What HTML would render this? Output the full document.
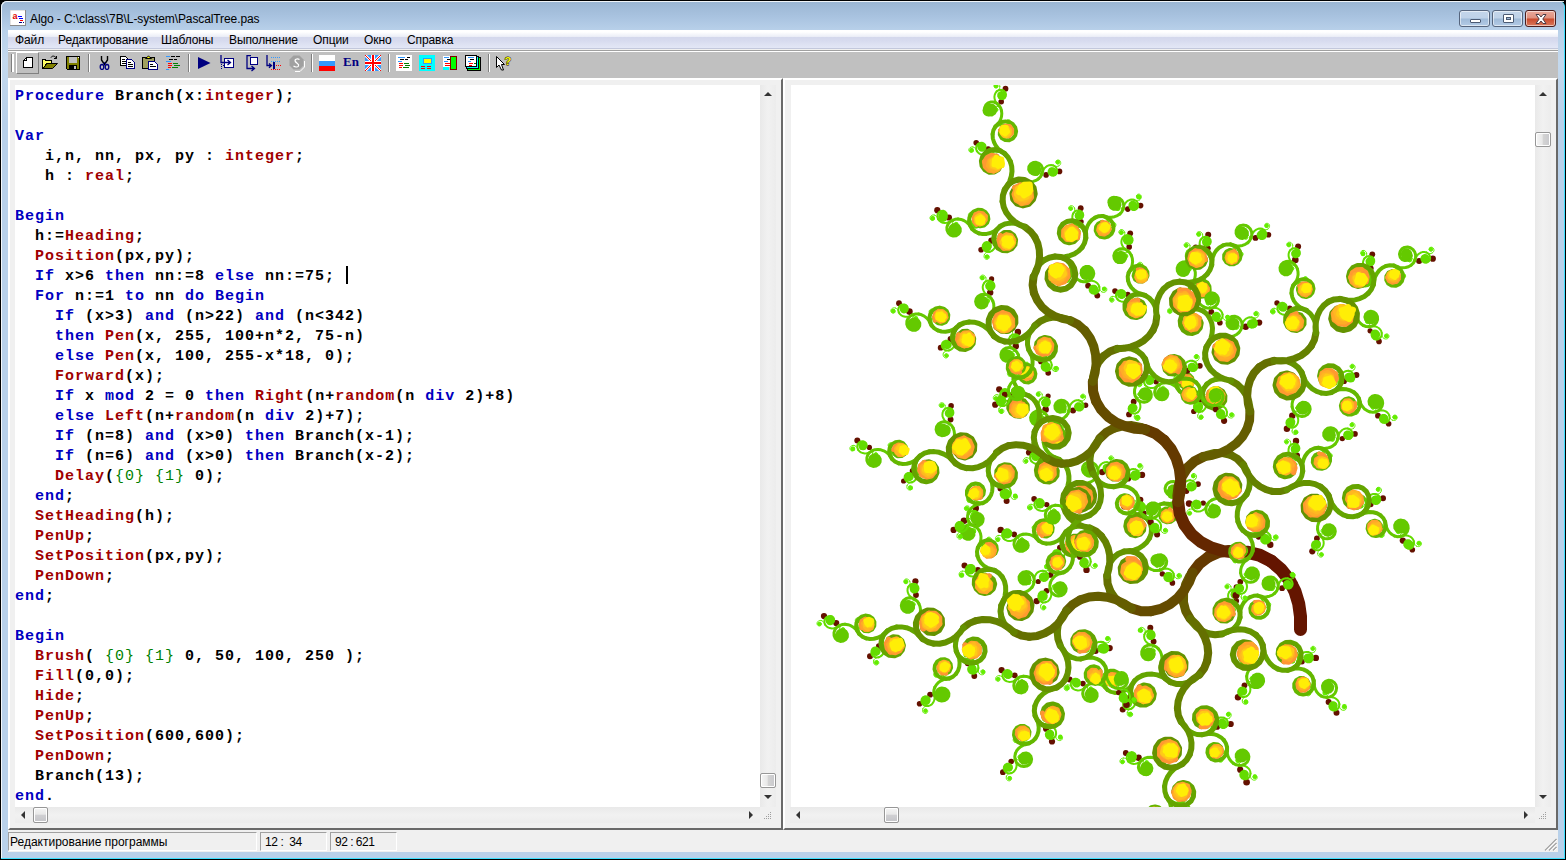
<!DOCTYPE html>
<html lang="ru"><head><meta charset="utf-8"><title>Algo</title>
<style>
html,body{margin:0;padding:0}
body{width:1566px;height:860px;overflow:hidden;background:#000;position:relative;font-family:"Liberation Sans",sans-serif;font-size:12px;color:#000}
.abs,#win *{position:absolute;box-sizing:border-box}
#win{position:absolute;left:0;top:0;width:1566px;height:860px;overflow:hidden}
#frame{left:1px;top:1px;width:1564px;height:858px;background:#b9d1ea;border-radius:6px 6px 0 0;border-right:1px solid #3ee0ff;border-bottom:1px solid #3ee0ff}
#frame:before{content:"";position:absolute;left:0;top:0;right:0;height:120px;border-radius:6px 6px 0 0;background:linear-gradient(#9ab5d2 0,#a9c3e0 16px,#b9d1ea 30px,#c4d9ee 60px,#b9d1ea 120px)}
#hl{left:1px;top:1px;width:1563px;height:857px;border-left:1px solid #fff;border-top:1px solid #fff;border-radius:6px 0 0 0;opacity:.85}
#title{left:30px;top:10px;height:18px;line-height:18px;font-size:12px;white-space:nowrap;letter-spacing:-.1px}
#client{left:8px;top:30px;width:1550px;height:822px;background:#f0f0f0}
#menu{left:0;top:0;width:1550px;height:20px;background:linear-gradient(#fff 0,#fff 2px,#e9ecf6 7px,#d4d8ec 7px,#d6daee 10px,#e3e7f6 18px,#c3c8dc 18px,#c3c8dc 19px,#f0f0f0 19px)}
#menu span{top:0;height:20px;line-height:20px;white-space:nowrap;letter-spacing:-.1px}
#tb{left:0;top:20px;width:1550px;height:28px;background:#c0c0c0;border-top:1px solid #a0a0a0;box-shadow:inset 0 1px 0 #fff}
.pane{background:#f0f0f0;border:2px solid;border-color:#fff #696969 #696969 #fff}
.pane:after{content:"";position:absolute;right:-2px;bottom:-2px;top:-2px;width:1px}
#lp{left:0;top:48px;width:775px;height:752px}
#rp{left:775px;top:48px;width:775px;height:752px}
.ed{left:5px;top:5px;width:745px;height:722px;background:#fff;overflow:hidden}
.vs{left:750px;top:5px;width:16px;height:722px;background:linear-gradient(to right,#e9e9e9,#f1f1f1 8px,#ececec)}
.hs{left:5px;top:727px;width:745px;height:16px;background:linear-gradient(#e9e9e9,#f1f1f1 8px,#ececec)}
.thumb{border:1px solid #979797;border-radius:2px;background:linear-gradient(to right,#f5f5f5,#e8e8e8 45%,#d4d4d4 50%,#c8c8cc);box-shadow:inset 0 0 0 1px #fff}
.thumbh{border:1px solid #979797;border-radius:2px;background:linear-gradient(#f5f5f5,#e8e8e8 45%,#d0d0d3 50%,#c4c4c8);box-shadow:inset 0 0 0 1px #fff}
.ar{width:0;height:0;border:4px solid transparent}
#code{left:0;top:2px;width:745px;font-family:"Liberation Mono",monospace;font-weight:bold;font-size:15px;letter-spacing:1px;white-space:pre;color:#000}
#code .ln{position:static;height:20px;line-height:20px}
#code b{position:static;color:#0000c0;font-weight:bold}
#code u{position:static;color:#a00000;text-decoration:none}
#code i{position:static;color:#008000;font-style:normal;font-weight:normal}
#caret{left:331px;top:181px;width:2px;height:18px;background:#000}
.tree{left:-1px;top:0}
#sb{left:0;top:800px;width:1550px;height:22px;background:#f0f0f0}
.sp{top:2px;height:19px;border:1px solid;border-color:#a0a0a0 #fff #fff #a0a0a0;line-height:19px;white-space:nowrap;overflow:hidden}
.cb{top:10px;width:31px;height:17px;border:1px solid #56657d;border-radius:3px;box-shadow:inset 0 0 0 1px rgba(255,255,255,.55);background:linear-gradient(#c3d5ea 0,#bfd2e8 48%,#9fbad8 52%,#b3cbe6 100%)}
#bx{border-color:#4a1d1d;background:linear-gradient(#e9a99b 0,#df8f7d 48%,#c94a2c 52%,#d9785c 100%)}
.sep{top:4px;width:2px;height:20px;border-left:1px solid #808080;border-right:1px solid #fff}
.ic{top:5px;width:16px;height:16px}
</style></head><body>
<div id="win">
<div id="frame"></div><div id="hl"></div>
<svg class="abs" style="left:10px;top:10px" width="16" height="16" viewBox="0 0 16 16"><rect x="0" y="0" width="16" height="16" fill="#fff" stroke="#c8c8c8"/><path d="M0 15.5H16M15.5 0V16" stroke="#8a8a8a"/><text x="2.5" y="8.5" font-family="Liberation Sans,sans-serif" font-size="9" font-weight="bold" fill="#e00000">a</text><path d="M8 6.5h4M9 8.5h4M10 10.5h3" stroke="#0000ff"/><path d="M10 10.5h3" stroke="#f00"/><path d="M9 12.5h3M13 12.5h1" stroke="#000080"/></svg>
<div id="title">Algo - C:\class\7B\L-system\PascalTree.pas</div>
<div class="cb" style="left:1459px"><div style="left:10px;top:8px;width:11px;height:4px;background:#fff;border:1px solid #4b5a73;border-radius:1px"></div></div>
<div class="cb" style="left:1492px"><div style="left:10px;top:3px;width:11px;height:9px;background:#fff;border:1px solid #4b5a73;border-radius:1px"></div><div style="left:13px;top:6px;width:5px;height:3px;background:#9db7d6;border:1px solid #4b5a73"></div></div>
<div class="cb" id="bx" style="left:1525px"><svg style="left:8px;top:2px" width="14" height="12" viewBox="0 0 14 12"><path d="M2 1.5L5 1.5L7 4L9 1.5L12 1.5L8.8 6L12 10.5L9 10.5L7 8L5 10.5L2 10.5L5.2 6Z" fill="#fff" stroke="#4b3b45" stroke-width="1"/></svg></div>
<div id="client">
 <div id="menu"><span style="left:7px">Файл</span><span style="left:50px">Редактирование</span><span style="left:153px">Шаблоны</span><span style="left:221px">Выполнение</span><span style="left:305px">Опции</span><span style="left:356px">Окно</span><span style="left:399px">Справка</span></div>
 <div id="tb"><div style="left:3px;top:3px;width:3px;height:18px;border-left:1px solid #808080;background:#fff"></div>
<div style="left:8px;top:1px;width:23px;height:22px;border:1px solid;border-color:#fff #808080 #808080 #fff"></div>
<svg style="left:15px;top:6px" width="10" height="11" viewBox="0 0 10 11" shape-rendering="crispEdges" ><path d="M3.5 .5H9.5V10.5H.5V3.5Z" fill="#fff" stroke="#000"/><path d="M.5 3.5H3.5V.5" fill="none" stroke="#000"/></svg>
<svg style="left:34px;top:4px" width="16" height="15" viewBox="0 0 16 15" shape-rendering="crispEdges" ><path d="M9 2.5C10 .5 13 .5 14.5 3.5M14.5 3.5V1M14.5 3.5H12" fill="none" stroke="#000" shape-rendering="auto"/><path d="M.5 13.5V4.5H3L4 5.500H9.500V8.500H5L.5 13.500Z" fill="#ffff66" stroke="#000"/><path d="M1 13.500L5 8.500H15.500L10.500 13.500Z" fill="#808000" stroke="#000" shape-rendering="auto"/></svg>
<svg style="left:58px;top:5px" width="14" height="14" viewBox="0 0 14 14" shape-rendering="crispEdges" ><path d="M.5 .5H13.5V13.5H1.5L.5 12.5Z" fill="#808000" stroke="#000"/><rect x="3" y="1" width="8" height="6" fill="#c0c0c0"/><rect x="3" y="9" width="8" height="4" fill="#000"/><rect x="8" y="10" width="2" height="3" fill="#c0c0c0"/><rect x="12" y="1" width="1" height="1" fill="#fff"/></svg>
<div style="left:80px;top:3px;width:2px;height:18px;background:#fff;border-left:1px solid #808080"></div>
<svg style="left:91px;top:5px" width="11" height="14" viewBox="0 0 11 14" shape-rendering="crispEdges" ><path d="M2.5 0V4L5.5 8.5L8.5 4V0" fill="none" stroke="#000" stroke-width="1.4" shape-rendering="auto"/><ellipse cx="3" cy="11" rx="1.8" ry="2.5" fill="none" stroke="#000080" stroke-width="1.3" shape-rendering="auto"/><ellipse cx="8" cy="11" rx="1.8" ry="2.5" fill="none" stroke="#000080" stroke-width="1.3" shape-rendering="auto"/><path d="M4 8L5.5 6.5L7 8" fill="none" stroke="#000080" shape-rendering="auto"/></svg>
<svg style="left:112px;top:5px" width="16" height="14" viewBox="0 0 16 14" shape-rendering="crispEdges" ><g><path d="M.5 .5H5.5L8.5 3.5V9.5H.5Z" fill="#fff" stroke="#000"/><path d="M2 3.5H5M2 5.5H7M2 7.5H7" stroke="#000"/></g><g transform="translate(6,3)"><path d="M.5 .5H5.5L8.5 3.5V9.5H.5Z" fill="#fff" stroke="#000080"/><path d="M2 3.5H5M2 5.5H7M2 7.5H7" stroke="#000"/></g></svg>
<svg style="left:134px;top:4px" width="17" height="16" viewBox="0 0 17 16" shape-rendering="crispEdges" ><rect x=".5" y="2.5" width="12" height="11" fill="#a0a060" stroke="#000"/><path d="M3.5 3.5V2.5H5L6.5 .8L8 2.5H9.5V3.5Z" fill="#ffff00" stroke="#000" shape-rendering="auto"/><g transform="translate(6,6)"><path d="M.5 .5H6.5L9.5 3.5V8.5H.5Z" fill="#fff" stroke="#000080"/><path d="M2 3.5H5M2 5.5H8" stroke="#000"/></g></svg>
<svg style="left:158px;top:5px" width="15" height="14" viewBox="0 0 15 14" shape-rendering="crispEdges" ><path d="M0 .5H4M0 5.5H5M0 13.5H3" stroke="#3399ff"/><path d="M5 .5H9M10 .5H14M3 3.5H7M8 3.5H11" stroke="#000"/><path d="M2 7.5H6M2 9.5H6M2 11.5H5" stroke="#f00"/><path d="M7 7.5H12M8 9.5H14M6 11.5H12" stroke="#008000"/></svg>
<div style="left:180px;top:3px;width:2px;height:18px;background:#fff;border-left:1px solid #808080"></div>
<svg style="left:190px;top:6px" width="13" height="12" viewBox="0 0 13 12" shape-rendering="crispEdges" ><path d="M0 0L12.5 6L0 12Z" fill="#000080" shape-rendering="auto"/></svg>
<svg style="left:212px;top:4px" width="15" height="16" viewBox="0 0 15 16" shape-rendering="crispEdges" ><rect x="4.5" y="3.5" width="9" height="9" fill="#fff" stroke="#000080"/><path d="M1 0V7.5H10M7.5 5L10.5 7.5L7.5 10" fill="none" stroke="#000080" stroke-width="1.3" shape-rendering="auto"/><path d="M1 9.5h1M1 11.5h1M1 13.5h1M3 10.5h1" stroke="#000080"/></svg>
<svg style="left:238px;top:4px" width="13" height="17" viewBox="0 0 13 17" shape-rendering="crispEdges" ><rect x="4.500" y="2.500" width="7" height="7" fill="#fff" stroke="#000080"/><path d="M5 .7H1V13.5H8M5.5 11L8.5 13.5L5.500 16" fill="none" stroke="#000080" stroke-width="1.3" shape-rendering="auto"/></svg>
<svg style="left:258px;top:4px" width="15" height="16" viewBox="0 0 15 16" shape-rendering="crispEdges" ><path d="M1 0V10.5H5M3 8.5L5.5 10.5L3 12.800" fill="none" stroke="#000080" stroke-width="1.3" shape-rendering="auto"/><rect x="7" y="7" width="2" height="7" fill="#000080"/><path d="M5 2.500h1M7 2.500h1M9 2.500h1M11 2.500h1M13 2.500h1M5 6.500h1M7 6.500h1M9 6.500h1M11 6.500h1M13 6.500h1" stroke="#3399ff"/><path d="M10 10.500h1M12 10.500h1M14 10.500h1M5 14.500h1M7 14.500h1M9 14.500h1M11 14.500h1M13 14.500h1" stroke="#f00"/></svg>
<svg style="left:281px;top:4px" width="16" height="17" viewBox="0 0 16 17" shape-rendering="crispEdges" ><path d="M6 16.500H11L15.500 12V6" fill="none" stroke="#fff" shape-rendering="auto"/><path d="M4.500 .5H10.500L14.500 4.500V10.500L10.500 14.500H4.500L.5 10.500V4.500Z" fill="#a0a0a0" shape-rendering="auto"/><path d="M10.5 4.500C8 3 5 4.500 6.500 6.800C8 8.500 10.500 9 9.500 11C8.500 12.500 6 12 4.500 11" fill="none" stroke="#fff" stroke-width="1.3" shape-rendering="auto"/></svg>
<div style="left:303px;top:3px;width:2px;height:18px;background:#fff;border-left:1px solid #808080"></div>
<svg style="left:311px;top:4px" width="16" height="16" viewBox="0 0 16 16" shape-rendering="crispEdges" ><rect width="16" height="6" fill="#fff"/><rect y="5.500" width="16" height="6" fill="#3399ff"/><rect y="11" width="16" height="5" fill="#f00"/></svg>
<div style="left:335px;top:3px;font-family:'Liberation Serif',serif;font-weight:bold;font-size:13px;line-height:16px;color:#000080;letter-spacing:0">En</div>
<svg style="left:357px;top:4px" width="16" height="16" viewBox="0 0 16 16" shape-rendering="crispEdges" ><rect width="16" height="16" fill="#3399ff"/><path d="M0 0L16 16M16 0L0 16" stroke="#fff" stroke-width="2.600" shape-rendering="auto"/><path d="M0 0L16 16M16 0L0 16" stroke="#f00" stroke-width="1" shape-rendering="auto"/><path d="M8 0V16M0 8H16" stroke="#fff" stroke-width="4"/><path d="M8 0V16M0 8H16" stroke="#f00" stroke-width="2"/></svg>
<div style="left:380px;top:3px;width:2px;height:18px;background:#fff;border-left:1px solid #808080"></div>
<svg style="left:388px;top:4px" width="16" height="16" viewBox="0 0 16 16" shape-rendering="crispEdges" ><rect width="16" height="16" fill="#fff"/><g transform="translate(2,2)"><path d="M0 .5H7M0 4.500H4" stroke="#3399ff"/><path d="M9 .5H12M2 2.500H6M7 2.500H10" stroke="#000"/><path d="M1 6.500H5M1 8.500H5M1 10.500H4" stroke="#f00"/><path d="M6 6.500H11M7 8.500H12M5 10.500H11" stroke="#008000"/></g></svg>
<svg style="left:411px;top:4px" width="16" height="16" viewBox="0 0 16 16" shape-rendering="crispEdges" ><rect width="16" height="16" fill="#00ffff"/><rect x="4.500" y="3.500" width="8" height="5" fill="#ffff00" stroke="#3399ff"/><path d="M2 11.500H6M8 11.500H12M2 13.500H6M8 13.500H12" stroke="#f00"/></svg>
<svg style="left:435px;top:5px" width="15" height="14" viewBox="0 0 15 14" shape-rendering="crispEdges" ><rect x="0" y="0" width="7" height="11" fill="#fff"/><path d="M1 1.500H6M1 5.500H5" stroke="#3399ff"/><path d="M4 3.500H7" stroke="#000"/><path d="M2 7.500H7M2 9.500H7" stroke="#f00"/><rect x="0" y="11" width="6" height="3" fill="#00ffff"/><rect x="7.500" y=".5" width="6" height="13" fill="#00ff00" stroke="#800000"/></svg>
<svg style="left:457px;top:4px" width="16" height="16" viewBox="0 0 16 16" shape-rendering="crispEdges" ><rect x="2.500" y="2.500" width="13" height="13" fill="#00ff00" stroke="#000"/><rect x="1.500" y="1.500" width="12" height="12" fill="#00ffff" stroke="#000"/><rect x=".5" y=".5" width="11" height="11" fill="#fff" stroke="#000"/><path d="M3 2.500H9M3 6.500H6" stroke="#3399ff"/><path d="M5 4.500H9" stroke="#000"/><path d="M4 8.500H8M4 10.500H7" stroke="#f00"/><path d="M9 8.500H11" stroke="#008000"/></svg>
<div style="left:480px;top:3px;width:2px;height:18px;background:#fff;border-left:1px solid #808080"></div>
<svg style="left:488px;top:5px" width="16" height="15" viewBox="0 0 16 15" shape-rendering="crispEdges" ><path d="M.5 .5V11.500L3 9L5.500 14H7.500L5.500 8.500H8.500Z" fill="#fff" stroke="#000" shape-rendering="auto"/><text x="8.500" y="9" font-family="Liberation Sans,sans-serif" font-weight="bold" font-size="11" fill="#ffff00" stroke="#000" stroke-width=".9" paint-order="stroke" shape-rendering="auto">?</text></svg></div>
 <div class="pane" id="lp">
  <div class="ed"><div id="code"><div class="ln"><b>Procedure</b> Branch(x:<u>integer</u>);</div><div class="ln">&nbsp;</div><div class="ln"><b>Var</b></div><div class="ln">   i,n, nn, px, py : <u>integer</u>;</div><div class="ln">   h : <u>real</u>;</div><div class="ln">&nbsp;</div><div class="ln"><b>Begin</b></div><div class="ln">  h:=<u>Heading</u>;</div><div class="ln">  <u>Position</u>(px,py);</div><div class="ln">  <b>If</b> x&gt;6 <b>then</b> nn:=8 <b>else</b> nn:=75; </div><div class="ln">  <b>For</b> n:=1 <b>to</b> nn <b>do</b> <b>Begin</b></div><div class="ln">    <b>If</b> (x&gt;3) <b>and</b> (n&gt;22) <b>and</b> (n&lt;342)</div><div class="ln">    <b>then</b> <u>Pen</u>(x, 255, 100+n*2, 75-n)</div><div class="ln">    <b>else</b> <u>Pen</u>(x, 100, 255-x*18, 0);</div><div class="ln">    <u>Forward</u>(x);</div><div class="ln">    <b>If</b> x <b>mod</b> 2 = 0 <b>then</b> <u>Right</u>(n+<u>random</u>(n <b>div</b> 2)+8)</div><div class="ln">    <b>else</b> <u>Left</u>(n+<u>random</u>(n <b>div</b> 2)+7);</div><div class="ln">    <b>If</b> (n=8) <b>and</b> (x&gt;0) <b>then</b> Branch(x-1);</div><div class="ln">    <b>If</b> (n=6) <b>and</b> (x&gt;0) <b>then</b> Branch(x-2);</div><div class="ln">    <u>Delay</u>(<i>{0}</i> <i>{1}</i> 0);</div><div class="ln">  <b>end</b>;</div><div class="ln">  <u>SetHeading</u>(h);</div><div class="ln">  <u>PenUp</u>;</div><div class="ln">  <u>SetPosition</u>(px,py);</div><div class="ln">  <u>PenDown</u>;</div><div class="ln"><b>end</b>;</div><div class="ln">&nbsp;</div><div class="ln"><b>Begin</b></div><div class="ln">  <u>Brush</u>( <i>{0}</i> <i>{1}</i> 0, 50, 100, 250 );</div><div class="ln">  <u>Fill</u>(0,0);</div><div class="ln">  <u>Hide</u>;</div><div class="ln">  <u>PenUp</u>;</div><div class="ln">  <u>SetPosition</u>(600,600);</div><div class="ln">  <u>PenDown</u>;</div><div class="ln">  Branch(13);</div><div class="ln"><b>end</b>.</div></div><div id="caret"></div></div>
  <div class="vs"><div class="ar" style="left:4px;top:7px;border-bottom:4px solid #333;border-top:0"></div><div class="thumb" style="left:0;top:688px;width:16px;height:15px"></div><div class="ar" style="left:4px;top:710px;border-top:4px solid #333;border-bottom:0"></div></div>
  <div class="hs"><div class="ar" style="left:6px;top:4px;border-right:4px solid #333;border-left:0"></div><div class="thumbh" style="left:18px;top:0;width:15px;height:16px"></div><div class="ar" style="left:734px;top:4px;border-left:4px solid #333;border-right:0"></div></div>
  <svg style="left:753px;top:731px" width="9" height="9" viewBox="0 0 9 9" shape-rendering="crispEdges"><path d="M7 1.500h1M5 3.500h1M7 3.500h1M3 5.500h1M5 5.500h1M7 5.500h1M1 7.500h1M3 7.500h1M5 7.500h1M7 7.500h1" stroke="#a0a0a0"/></svg>
 </div>
 <div class="pane" id="rp">
  <div class="ed" style="border-left:1px solid #f0f0f0"><svg class="tree" width="745" height="722" viewBox="790 85 745 722"><style>.tree path{fill:none;stroke-linecap:round;stroke-linejoin:round}.d{fill:#641100;stroke:none}.f1{fill:#64ed00;stroke:none}.f2{fill:#64db00;stroke:none}.f3{fill:#64c900;stroke:none}.g1{stroke:#64ed00;stroke-width:1}.g10{stroke:#644b00;stroke-width:10}.g11{stroke:#643900;stroke-width:11}.g12{stroke:#642700;stroke-width:12}.g13{stroke:#641500;stroke-width:13}.g2{stroke:#64db00;stroke-width:2}.g3{stroke:#64c900;stroke-width:3}.g4{stroke:#64b700;stroke-width:4}.g5{stroke:#64a500;stroke-width:5}.g6{stroke:#649300;stroke-width:6}.g7{stroke:#648100;stroke-width:7}.g8{stroke:#646f00;stroke-width:8}.g9{stroke:#645d00;stroke-width:9}.w4{stroke-width:4}.w5{stroke-width:5}.w6{stroke-width:6}.y0{stroke:#ff9433}.y1{stroke:#ff9a30}.y2{stroke:#ffa22c}.y3{stroke:#ffac27}.y4{stroke:#ffb821}.y5{stroke:#ffca18}.y6{stroke:#ffee06}</style>
<path class="g13" d="M1300.5 629.5l0-13-1.8-12.9-3.8-12.4-5.9-11.6-8-10.2-10-8.4"/>
<path class="g11" d="M1271 561l-9.8-5-10.4-3.6-10.8-1.9-11 0-10.8 2.2-10.1 4.4"/>
<path class="g9" d="M1208.1 557.1l-7.1 5.5-6.3 6.5-5.2 7.3-3.9 8.1-2 8.8-0.1 9"/>
<path class="g7" d="M1183.5 602.3l1.7 6.8 2.7 6.4 3.6 6 4.6 5.3 5.6 4.2 6.4 2.8"/>
<path class="g5" d="M1208.1 633.8l5 0.7 5 0.1 4.9-0.7 4.8-1.6 4.3-2.5 3.7-3.4"/>
<path class="g3" d="M1235.8 626.4l1.6-2.5 1.3-2.7 0.9-2.9 0.3-2.9-0.3-3-0.9-2.9"/>
<path class="g1" d="M1238.7 609.5l-0.5-0.8-0.7-0.8-0.7-0.7-0.9-0.5-0.9-0.3-1-0.2"/>
<circle class="d" cx="1236.2" cy="600.8" r="2.9"/>
<path class="g1" d="M1234 606.2l-1 0.2-0.9 0.3-0.8 0.7-0.6 0.8-0.2 0.9 0 1 0.5 0.9 0.7 0.7 1 0.3 1-0.1 0.8-0.6 0.5-0.9 0-1-0.5-0.8-0.9-0.5-1 0.1-0.8 0.6-0.3 0.9 0.3 1 0.9 0.6"/>
<circle class="f1" cx="1233.4" cy="609.4" r="2.5"/>
<path class="g3" d="M1238.7 609.5l-1.6-2.5-2.2-2.1"/>
<path class="g2" d="M1234.9 604.9l-1.7-0.9-1.7-1.2-1.4-1.4-1.1-1.7-0.7-1.8-0.2-2 0.2-2 0.9-1.8"/>
<path class="g1" d="M1229.2 592.1l0.6-0.8 0.6-0.8 0.4-0.9 0.2-1 0.1-1-0.2-1"/>
<circle class="d" cx="1236.5" cy="587.2" r="2.9"/>
<path class="g1" d="M1230.9 586.6l-0.4-0.9-0.6-0.8-0.9-0.6-0.9-0.3-1 0.1-0.9 0.3-0.8 0.7-0.4 0.9 0 1 0.4 1 0.8 0.6 1 0.2 1-0.3 0.6-0.8 0.2-1-0.4-0.9-0.8-0.5-1-0.1-0.8 0.6-0.3 1"/>
<circle class="f1" cx="1227.1" cy="586.8" r="2"/>
<path class="g2" d="M1229.2 592.1l1.3-1.5 1.7-1 2-0.4 1.9 0.4 1.7 1.1 1.1 1.6 0.3 2-0.6 1.9-1.4 1.4-2 0.6-1.9-0.5-1.4-1.4-0.5-1.9 0.7-1.9 1.7-1.1 2-0.1 1.6 1.2 0.5 1.9-1.1 1.7-1.9 0.6-1.8-0.8-0.9-1.8"/>
<circle class="f2" cx="1235" cy="593.3" r="4"/>
<path class="g3" d="M1234.9 604.9l-2.6-1.3-3-0.5-3 0.5-2.6 1.5-1.8 2.3-0.9 2.9 0.4 3 1.6 2.5 2.6 1.5 3 0.2 2.7-1.3 1.7-2.5 0.2-3-1.5-2.6-2.7-1.3-2.9 0.6-2.1 2.3-0.1 3 1.8 2.4 3 0.5 2.4-1.7 0.3-3-2-2.3-3 0-2 2.3 0.1 3"/>
<circle class="f3" cx="1227.5" cy="612.4" r="5.1"/>
<path class="g5" d="M1235.8 626.4l2.7-4.1 1.5-4.8"/>
<path class="g4" d="M1240 617.5l0-4 0.7-4 1.2-3.7 2-3.5 2.7-3 3.4-2.2"/>
<path class="g2" d="M1250 597.1l1.8-0.7 2-0.3 2 0 2 0.4 1.8 0.8 1.6 1.2 1.2 1.6 0.8 1.8"/>
<path class="g1" d="M1263.2 601.9l0.1 1 0.2 1 0.3 0.9 0.6 0.9 0.6 0.7 0.9 0.6"/>
<circle class="d" cx="1261.5" cy="610.4" r="2.8"/>
<path class="g1" d="M1265.9 607l0.9 0.3 1 0.1 1-0.2 0.9-0.4 0.6-0.8 0.4-0.9 0-1-0.3-0.9-0.7-0.7-1-0.4-1 0.2-0.8 0.5-0.4 0.9 0 1 0.6 0.8 0.9 0.4 1-0.2 0.6-0.8 0.1-1-0.5-0.8"/>
<circle class="f1" cx="1268.2" cy="604.1" r="1.9"/>
<path class="g2" d="M1263.2 601.9l0.1 2-0.4 2-1.2 1.6-1.6 1.2-2 0.4-1.9-0.4-1.6-1.2-1-1.7 0-2 1-1.8 1.6-1.1 2 0 1.8 1.1 0.8 1.8-0.4 1.9-1.5 1.3-2 0.1-1.7-1.1-0.4-1.9 0.7-1.9 1.9-0.6 1.8 0.9"/>
<circle class="f2" cx="1257.7" cy="604" r="3.8"/>
<path class="g4" d="M1250 597.1l3.7-1.3 4-0.2"/>
<path class="g3" d="M1257.7 595.6l2.9 0.9 3 0.4 3-0.1 2.9-0.6 2.8-1.1 2.4-1.8"/>
<path class="g1" d="M1274.7 593.3l0.7-0.7 0.5-0.9 0.4-0.9 0.2-1 0-1-0.2-1"/>
<circle class="d" cx="1282.1" cy="588.2" r="2.9"/>
<path class="g1" d="M1276.3 587.8l-0.4-0.9-0.6-0.7-0.9-0.6-0.9-0.3-1 0.1-1 0.4-0.7 0.7-0.4 0.9 0.1 1 0.4 0.9 0.8 0.6 1 0.2 0.9-0.3 0.7-0.8 0.2-1-0.4-0.9-0.9-0.5-1-0.1-0.8 0.6-0.4 0.9"/>
<circle class="f1" cx="1271.8" cy="588.5" r="2.5"/>
<path class="g3" d="M1274.7 593.3l2-2.3 1.2-2.7"/>
<path class="g2" d="M1277.9 588.3l0.2-2 0.5-1.9 0.9-1.9 1.1-1.6 1.6-1.3 1.7-0.9 2-0.5 2 0.2"/>
<path class="g1" d="M1287.9 578.4l0.9 0.3 1 0.2 1 0.1 1-0.1 0.9-0.3 0.9-0.5"/>
<circle class="d" cx="1294.9" cy="583.5" r="2.9"/>
<path class="g1" d="M1293.6 578.1l0.7-0.7 0.5-0.9 0.3-0.9-0.1-1-0.4-1-0.6-0.7-0.9-0.5-1 0-1 0.3-0.7 0.7-0.3 1 0.2 1 0.6 0.8 0.9 0.3 1-0.1 0.7-0.7 0.3-1-0.4-0.9-0.9-0.6-1 0.2"/>
<circle class="f1" cx="1292.7" cy="575.1" r="2.6"/>
<path class="g2" d="M1287.9 578.4l1.8 0.7 1.6 1.2 1 1.7 0.4 2-0.5 2-1.2 1.6-1.7 0.9-2 0.1-1.8-0.8-1.2-1.6-0.3-2 0.8-1.8 1.7-1.1 2 0 1.7 1.2 0.5 1.9-0.8 1.8-1.7 1.1-2-0.4-1.3-1.5 0.3-2 1.6-1.1"/>
<circle class="f2" cx="1287.4" cy="584.2" r="3.9"/>
<path class="g3" d="M1277.9 588.3l0.3-3-0.6-2.9-1.5-2.6-2.3-2-2.9-0.9-3 0.3-2.6 1.4-1.8 2.4-0.5 3 0.9 2.8 2.2 2.1 3 0.6 2.8-0.9 1.9-2.4 0.2-3-1.3-2.6-2.6-1.5-3 0.3-2.4 1.8-0.8 2.9 1.2 2.8 2.8 1.1 2.6-1.4 1.1-2.8-1.4-2.7-3-0.4"/>
<circle class="f3" cx="1267.6" cy="582.8" r="5.7"/>
<path class="g4" d="M1257.7 595.6l3.9 1.1 3.3 2.2 2.5 3.2 1.3 3.7-0.1 4-1.5 3.7-2.9 2.8-3.7 1.5-4-0.3-3.5-1.9-2.2-3.3-0.5-4 1.5-3.7 3.2-2.5"/>
<path class="y0 w4" d="M1255 602.1l4-0.4 3.6 1.7 1.5 3.7"/>
<path class="y1 w4" d="M1264.1 607.1l-1.1 3.9-3.2 2.4-4 0"/>
<path class="y2 w4" d="M1255.8 613.4l-2.7-3 0.6-4 3.4-2 4 0.6"/>
<path class="y3 w4" d="M1261.1 605l1.8 3.6-1.9 3.5-3.9 0.6-2.6-3 0.7-3.9"/>
<path class="y4 w4" d="M1255.2 605.8l3.2-2.3 3.9 1 1.3 3.8-2.4 3.2-4 0-2.2-3.4 2.4-3.3"/>
<path class="y5 w4" d="M1257.4 604.8l4 0.2 0.9 3.8-3.2 2.4-3.6-1.8 0.6-3.9 3.7-1.6 2.9 2.7-2.4 3.2-3.9-0.8 0.2-4"/>
<path class="y6 w4" d="M1256.6 605l3.9-0.8 1.3 3.8-3.5 1.8-2.7-2.9 2.9-2.8 3.6 1.7-0.7 4-3.9 0.6-1.1-3.9 3.9-0.4 1.3 3.8-3.4 2.1-2.3-3.3 3.7-1.6 1.1 3.9-4 0.4-0.6-4 4 0.1 0 4-3.9-0.6 0.2-4"/>
<path class="g5" d="M1240 617.5l0-5-1.5-4.8-3-4-4.2-2.6-4.9-1-4.9 1.1-4 2.9-2.4 4.5-0.1 5 2.3 4.4 4.2 2.8 5 0.2 4.3-2.4 2.3-4.5"/>
<path class="y0 w5" d="M1233.1 614.1l-0.6-4.9-3.1-3.9-4.9-1.4"/>
<path class="y1 w5" d="M1224.5 603.9l-4.7 1.8-2.9 4-0.1 5"/>
<path class="y2 w5" d="M1216.8 614.7l2.9 4.2 4.9 0.7 4.4-2.4 1.8-4.7"/>
<path class="y3 w5" d="M1230.8 612.5l-1.7-4.7-4.8-1.4-3.9 3.1-0.8 4.9 3.7 3.4"/>
<path class="y4 w5" d="M1223.3 617.8l4.8-1.7 1.1-4.8-3.3-3.8-5 0.3-3.1 3.9 1.7 4.7 4.9 1"/>
<path class="y5 w5" d="M1224.4 617.4l3.7-3.4-2.1-4.5-5-0.5-2 4.6 3.4 3.6 4.5-2.1 0.5-5-4.7-1.5-2.7 4.2 3.7 3.4"/>
<path class="y6 w5" d="M1223.7 616.2l3.6-3.5-2.5-4.3-4.8 1.6-0.5 4.9 5 0.5 1.7-4.7-4.3-2.7-2.7 4.2 3.2 3.8 4.6-1.9-0.9-4.9-5 0.1 1.2 4.8 4.7-1.6-2.3-4.4-3.8 3.3 3 4 4.2-2.8-2.9-4.1-3.4 3.6 3.1 3.9"/>
<path class="g7" d="M1208.1 633.8l7 1 6.9-0.8"/>
<path class="g6" d="M1222 634l5.5-2.5 5.7-1.6 6-0.6 6 0.5 5.7 1.9 5.1 3.2"/>
<path class="g4" d="M1256 634.9l2.7 3 2.2 3.3 1.5 3.7 0.9 3.9 0 4-1 3.9"/>
<path class="g2" d="M1262.3 656.7l-1 1.7-1.2 1.6-1.5 1.3-1.7 1.1-1.9 0.6-2 0.2-1.9-0.3-1.8-0.9"/>
<path class="g1" d="M1249.3 662l-0.8-0.7-0.8-0.6-0.9-0.4-0.9-0.3-1-0.1-1 0.1"/>
<circle class="d" cx="1244.9" cy="654.5" r="2.7"/>
<path class="g1" d="M1243.9 660l-0.9 0.4-0.9 0.6-0.6 0.8-0.3 0.9 0 1 0.3 1 0.7 0.7 0.9 0.5 1 0 0.9-0.4 0.7-0.7 0.2-1-0.3-1-0.7-0.7-1-0.2-0.9 0.4-0.6 0.8 0.1 1 0.6 0.7 0.9 0.3"/>
<circle class="f1" cx="1244.7" cy="664.1" r="2.6"/>
<path class="g2" d="M1249.3 662l-1.5-1.4-0.9-1.8-0.3-1.9 0.4-2 1.2-1.6 1.7-1.1 2-0.2 1.9 0.7 1.3 1.5 0.5 1.9-0.5 2-1.5 1.3-2 0.4-1.8-0.8-1.1-1.7 0.2-2 1.3-1.5 2-0.4 1.7 1 0.7 1.9-0.5 1.9-1.6 1.1"/>
<circle class="f2" cx="1251.2" cy="657.8" r="4.1"/>
<path class="g4" d="M1262.3 656.7l-1.9 3.5-2.8 2.8"/>
<path class="g3" d="M1257.6 663l-2.7 1.4-2.5 1.7-2.1 2.1-1.7 2.5-1.3 2.7-0.6 2.9"/>
<path class="g1" d="M1246.7 676.3l0.1 1 0.2 1 0.3 1 0.5 0.8 0.6 0.8 0.8 0.6"/>
<circle class="d" cx="1244.5" cy="685.3" r="2.9"/>
<path class="g1" d="M1249.2 681.5l1 0.4 1 0.1 0.9-0.2 0.9-0.4 0.7-0.7 0.5-0.9 0-1-0.3-1-0.7-0.7-0.9-0.4-1 0.1-0.9 0.6-0.5 0.8 0.1 1 0.5 0.9 0.9 0.4 1-0.2 0.7-0.7 0.2-1-0.5-0.8"/>
<circle class="f1" cx="1251.9" cy="678.5" r="2.2"/>
<path class="g3" d="M1246.7 676.3l0.2 3 0.9 2.9"/>
<path class="g2" d="M1247.8 682.2l1.1 1.7 0.8 1.8 0.6 1.9 0.1 2-0.3 2-0.7 1.8-1.2 1.6-1.6 1.2"/>
<path class="g1" d="M1246.6 696.2l-1 0.4-0.8 0.4-0.8 0.6-0.7 0.8-0.6 0.8-0.3 1"/>
<circle class="d" cx="1238" cy="697.3" r="3.2"/>
<path class="g1" d="M1242.4 700.2l-0.1 1 0.2 0.9 0.4 0.9 0.7 0.8 0.9 0.4 1 0.1 1-0.2 0.8-0.6 0.5-0.9 0-1-0.3-0.9-0.8-0.6-1-0.2-0.9 0.3-0.7 0.8-0.1 0.9 0.4 0.9 0.9 0.6 1-0.2 0.7-0.7"/>
<circle class="f1" cx="1245.9" cy="701.9" r="2.3"/>
<path class="g2" d="M1246.6 696.2l-1.9 0.7-2 0.1-1.9-0.7-1.5-1.3-1-1.7-0.1-2 0.7-1.9 1.5-1.4 1.9-0.5 1.9 0.4 1.5 1.4 0.6 1.9-0.6 1.9-1.5 1.3-2 0.2-1.7-1.1-0.8-1.8 0.5-1.9 1.6-1.2 2 0.1 1.6 1.3 0.3 2"/>
<circle class="f2" cx="1242.8" cy="691.1" r="4.2"/>
<path class="g3" d="M1247.8 682.2l1.6 2.5 2.4 1.8 2.8 1 3 0 2.8-1.2 2.1-2.1 1.1-2.8-0.3-3-1.5-2.6-2.6-1.5-3-0.1-2.6 1.4-1.5 2.6 0.1 3 1.8 2.4 2.8 1.1 3-0.5 2.1-2 0.2-3-1.7-2.5-2.9-0.9-2.7 1.3-1.2 2.8 1.2 2.7 2.9 0.9 2.4-1.8"/>
<circle class="f3" cx="1256.5" cy="681.4" r="6.2"/>
<path class="g4" d="M1257.6 663l-3.6 1.9-4 0.6-3.9-0.8-3.4-2.1-2.3-3.3-0.8-3.9 0.9-3.9 2.5-3.1 3.7-1.6 4 0.4 3.3 2.3 1.6 3.6-0.6 4-2.7 2.9"/>
<path class="y0 w4" d="M1252.3 660l-3.9 0.9-3.8-1.3-2-3.5"/>
<path class="y1 w4" d="M1242.6 656.1l0.8-3.9 3.1-2.5 4 0.2"/>
<path class="y2 w4" d="M1250.5 649.9l2.6 3 0.3 4-2.3 3.3-3.9 0.8"/>
<path class="y3 w4" d="M1247.2 661l-3.1-2.5-0.4-4 2.8-2.8 4 0.5 1.9 3.5"/>
<path class="y4 w4" d="M1252.4 655.7l-1.9 3.5-3.9 0.6-3.1-2.5-0.1-4 3.2-2.5 3.8 1.1 1.1 3.8"/>
<path class="y5 w4" d="M1251.5 655.7l-3.1 2.5-3.6-1.8-0.5-4 3.5-2 2.9 2.8-2 3.5-3.9-0.7-0.2-4 3.7-1.6 2.4 3.2"/>
<path class="y6 w4" d="M1250.7 653.6l-2.8 2.7-3.5-1.9 1.1-3.8 4 0 0.6 4-3.8 1.3-2.4-3.2 3-2.7 2.4 3.2-2.7 3-2.8-2.9 2.8-2.9 3.3 2.2-2.2 3.4-3.2-2.3 3.3-2.3 2.5 3.1-3 2.6-2.5-3.1 3.3-2.2 1.5 3.7"/>
<path class="g6" d="M1256 634.9l4 4.4 2.6 5.4"/>
<path class="g5" d="M1262.6 644.7l0.8 5 1.4 4.8 2.1 4.5 2.9 4.1 3.6 3.4 4.4 2.5"/>
<path class="g3" d="M1277.8 669l2.9 0.8 2.9 0.4 3-0.1 3-0.6 2.7-1.2 2.5-1.7"/>
<path class="g1" d="M1294.8 666.6l0.6-0.8 0.5-0.9 0.4-0.9 0.3-0.9 0-1-0.2-1"/>
<circle class="d" cx="1301.9" cy="661.6" r="2.9"/>
<path class="g1" d="M1296.4 661.1l-0.4-0.9-0.6-0.8-0.9-0.6-0.9-0.2-1 0-0.9 0.4-0.8 0.7-0.4 0.9 0 1 0.5 0.9 0.8 0.6 1 0.2 0.9-0.3 0.7-0.8 0.1-1-0.4-0.9-0.8-0.5-1-0.1-0.8 0.6-0.3 0.9"/>
<circle class="f1" cx="1292.9" cy="661" r="2.3"/>
<path class="g3" d="M1294.8 666.6l1.9-2.3 1.3-2.7"/>
<path class="g2" d="M1298 661.6l0.3-2 0.6-1.9 0.9-1.8 1.3-1.6 1.6-1.2 1.8-0.9 1.9-0.3 2 0.2"/>
<path class="g1" d="M1308.4 652.1l0.9 0.4 1 0.3 1 0.1 1-0.1 1-0.3 0.8-0.4"/>
<circle class="d" cx="1315.8" cy="657.9" r="3.2"/>
<path class="g1" d="M1314.1 652.1l0.8-0.7 0.5-0.8 0.3-1 0-1-0.3-0.9-0.7-0.8-0.8-0.5-1-0.1-1 0.3-0.7 0.7-0.4 0.9 0.2 1 0.5 0.8 0.9 0.4 1-0.1 0.8-0.6 0.3-1-0.3-0.9-0.9-0.6-0.9 0.2"/>
<circle class="f1" cx="1312.8" cy="648.8" r="2"/>
<path class="g2" d="M1308.4 652.1l1.9 0.8 1.5 1.3 0.9 1.8 0.2 2-0.5 1.9-1.2 1.6-1.8 0.8-2 0-1.8-0.9-1.1-1.6-0.2-2 0.9-1.8 1.7-1 2 0.1 1.6 1.2 0.5 1.9-0.6 1.9-1.7 1-2-0.2-1.4-1.4-0.2-2 1.1-1.7"/>
<circle class="f2" cx="1308.1" cy="657.6" r="4"/>
<path class="g3" d="M1298 661.6l0.4-3-0.4-3-1.4-2.6-2.2-2.1-2.8-1-3 0.1-2.7 1.3-1.9 2.3-0.7 2.9 0.8 2.9 2 2.2 2.9 0.8 2.9-0.8 2-2.2 0.5-2.9-1.4-2.7-2.7-1.4-2.9 0.7-1.5 2.5 0.7 3 2.6 1.5 2.9-0.8 1.8-2.3 0.1-3-2.2-2.1-3 0.5"/>
<circle class="f3" cx="1289.9" cy="654.9" r="5.8"/>
<path class="g5" d="M1277.8 669l4.8 1.3 5 0"/>
<path class="g4" d="M1287.6 670.3l3.8-1.2 4-0.6 4 0.1 3.9 0.8 3.6 1.7 3.1 2.5"/>
<path class="g2" d="M1310 673.6l1.2 1.6 0.9 1.8 0.6 1.9 0.2 2-0.2 2-0.7 1.9-1.1 1.6-1.6 1.3"/>
<path class="g1" d="M1309.3 687.7l-0.9 0.3-0.9 0.5-0.8 0.7-0.6 0.7-0.5 0.9-0.3 0.9"/>
<circle class="d" cx="1300.6" cy="688.8" r="3"/>
<path class="g1" d="M1305.3 691.7l-0.1 1 0.2 1 0.5 0.9 0.7 0.7 0.9 0.4 1 0.1 1-0.3 0.8-0.6 0.4-0.9 0.1-1-0.5-0.9-0.7-0.6-1-0.2-1 0.4-0.6 0.8-0.1 1 0.5 0.8 0.9 0.5 1-0.1 0.7-0.8"/>
<circle class="f1" cx="1308.9" cy="693.1" r="2.1"/>
<path class="g2" d="M1309.3 687.7l-1.8 0.7-2 0.1-2-0.6-1.5-1.2-1-1.7-0.2-2 0.6-1.9 1.4-1.4 1.9-0.6 2 0.3 1.5 1.4 0.6 1.9-0.5 1.9-1.5 1.3-1.9 0.3-1.7-1.1-0.6-2 0.8-1.8 1.7-1 1.9 0.4 1 1.7-0.6 1.9"/>
<circle class="f2" cx="1305.7" cy="684.3" r="4.8"/>
<path class="g4" d="M1310 673.6l2.4 3.2 1.3 3.8"/>
<path class="g3" d="M1313.7 680.6l0.2 3 0.5 2.9 1 2.9 1.4 2.6 2 2.3 2.4 1.7"/>
<path class="g1" d="M1321.2 696l1 0.4 0.9 0.2 1 0.1 1-0.1 1-0.3 0.9-0.4"/>
<circle class="d" cx="1328.6" cy="701.9" r="3"/>
<path class="g1" d="M1327 695.9l0.7-0.7 0.5-0.9 0.3-0.9-0.1-1-0.3-1-0.7-0.7-0.9-0.5-1-0.1-0.9 0.4-0.7 0.7-0.4 0.9 0.2 1 0.6 0.8 0.9 0.4 1-0.2 0.7-0.6 0.3-1-0.3-1-0.7-0.7-1-0.2"/>
<circle class="f1" cx="1325.1" cy="692.7" r="2.6"/>
<path class="g3" d="M1321.2 696l2.8 1.1 3 0.4"/>
<path class="g2" d="M1327 697.5l2-0.4 2 0 1.9 0.3 1.9 0.6 1.7 1.1 1.4 1.4 1 1.7 0.5 2"/>
<path class="g1" d="M1339.4 704.2l-0.1 1 0.1 1 0.2 1 0.4 0.9 0.6 0.8 0.7 0.7"/>
<circle class="d" cx="1336.5" cy="712.7" r="3"/>
<path class="g1" d="M1341.3 709.6l0.9 0.5 0.9 0.2 1 0 1-0.4 0.8-0.6 0.5-0.9 0.1-1-0.2-0.9-0.6-0.8-0.9-0.5-1 0-0.9 0.4-0.5 0.8-0.1 1 0.4 0.9 0.9 0.5 1 0 0.7-0.7 0.3-0.9-0.3-1"/>
<circle class="f1" cx="1344.4" cy="706.5" r="2.4"/>
<path class="g2" d="M1339.4 704.2l-0.2 2-0.7 1.8-1.4 1.5-1.8 0.9-2 0.1-1.8-0.6-1.5-1.4-0.6-1.9 0.2-2 1.2-1.6 1.9-0.8 1.9 0.3 1.6 1.2 0.5 2-0.6 1.9-1.6 1.2-2 0.2-1.7-1-0.6-1.9 0.8-1.9 1.9-0.8 1.8 0.9"/>
<circle class="f2" cx="1333.2" cy="705.6" r="3.8"/>
<path class="g3" d="M1327 697.5l2.9-0.6 2.7-1.3 2.2-2.1 1.3-2.7 0.5-3-0.7-2.9-1.7-2.5-2.5-1.6-3-0.5-2.9 0.8-2.2 2-1.1 2.8 0.3 3 1.7 2.4 2.7 1.3 2.9-0.7 2.1-2.2 0.6-2.9-1.6-2.6-2.8-1-2.7 1.3-1.3 2.7 1 2.8 2.6 1.5 2.8-1 1.2-2.8"/>
<circle class="f3" cx="1327.8" cy="686.9" r="5.8"/>
<path class="g4" d="M1313.7 680.6l0.2 4-1.1 3.8-2.4 3.3-3.3 2.2-3.9 0.7-4-0.9-3.1-2.4-1.8-3.6 0-4 1.9-3.5 3.4-2.1 4 0 3.4 2 1.7 3.6"/>
<path class="y0 w4" d="M1308.7 683.7l-0.6 4-3 2.7-4 0"/>
<path class="y1 w4" d="M1301.1 690.4l-3-2.6-0.7-3.9 1.7-3.7"/>
<path class="y2 w4" d="M1299.1 680.2l3.6-1.7 3.8 1.3 1.5 3.7-1.2 3.8"/>
<path class="y3 w4" d="M1306.8 687.3l-3.6 1.8-3.5-2-0.3-4 2.7-3 4 0.3"/>
<path class="y4 w4" d="M1306.1 680.4l1.5 3.7-2.6 3-4-0.5-1.6-3.6 2.6-3.1 3.9 0.9 1.7 3.6"/>
<path class="y5 w4" d="M1307.6 684.4l-3.1 2.7-3.5-1.9 0.6-4 3.7-1.3 2.1 3.4-2.3 3.3-3.5-1.8 1.1-3.8 3.9-0.8 1.3 3.8"/>
<path class="y6 w4" d="M1307.9 684l-3.3 2.3-3.5-2 1.1-3.8 4-0.3 0.2 4-3.6 1.7-1.4-3.8 3.8-1.3 2 3.5-3.2 2.5-3-2.7 2.4-3.2 3.2 2.4-2.1 3.5-3.5-2 2.5-3.1 2.2 3.3-3.9 0.9-1.3-3.8 4 0-0.9 3.9"/>
<path class="g5" d="M1287.6 670.3l4.7-1.5 4.2-2.8 3-4 1.6-4.7-0.1-5-1.9-4.7-3.5-3.5-4.7-1.8-5 0.2-4.4 2.4-2.8 4.2-0.6 4.9 1.9 4.6 4 3.1"/>
<path class="y0 w5" d="M1284 661.7l5 0.5 4.1-2.8 2.1-4.5"/>
<path class="y1 w5" d="M1295.2 654.9l-1-5-4-3-5 0"/>
<path class="y2 w5" d="M1285.2 646.9l-3.7 3.3-0.6 5 3.5 3.6 5 0.4"/>
<path class="y3 w5" d="M1289.4 659.2l3.3-3.8-0.6-4.9-3.8-3.2-5 0.4-3.2 3.8"/>
<path class="y4 w5" d="M1280.1 651.5l1.3 4.8 4.8 1.3 4.2-2.7 0.8-4.9-4.1-2.8-4.8 1.6-0.2 5"/>
<path class="y5 w5" d="M1282.1 653.8l4.1 2.9 4.7-1.6 0.9-4.9-4.5-2.3-4.3 2.5 1.6 4.8 5-0.5 0.4-5-4.9-0.8-2.9 4.1"/>
<path class="y6 w5" d="M1282.2 653l3.3 3.7 3.9-3-1.4-4.8-5-0.5-2 4.6 3.7 3.3 4.6-2.1-2-4.6-5 0.2-0.1 5 5-0.8-1.3-4.8-4.9-0.3-1 4.9 4.7 1.5 1-4.9-4.9-1.1-1.2 4.9 5-0.2-1.3-4.8-3.9 3.1"/>
<path class="g6" d="M1262.6 644.7l0.9 6-1 5.9-2.9 5.3-4.5 3.9-5.6 2.1-6-0.2-5.4-2.6-3.8-4.7-1.5-5.8 1.4-5.8 3.9-4.6 5.6-2 6 1.1 4.4 4"/>
<path class="y0 w6" d="M1254.1 647.3l1.7 5.7-2.3 5.6-5.4 2.7"/>
<path class="y1 w6" d="M1248.1 661.3l-5.7-1.7-2.9-5.3 1.5-5.8"/>
<path class="y2 w6" d="M1241 648.5l4.6-3.7 6-0.2 4.1 4.4-0.3 6"/>
<path class="y3 w6" d="M1255.4 655l-4.2 4.4-6 0.2-4.2-4.2 1.4-5.9 5.8-1.7"/>
<path class="y4 w6" d="M1248.2 647.8l5.1 3 1.4 5.9-4 4.5-6 0-2.5-5.5 3.1-5.1 6-0.1"/>
<path class="y5 w6" d="M1251.3 650.5l3.2 5.1-3.7 4.7-5.6-2.2-0.7-6 5.8-1.8 4.5 4-1.9 5.7-6 0.7-2.5-5.5 4.4-4.1"/>
<path class="y6 w6" d="M1248.8 651.1l5.5 2.3-0.4 5.9-6-0.2-1.9-5.7 5.6-2.1 4 4.4-3.2 5.1-5.7-1.8 2.8-5.3 5.8 1.4-2.3 5.5-5.8-1.4-0.3-5.9 5.8-1.7 2.4 5.5-5.9 0.9 1-5.9 6 0.8-3.2 5.1-5-3.4 3.6-4.9"/>
<path class="g9" d="M1183.5 602.3l2.2 8.7 4.5 7.8"/>
<path class="g8" d="M1190.2 618.8l5.9 5.4 5 6.2 3.8 7.1 2.5 7.6 0.8 7.9-1.1 8"/>
<path class="g6" d="M1207.1 661l-2.2 5.6-3 5.1-3.9 4.6-4.7 3.8-5.3 2.6-5.9 1.4"/>
<path class="g4" d="M1182.1 684.1l-4-0.1-3.9-0.7-3.8-1.4-3.4-2.1-2.9-2.8-2.1-3.4"/>
<path class="g2" d="M1162 673.6l-0.6-1.9-0.3-1.9 0-2 0.5-2 0.8-1.8 1.2-1.6 1.7-1.2 1.8-0.7"/>
<path class="g1" d="M1167.1 660.5l1 0 1-0.2 0.9-0.4 0.9-0.5 0.8-0.6 0.5-0.8"/>
<circle class="d" cx="1175.6" cy="662.3" r="2.9"/>
<path class="g1" d="M1172.2 658l0.4-1 0.1-1-0.1-0.9-0.5-0.9-0.7-0.7-0.9-0.4-1-0.1-1 0.4-0.7 0.7-0.3 0.9 0.1 1 0.5 0.8 0.9 0.5 1 0 0.8-0.6 0.4-0.9-0.1-1-0.7-0.8-1-0.2-0.8 0.5"/>
<circle class="f1" cx="1169.9" cy="655.1" r="2.2"/>
<path class="g2" d="M1167.1 660.5l2-0.1 1.9 0.5 1.7 1.2 1.1 1.7 0.4 1.9-0.5 2-1.2 1.6-1.8 0.9-2-0.1-1.7-0.9-1-1.8 0-2 1.1-1.6 1.8-0.8 2 0.4 1.2 1.5-0.1 2-1.2 1.6-2 0.3-1.7-1-0.7-1.9 0.9-1.8"/>
<circle class="f2" cx="1168.9" cy="665.3" r="4.4"/>
<path class="g4" d="M1162 673.6l-1.2-3.8-0.1-4"/>
<path class="g3" d="M1160.7 665.8l0.8-2.9 0.4-2.9 0-3-0.6-3-1.1-2.7-1.8-2.5"/>
<path class="g1" d="M1158.4 648.8l-0.7-0.7-0.8-0.5-0.9-0.4-1-0.3-1 0-1 0.1"/>
<circle class="d" cx="1153.6" cy="641.5" r="2.9"/>
<path class="g1" d="M1153 647l-0.9 0.4-0.8 0.6-0.6 0.9-0.3 0.9 0.1 1 0.3 1 0.7 0.7 0.9 0.4 1 0 0.9-0.4 0.7-0.8 0.2-1-0.3-0.9-0.8-0.7-1-0.2-0.9 0.4-0.6 0.8 0 1 0.6 0.9 0.9 0.4"/>
<circle class="f1" cx="1153.2" cy="650.7" r="2.2"/>
<path class="g3" d="M1158.4 648.8l-2.2-2-2.7-1.3"/>
<path class="g2" d="M1153.5 645.5l-1.9-0.4-1.9-0.7-1.8-1-1.5-1.3-1.2-1.6-0.8-1.8-0.3-2 0.3-2"/>
<path class="g1" d="M1144.4 634.7l0.4-0.9 0.3-0.9 0.1-1 0-1-0.2-1-0.5-0.9"/>
<circle class="d" cx="1150.3" cy="627.8" r="3"/>
<path class="g1" d="M1144.5 629l-0.6-0.7-0.8-0.6-1-0.3-1-0.1-0.9 0.4-0.8 0.6-0.5 0.8-0.2 1 0.3 1 0.7 0.7 0.9 0.4 1-0.1 0.8-0.5 0.4-0.9 0-1-0.7-0.8-0.9-0.3-1 0.2-0.6 0.8-0.1 1"/>
<circle class="f1" cx="1140.3" cy="630.3" r="2.5"/>
<path class="g2" d="M1144.4 634.7l0.8-1.8 1.4-1.4 1.8-0.9 2-0.2 1.9 0.6 1.5 1.3 0.8 1.8 0 2-1 1.8-1.7 1-2 0.1-1.7-0.9-1-1.8 0.2-2 1.2-1.5 2-0.5 1.8 0.7 1 1.7-0.7 1.9-1.7 1-2-0.4-0.9-1.7"/>
<circle class="f2" cx="1151" cy="634.7" r="4"/>
<path class="g3" d="M1153.5 645.5l-2.9-0.6-3 0.4-2.7 1.3-2 2.2-1.1 2.8 0 3 1.3 2.7 2.4 1.9 2.9 0.6 2.9-0.8 2.1-2.2 0.7-2.9-0.9-2.9-2.4-1.8-3-0.2-2.5 1.6-1 2.8 0.6 2.9 2.3 2 3 0.2 2.4-1.8 0.5-2.9-1.8-2.4-2.9-0.8-2.6 1.5-0.9 2.8"/>
<circle class="f3" cx="1149.5" cy="654.1" r="6.1"/>
<path class="g4" d="M1160.7 665.8l1.1-3.8 2.2-3.3 3.3-2.3 3.9-1 3.9 0.5 3.4 2.1 2.2 3.4 0.6 3.9-1.4 3.8-3 2.6-3.9 0.8-3.8-1.3-2.5-3.2-0.3-4"/>
<path class="y0 w4" d="M1166.4 664l2.1-3.4 3.7-1.5 3.9 0.7"/>
<path class="y1 w4" d="M1176.1 659.8l2.6 3.1 0.4 3.9-2.3 3.3"/>
<path class="y2 w4" d="M1176.8 670.1l-4 0.5-3.1-2.4-0.8-3.9 2-3.5"/>
<path class="y3 w4" d="M1170.9 660.8l4-0.5 3.2 2.3 0.7 3.9-2.7 3-3.9-0.9"/>
<path class="y4 w4" d="M1172.2 668.6l-2-3.4 2.2-3.4 4-0.1 1.7 3.7-2.2 3.3-4-0.3-2.2-3.4"/>
<path class="y5 w4" d="M1169.7 665l1.5-3.7 3.9-0.7 2.5 3.1-2.4 3.2-3.9-0.9-0.1-4 3.7-1.5 2.1 3.4-2.8 2.9-3.8-1"/>
<path class="y6 w4" d="M1170.4 665.8l0.8-4 4-0.4 1.6 3.6-3.3 2.2-2.3-3.3 3.1-2.5 2.9 2.8-2 3.5-3.6-1.7 1.8-3.6 4 0.7-1.6 3.7-3.6-1.6 1.6-3.6 3.9 0.9-1.9 3.5-3.8-1.5 1.7-3.7 3.2 2.4-2 3.5-2.9-2.8"/>
<path class="g6" d="M1182.1 684.1l-6-0.2-5.7-1.8"/>
<path class="g5" d="M1170.4 682.1l-4-3-4.4-2.5-4.7-1.7-4.9-0.8-5 0.1-4.8 1.2"/>
<path class="g3" d="M1142.6 675.4l-2.7 1.4-2.5 1.7-2.1 2.1-1.8 2.4-1.2 2.8-0.6 2.9"/>
<path class="g1" d="M1131.7 688.7l0.1 1 0.1 1 0.4 0.9 0.5 0.9 0.6 0.8 0.8 0.6"/>
<circle class="d" cx="1129.5" cy="697" r="2.6"/>
<path class="g1" d="M1134.2 693.9l0.9 0.4 1 0.1 1-0.2 0.9-0.4 0.7-0.7 0.4-0.9 0.1-1-0.3-1-0.7-0.7-1-0.4-1 0.1-0.8 0.6-0.5 0.8 0 1 0.6 0.9 0.9 0.4 1-0.2 0.7-0.7 0-1-0.5-0.8"/>
<circle class="f1" cx="1136.4" cy="691.4" r="2.2"/>
<path class="g3" d="M1131.7 688.7l0.1 3 0.9 2.9"/>
<path class="g2" d="M1132.7 694.6l1.1 1.6 0.9 1.9 0.5 1.9 0.1 2-0.3 2-0.7 1.8-1.2 1.6-1.6 1.2"/>
<path class="g1" d="M1131.5 708.6l-1 0.3-0.9 0.5-0.8 0.6-0.7 0.7-0.5 0.9-0.3 0.9"/>
<circle class="d" cx="1122.7" cy="709.4" r="3"/>
<path class="g1" d="M1127.3 712.5l-0.1 1 0.1 1 0.5 0.9 0.6 0.7 0.9 0.5 1 0.1 1-0.2 0.8-0.6 0.5-0.9 0.1-1-0.4-0.9-0.8-0.7-0.9-0.2-1 0.3-0.6 0.8-0.2 1 0.5 0.9 0.9 0.4 0.9-0.3 0.6-0.8"/>
<circle class="f1" cx="1130" cy="714.1" r="2.4"/>
<path class="g2" d="M1131.5 708.6l-1.9 0.7-2 0-1.9-0.7-1.6-1.3-0.9-1.7-0.1-2 0.7-1.9 1.5-1.3 1.9-0.6 2 0.5 1.4 1.3 0.6 2-0.6 1.9-1.5 1.3-2 0.1-1.8-0.8-0.8-1.9 0.4-2 1.5-1.3 1.9 0.1 1.4 1.5 0.1 2"/>
<circle class="f2" cx="1127.4" cy="703.6" r="3.8"/>
<path class="g3" d="M1132.7 694.6l1.7 2.5 2.3 1.8 2.9 1.1 3-0.1 2.7-1.1 2.2-2.1 1.1-2.8-0.2-3-1.5-2.6-2.5-1.6-3-0.2-2.7 1.4-1.6 2.5 0 3 1.7 2.5 2.7 1.3 2.9-0.9 1.7-2.4 0-3-2.2-2.1-3 0.3-2.2 2.1 0 3 1.9 2.3 2.9 0.6 2.4-1.9"/>
<circle class="f3" cx="1143.3" cy="693.6" r="5.1"/>
<path class="g5" d="M1142.6 675.4l-4.5 2.3-3.7 3.3"/>
<path class="g4" d="M1134.4 681l-2.2 3.4-2.6 3-3.2 2.5-3.5 1.8-3.9 1-4 0.1"/>
<path class="g2" d="M1115 692.8l-1.9-0.4-1.9-0.8-1.7-1-1.4-1.4-1.2-1.7-0.7-1.8-0.2-2 0.4-2"/>
<path class="g1" d="M1106.4 681.7l0.4-0.9 0.4-0.9 0.2-1 0-1-0.2-1-0.4-0.9"/>
<circle class="d" cx="1112.5" cy="675.2" r="2.9"/>
<path class="g1" d="M1106.8 676l-0.6-0.8-0.8-0.6-0.9-0.4-1 0-1 0.2-0.8 0.6-0.6 0.9-0.2 0.9 0.3 1 0.6 0.8 0.9 0.4 1 0 0.9-0.5 0.4-0.9 0-1-0.6-0.8-0.9-0.4-1 0.2-0.6 0.8 0 1"/>
<circle class="f1" cx="1103.1" cy="676.7" r="2.2"/>
<path class="g2" d="M1106.4 681.7l0.9-1.8 1.4-1.3 1.9-0.8 2-0.1 1.9 0.6 1.4 1.4 0.8 1.9-0.2 1.9-1 1.7-1.8 1-2 0-1.7-1-0.9-1.8 0.3-2 1.3-1.5 1.9-0.5 2 0.5 0.9 1.8-0.1 2-1.3 1.5-2 0.3-1.8-1"/>
<circle class="f2" cx="1112.9" cy="682.9" r="4"/>
<path class="g4" d="M1115 692.8l-3.9-0.9-3.5-1.9"/>
<path class="g3" d="M1107.6 690l-2.1-2.2-2.3-1.8-2.6-1.5-2.9-1-2.9-0.4-3 0.2"/>
<path class="g1" d="M1091.8 683.3l-1 0.3-0.9 0.5-0.8 0.6-0.7 0.7-0.6 0.8-0.3 0.9"/>
<circle class="d" cx="1082.9" cy="683.6" r="2.8"/>
<path class="g1" d="M1087.5 687.1l-0.2 1 0.2 1 0.4 0.9 0.7 0.8 0.8 0.5 1 0.1 1-0.2 0.8-0.6 0.5-0.8 0.1-1-0.3-1-0.7-0.6-1-0.3-1 0.3-0.6 0.8-0.2 1 0.4 0.9 0.9 0.5 1-0.1 0.7-0.7"/>
<circle class="f1" cx="1090.5" cy="688.9" r="2.1"/>
<path class="g3" d="M1091.8 683.3l-2.9 1-2.5 1.6"/>
<path class="g2" d="M1086.4 685.9l-1.4 1.4-1.5 1.3-1.8 1-1.9 0.6-2 0.2-1.9-0.3-1.9-0.8-1.5-1.2"/>
<path class="g1" d="M1072.5 688.1l-0.6-0.9-0.7-0.7-0.7-0.7-0.9-0.5-0.9-0.3-1-0.1"/>
<circle class="d" cx="1069.6" cy="679.4" r="3"/>
<path class="g1" d="M1067.7 684.9l-1 0.2-0.9 0.4-0.8 0.6-0.6 0.9-0.2 0.9 0.1 1 0.5 0.9 0.8 0.6 0.9 0.3 1-0.1 0.8-0.6 0.5-0.9-0.1-1-0.5-0.9-0.9-0.4-1 0.1-0.8 0.6-0.2 1 0.5 0.9 1 0.4"/>
<circle class="f1" cx="1067.3" cy="687.8" r="2.5"/>
<path class="g2" d="M1072.5 688.1l-1.1-1.7-0.6-1.9 0.2-2 0.9-1.8 1.5-1.4 1.9-0.6 2 0.3 1.7 1.1 0.9 1.7 0.1 2-1 1.8-1.7 0.9-2 0-1.6-1.2-0.7-1.9 0.6-1.9 1.6-1.2 2 0.1 1.3 1.5 0.1 2-1.2 1.5-2 0.2"/>
<circle class="f2" cx="1076.3" cy="682.7" r="4"/>
<path class="g3" d="M1086.4 685.9l-2 2.2-1.3 2.7-0.4 3 0.7 2.9 1.7 2.5 2.4 1.7 3 0.6 2.9-0.6 2.4-1.8 1.3-2.7-0.1-3-1.6-2.6-2.6-1.5-3 0.1-2.5 1.7-1.1 2.8 1 2.8 2.4 1.8 3 0 2.4-1.9 0.7-2.9-1.4-2.7-2.8-1-2.7 1.4-1.1 2.8 1 2.8"/>
<circle class="f3" cx="1090.9" cy="695.6" r="5.6"/>
<path class="g4" d="M1107.6 690l-2.8-2.9-1.6-3.6-0.4-4 1.2-3.8 2.5-3.1 3.6-1.8 4 0 3.6 1.7 2.4 3.3 0.4 3.9-1.6 3.7-3.3 2.2-4 0.1-3.3-2.2"/>
<path class="y0 w4" d="M1108.3 683.5l-1.4-3.8 1.3-3.7 3.5-2"/>
<path class="y1 w4" d="M1111.7 674l4 0.4 2.6 3 0.1 4"/>
<path class="y2 w4" d="M1118.4 681.4l-2.5 3.1-3.9 0.9-3.6-1.8-1.2-3.8"/>
<path class="y3 w4" d="M1107.2 679.8l1.7-3.6 3.7-1.4 3.3 2.2 0.5 4-2.5 3.1"/>
<path class="y4 w4" d="M1113.9 684.1l-4 0-1.9-3.5 2.4-3.2 3.9 0.7 1.7 3.6-1.8 3.6-3.9-0.5"/>
<path class="y5 w4" d="M1110.3 684.8l-2-3.5 2.2-3.3 3.8 1.3-0.4 4-3.7 1.5-2.7-3 2.1-3.4 3.9 0.5 1.2 3.8-3.5 1.8"/>
<path class="y6 w4" d="M1111.2 684.5l-3-2.6 1-3.9 3.9 0.8-0.5 4-4-0.1-0.4-4 4-0.1-0.1 4-4 0.1 0.7-4 4-0.5 1.4 3.7-3.9 0.9-1.2-3.8 3.9-1.2 1.4 3.8-3.9 0.8-0.9-3.9 3.9-0.9 0.4 4-4-0.5"/>
<path class="g5" d="M1134.4 681l-2.7 4.2-1.3 4.9 0.3 4.9 2 4.6 3.5 3.6 4.6 1.9 5-0.1 4.5-2.2 3.1-4 0.9-4.9-1.6-4.7-3.7-3.3-5-1-4.6 1.9"/>
<path class="y0 w5" d="M1139.4 686.8l-2.8 4.1-0.1 5 3 4"/>
<path class="y1 w5" d="M1139.5 699.9l4.8 1.5 4.7-1.7 2.3-4.5"/>
<path class="y2 w5" d="M1151.3 695.2l-1.6-4.7-4.3-2.6-4.8 1.2-2.4 4.4"/>
<path class="y3 w5" d="M1138.2 693.5l1.1 4.9 4.1 2.9 5-0.5 2.8-4.1-2.1-4.6"/>
<path class="y4 w5" d="M1149.1 692.1l-4.9-1.1-4.2 2.6-0.3 5 3.8 3.2 4.7-1.9 0.2-5-3.8-3.2"/>
<path class="y5 w5" d="M1144.6 691.7l-4.4 2.3-0.9 4.9 4.2 2.7 3.8-3.2-1.3-4.8-4.9-0.9-1.7 4.7 3.7 3.4 4.5-2.3 0.3-5"/>
<path class="y6 w5" d="M1147.9 693.5l-4.3-2.5-4.1 2.9 2.2 4.5 4.8-1.3-1.5-4.8-4.7 1.8 0.9 4.9 5 0.4 1.9-4.6-4.8-1.4-1.7 4.7 4.3 2.6 3.5-3.5-4.3-2.5-2.3 4.4 4.8 1.6 0.3-5-4.9-1-1.8 4.7 5-0.1-1.7-4.7"/>
<path class="g6" d="M1170.4 682.1l-4.8-3.6-3.3-5.1-1.1-5.8 1.2-5.9 3.6-4.8 5.4-2.8 6 0.1 5.2 3 2.9 5.3-0.3 6-3.6 4.8-5.7 1.8-5.7-1.9-3.3-5"/>
<path class="y0 w6" d="M1166.9 668.2l0.7-6 4.5-4 6-0.2"/>
<path class="y1 w6" d="M1178.1 658l4.7 3.6 1.2 5.9-2.5 5.5"/>
<path class="y2 w6" d="M1181.5 673l-5.8 1.7-5.2-2.9-2.4-5.5 2.5-5.4"/>
<path class="y3 w6" d="M1170.6 660.9l5.5-2.5 5.6 2.2 2.2 5.6-2.8 5.3-6 0.5"/>
<path class="y4 w6" d="M1175.1 672l-4.6-3.8-0.4-6 4-4.4 6 0.8 2.9 5.2-2.3 5.6-6 0.6"/>
<path class="y5 w6" d="M1174.7 670l-2.3-5.5 3.4-4.9 5.9 1.2 0.9 5.9-4.9 3.5-5.5-2.5-0.3-5.9 5.1-3.2 4.5 4.1-2.5 5.4"/>
<path class="y6 w6" d="M1179 668.1l-6-0.6-0.5-6 5.9-0.6 0.8 5.9-5.8 1.8-1.8-5.7 5.4-2.5 3.5 4.9-3.5 4.9-4.6-3.8 4.2-4.3 4 4.5-5.2 3-2.8-5.3 5.5-2.4 2.3 5.6-6 0.4-1.5-5.8 5.4-2.4 2.1 5.6-6-0.7"/>
<path class="g8" d="M1207.1 661l-2.9 7.4-4.9 6.3"/>
<path class="g7" d="M1199.3 674.7l-5.8 3.9-5.3 4.6-4.4 5.4-3.5 6.1-2.2 6.7-0.7 6.9"/>
<path class="g5" d="M1177.4 708.3l0.7 5 1.3 4.8 2.1 4.5 2.9 4.2 3.6 3.4 4.2 2.7"/>
<path class="g3" d="M1192.2 732.9l2.8 0.9 3 0.6 3 0.1 3-0.5 2.8-1 2.5-1.6"/>
<path class="g1" d="M1209.3 731.4l0.7-0.8 0.6-0.8 0.4-0.9 0.3-0.9 0.1-1-0.1-1"/>
<circle class="d" cx="1217.2" cy="726.9" r="2.8"/>
<path class="g1" d="M1211.3 726l-0.4-0.9-0.6-0.8-0.8-0.6-0.9-0.4-1 0-1 0.3-0.7 0.7-0.5 0.9 0 1 0.4 0.9 0.7 0.7 1 0.2 0.9-0.3 0.8-0.7 0.2-0.9-0.4-1-0.8-0.6-1 0-0.7 0.6-0.3 1"/>
<circle class="f1" cx="1207.6" cy="726.5" r="2.1"/>
<path class="g3" d="M1209.3 731.4l2.1-2.2 1.4-2.6"/>
<path class="g2" d="M1212.8 726.6l0.4-2 0.7-1.9 1.1-1.7 1.3-1.5 1.6-1.1 1.9-0.8 2-0.2 2 0.3"/>
<path class="g1" d="M1223.8 717.7l0.8 0.4 1 0.4 1 0.1 1 0 1-0.2 0.9-0.4"/>
<circle class="d" cx="1230.7" cy="724" r="3.1"/>
<path class="g1" d="M1229.5 718l0.8-0.6 0.5-0.8 0.4-1 0-1-0.3-0.9-0.5-0.8-0.9-0.6-1-0.1-0.9 0.2-0.8 0.7-0.4 0.9 0 1 0.6 0.8 0.9 0.5 1-0.1 0.8-0.6 0.3-0.9-0.2-1-0.8-0.6-1-0.1"/>
<circle class="f1" cx="1228.5" cy="714.3" r="2.2"/>
<path class="g2" d="M1223.8 717.7l1.7 0.9 1.5 1.4 0.8 1.8 0.1 2-0.6 1.9-1.3 1.5-1.9 0.8-2-0.1-1.7-1-1-1.8-0.1-2 1-1.7 1.8-0.9 2 0.2 1.5 1.3 0.3 2-1 1.7-2 0.6-1.9-0.7-0.9-1.7 0.4-2 1.5-1.3"/>
<circle class="f2" cx="1222.1" cy="722.6" r="4.2"/>
<path class="g3" d="M1212.8 726.6l0.6-3-0.3-3-1.2-2.7-2.1-2.1-2.7-1.2-3-0.1-2.8 1.1-2 2.2-0.9 2.9 0.6 3 2 2.2 2.8 1 2.9-0.6 2.2-2.1 0.6-2.9-1.2-2.8-2.7-1.3-3 0.4-2.1 2.1-0.6 2.9 1.4 2.6 2.9 1 2.5-1.5 0.7-2.9-1.5-2.6-3-0.6"/>
<circle class="f3" cx="1203.1" cy="721.2" r="5.6"/>
<path class="g5" d="M1192.2 732.9l4.7 1.6 5 0.3"/>
<path class="g4" d="M1201.9 734.8l3.9-0.9 4-0.2 4 0.5 3.8 1.2 3.5 2 2.9 2.8"/>
<path class="g2" d="M1224 740.2l1 1.7 0.8 1.8 0.4 2 0 2-0.3 1.9-0.9 1.8-1.3 1.6-1.6 1.1"/>
<path class="g1" d="M1222.1 754.1l-1 0.3-0.9 0.4-0.8 0.6-0.7 0.7-0.6 0.8-0.4 0.9"/>
<circle class="d" cx="1213.3" cy="754.2" r="2.8"/>
<path class="g1" d="M1217.7 757.8l-0.1 1 0.1 1 0.4 0.9 0.7 0.8 0.8 0.5 1 0.2 1-0.2 0.8-0.6 0.6-0.8 0.1-1-0.4-1-0.7-0.7-1-0.2-0.9 0.3-0.7 0.7-0.2 1 0.4 0.9 0.9 0.4 1-0.2 0.6-0.8"/>
<circle class="f1" cx="1220.8" cy="759.9" r="2.2"/>
<path class="g2" d="M1222.1 754.1l-1.9 0.6-2-0.1-1.9-0.7-1.4-1.4-0.9-1.8 0-2 0.8-1.8 1.5-1.3 1.9-0.4 2 0.5 1.4 1.4 0.4 2-0.6 1.9-1.6 1.2-2 0.1-1.7-1.1-0.6-1.9 0.6-1.9 1.5-1.2 2 0 1.3 1.5 0.2 2"/>
<circle class="f2" cx="1218.9" cy="748.6" r="3.8"/>
<path class="g4" d="M1224 740.2l2 3.4 1.1 3.8"/>
<path class="g3" d="M1227.1 747.4l-0.1 3 0.3 3 0.8 2.9 1.3 2.7 1.8 2.4 2.2 2"/>
<path class="g1" d="M1233.4 763.4l0.9 0.5 0.9 0.3 1 0.2 1 0 1-0.2 0.9-0.4"/>
<circle class="d" cx="1240.2" cy="769.7" r="3.1"/>
<path class="g1" d="M1239.1 763.8l0.8-0.6 0.6-0.8 0.4-1 0-1-0.2-0.9-0.6-0.8-0.9-0.6-0.9-0.1-1 0.2-0.8 0.6-0.4 0.9 0 1 0.6 0.9 0.8 0.4 1 0 0.8-0.6 0.4-0.9-0.2-1-0.7-0.8-1 0"/>
<circle class="f1" cx="1238" cy="760.6" r="2.5"/>
<path class="g3" d="M1233.4 763.4l2.7 1.4 2.9 0.6"/>
<path class="g2" d="M1239 765.4l2-0.1 2 0.2 1.9 0.5 1.8 0.9 1.6 1.3 1.2 1.5 0.8 1.9 0.2 2"/>
<path class="g1" d="M1250.5 773.6l-0.2 0.9 0 1 0.1 1 0.3 1 0.4 0.9 0.7 0.7"/>
<circle class="d" cx="1246.6" cy="782.2" r="3.3"/>
<path class="g1" d="M1251.8 779.1l0.8 0.6 0.9 0.4 1 0.1 1-0.3 0.8-0.5 0.6-0.8 0.3-1-0.1-0.9-0.5-0.9-0.8-0.6-1-0.1-0.9 0.3-0.7 0.8-0.2 0.9 0.3 1 0.8 0.6 1 0 0.9-0.4 0.5-0.9-0.2-1"/>
<circle class="f1" cx="1254.8" cy="776.5" r="2.2"/>
<path class="g2" d="M1250.5 773.6l-0.4 1.9-0.9 1.8-1.6 1.3-1.8 0.7-2-0.1-1.8-0.9-1.3-1.6-0.4-1.9 0.5-2 1.4-1.4 1.9-0.6 1.9 0.5 1.4 1.4 0.3 2-0.8 1.8-1.8 0.9-2-0.2-1.5-1.3-0.3-2 0.9-1.7 1.9-0.6 1.9 0.7"/>
<circle class="f2" cx="1244.8" cy="774.4" r="3.7"/>
<path class="g3" d="M1239 765.4l3-0.2 2.8-1.1 2.3-1.9 1.4-2.6 0.4-3-0.8-2.9-1.9-2.3-2.7-1.3-3 0.1-2.6 1.5-1.6 2.6 0 3 1.6 2.5 2.7 1.3 3-0.4 2.3-2 0.7-2.9-1-2.8-2.5-1.7-3 0.1-2 2.2-0.2 3 2.2 2.1 3 0.1 2.3-2 0.4-2.9"/>
<circle class="f3" cx="1242.7" cy="754.2" r="5.4"/>
<path class="g4" d="M1227.1 747.4l-0.1 4-1.4 3.8-2.6 3-3.6 1.9-4 0.4-3.8-1.3-2.9-2.8-1.3-3.7 0.5-4 2.4-3.2 3.6-1.6 4 0.6 3 2.6 1.1 3.9"/>
<path class="y0 w4" d="M1222 751l-1.4 3.7-3.4 2.2-3.9-0.7"/>
<path class="y1 w4" d="M1213.3 756.2l-2.3-3.3 0.5-3.9 3-2.7"/>
<path class="y2 w4" d="M1214.5 746.3l4-0.3 3 2.6-0.1 4-2.8 2.9"/>
<path class="y3 w4" d="M1218.6 755.5l-4-0.7-2-3.4 1-3.9 3.7-1.4 3.2 2.4"/>
<path class="y4 w4" d="M1220.5 748.5l-0.6 4-3.4 2.2-3.8-1.2-0.5-4 3.2-2.4 3.4 2-0.1 4"/>
<path class="y5 w4" d="M1218.7 753.1l-3.9 1.1-2.5-3.1 2.4-3.2 4 0.5 1.4 3.7-2.7 2.9-4-0.8-0.8-3.9 3.8-1.2 1.6 3.7"/>
<path class="y6 w4" d="M1218 752.8l-3 2.6-3.1-2.6 2.4-3.3 3.2 2.4-1.5 3.7-3.9-1.1 0.1-4 3.9-1 0.3 4-3.9 1.1-0.7-4 4-0.4 0.2 4-3.9 0.8 0.1-4 3.9-0.5 0.7 3.9-3.9-0.9 1.4-3.7 3.4 2.1-3.3 2.4"/>
<path class="g5" d="M1201.9 734.8l4.9-1.1 4.4-2.4 3.3-3.7 1.9-4.7 0.2-5-1.7-4.7-3.4-3.6-4.6-1.9-5 0.2-4.4 2.5-2.7 4.2-0.3 5 2.2 4.5 4.3 2.6"/>
<path class="y0 w5" d="M1201 726.7l5 0 4.2-2.7 1.8-4.7"/>
<path class="y1 w5" d="M1212 719.3l-1.2-4.8-4.1-2.9-5 0"/>
<path class="y2 w5" d="M1201.7 711.6l-3.4 3.6 0.6 5 3.6 3.5 5-0.4"/>
<path class="y3 w5" d="M1207.5 723.3l3.6-3.5-0.3-5-4.3-2.5-4.9 1.2-1.9 4.5"/>
<path class="y4 w5" d="M1199.7 718l2.3 4.5 5 0.4 2.6-4.3-2.3-4.4-5 0.4-2.1 4.5 2.6 4.3"/>
<path class="y5 w5" d="M1202.8 723.4l5-0.8 2-4.5-2.5-4.3-5-0.2-2.6 4.3 2.4 4.4 5-0.3 0.8-4.9-4.5-2.1-3.5 3.6"/>
<path class="y6 w5" d="M1199.9 718.6l2.4 4.4 4.9-1.2 0.1-5-5-0.5-1.4 4.8 4.9 1.2 2.3-4.4-4.5-2.2-1.6 4.8 4.4 2.3 3.4-3.7-3-4-4 2.9 2.7 4.2 4.7-1.9-2.8-4.2-3.6 3.5 4 3.1 2.2-4.5-4.7-2-2.1 4.6"/>
<path class="g7" d="M1177.4 708.3l0.9 7 2.8 6.4"/>
<path class="g6" d="M1181.1 721.7l3.9 4.5 3.2 5.2 2.2 5.5 1.1 5.9-0.2 6-1.6 5.8"/>
<path class="g4" d="M1189.7 754.6l-2 3.5-2.5 3-3.1 2.6-3.5 2-3.8 1.2-4 0.2"/>
<path class="g2" d="M1170.8 767.1l-1.9-0.4-1.9-0.8-1.7-1-1.5-1.3-1.2-1.7-0.7-1.8-0.2-2 0.3-2"/>
<path class="g1" d="M1162 756.1l0.4-0.9 0.4-0.9 0.1-1 0-1-0.2-1-0.4-0.9"/>
<circle class="d" cx="1168.2" cy="749.2" r="3.1"/>
<path class="g1" d="M1162.3 750.4l-0.6-0.8-0.8-0.6-0.9-0.3-1-0.1-1 0.3-0.8 0.6-0.5 0.8-0.2 1 0.2 1 0.7 0.7 0.9 0.5 1-0.1 0.8-0.5 0.5-0.9-0.1-1-0.6-0.8-0.9-0.4-1 0.3-0.6 0.8-0.1 0.9"/>
<circle class="f1" cx="1158.8" cy="752" r="2.1"/>
<path class="g2" d="M1162 756.1l0.9-1.8 1.4-1.4 1.8-0.8 2-0.2 1.9 0.7 1.5 1.3 0.8 1.9-0.1 2-1.1 1.7-1.7 1-2 0-1.7-1-0.9-1.8 0.2-1.9 1.3-1.5 2-0.4 1.7 1.1 0.5 1.9-0.6 1.9-1.7 1-1.9-0.6-1.1-1.7"/>
<circle class="f2" cx="1168.1" cy="756.9" r="4"/>
<path class="g4" d="M1170.8 767.1l-3.9-0.9-3.5-1.9"/>
<path class="g3" d="M1163.4 764.3l-2-2.2-2.4-1.9-2.6-1.5-2.8-1-2.9-0.5-3 0.2"/>
<path class="g1" d="M1147.7 757.4l-1 0.2-0.9 0.4-0.8 0.6-0.8 0.7-0.5 0.8-0.4 0.9"/>
<circle class="d" cx="1138.6" cy="757.8" r="3.2"/>
<path class="g1" d="M1143.3 761l-0.2 1 0.1 1 0.4 0.9 0.7 0.8 0.8 0.5 1 0.2 1-0.2 0.8-0.6 0.6-0.8 0.1-1-0.3-0.9-0.8-0.7-0.9-0.3-1 0.3-0.7 0.7-0.2 1 0.4 0.9 0.9 0.6 1 0 0.8-0.6"/>
<circle class="f1" cx="1146.7" cy="762.5" r="2.2"/>
<path class="g3" d="M1147.7 757.4l-2.9 0.8-2.6 1.5"/>
<path class="g2" d="M1142.2 759.7l-1.4 1.4-1.6 1.2-1.8 0.9-1.9 0.6-2 0.1-2-0.4-1.8-0.8-1.5-1.3"/>
<path class="g1" d="M1128.2 761.4l-0.5-0.9-0.6-0.8-0.8-0.6-0.8-0.6-1-0.3-1-0.2"/>
<circle class="d" cx="1125.8" cy="753" r="2.9"/>
<path class="g1" d="M1123.5 758l-1 0.2-0.9 0.3-0.8 0.6-0.6 0.8-0.2 1 0 1 0.5 0.9 0.7 0.7 1 0.3 1-0.1 0.8-0.6 0.5-0.9 0-1-0.5-0.8-0.9-0.5-1 0.1-0.8 0.6-0.3 0.9 0.2 1 0.8 0.6"/>
<circle class="f1" cx="1122.5" cy="761.8" r="2"/>
<path class="g2" d="M1128.2 761.4l-1-1.8-0.5-1.9 0.3-2 0.9-1.8 1.6-1.2 1.9-0.6 2 0.4 1.6 1.1 0.9 1.8 0 2-1.1 1.7-1.7 0.9-2-0.1-1.6-1.3-0.6-1.9 0.8-1.8 1.8-0.9 1.9 0.3 1.4 1.5 0.2 2-1.2 1.5-2 0.2"/>
<circle class="f2" cx="1132" cy="758" r="4.5"/>
<path class="g3" d="M1142.2 759.7l-2.1 2.2-1.3 2.7-0.4 2.9 0.8 2.9 1.8 2.4 2.6 1.5 3 0.2 2.8-1.1 1.9-2.3 0.6-2.9-1-2.9-2.4-1.8-3-0.3-2.6 1.4-1.2 2.8 0.5 2.9 2.4 1.9 3 0 2.3-1.8 0.3-3-2-2.2-3-0.2-2.4 1.8-0.3 3 1.9 2.3 3 0.1"/>
<circle class="f3" cx="1146.2" cy="770" r="6.2"/>
<path class="g4" d="M1163.4 764.3l-2.7-2.9-1.7-3.7-0.3-4 1.2-3.8 2.5-3.1 3.6-1.8 4-0.2 3.6 1.6 2.5 3.1 0.7 4-1.3 3.7-3.1 2.6-4 0.4-3.5-1.8"/>
<path class="y0 w4" d="M1164.9 758.4l-1.9-3.5 0.5-3.9 2.9-2.8"/>
<path class="y1 w4" d="M1166.4 748.2l4-0.1 3.3 2.2 0.8 4"/>
<path class="y2 w4" d="M1174.5 754.3l-2 3.4-3.8 1.2-3.4-2.2-1-3.8"/>
<path class="y3 w4" d="M1164.3 752.9l1.7-3.6 3.8-1.2 3.2 2.5-0.3 4-2.9 2.6"/>
<path class="y4 w4" d="M1169.8 757.2l-4-0.6-1.3-3.7 2.7-2.9 3.9 1 0.5 4-2.8 2.8-3.9-0.9"/>
<path class="y5 w4" d="M1164.9 756.9l-0.8-4 3.3-2.2 3.4 2.2-1.3 3.8-4-0.2-1-3.9 2.8-2.8 3.3 2.3-1.7 3.7-4-0.2"/>
<path class="y6 w4" d="M1164.9 755.6l-1.1-3.9 3.1-2.6 3.6 1.5-1.4 3.8-3.7-1.5 1.2-3.8 4 0.4-0.5 3.9-3.9 0.5-0.1-4 4 0.1 0.5 4-3.8 1.4-2.2-3.4 2.9-2.7 2.8 2.8-3.6 1.7-1.8-3.6 3.4-2.1 1.1 3.9-3.9-0.8"/>
<path class="g6" d="M1189.7 754.6l-3 5.2-4.3 4.2"/>
<path class="g5" d="M1182.4 764l-4.4 2.3-4.1 3-3.5 3.5-2.9 4.1-2 4.6-0.9 4.9"/>
<path class="g3" d="M1164.6 786.4l0.2 3 0.5 2.9 1.1 2.8 1.5 2.6 2 2.3 2.4 1.7"/>
<path class="g1" d="M1172.3 801.7l0.9 0.4 1 0.2 1 0.1 1-0.1 1-0.2 0.8-0.5"/>
<circle class="d" cx="1179.4" cy="807.5" r="2.8"/>
<path class="g1" d="M1178 801.6l0.8-0.7 0.5-0.9 0.3-0.9-0.1-1-0.3-1-0.7-0.7-0.9-0.5-1-0.1-0.9 0.4-0.7 0.7-0.4 0.9 0.2 1 0.6 0.8 0.9 0.4 1-0.2 0.7-0.6 0.3-1-0.3-0.9-0.8-0.7-1-0.1"/>
<circle class="f1" cx="1176.1" cy="797.9" r="2"/>
<path class="g3" d="M1172.3 801.7l2.8 1.2 3 0.3"/>
<path class="g2" d="M1178.1 803.2l1.9-0.3 2-0.1 2 0.4 1.9 0.7 1.7 1.1 1.4 1.4 0.9 1.8 0.5 1.9"/>
<path class="g1" d="M1190.4 810.1l-0.1 1 0 1 0.2 1 0.4 0.9 0.6 0.8 0.7 0.7"/>
<circle class="d" cx="1187.2" cy="818.7" r="3"/>
<path class="g1" d="M1192.2 815.5l0.9 0.5 0.9 0.3 1 0 1-0.4 0.8-0.6 0.5-0.8 0.2-1-0.2-1-0.6-0.8-0.9-0.5-1 0-0.9 0.4-0.6 0.8-0.1 1 0.4 0.9 0.9 0.5 1 0 0.8-0.6 0.2-1-0.4-0.9"/>
<circle class="f1" cx="1194.9" cy="813.4" r="2.1"/>
<path class="g2" d="M1190.4 810.1l-0.2 2-0.8 1.8-1.4 1.5-1.8 0.9-2 0.1-1.9-0.7-1.4-1.5-0.6-1.8 0.3-2 1.2-1.6 1.9-0.8 1.9 0.3 1.6 1.3 0.5 1.9-0.7 1.9-1.5 1.2-2 0-1.6-1.3-0.2-2 1.3-1.5 2-0.1 1.3 1.5"/>
<circle class="f2" cx="1183.5" cy="813.1" r="4.4"/>
<path class="g3" d="M1178.1 803.2l2.9-0.5 2.7-1.4 2.1-2.1 1.2-2.8 0.1-3-1-2.8-2.1-2.1-2.8-1.1-3 0.3-2.5 1.6-1.4 2.7 0.1 3 1.7 2.5 2.7 1.2 3-0.5 1.9-2.3 0.2-3-1.7-2.5-2.8-1.2-2.9 0.8-1.6 2.6 0.2 3 2.1 2 3 0.2 2.2-2.1-0.4-3"/>
<circle class="f3" cx="1178.4" cy="794.3" r="5.4"/>
<path class="g5" d="M1164.6 786.4l0.3 5 1.5 4.8"/>
<path class="g4" d="M1166.4 796.2l2.1 3.3 1.6 3.7 0.9 3.9 0.2 4-0.7 3.9-1.6 3.7"/>
<path class="g2" d="M1168.9 818.7l-1.3 1.6-1.5 1.3-1.6 1.1-1.9 0.7-2 0.3-2-0.1-1.9-0.7-1.6-1.2"/>
<path class="g1" d="M1155.1 821.7l-0.6-0.8-0.7-0.7-0.8-0.6-0.9-0.4-1-0.3-1 0"/>
<circle class="d" cx="1151.6" cy="813.4" r="3.1"/>
<path class="g1" d="M1150.1 818.9l-0.9 0.2-0.9 0.4-0.8 0.7-0.5 0.9-0.1 1 0.1 1 0.6 0.8 0.8 0.6 0.9 0.2 1-0.2 0.8-0.6 0.4-0.9-0.1-1-0.6-0.9-0.9-0.3-1 0.1-0.7 0.7-0.2 1 0.5 0.9 0.8 0.5"/>
<circle class="f1" cx="1149.7" cy="822.5" r="2"/>
<path class="g2" d="M1155.1 821.7l-1.2-1.6-0.6-1.9 0-2 0.8-1.8 1.4-1.4 1.9-0.8 2 0.2 1.7 0.9 1.1 1.7 0.2 2-0.9 1.8-1.7 1.1-2 0.1-1.7-1.1-0.7-1.9 0.3-1.9 1.5-1.4 2-0.2 1.6 1.1 0.4 2-1.2 1.6-1.9 0.5"/>
<circle class="f2" cx="1158" cy="815.7" r="4"/>
<path class="g4" d="M1168.9 818.7l-2.5 3.1-3.3 2.3"/>
<path class="g3" d="M1163.1 824.1l-2.8 1-2.7 1.3-2.5 1.7-2.1 2.1-1.7 2.5-1.1 2.8"/>
<path class="g1" d="M1150.2 835.5l-0.1 1 0 1 0.2 1 0.3 0.9 0.5 0.9 0.7 0.7"/>
<circle class="d" cx="1146.8" cy="843.6" r="2.8"/>
<path class="g1" d="M1151.8 841l0.9 0.5 0.9 0.3 1 0 1-0.3 0.8-0.6 0.6-0.8 0.2-1-0.2-0.9-0.5-0.9-0.9-0.5-1-0.1-0.9 0.4-0.6 0.8-0.2 1 0.4 0.9 0.8 0.6 1 0 0.9-0.6 0.3-0.9-0.3-1"/>
<circle class="f1" cx="1154.9" cy="839" r="2.1"/>
<path class="g3" d="M1150.2 835.5l-0.4 3 0.5 2.9"/>
<path class="g2" d="M1150.3 841.4l0.8 1.9 0.5 1.9 0.2 2-0.2 2-0.6 1.9-1.1 1.7-1.4 1.4-1.8 0.9"/>
<path class="g1" d="M1146.7 855.1l-1 0.1-0.9 0.3-0.9 0.5-0.8 0.6-0.7 0.7-0.5 0.9"/>
<circle class="d" cx="1137.5" cy="854.2" r="3"/>
<path class="g1" d="M1141.9 858.2l-0.2 1 0 1 0.2 0.9 0.6 0.9 0.8 0.6 1 0.3 0.9-0.1 0.9-0.5 0.7-0.7 0.2-1-0.2-1-0.6-0.7-1-0.4-1 0.2-0.7 0.6-0.3 1 0.3 0.9 0.8 0.6 1 0 0.7-0.7"/>
<circle class="f1" cx="1145.1" cy="860.5" r="2.2"/>
<path class="g2" d="M1146.7 855.1l-2 0.3-1.9-0.3-1.8-0.9-1.3-1.6-0.6-1.9 0.2-2 1-1.7 1.7-1.1 2-0.2 1.8 0.8 1.2 1.6 0.2 2-0.8 1.8-1.8 1-2-0.2-1.6-1.2-0.6-1.9 0.7-1.9 1.8-0.9 1.9 0.6 1.2 1.6-0.1 1.9"/>
<circle class="f2" cx="1143.5" cy="849.8" r="3.7"/>
<path class="g3" d="M1150.3 841.4l1.2 2.8 2 2.2 2.6 1.5 3 0.4 2.9-0.6 2.5-1.7 1.5-2.6 0.3-3-1-2.8-2.2-2-2.9-0.7-2.9 0.9-2 2.2-0.5 3 1.3 2.7 2.7 1.3 2.9-0.6 1.8-2.4 0-3-1.8-2.4-2.9-0.6-2.6 1.6-0.7 2.9 1.3 2.7 3 0.5 2.4-1.7"/>
<circle class="f3" cx="1159.4" cy="839.6" r="5.8"/>
<path class="g4" d="M1163.1 824.1l-3.8 1.3-4-0.1-3.7-1.4-3-2.6-1.8-3.6-0.1-4 1.5-3.7 3-2.7 3.9-0.9 3.9 1 2.8 2.8 1 3.9-1.3 3.8-3.1 2.4"/>
<path class="y0 w4" d="M1158.4 820.3l-4 0.3-3.5-1.9-1.9-3.5"/>
<path class="y1 w4" d="M1149 815.2l0.8-3.9 3.3-2.4 4-0.1"/>
<path class="y2 w4" d="M1157.1 808.8l2.7 3 0 4-3.1 2.5-4-0.3"/>
<path class="y3 w4" d="M1152.7 818l-2.5-3.1 0.4-4 3.1-2.5 3.8 1.3 1.7 3.6"/>
<path class="y4 w4" d="M1159.2 813.3l-1.8 3.6-3.9 0.8-2.9-2.8 1.2-3.8 4-0.3 1.7 3.6-2.6 3.1"/>
<path class="y5 w4" d="M1154.9 817.5l-3.8-1.5 0.3-3.9 3.6-1.9 3.1 2.4-1 3.9-4 0.5-1.9-3.6 3.2-2.4 3.6 1.8-1.1 3.9"/>
<path class="y6 w4" d="M1156.9 816.7l-4 0.2-0.6-3.9 3.9-0.7 1.7 3.6-2.8 2.8-3-2.6 2.2-3.4 3.6 1.8-1.1 3.8-4-0.5-0.7-3.9 3.9-1 0.6 4-4 0.3-0.1-4 4 0.8-0.8 3.9-3.7-1.7 3.1-2.6 2 3.5-3.8 1.4"/>
<path class="g5" d="M1166.4 796.2l2.6 4.2 3.8 3.2 4.7 1.9 4.9 0.3 4.8-1.5 3.9-3.2 2.3-4.4 0.3-5-1.8-4.7-3.8-3.3-4.8-1.2-4.8 1.2-3.6 3.5-1.3 4.8"/>
<path class="y0 w5" d="M1173.6 792l1.5 4.8 4.2 2.8 4.9-0.7"/>
<path class="y1 w5" d="M1184.2 798.9l3.8-3.3 1.2-4.8-1.7-4.7"/>
<path class="y2 w5" d="M1187.5 786.1l-4.6-1.9-4.9 1.2-3.1 3.8-0.1 5"/>
<path class="y3 w5" d="M1174.8 794.2l3.3 3.8 5-0.4 3.1-3.9-1-4.9-4.5-2"/>
<path class="y4 w5" d="M1180.7 786.8l-4.2 2.8-0.5 4.9 4.2 2.8 4.6-1.9 1.6-4.8-2.6-4.3-5 0.1"/>
<path class="y5 w5" d="M1178.8 786.4l-2.7 4.2 2.8 4.1 4.9-0.8 2.1-4.6-3.8-3.3-4.2 2.7 0.6 5 4.9 0.7 2.8-4.1-2.7-4.2"/>
<path class="y6 w5" d="M1183.5 786.1l-4.5 2.3 1.1 4.8 5 0.1-0.1-5-4.7-1.5-1.3 4.8 4.6 2 2.3-4.4-4.3-2.5-2.9 4.1 3.6 3.4 3.6-3.4-3.7-3.3-3.9 3.1 3.3 3.7 4-3-2.3-4.4-4.3 2.4 2.3 4.5 3.5-3.5-4.7-1.7"/>
<path class="g6" d="M1182.4 764l-5.3 2.8-5.9 1-5.9-1-5.2-3.1-3.6-4.8-1.4-5.8 1.1-5.9 3.5-4.9 5.4-2.6 6 0.1 5.1 3.1 2.9 5.2-0.3 6-3.6 4.9"/>
<path class="y0 w6" d="M1175.2 759l-5.6 2-5.8-1.6-3.7-4.7"/>
<path class="y1 w6" d="M1160.1 754.7l-0.1-6 3.4-5 5.7-1.7"/>
<path class="y2 w6" d="M1169.1 742l5.6 2.2 2.9 5.3-2 5.7-5.2 3"/>
<path class="y3 w6" d="M1170.4 758.2l-5.5-2.4-1.8-5.7 3.3-5 6-0.3 3.7 4.8"/>
<path class="y4 w6" d="M1176.1 749.6l-2.1 5.6-5.8 1.6-5.1-3.2 0.9-5.9 5.4-2.6 5.3 2.9-1 5.9"/>
<path class="y5 w6" d="M1173.7 753.9l-5.6 2.1-5-3.3 2-5.7 5.8-1.4 4.2 4.3-1.5 5.7-6 0.6-1.7-5.7 4.1-4.4 5.3 2.9"/>
<path class="y6 w6" d="M1175.3 749l-1.5 5.8-6-0.9 0.9-5.9 6 0.3 0 6-6-0.1-1.4-5.9 5.6-2.1 1.2 5.9-5.8 1.5-0.3-6 6-0.7 0 6-5.9 0.8-1.8-5.7 5.9-0.5-1 5.9-5.5-2.3 3.4-4.9 4.6 3.9-5.2 2.9"/>
<path class="g11" d="M1208.1 557.1l-8.7 6.8-6.7 8.7"/>
<path class="g10" d="M1192.7 572.6l-3.6 9.3-5.1 8.6-6.4 7.6-7.9 6.3-8.9 4.5-9.7 2.3"/>
<path class="g8" d="M1151.1 611.2l-8 0-7.9-1.3-7.5-2.7-6.9-4-6-5.4-4.5-6.6"/>
<path class="g6" d="M1110.3 591.2l-2-5.7-1.2-5.8-0.1-6 1-5.9 2.3-5.6 3.6-4.8"/>
<path class="g4" d="M1113.9 557.4l3.1-2.4 3.6-2 3.7-1.2 4-0.6 4 0.4 3.8 1.2"/>
<path class="g2" d="M1136.1 552.8l1.6 1.2 1.5 1.3 1.2 1.6 0.9 1.8 0.5 2 0 2-0.6 1.9-1 1.7"/>
<path class="g1" d="M1140.2 566.3l-0.7 0.7-0.7 0.7-0.5 0.9-0.4 0.9-0.2 1 0.1 1"/>
<circle class="d" cx="1132" cy="570.2" r="2.9"/>
<path class="g1" d="M1137.8 571.5l0.3 1 0.5 0.8 0.7 0.7 1 0.4 0.9 0.1 1-0.3 0.8-0.5 0.5-0.9 0.2-1-0.3-0.9-0.7-0.8-1-0.3-1 0.2-0.7 0.7-0.3 0.9 0.2 1 0.8 0.6 1 0.2 0.8-0.5 0.4-1"/>
<circle class="f1" cx="1141.1" cy="571.9" r="2.2"/>
<path class="g2" d="M1140.2 566.3l-1.5 1.3-1.8 0.8-2 0.1-1.9-0.6-1.6-1.3-0.8-1.8-0.1-2 0.9-1.8 1.6-1.2 1.9-0.3 1.9 0.7 1.2 1.6 0.2 2-0.9 1.7-1.8 0.9-2-0.3-1.2-1.6 0.2-2 1.3-1.5 2-0.1 1.5 1.3 0.6 1.9"/>
<circle class="f2" cx="1135.5" cy="563.8" r="3.9"/>
<path class="g4" d="M1136.1 552.8l3.3 2.3 2.5 3.1"/>
<path class="g3" d="M1141.9 558.2l1.1 2.8 1.5 2.6 1.9 2.3 2.2 2 2.6 1.5 2.9 1"/>
<path class="g1" d="M1154.1 570.4l0.9 0.1 1-0.1 1-0.2 1-0.4 0.8-0.5 0.7-0.7"/>
<circle class="d" cx="1162.4" cy="573.9" r="2.7"/>
<path class="g1" d="M1159.5 568.6l0.5-0.9 0.2-1 0-1-0.3-0.9-0.6-0.8-0.9-0.5-1-0.2-0.9 0.2-0.8 0.6-0.5 0.9-0.1 1 0.5 0.9 0.8 0.6 1 0.1 0.9-0.5 0.5-0.8 0-1-0.6-0.9-0.9-0.4-1 0.1"/>
<circle class="f1" cx="1156.9" cy="565.2" r="2.3"/>
<path class="g3" d="M1154.1 570.4l2.9 0.2 3-0.4"/>
<path class="g2" d="M1160 570.2l1.8-0.9 1.9-0.5 2-0.2 2 0.2 1.9 0.6 1.7 1.1 1.4 1.4 0.9 1.8"/>
<path class="g1" d="M1173.6 573.7l0.2 1 0.3 0.9 0.5 0.9 0.6 0.8 0.7 0.7 0.9 0.5"/>
<circle class="d" cx="1172.4" cy="582.9" r="2.8"/>
<path class="g1" d="M1176.8 578.5l1 0.2 1 0 0.9-0.3 0.9-0.5 0.6-0.8 0.3-1-0.1-1-0.5-0.9-0.8-0.6-0.9-0.2-1 0.2-0.8 0.6-0.3 0.9 0.1 1 0.7 0.8 0.9 0.3 1-0.3 0.6-0.8-0.1-1-0.7-0.7"/>
<circle class="f1" cx="1178.7" cy="575.8" r="2.1"/>
<path class="g2" d="M1173.6 573.7l0.4 2-0.3 1.9-1 1.8-1.5 1.3-1.9 0.6-2-0.2-1.7-1-1.1-1.7-0.2-2 0.8-1.8 1.5-1.2 2-0.2 1.8 0.8 1 1.8-0.1 1.9-1.2 1.7-1.9 0.6-1.9-0.6-1-1.7 0.1-2 1.4-1.5 2-0.2"/>
<circle class="f2" cx="1168.7" cy="576.1" r="4.1"/>
<path class="g3" d="M1160 570.2l2.7-1.3 2.2-2 1.4-2.7 0.4-3-0.9-2.8-1.9-2.3-2.7-1.3-3 0.1-2.6 1.4-1.6 2.6 0 3 1.5 2.6 2.7 1.3 3-0.5 2.1-2.2 0.3-2.9-1.4-2.7-2.7-1.3-3 0.4-2 2.2-0.2 3 1.8 2.4 3 0.2 2.2-2.1 0-3-2.5-1.8"/>
<circle class="f3" cx="1156.7" cy="560.3" r="6.3"/>
<path class="g4" d="M1141.9 558.2l1.5 3.7 0.2 4-1.2 3.8-2.4 3.2-3.5 1.9-4 0.4-3.8-1.3-2.8-2.8-1.2-3.8 0.8-4 2.6-3 3.8-1.2 3.9 1 2.7 3"/>
<path class="y0 w4" d="M1138.5 563.1l0.4 4-1.8 3.5-3.7 1.6"/>
<path class="y1 w4" d="M1133.4 572.2l-3.9-0.9-2.2-3.3 0.4-4"/>
<path class="y2 w4" d="M1127.7 564l2.7-2.9 4-0.6 2.9 2.8 0.4 4"/>
<path class="y3 w4" d="M1137.7 567.3l-2.4 3.2-3.9 0.8-3.4-2-0.8-3.9 2.5-3.1"/>
<path class="y4 w4" d="M1129.7 562.3l4 0.2 1.8 3.6-2.4 3.2-4 0.2-2.4-3.1 1.8-3.6 4-0.1"/>
<path class="y5 w4" d="M1132.5 562.7l1.5 3.7-2.8 2.8-4-0.8-1-3.9 3.1-2.5 3.4 2.1-0.6 4-3.8 1-1.8-3.6 2.9-2.8"/>
<path class="y6 w4" d="M1129.4 562.7l3.4 2.1-1.1 3.8-4-0.7-0.7-3.9 3.9-0.7 1.4 3.8-3.4 2.2-2.1-3.4 3.6-1.8 1.2 3.8-3.8 1.2-0.3-4 4-0.6 1.6 3.7-3.6 1.8-2.1-3.4 3.5-1.8 0.4 4-3.9 0.1 0.8-3.9 3.9 1.1"/>
<path class="g6" d="M1113.9 557.4l4.7-3.7 5.6-2.2"/>
<path class="g5" d="M1124.2 551.5l5-0.3 4.9-1.1 4.7-1.8 4.2-2.6 3.7-3.4 2.8-4.1"/>
<path class="g3" d="M1149.5 538.2l1-2.8 0.6-3 0.1-3-0.4-2.9-1-2.9-1.6-2.5"/>
<path class="g1" d="M1148.2 521.1l-0.7-0.7-0.8-0.6-0.9-0.5-0.9-0.3-1-0.1-1 0.1"/>
<circle class="d" cx="1144.2" cy="513.1" r="2.6"/>
<path class="g1" d="M1142.9 519l-0.9 0.4-0.9 0.6-0.6 0.8-0.3 0.9 0 1 0.3 0.9 0.6 0.8 0.9 0.5 1 0 0.9-0.3 0.7-0.8 0.3-1-0.3-0.9-0.7-0.7-1-0.3-0.9 0.3-0.6 0.8-0.1 1 0.6 0.9 0.9 0.4"/>
<circle class="f1" cx="1142.9" cy="522.8" r="2.1"/>
<path class="g3" d="M1148.2 521.1l-2.1-2.1-2.6-1.5"/>
<path class="g2" d="M1143.5 517.5l-2-0.4-1.8-0.8-1.7-1-1.5-1.4-1.1-1.6-0.7-1.9-0.3-2 0.4-2"/>
<path class="g1" d="M1134.8 506.4l0.4-0.9 0.4-0.9 0.1-1 0.1-1-0.2-1-0.4-0.9"/>
<circle class="d" cx="1140.3" cy="499.8" r="3.1"/>
<path class="g1" d="M1135.2 500.7l-0.7-0.8-0.7-0.6-1-0.3-1-0.1-0.9 0.3-0.9 0.6-0.5 0.8-0.2 1 0.3 1 0.6 0.7 0.9 0.5 1-0.1 0.8-0.5 0.5-0.9 0-1-0.6-0.8-1-0.4-0.9 0.3-0.6 0.8 0.1 1"/>
<circle class="f1" cx="1131.5" cy="501.2" r="2.4"/>
<path class="g2" d="M1134.8 506.4l0.9-1.7 1.4-1.4 1.9-0.9 2-0.1 1.8 0.7 1.5 1.4 0.8 1.8-0.2 2-1 1.7-1.7 1-2 0-1.8-1-0.9-1.8 0.3-2 1.3-1.5 2-0.3 1.8 0.8 1.2 1.6-0.2 2-1.4 1.5-1.9 0.4-1.8-1"/>
<circle class="f2" cx="1139.9" cy="507.7" r="3.9"/>
<path class="g3" d="M1143.5 517.5l-2.9-0.7-3 0.3-2.8 1.2-2.1 2.1-1.3 2.7-0.1 3 1.1 2.8 2.2 2 2.8 0.9 3-0.6 2.3-1.9 1-2.8-0.6-2.9-2-2.2-3-0.6-2.6 1.3-1.6 2.6 0.6 2.9 2.4 1.9 3 0 2.1-2.1 0.2-3-2.1-2.2-3 0.1-2.2 2 0.3 3"/>
<circle class="f3" cx="1137.5" cy="525.9" r="5.8"/>
<path class="g5" d="M1149.5 538.2l1.7-4.7 0.3-5"/>
<path class="g4" d="M1151.5 528.5l-0.9-3.9-0.3-4 0.4-4 1.2-3.8 1.9-3.5 2.8-2.9"/>
<path class="g2" d="M1156.6 506.4l1.7-1 1.9-0.7 1.9-0.4 2-0.1 2 0.4 1.8 0.9 1.5 1.3 1.1 1.7"/>
<path class="g1" d="M1170.5 508.5l0.3 0.9 0.4 0.9 0.6 0.9 0.7 0.7 0.8 0.6 0.9 0.4"/>
<circle class="d" cx="1170.9" cy="517.3" r="3.1"/>
<path class="g1" d="M1174.2 512.9l1 0.1 1-0.1 0.9-0.4 0.8-0.6 0.5-0.9 0.2-1-0.2-0.9-0.6-0.9-0.8-0.5-1-0.2-1 0.4-0.6 0.7-0.3 0.9 0.3 1 0.7 0.7 1 0.2 0.9-0.4 0.6-0.8 0.1-1-0.6-0.8"/>
<circle class="f1" cx="1176.5" cy="509.6" r="2.3"/>
<path class="g2" d="M1170.5 508.5l0.6 1.9-0.1 2-0.8 1.8-1.3 1.5-1.8 0.8-2 0-1.9-0.8-1.2-1.5-0.5-2 0.6-1.9 1.4-1.4 2-0.4 1.9 0.6 1.2 1.7 0 2-1.1 1.6-1.9 0.5-1.9-0.7-1.1-1.7 0.3-1.9 1.4-1.4 2 0.1"/>
<circle class="f2" cx="1165.4" cy="512.6" r="4.4"/>
<path class="g4" d="M1156.6 506.4l3.4-2 3.9-1"/>
<path class="g3" d="M1163.9 503.4l3 0.2 3-0.2 2.9-0.7 2.8-1.2 2.4-1.7 2-2.3"/>
<path class="g1" d="M1180 497.5l0.5-0.8 0.3-1 0.2-1 0-1-0.1-0.9-0.4-1"/>
<circle class="d" cx="1186.4" cy="491" r="2.9"/>
<path class="g1" d="M1180.5 491.8l-0.6-0.8-0.8-0.6-1-0.3-1-0.1-0.9 0.3-0.8 0.5-0.6 0.9-0.2 1 0.2 0.9 0.7 0.8 0.9 0.4 1 0 0.8-0.5 0.5-0.9 0-1-0.6-0.8-1-0.4-0.9 0.2-0.7 0.8 0 1"/>
<circle class="f1" cx="1176.9" cy="492.2" r="2.3"/>
<path class="g3" d="M1180 497.5l1.4-2.6 0.7-2.9"/>
<path class="g2" d="M1182.1 492l-0.2-2 0.2-2 0.5-2 0.8-1.8 1.2-1.6 1.6-1.2 1.8-0.8 2-0.3"/>
<path class="g1" d="M1190 480.3l1 0.2 1 0 1-0.1 0.9-0.3 0.9-0.5 0.8-0.7"/>
<circle class="d" cx="1198" cy="484.1" r="2.9"/>
<path class="g1" d="M1195.6 478.9l0.5-0.8 0.4-0.9 0-1-0.2-1-0.6-0.8-0.8-0.6-0.9-0.3-1 0.1-0.9 0.6-0.5 0.8-0.2 1 0.4 0.9 0.7 0.7 1 0.2 1-0.4 0.6-0.8 0-1-0.6-0.8-0.9-0.4-1 0.3"/>
<circle class="f1" cx="1193.2" cy="476.2" r="2.1"/>
<path class="g2" d="M1190 480.3l2 0.4 1.7 0.9 1.4 1.5 0.7 1.9-0.1 2-0.8 1.8-1.6 1.2-1.9 0.5-2-0.5-1.4-1.3-0.7-1.9 0.5-1.9 1.4-1.4 2-0.4 1.8 0.8 1 1.7-0.3 2-1.6 1.2-2 0-1.5-1.4-0.2-2 1.3-1.4"/>
<circle class="f2" cx="1191" cy="486" r="3.8"/>
<path class="g3" d="M1182.1 492l-0.3-3-1-2.8-1.9-2.4-2.5-1.6-2.9-0.7-3 0.3-2.7 1.4-1.9 2.3-0.8 2.9 0.5 3 1.7 2.5 2.6 1.4 3 0 2.7-1.4 1.6-2.5-0.1-3-2.1-2.2-2.9-0.3-2.5 1.7-0.7 2.9 1.2 2.8 2.6 1.5 2.9-0.9 1.2-2.7-1.1-2.8-2.9-0.8"/>
<circle class="f3" cx="1173" cy="492.6" r="6.4"/>
<path class="g4" d="M1163.9 503.4l4 0.3 3.7 1.5 2.8 2.8 1.6 3.7-0.1 4-1.7 3.6-3.2 2.4-4 0.6-3.7-1.4-2.5-3.2-0.4-4 1.9-3.5 3.6-1.8 3.9 0.8"/>
<path class="y0 w4" d="M1169.8 509.2l2.7 3 0.7 3.9-1.5 3.7"/>
<path class="y1 w4" d="M1171.7 519.8l-3.6 1.7-3.9-1.1-1.8-3.5"/>
<path class="y2 w4" d="M1162.4 516.9l0.6-4 3.4-2.1 3.9 1.3 2 3.4"/>
<path class="y3 w4" d="M1172.3 515.5l-1.6 3.6-3.7 1.5-3.4-2.2-0.9-3.8 2.8-2.9"/>
<path class="y4 w4" d="M1165.5 511.7l3.9 0.8 1.3 3.7-2.9 2.8-3.8-1.1-0.6-4 3.5-1.9 3.5 2"/>
<path class="y5 w4" d="M1170.4 514l-0.1 4-3.5 2-3.5-1.9 0.5-4 3.6-1.7 2.7 3-2 3.5-4-0.5-0.6-4 3.8-1.1"/>
<path class="y6 w4" d="M1167.3 513.3l2.7 3-2.3 3.2-3.5-1.9 0.9-3.9 4 0.1 0.7 3.9-3.4 2-2.8-2.9 3.3-2.3 3.2 2.3-3 2.7-2.2-3.4 3.7-1.5 2.1 3.4-3.6 1.7-1.6-3.7 3.4-2.1 1.1 3.8-3.9 0.6 0.2-4 4-0.1"/>
<path class="g5" d="M1151.5 528.5l-1.1-4.9-2.6-4.3-3.9-3.1-4.8-1.6-5 0.4-4.4 2.3-3 4-0.9 4.9 1.4 4.8 3.6 3.5 4.9 1.2 4.7-1.6 3.2-3.8 0.3-5"/>
<path class="y0 w5" d="M1143.9 525.3l-2.6-4.3-4.6-1.8-4.8 1.5"/>
<path class="y1 w5" d="M1131.9 520.7l-2.6 4.2 1 4.9 4.1 2.9"/>
<path class="y2 w5" d="M1134.4 532.7l4.9-1.2 3.2-3.9-0.9-4.9-4.2-2.7"/>
<path class="y3 w5" d="M1137.4 520l-4.9 1.1-2.7 4.2 1.3 4.9 4.1 2.7 4.9-1"/>
<path class="y4 w5" d="M1140.1 531.9l1.5-4.8-3.5-3.7-4.8 1.5-1.5 4.8 3.1 3.9 5-0.7 1.1-4.9"/>
<path class="y5 w5" d="M1141 528l-4.2-2.8-4.2 2.8 0.8 4.9 4.9 0.8 2.6-4.3-2.4-4.3-5-0.1-0.9 4.9 4.7 1.7 3.7-3.4"/>
<path class="y6 w5" d="M1141 528.2l-1.5-4.7-5 0-2.3 4.5 4.1 2.8 3-4-3.2-3.9-4.2 2.7 1 4.9 5 0.4 0.3-5-5-0.3-0.5 5 5 0.9-0.4-5-4.8 1.5 2.1 4.6 4.3-2.6-1.8-4.7-4.6 1.9 1.5 4.7 4.8-1.4"/>
<path class="g6" d="M1124.2 551.5l6-0.4 5.8 1.5 5 3.3 3.5 4.9 1.4 5.8-1 5.9-3.4 5-5.1 3.1-6 0.3-5.5-2.4-3.6-4.8-0.6-6 2.5-5.4 5.1-3.2"/>
<path class="y0 w6" d="M1128.3 559.1l6 0.2 4.5 4.1 1 5.9"/>
<path class="y1 w6" d="M1139.8 569.3l-2.3 5.5-5.1 3.2-5.9-0.8"/>
<path class="y2 w6" d="M1126.5 577.2l-3.3-5 0.9-6 5.1-3.1 5.8 1.3"/>
<path class="y3 w6" d="M1135 564.4l3.3 5.1-1.2 5.8-5.6 2.2-4.9-3.5-0.1-6"/>
<path class="y4 w6" d="M1126.5 568l5.2-3 5.7 2 1.7 5.7-3.5 4.9-6-0.5-2.1-5.6 3.4-5"/>
<path class="y5 w6" d="M1130.9 566.5l6 0.8 1.3 5.8-4.6 3.9-5.1-3.2 1.1-5.9 5.7-1.7 3.8 4.7-3.2 5.1-5.8-1.5-1.3-5.8"/>
<path class="y6 w6" d="M1128.8 568.7l5-3.4 4.9 3.5-1.7 5.8-5.9 0.9-3.1-5.2 4.5-4 3.7 4.7-3.9 4.5-5.5-2.4 3.4-4.9 5.3 2.9-1.3 5.8-5.6-2 2.1-5.7 5.8 1.4-3.1 5.1-3.8-4.6 5.1-3 1.3 5.8-5.7 1.7-0.5-6"/>
<path class="g8" d="M1110.3 591.2l-2.7-7.5-0.5-8"/>
<path class="g7" d="M1107.1 575.7l1.8-6.8 0.9-6.9-0.2-7-1.5-6.9-2.7-6.4-4-5.8"/>
<path class="g5" d="M1101.4 535.9l-3.7-3.3-4.1-2.8-4.6-2.1-4.8-1.3-5-0.4-4.9 0.8"/>
<path class="g3" d="M1074.3 526.8l-2.8 1.2-2.6 1.5-2.3 1.9-1.9 2.3-1.4 2.7-0.9 2.9"/>
<path class="g1" d="M1062.4 539.3l0 1 0.1 1 0.3 0.9 0.4 0.9 0.6 0.8 0.7 0.7"/>
<circle class="d" cx="1060" cy="547.7" r="3"/>
<path class="g1" d="M1064.5 544.6l0.9 0.4 1 0.3 1-0.1 0.9-0.4 0.8-0.7 0.5-0.8 0.1-1-0.3-1-0.6-0.8-0.9-0.4-1 0-0.9 0.5-0.5 0.8-0.1 1 0.5 0.9 0.9 0.5 1-0.1 0.7-0.7 0.2-1-0.5-0.8"/>
<circle class="f1" cx="1067.4" cy="541.9" r="2.1"/>
<path class="g3" d="M1062.4 539.3l-0.1 3 0.7 2.9"/>
<path class="g2" d="M1063 545.2l1 1.7 0.7 1.9 0.3 2 0 2-0.4 1.9-0.9 1.8-1.4 1.5-1.6 1.1"/>
<path class="g1" d="M1060.7 559.1l-1 0.2-0.9 0.4-0.9 0.5-0.7 0.7-0.6 0.8-0.4 0.9"/>
<circle class="d" cx="1051.7" cy="559.2" r="3"/>
<path class="g1" d="M1056.2 562.6l-0.2 1 0.1 1 0.3 0.9 0.7 0.8 0.8 0.6 1 0.2 1-0.2 0.8-0.5 0.6-0.9 0.2-0.9-0.3-1-0.7-0.7-1-0.3-1 0.3-0.7 0.7-0.2 0.9 0.4 1 0.8 0.5 1 0.1 0.8-0.6"/>
<circle class="f1" cx="1059.1" cy="564.6" r="2.2"/>
<path class="g2" d="M1060.7 559.1l-2 0.5-2-0.1-1.8-0.8-1.4-1.4-0.8-1.9 0-2 0.9-1.8 1.5-1.2 2-0.4 1.9 0.6 1.4 1.5 0.4 1.9-0.8 1.9-1.6 1.2-2 0-1.7-1.1-0.8-1.8 0.5-2 1.7-1 1.9 0.5 0.9 1.8-0.6 2"/>
<circle class="f2" cx="1056.8" cy="553.8" r="3.9"/>
<path class="g3" d="M1063 545.2l1.5 2.6 2.2 2 2.7 1.3 3 0.2 2.9-0.9 2.3-1.9 1.3-2.7 0-3-1.3-2.7-2.3-1.9-3-0.4-2.8 1.1-1.8 2.5-0.2 2.9 1.5 2.6 2.8 1.1 2.8-1.1 1.7-2.5 0-3-1.6-2.5-3-0.5-2.7 1.4-0.7 2.9 1.3 2.7 2.7 1.3 2.8-1.1"/>
<circle class="f3" cx="1072.8" cy="543.2" r="5.3"/>
<path class="g5" d="M1074.3 526.8l-4.6 2-3.9 3.1"/>
<path class="g4" d="M1065.8 531.9l-2.2 3.4-2.7 2.9-3.1 2.5-3.6 1.8-3.9 1-4 0.1"/>
<path class="g2" d="M1046.3 543.6l-1.9-0.4-1.9-0.8-1.7-1-1.5-1.4-1.1-1.6-0.7-1.9-0.2-2 0.3-2"/>
<path class="g1" d="M1037.6 532.5l0.5-0.8 0.3-1 0.2-1 0-1-0.2-0.9-0.4-1"/>
<circle class="d" cx="1043.6" cy="525.6" r="3.3"/>
<path class="g1" d="M1038 526.8l-0.6-0.8-0.8-0.6-1-0.3-1-0.1-0.9 0.3-0.8 0.6-0.6 0.8-0.2 1 0.3 1 0.6 0.8 0.9 0.4 1-0.1 0.9-0.5 0.4-0.9 0-1-0.6-0.8-0.9-0.3-1 0.2-0.6 0.8 0.1 1"/>
<circle class="f1" cx="1034.4" cy="527.9" r="2.1"/>
<path class="g2" d="M1037.6 532.5l0.9-1.7 1.5-1.4 1.8-0.8 2-0.2 1.9 0.7 1.4 1.4 0.8 1.8-0.1 2-1.1 1.7-1.7 1-2 0-1.7-1-0.9-1.8 0.2-2 1.3-1.5 2-0.3 1.8 0.8 1.1 1.7-0.5 1.9-1.7 1.2-1.9-0.2-1.5-1.3"/>
<circle class="f2" cx="1044.1" cy="532.6" r="4.4"/>
<path class="g4" d="M1046.3 543.6l-3.9-0.9-3.5-1.9"/>
<path class="g3" d="M1038.9 540.8l-2.1-2.1-2.3-1.9-2.7-1.4-2.8-1-3-0.4-3 0.2"/>
<path class="g1" d="M1023 534.2l-0.9 0.3-0.9 0.4-0.9 0.6-0.7 0.7-0.5 0.8-0.4 1"/>
<circle class="d" cx="1014.2" cy="534.4" r="2.8"/>
<path class="g1" d="M1018.7 538l-0.1 1 0.1 0.9 0.4 1 0.7 0.7 0.8 0.5 1 0.2 1-0.2 0.8-0.6 0.6-0.9 0.1-1-0.4-0.9-0.7-0.7-1-0.2-0.9 0.3-0.7 0.7-0.2 1 0.4 0.9 0.9 0.5 1-0.3 0.5-0.8"/>
<circle class="f1" cx="1021.6" cy="539.6" r="2.1"/>
<path class="g3" d="M1023 534.2l-2.8 0.9-2.6 1.6"/>
<path class="g2" d="M1017.6 536.7l-1.4 1.4-1.5 1.3-1.8 0.9-1.9 0.6-2 0.1-2-0.3-1.8-0.8-1.5-1.3"/>
<path class="g1" d="M1003.7 538.6l-0.6-0.8-0.6-0.8-0.8-0.7-0.8-0.5-1-0.3-1-0.1"/>
<circle class="d" cx="1000.7" cy="529.9" r="3.2"/>
<path class="g1" d="M998.9 535.4l-1 0.1-0.9 0.4-0.8 0.6-0.5 0.8-0.3 1 0.1 1 0.5 0.9 0.7 0.7 1 0.2 1-0.1 0.8-0.6 0.5-0.9-0.1-1-0.5-0.8-0.9-0.5-1 0.1-0.8 0.7-0.3 0.9 0.2 1 0.8 0.7"/>
<circle class="f1" cx="997.8" cy="539.8" r="2.2"/>
<path class="g2" d="M1003.7 538.6l-1.1-1.7-0.5-1.9 0.2-2 0.9-1.8 1.6-1.3 1.9-0.6 2 0.3 1.6 1.1 1 1.8 0 2-1.1 1.7-1.7 1-2-0.1-1.6-1.3-0.6-1.9 0.7-1.8 1.7-1 2 0.5 1.1 1.6-0.3 2-1.7 1-2-0.1"/>
<circle class="f2" cx="1006.6" cy="534.5" r="4"/>
<path class="g3" d="M1017.6 536.7l-2 2.2-1.3 2.7-0.3 3 0.9 2.9 1.8 2.3 2.7 1.4 3 0.1 2.7-1.3 1.8-2.3 0.5-3-1.2-2.8-2.5-1.7-3-0.1-2.5 1.7-1 2.8 0.5 3 2.3 1.9 3 0.4 2.7-1.4 1-2.8-1-2.9-2.5-1.5-2.9 0.9-1.7 2.5 0.8 2.9 2.5 1.6"/>
<circle class="f3" cx="1023.9" cy="545.4" r="5.8"/>
<path class="g4" d="M1038.9 540.8l-2.8-2.9-1.7-3.5-0.5-4 0.9-3.9 2.2-3.3 3.4-2.2 3.9-0.7 3.9 1.1 3 2.6 1.5 3.7-0.5 4-2.3 3.2-3.6 1.7-4-0.6"/>
<path class="y0 w4" d="M1042.3 536l-3.1-2.6-1.2-3.7 1.5-3.7"/>
<path class="y1 w4" d="M1039.5 526l3.3-2.3 4 0.1 3.2 2.4"/>
<path class="y2 w4" d="M1050 526.2l1 3.9-1.8 3.6-3.9 0.9-3.3-2.3"/>
<path class="y3 w4" d="M1042 532.3l-0.5-3.9 2.8-2.9 4 0 2.6 3.1-1.1 3.9"/>
<path class="y4 w4" d="M1049.8 532.5l-3.8 1.1-3.2-2.5-0.2-4 3-2.6 3.8 1.1 0.6 3.9-3.3 2.3"/>
<path class="y5 w4" d="M1046.7 531.8l-3.1-2.5 0.5-3.9 3.8-1.5 3.1 2.6-1.8 3.6-3.8-1.1-0.1-4 4-0.7 1.8 3.6-2.9 2.7"/>
<path class="y6 w4" d="M1048.2 530.6l-3.4-2.2 1.5-3.7 3.9 1.2-0.9 3.9-3.9 0.7-1.9-3.6 3.8-1.4 1.9 3.5-3.4 2.1-1.5-3.7 3.5-1.9 2.8 2.9-2.8 2.8-2.1-3.4 3.7-1.4 1.7 3.7-3.4 2.2-1.5-3.7 4-0.1-0.2 4-3.6-1.9"/>
<path class="g5" d="M1065.8 531.9l-2.8 4.2-1.3 4.8 0.4 5 2.1 4.5 3.7 3.4 4.7 1.7 5-0.4 4.3-2.5 2.6-4.3 0.3-5-2.2-4.4-4.3-2.7-5 0-4.1 2.8"/>
<path class="y0 w5" d="M1069.2 539l-1.8 4.7 1.1 4.9 3.9 3.1"/>
<path class="y1 w5" d="M1072.4 551.7l5 0.1 3.8-3.3 0.3-5"/>
<path class="y2 w5" d="M1081.5 543.5l-2.6-4.2-4.7-1.9-4.4 2.3-1.5 4.8"/>
<path class="y3 w5" d="M1068.3 544.5l2.3 4.5 4.8 1.4 4.5-2.1 2-4.6-2.9-4.2"/>
<path class="y4 w5" d="M1079 539.5l-4.9 0.3-3 4.1 2.2 4.5 5-0.1 3.2-3.8-1.3-4.9-4.9-0.9"/>
<path class="y5 w5" d="M1075.3 538.7l-3.2 3.8 2 4.6 4.8 1.2 3.7-3.4-2.3-4.4-5 0.2-2.3 4.4 3.4 3.7 4.4-2.3-1-4.9"/>
<path class="y6 w5" d="M1079.8 541.6l-5 0.2-2.2 4.5 3.1 3.9 4.6-1.8-2-4.6-5 0.7-0.5 5 4.5 2.2 3.6-3.5-2.2-4.5-4.2 2.7 3.6 3.5 4-2.9-1.9-4.7-4.6 2.1 2.1 4.5 4.3-2.5-2.6-4.3-3.7 3.4 2.8 4.1 4.1-2.9"/>
<path class="g7" d="M1101.4 535.9l-5.2-4.7-6.2-3.2"/>
<path class="g6" d="M1090 528l-5.8-1.3-5.6-2.2-5.1-3.2-4.5-4-3.4-4.9-2.1-5.6"/>
<path class="g4" d="M1063.5 506.8l-0.4-4 0.2-4 0.9-3.9 1.6-3.6 2.4-3.3 3.1-2.5"/>
<path class="g2" d="M1071.3 485.5l1.8-0.9 1.9-0.5 2-0.3 2 0.2 1.9 0.6 1.7 1 1.4 1.5 1 1.7"/>
<path class="g1" d="M1085 488.8l0.1 1 0.4 0.9 0.4 0.9 0.6 0.8 0.8 0.7 0.9 0.4"/>
<circle class="d" cx="1084.6" cy="497.9" r="3.2"/>
<path class="g1" d="M1088.2 493.5l1 0.3 1 0 0.9-0.3 0.8-0.6 0.6-0.8 0.3-1-0.1-1-0.5-0.8-0.7-0.7-1-0.2-1 0.2-0.7 0.7-0.4 0.9 0.2 1 0.6 0.8 1 0.3 1-0.4 0.5-0.8 0-1-0.6-0.7"/>
<circle class="f1" cx="1090.7" cy="490.5" r="2.3"/>
<path class="g2" d="M1085 488.8l0.3 2-0.2 2-1 1.7-1.5 1.3-1.9 0.7-2-0.2-1.7-1-1.1-1.6-0.3-2 0.8-1.9 1.6-1.2 1.9-0.3 1.9 0.9 1 1.7-0.1 2-1.3 1.6-1.9 0.6-1.9-0.7-1.2-1.6 0.1-2 1.3-1.6 2-0.1"/>
<circle class="f2" cx="1079.3" cy="492.3" r="4.2"/>
<path class="g4" d="M1071.3 485.5l3.6-1.7 3.9-0.7"/>
<path class="g3" d="M1078.8 483.1l3 0.4 3 0 3-0.5 2.8-1 2.6-1.5 2.2-2.1"/>
<path class="g1" d="M1095.4 478.4l0.5-0.8 0.4-0.9 0.3-1 0.1-1-0.1-1-0.3-0.9"/>
<circle class="d" cx="1102.2" cy="472.1" r="3.2"/>
<path class="g1" d="M1096.3 472.8l-0.6-0.9-0.7-0.7-0.9-0.4-1-0.1-1 0.1-0.8 0.5-0.7 0.8-0.2 1 0.1 1 0.6 0.8 0.8 0.5 1 0.1 0.9-0.5 0.6-0.8 0-1-0.5-0.9-0.9-0.4-1 0.1-0.8 0.6-0.2 1"/>
<circle class="f1" cx="1092.9" cy="473.3" r="2.4"/>
<path class="g3" d="M1095.4 478.4l1.6-2.5 0.9-2.9"/>
<path class="g2" d="M1097.9 473l0-2 0.4-1.9 0.7-1.9 1-1.7 1.4-1.5 1.7-1.1 1.9-0.6 2 0"/>
<path class="g1" d="M1107 462.3l0.9 0.2 1 0.2 1-0.1 1-0.2 0.9-0.3 0.8-0.6"/>
<circle class="d" cx="1114.8" cy="467.2" r="2.9"/>
<path class="g1" d="M1112.6 461.5l0.7-0.8 0.4-0.9 0.2-1-0.2-1-0.4-0.8-0.8-0.7-0.9-0.4-1 0-0.9 0.5-0.6 0.7-0.3 1 0.3 1 0.7 0.7 0.9 0.3 1-0.3 0.7-0.7 0.1-1-0.5-0.8-0.9-0.4-1 0.3"/>
<circle class="f1" cx="1110.8" cy="458.4" r="2"/>
<path class="g2" d="M1107 462.3l1.9 0.5 1.6 1.1 1.2 1.6 0.5 2-0.2 2-1.1 1.7-1.6 1.1-2 0.3-1.9-0.7-1.3-1.5-0.4-2 0.6-1.8 1.6-1.3 2-0.2 1.7 1 0.8 1.9-0.6 1.9-1.7 1-2-0.3-1.4-1.4 0-2 1.5-1.3"/>
<circle class="f2" cx="1106.5" cy="467.7" r="3.8"/>
<path class="g3" d="M1097.9 473l0.1-3-0.9-2.8-1.7-2.5-2.4-1.8-2.9-0.7-3 0.4-2.6 1.5-1.7 2.5-0.4 3 0.9 2.8 2.2 2.1 2.9 0.7 2.9-0.9 2-2.2 0.4-3-1.1-2.7-2.8-1.3-2.8 0.9-1.6 2.5 0.3 3 2.4 1.8 3-0.3 1.7-2.4-0.4-3-2.5-1.7-2.9 0.3"/>
<circle class="f3" cx="1089.5" cy="471" r="6.8"/>
<path class="g4" d="M1078.8 483.1l4 0.5 3.6 1.8 2.8 2.9 1.5 3.7 0 4-1.5 3.7-3 2.6-3.9 1.1-3.9-0.8-3-2.6-1.4-3.7 0.8-4 2.7-2.9 3.9-0.8"/>
<path class="y0 w4" d="M1081.4 488.6l3.7 1.5 1.8 3.5-0.6 4"/>
<path class="y1 w4" d="M1086.3 497.6l-3 2.6-4 0.5-3-2.6"/>
<path class="y2 w4" d="M1076.3 498.1l-0.9-3.9 2.2-3.4 3.9-1.1 3.3 2.3"/>
<path class="y3 w4" d="M1084.8 492l0.5 4-3.1 2.6-4-0.4-2.2-3.3 1.4-3.7"/>
<path class="y4 w4" d="M1077.4 491.2l3.8-1.2 3.1 2.5-0.3 4-3.8 1.4-3.1-2.5 0.6-4 3.5-1.8"/>
<path class="y5 w4" d="M1081.2 489.6l3.5 2-0.6 3.9-3.9 0.9-2-3.4 2.1-3.4 4 0 1.7 3.6-3.2 2.3-3.1-2.5 2-3.5"/>
<path class="y6 w4" d="M1081.7 489.5l3.5 1.8-1.5 3.7-3.9-1.1-0.4-4 3.7-1.5 2.6 3-2.8 2.9-2.5-3.2 3.2-2.5 3.1 2.5-1.4 3.8-3.9-0.5 0.4-4 4-0.4-0.9 4-3.5-1.9 1.3-3.8 3.2 2.4-2 3.4-2.7-2.9 3.4-2.1"/>
<path class="g6" d="M1063.5 506.8l-0.7-6 1.1-5.9"/>
<path class="g5" d="M1063.9 494.9l2.3-4.4 1.7-4.7 1-4.9 0-5-0.9-5-2-4.6"/>
<path class="g3" d="M1066 466.3l-1.8-2.3-2.1-2.2-2.5-1.7-2.7-1.3-2.9-0.7-3-0.1"/>
<path class="g1" d="M1051 458l-0.9 0.2-1 0.3-0.8 0.5-0.8 0.7-0.7 0.7-0.4 0.9"/>
<circle class="d" cx="1041.9" cy="457.7" r="3.2"/>
<path class="g1" d="M1046.4 461.3l-0.2 1 0 1 0.3 0.9 0.6 0.9 0.9 0.5 0.9 0.3 1-0.1 0.9-0.5 0.6-0.8 0.2-1-0.3-1-0.6-0.7-1-0.3-1 0.2-0.7 0.6-0.3 1 0.4 0.9 0.8 0.7 1 0 0.8-0.6"/>
<circle class="f1" cx="1049.3" cy="463.4" r="2.2"/>
<path class="g3" d="M1051 458l-2.9 0.6-2.7 1.4"/>
<path class="g2" d="M1045.4 460l-1.4 1.4-1.6 1.1-1.9 0.9-1.9 0.4-2 0.1-2-0.4-1.7-1-1.5-1.3"/>
<path class="g1" d="M1031.4 461.2l-0.5-0.9-0.6-0.8-0.7-0.7-0.8-0.5-1-0.4-1-0.2"/>
<circle class="d" cx="1029" cy="452.5" r="3.1"/>
<path class="g1" d="M1026.8 457.7l-1 0.1-0.9 0.3-0.8 0.6-0.6 0.8-0.3 1 0 1 0.4 0.9 0.8 0.7 0.9 0.3 1-0.1 0.8-0.5 0.6-0.9 0-1-0.5-0.9-0.9-0.5-1 0.1-0.8 0.6-0.2 0.9 0.4 0.9 0.9 0.5"/>
<circle class="f1" cx="1026.3" cy="461.1" r="2.1"/>
<path class="g2" d="M1031.4 461.2l-1-1.8-0.3-1.9 0.3-2 1-1.7 1.6-1.3 1.9-0.4 2 0.4 1.6 1.2 0.8 1.8-0.1 2-1.1 1.6-1.8 0.9-2-0.2-1.5-1.3-0.5-1.9 0.9-1.8 1.8-0.8 2 0.4 1.1 1.7-0.1 2-1.7 1.1-2-0.1"/>
<circle class="f2" cx="1035.8" cy="456.1" r="4.3"/>
<path class="g3" d="M1045.4 460l-2.1 2.1-1.5 2.6-0.5 3 0.6 2.9 1.5 2.6 2.5 1.7 2.9 0.6 2.9-0.7 2.3-1.9 1.2-2.8-0.3-2.9-1.8-2.5-2.8-1.1-2.9 0.5-2.2 2.1-0.4 3 1.7 2.5 2.8 1.1 2.9-0.8 1.9-2.3 0-3-1.9-2.3-3-0.4-2.3 1.9-0.1 3 2.2 2.1"/>
<circle class="f3" cx="1051" cy="468.6" r="5.6"/>
<path class="g5" d="M1066 466.3l-3-3.9-3.9-3.1"/>
<path class="g4" d="M1059.1 459.3l-3.8-1.5-3.4-2-3-2.6-2.5-3.1-1.8-3.6-0.9-3.9"/>
<path class="g2" d="M1043.7 442.6l0-2 0.4-2 0.7-1.9 1.1-1.7 1.4-1.4 1.6-1.1 1.9-0.6 2 0"/>
<path class="g1" d="M1052.8 431.9l1 0.3 1 0.1 1 0 1-0.2 0.9-0.4 0.8-0.6"/>
<circle class="d" cx="1060.8" cy="436.8" r="3"/>
<path class="g1" d="M1058.5 431.1l0.7-0.7 0.4-0.9 0.2-1-0.2-1-0.4-0.9-0.7-0.7-1-0.3-1 0-0.9 0.4-0.6 0.8-0.3 0.9 0.3 1 0.7 0.7 0.9 0.3 1-0.2 0.7-0.7 0.1-1-0.5-0.9-0.9-0.4-1 0.1"/>
<circle class="f1" cx="1056.7" cy="428.7" r="2.7"/>
<path class="g2" d="M1052.8 431.9l2 0.5 1.6 1.2 1.2 1.6 0.5 1.9-0.3 2-1 1.7-1.7 1.1-2 0.3-1.9-0.7-1.3-1.5-0.4-2 0.7-1.9 1.5-1.2 2-0.1 1.8 1 0.9 1.8-0.4 1.9-1.4 1.5-2 0.3-1.7-1-0.7-1.9 0.5-1.9"/>
<circle class="f2" cx="1052.9" cy="438.4" r="4"/>
<path class="g4" d="M1043.7 442.6l0.1-4 1.2-3.8"/>
<path class="g3" d="M1045 434.8l1.7-2.5 1.3-2.7 0.9-2.9 0.4-2.9-0.2-3-0.8-2.9"/>
<path class="g1" d="M1048.3 417.9l-0.5-0.9-0.6-0.8-0.7-0.7-0.8-0.5-1-0.4-1-0.2"/>
<circle class="d" cx="1045.6" cy="409.5" r="3.3"/>
<path class="g1" d="M1043.7 414.4l-1 0.1-0.9 0.3-0.8 0.6-0.6 0.8-0.3 0.9 0 1 0.4 1 0.7 0.7 1 0.3 1-0.1 0.8-0.5 0.5-0.9 0.1-1-0.5-0.9-0.9-0.5-1 0.1-0.8 0.6-0.3 0.9 0.3 1 0.8 0.5"/>
<circle class="f1" cx="1042.5" cy="418.1" r="2"/>
<path class="g3" d="M1048.3 417.9l-1.5-2.6-2-2.2"/>
<path class="g2" d="M1044.8 413.1l-1.7-1.1-1.6-1.3-1.2-1.5-1-1.7-0.5-2-0.1-2 0.4-1.9 0.9-1.8"/>
<path class="g1" d="M1040 399.8l0.8-0.7 0.6-0.8 0.5-0.8 0.3-1 0.1-1-0.1-1"/>
<circle class="d" cx="1048.1" cy="396" r="2.6"/>
<path class="g1" d="M1042.2 394.5l-0.3-0.9-0.6-0.8-0.8-0.7-0.9-0.4-1 0-0.9 0.3-0.8 0.6-0.5 0.9-0.1 1 0.4 0.9 0.7 0.7 1 0.3 0.9-0.2 0.8-0.7 0.2-1-0.3-0.9-0.8-0.7-0.9-0.1-0.9 0.5-0.3 1"/>
<circle class="f1" cx="1038.2" cy="394.3" r="2.2"/>
<path class="g2" d="M1040 399.8l1.5-1.4 1.8-0.8 2-0.2 1.9 0.5 1.6 1.2 0.9 1.8 0.2 2-0.8 1.8-1.5 1.3-2 0.4-1.9-0.6-1.3-1.5-0.3-2 0.9-1.8 1.7-1 2 0.3 1.4 1.5 0.1 1.9-1.3 1.5-2 0.3-1.7-1-0.6-2"/>
<circle class="f2" cx="1045.5" cy="402.6" r="3.9"/>
<path class="g3" d="M1044.8 413.1l-2.6-1.6-2.9-0.7-3 0.3-2.7 1.4-2 2.2-0.9 2.8 0.3 3 1.5 2.6 2.6 1.5 3 0.2 2.7-1.3 1.6-2.6 0-3-1.6-2.5-2.8-1.1-3 0.6-2 2.2 0.1 3 1.9 2.3 2.9 0.6 2.8-1.2 0.9-2.9-1.2-2.7-2.8-1.3-2.8 1.1-1.3 2.7"/>
<circle class="f3" cx="1036.3" cy="417.4" r="6.7"/>
<path class="g4" d="M1045 434.8l2.3-3.3 3.1-2.4 3.9-1.2 4 0.3 3.5 1.7 2.6 3.1 1.1 3.9-0.8 3.9-2.5 3.1-3.7 1.6-3.9-0.5-3.2-2.5-1.3-3.7 0.9-3.9"/>
<path class="y0 w4" d="M1051 434.9l3-2.6 4-0.1 3.1 2.6"/>
<path class="y1 w4" d="M1061.1 434.8l0.9 3.9-2.1 3.4-3.7 1.5"/>
<path class="y2 w4" d="M1056.2 443.6l-3.8-1.2-2.2-3.4 0.3-3.9 3.3-2.3"/>
<path class="y3 w4" d="M1053.8 432.8l3.9 1 1.6 3.7-1.7 3.6-3.7 1.3-3-2.6"/>
<path class="y4 w4" d="M1050.9 439.8l0.8-3.9 3.9-1 3 2.6-0.3 4-3.2 2.4-3.4-2.2-0.2-4"/>
<path class="y5 w4" d="M1051.5 437.7l3.7-1.3 3 2.7-1.5 3.7-4-0.1-0.8-3.9 3-2.6 3.8 1.4-1 3.9-4 0.5-1.8-3.5"/>
<path class="y6 w4" d="M1051.9 438.5l2.5-3.1 3.7 1.7-1.8 3.6-3.8-1.3 0.1-4 4 0.3 0 4-4-0.5 1.2-3.8 3.9 0.8-0.4 4-4 0 0-4 3.9 0.7 0.3 4-4-0.7 1.1-3.9 3.8 1-0.4 4-4-0.5 1.5-3.7"/>
<path class="g5" d="M1059.1 459.3l-4.7-1.8-5-0.4-4.8 1.2-4.2 2.8-2.9 4.1-1.1 4.8 0.8 5 2.8 4.1 4.4 2.5 5 0.3 4.5-2.1 3-4.1 0.4-4.9-2.1-4.5"/>
<path class="y0 w5" d="M1055.2 466.3l-4.3-2.6-5 0-4.2 2.7"/>
<path class="y1 w5" d="M1041.7 466.4l-1.4 4.8 1.6 4.8 4.2 2.7"/>
<path class="y2 w5" d="M1046.1 478.7l5-0.4 3.2-3.9-0.3-5-3.8-3.1"/>
<path class="y3 w5" d="M1050.2 466.3l-5 0.2-3.1 4 0.4 5 4.3 2.4 4.4-2.3"/>
<path class="y4 w5" d="M1051.2 475.6l0.4-5-3.6-3.4-4.9 1-2.3 4.4 2.4 4.4 4.9 0.9 2.9-4.1"/>
<path class="y5 w5" d="M1051 473.8l-1.5-4.7-5-0.3-3.1 3.9 2.5 4.4 4.8-1.5 1-4.9-4.6-1.9-4 3.1 1 4.9 4.8 1.2"/>
<path class="y6 w5" d="M1046.9 478l3-4.1-3.3-3.7-4.5 2.2 1 4.9 5 0.8 2.1-4.6-4.2-2.6-2.9 4 2.8 4.2 4.4-2.5-1.7-4.7-4.7 1.6 1.4 4.8 4.8-1.5-2.7-4.2-4.4 2.5 3 4 3.3-3.8-4.5-2.1-0.1 5 4.7-1.7"/>
<path class="g6" d="M1063.9 494.9l2.8-5.3 4.4-4.1 5.5-2.4 6-0.1 5.6 2.2 4.2 4.3 1.8 5.7-0.8 6-3.6 4.8-5.5 2.4-6-0.8-4.6-3.7-1.8-5.8 1.8-5.7"/>
<path class="y0 w6" d="M1073.7 492.4l4.8-3.6 6 0 4.8 3.6"/>
<path class="y1 w6" d="M1089.3 492.4l1.1 5.9-2.6 5.4-5.4 2.6"/>
<path class="y2 w6" d="M1082.4 506.3l-5.8-1.5-3.6-4.9 1.1-5.9 4.6-3.9"/>
<path class="y3 w6" d="M1078.7 490.1l5.9 1.1 2.4 5.6-2.6 5.4-5.9 0.9-3.9-4.5"/>
<path class="y4 w6" d="M1074.6 498.6l2.2-5.6 5.8-1.7 4.3 4.1-0.6 6-4.9 3.5-5.7-1.9-2.1-5.7"/>
<path class="y5 w6" d="M1073.6 497.3l4.3-4.2 5.9 1.4 0.6 5.9-5.5 2.5-4.9-3.5 0.4-6 5.9-1 3.3 5.1-3.5 4.8-5.9-0.9"/>
<path class="y6 w6" d="M1074.2 501.4l-1.6-5.7 5.5-2.3 4.2 4.3-4 4.5-4.2-4.3 3.3-5 5.7 1.9-0.3 6-5.8 1.3-0.6-5.9 6 0.2-1.5 5.8-5.5-2.4 3.6-4.7 4.5 4-4.5 4.1-3.1-5.1 4.5-4 3 5.2-5.9 0.6 0.2-6"/>
<path class="g10" d="M1151.1 611.2l-10 0-9.6-2.8"/>
<path class="g9" d="M1131.5 608.4l-7.6-4.9-8.1-3.8-8.7-2.5-8.9-1-9 0.8-8.6 2.7"/>
<path class="g7" d="M1080.6 599.7l-6 3.6-5.5 4.3-4.7 5.2-3.7 5.9-2.5 6.6-1 6.9"/>
<path class="g5" d="M1057.2 632.2l0.5 5 1.2 4.8 1.9 4.6 2.8 4.2 3.5 3.6 4.2 2.7"/>
<path class="g3" d="M1071.3 657.1l2.8 1 2.9 0.5 3 0.1 3-0.4 2.8-1 2.6-1.6"/>
<path class="g1" d="M1088.4 655.7l0.7-0.8 0.5-0.8 0.5-0.9 0.3-0.9 0.1-1-0.2-1"/>
<circle class="d" cx="1095.5" cy="650.8" r="3.2"/>
<path class="g1" d="M1090.3 650.3l-0.3-1-0.6-0.8-0.8-0.6-1-0.3-1 0-0.9 0.3-0.8 0.7-0.4 0.9-0.1 1 0.4 0.9 0.8 0.6 1 0.3 0.9-0.3 0.7-0.7 0.2-1-0.3-0.9-0.8-0.6-1-0.1-0.8 0.6-0.3 0.9"/>
<circle class="f1" cx="1087.1" cy="650.2" r="2.4"/>
<path class="g3" d="M1088.4 655.7l2-2.2 1.5-2.7"/>
<path class="g2" d="M1091.9 650.8l0.4-1.9 0.7-1.9 1.1-1.7 1.3-1.5 1.6-1.1 1.9-0.8 2-0.2 1.9 0.3"/>
<path class="g1" d="M1102.8 642l0.9 0.5 1 0.3 1 0.2 1-0.1 1-0.2 0.9-0.4"/>
<circle class="d" cx="1109.7" cy="648.1" r="3.1"/>
<path class="g1" d="M1108.6 642.3l0.7-0.6 0.6-0.8 0.4-0.9 0-1-0.2-1-0.6-0.8-0.9-0.5-1-0.2-0.9 0.3-0.8 0.6-0.4 0.9 0 1 0.6 0.8 0.9 0.5 1-0.1 0.8-0.6 0.3-0.9-0.2-1-0.8-0.7-0.9-0.1"/>
<circle class="f1" cx="1107.7" cy="638.5" r="2.3"/>
<path class="g2" d="M1102.8 642l1.8 0.9 1.4 1.4 0.9 1.8 0.1 2-0.6 1.9-1.4 1.5-1.8 0.8-2-0.1-1.7-1-1-1.8-0.1-2 1-1.7 1.8-0.9 2 0.2 1.5 1.3 0.5 2-1 1.7-1.8 0.8-1.9-0.6-1.2-1.6 0.1-2 1.4-1.4"/>
<circle class="f2" cx="1104" cy="648.3" r="5.4"/>
<path class="g3" d="M1091.9 650.8l0.6-2.9-0.3-3-1.2-2.7-2.1-2.1-2.7-1.3-3-0.1-2.8 1.2-2 2.2-0.9 2.9 0.6 2.9 2 2.3 2.8 1 2.9-0.6 2.2-2.1 0.6-2.9-1.5-2.7-2.8-1-2.9 0.8-1.8 2.5 0.3 2.9 2 2.3 3 0 2.2-2.1-0.2-3-2.1-2.2-3 0.2"/>
<circle class="f3" cx="1082.2" cy="646" r="5.9"/>
<path class="g5" d="M1071.3 657.1l4.7 1.6 5 0.2"/>
<path class="g4" d="M1081 658.9l3.8-1 4-0.4 4 0.2 3.9 1.1 3.5 1.8 3 2.7"/>
<path class="g2" d="M1103.2 663.3l1.1 1.7 0.8 1.8 0.5 1.9 0.1 2-0.3 2-0.8 1.8-1.2 1.6-1.6 1.2"/>
<path class="g1" d="M1101.8 677.3l-1 0.3-0.9 0.4-0.8 0.6-0.7 0.7-0.5 0.9-0.4 0.9"/>
<circle class="d" cx="1092.9" cy="677.9" r="3"/>
<path class="g1" d="M1097.5 681.1l-0.1 1 0.1 1 0.5 0.9 0.6 0.7 0.9 0.5 1 0.2 1-0.3 0.8-0.5 0.5-0.9 0.1-1-0.4-0.9-0.7-0.7-1-0.2-0.9 0.3-0.7 0.8-0.1 0.9 0.4 0.9 0.9 0.5 1-0.3 0.6-0.8"/>
<circle class="f1" cx="1100.9" cy="682.2" r="2.3"/>
<path class="g2" d="M1101.8 677.3l-1.9 0.6-2 0-1.9-0.7-1.5-1.3-0.9-1.8-0.1-2 0.7-1.8 1.5-1.4 1.9-0.5 2 0.5 1.4 1.4 0.5 1.9-0.6 2-1.5 1.2-2 0.2-1.8-1-0.6-1.9 0.8-1.8 1.8-1.1 1.9 0.5 1.2 1.6 0 2"/>
<circle class="f2" cx="1097.9" cy="672.2" r="4.3"/>
<path class="g4" d="M1103.2 663.3l2.2 3.3 1.1 3.9"/>
<path class="g3" d="M1106.5 670.5l-0.2 3 0.3 3 0.7 2.9 1.3 2.7 1.7 2.5 2.2 2"/>
<path class="g1" d="M1112.5 686.6l0.9 0.4 1 0.4 0.9 0.1 1 0.1 1-0.2 0.9-0.4"/>
<circle class="d" cx="1118.7" cy="692.6" r="2.7"/>
<path class="g1" d="M1118.2 687l0.8-0.6 0.7-0.8 0.3-0.9 0.1-1-0.3-1-0.6-0.8-0.8-0.6-1-0.2-0.9 0.3-0.8 0.6-0.5 0.9 0.1 1 0.5 0.8 0.9 0.5 1 0 0.8-0.6 0.3-0.9-0.2-1-0.8-0.6-1 0.1"/>
<circle class="f1" cx="1117.4" cy="683.3" r="2.1"/>
<path class="g3" d="M1112.5 686.6l2.7 1.4 2.9 0.6"/>
<path class="g2" d="M1118.1 688.6l2-0.2 2 0.2 1.9 0.4 1.9 0.9 1.5 1.2 1.3 1.6 0.8 1.8 0.3 2"/>
<path class="g1" d="M1129.8 696.5l-0.2 1 0 1 0.1 0.9 0.3 1 0.5 0.9 0.7 0.7"/>
<circle class="d" cx="1126.5" cy="704.8" r="3.3"/>
<path class="g1" d="M1131.2 702l0.8 0.6 1 0.3 1 0.1 0.9-0.3 0.9-0.5 0.6-0.8 0.2-1-0.1-1-0.5-0.8-0.9-0.6-1-0.1-0.9 0.3-0.7 0.8-0.1 1 0.3 0.9 0.8 0.6 1 0 0.9-0.5 0.4-0.9-0.3-1"/>
<circle class="f1" cx="1133.7" cy="699.7" r="2.4"/>
<path class="g2" d="M1129.8 696.5l-0.3 1.9-1 1.8-1.5 1.3-1.8 0.8-2-0.1-1.8-0.8-1.3-1.6-0.5-1.9 0.5-2 1.3-1.4 1.9-0.7 2 0.5 1.4 1.4 0.3 2-0.8 1.8-1.8 0.9-2-0.3-1.5-1.3-0.5-1.9 0.8-1.9 1.9-0.6 1.8 0.7"/>
<circle class="f2" cx="1123.2" cy="696.6" r="4"/>
<path class="g3" d="M1118.1 688.6l3-0.3 2.8-1.2 2.1-2 1.3-2.7 0.1-3-1.1-2.8-2.2-2.1-2.9-0.8-2.9 0.7-2.2 2-0.9 2.9 0.9 2.9 2.3 1.9 3 0.2 2.5-1.6 1.4-2.7-0.5-2.9-2.1-2.1-3-0.1-2.4 1.9-0.8 2.9 1.3 2.7 2.8 1.1 2.7-1.4 0.7-2.9-1.9-2.4"/>
<circle class="f3" cx="1121.5" cy="677.8" r="6.8"/>
<path class="g4" d="M1106.5 670.5l-0.2 4-1.4 3.7-2.6 3.1-3.4 2-4 0.6-3.9-0.9-3.2-2.3-1.9-3.5-0.2-4 1.5-3.7 3.2-2.5 3.9-0.7 3.8 1.4 2.4 3.2"/>
<path class="y0 w4" d="M1100.5 670.9l0.4 3.9-1.7 3.7-3.5 1.9"/>
<path class="y1 w4" d="M1095.7 680.4l-3.9-0.9-2.7-2.9 0-4"/>
<path class="y2 w4" d="M1089.1 672.6l2.8-2.9 4 0.4 2.8 2.8 0.1 4"/>
<path class="y3 w4" d="M1098.8 676.9l-2.4 3.2-4-0.2-2.3-3.4 0.9-3.9 3.8-1.2"/>
<path class="y4 w4" d="M1094.8 671.4l3.5 1.9 0.9 3.9-2.9 2.7-4-0.6-1.1-3.8 3.3-2.4 3.4 2.1"/>
<path class="y5 w4" d="M1097.9 675.2l0.3 4-3.6 1.9-3.1-2.6 1.6-3.6 3.9 0.6 0.9 3.9-3 2.7-3.3-2.1 0.3-4 3.8-1.3"/>
<path class="y6 w4" d="M1095.7 674.7l2.3 3.2-2.3 3.3-3.6-1.7 1.8-3.6 4 0.3 1.1 3.9-3.1 2.4-2.4-3.2 3.3-2.3 2 3.5-3.7 1.4-1.5-3.7 3.6-1.7 0.9 4-4 0.5 0.4-4 3.8 1.1-1 3.8-3.7-1.4 1.2-3.8 3.8 1.4"/>
<path class="g5" d="M1081 658.9l4.8-1.3 4.2-2.6 3.2-3.9 1.7-4.7-0.1-5-2-4.6-3.6-3.5-4.7-1.6-5 0.5-4.2 2.8-2.4 4.3 0 5 2.5 4.3 4.4 2.4"/>
<path class="y0 w5" d="M1079.8 651l5-0.4 3.7-3.4 1.3-4.8"/>
<path class="y1 w5" d="M1089.8 642.4l-1.6-4.8-3.9-3-5-0.1"/>
<path class="y2 w5" d="M1079.3 634.5l-4 3.1-0.7 5 2.7 4.2 5 0.7"/>
<path class="y3 w5" d="M1082.3 647.5l4.3-2.5 0.3-5-3.1-3.9-5 0.6-2.5 4.3"/>
<path class="y4 w5" d="M1076.3 641l1.5 4.8 4.7 1.7 4.4-2.3 1.2-4.9-3.9-3-4.5 2.3-0.5 4.9"/>
<path class="y5 w5" d="M1079.2 644.5l4.1 2.9 4-3-1.6-4.7-5 0-2.8 4.1 3.2 3.9 4.3-2.5-1-4.9-4.9-1.1-2.4 4.4"/>
<path class="y6 w5" d="M1077.1 643.6l3.1 3.9 4.4-2.5-0.6-5-4.8-1.5-3.4 3.7 2.6 4.3 4.4-2.4-1.7-4.7-4.6 2.1 2.7 4.2 3.7-3.4-2.9-4-4.3 2.5 2.8 4.1 4.7-1.8-1.3-4.8-4.9 0.8 1.3 4.8 4.4-2.3-3.6-3.5-4 3"/>
<path class="g7" d="M1057.2 632.2l0.7 6.9 2.4 6.6"/>
<path class="g6" d="M1060.3 645.7l3.4 5 2.6 5.4 1.7 5.7 0.5 6-0.9 5.9-2.2 5.6"/>
<path class="g4" d="M1065.4 679.3l-2.5 3.1-2.9 2.8-3.4 2.1-3.7 1.5-4 0.7-4-0.4"/>
<path class="g2" d="M1044.9 689.1l-1.8-0.7-1.8-1-1.5-1.3-1.3-1.5-0.9-1.8-0.4-1.9 0-2 0.6-1.9"/>
<path class="g1" d="M1037.8 677l0.6-0.9 0.5-0.8 0.3-1 0.1-1-0.1-1-0.2-0.9"/>
<circle class="d" cx="1044.7" cy="671.4" r="2.8"/>
<path class="g1" d="M1039 671.4l-0.5-0.9-0.7-0.7-0.9-0.5-1-0.2-1 0.1-0.9 0.5-0.6 0.8-0.3 0.9 0.1 1 0.5 0.9 0.8 0.5 1 0.1 0.9-0.4 0.6-0.8 0.1-1-0.5-0.9-0.8-0.5-1 0.1-0.8 0.7-0.3 0.9"/>
<circle class="f1" cx="1035.2" cy="672" r="1.9"/>
<path class="g2" d="M1037.8 677l1.2-1.7 1.6-1.2 1.9-0.5 2 0.1 1.8 1 1.2 1.5 0.5 1.9-0.4 2-1.2 1.5-1.9 0.8-2-0.3-1.5-1.2-0.7-1.9 0.5-1.9 1.6-1.3 2-0.1 1.7 0.9 0.6 1.9-0.6 1.9-1.7 1.1-2-0.3-1.3-1.4"/>
<circle class="f2" cx="1043.3" cy="678.1" r="3.8"/>
<path class="g4" d="M1044.9 689.1l-3.7-1.4-3.2-2.4"/>
<path class="g3" d="M1038 685.3l-1.7-2.5-2-2.2-2.3-1.9-2.7-1.4-2.8-0.9-3-0.2"/>
<path class="g1" d="M1023.5 676.2l-1 0.2-1 0.3-0.8 0.4-0.8 0.6-0.7 0.8-0.5 0.9"/>
<circle class="d" cx="1014.7" cy="675.3" r="2.9"/>
<path class="g1" d="M1018.7 679.4l-0.2 0.9 0 1 0.3 1 0.5 0.8 0.8 0.6 1 0.3 1-0.1 0.9-0.4 0.6-0.8 0.2-1-0.2-1-0.6-0.7-1-0.4-1 0.2-0.7 0.6-0.3 1 0.3 0.9 0.8 0.7 0.9 0.1 0.9-0.5"/>
<circle class="f1" cx="1021.9" cy="681.4" r="2.1"/>
<path class="g3" d="M1023.5 676.2l-3 0.5-2.7 1.3"/>
<path class="g2" d="M1017.8 678l-1.4 1.4-1.7 1.1-1.8 0.9-1.9 0.4-2 0.1-2-0.5-1.8-0.9-1.4-1.4"/>
<path class="g1" d="M1003.8 679.1l-0.5-0.8-0.6-0.8-0.7-0.7-0.9-0.6-0.9-0.4-1-0.1"/>
<circle class="d" cx="1001.6" cy="670.1" r="3.1"/>
<path class="g1" d="M999.2 675.7l-1 0-0.9 0.4-0.8 0.5-0.6 0.8-0.3 1 0 1 0.4 0.9 0.7 0.7 1 0.3 1 0 0.8-0.6 0.5-0.8 0.1-1-0.5-0.9-0.9-0.5-1 0-0.8 0.6-0.3 0.9 0.3 1 0.8 0.5"/>
<circle class="f1" cx="998.1" cy="679" r="2.1"/>
<path class="g2" d="M1003.8 679.1l-1-1.7-0.4-2 0.4-1.9 1-1.8 1.6-1.2 1.9-0.4 2 0.4 1.6 1.2 0.8 1.8-0.1 2-1.1 1.7-1.8 0.8-2-0.2-1.5-1.3-0.5-2 0.7-1.9 1.7-0.9 2 0.4 1.1 1.6-0.3 2-1.6 1.2-2 0"/>
<circle class="f2" cx="1007" cy="674.6" r="3.8"/>
<path class="g3" d="M1017.8 678l-2.2 2.1-1.4 2.6-0.4 3 0.6 2.9 1.8 2.5 2.6 1.5 2.9 0.3 2.8-1 2-2.3 0.6-3-1-2.8-2.3-1.9-3-0.3-2.6 1.5-1.2 2.7 0.4 3 1.9 2.3 3 0.6 2.5-1.5 0.9-2.9-1.2-2.7-2.7-1.4-2.8 1-1.2 2.8 1.4 2.6 3 0.4"/>
<circle class="f3" cx="1022.1" cy="685.7" r="6"/>
<path class="g4" d="M1038 685.3l-2.2-3.3-1.1-3.9 0.3-4 1.7-3.6 2.9-2.7 3.8-1.3 4 0.5 3.4 2.1 2 3.5 0.1 3.9-1.9 3.6-3.4 2-4-0.1-3.3-2.3"/>
<path class="y0 w4" d="M1040.3 679.7l-1.3-3.8 1-3.8 3.1-2.5"/>
<path class="y1 w4" d="M1043.1 669.6l4 0 2.9 2.7 0 4"/>
<path class="y2 w4" d="M1050 676.3l-2.6 3.1-3.9 0.3-3.4-2.1-0.6-4"/>
<path class="y3 w4" d="M1039.5 673.6l2.3-3.3 4 0.1 2.9 2.7-0.2 4-3.2 2.5"/>
<path class="y4 w4" d="M1045.3 679.6l-3.8-1-1.5-3.7 2.1-3.4 4-0.1 1.8 3.6-2.6 3-3.8-1.1"/>
<path class="y5 w4" d="M1041.5 676.9l-1.5-3.7 2.8-2.8 4 0.8 0.7 3.9-3.1 2.5-3.7-1.5 0.6-4 3.8-0.9 2.7 3-2.2 3.3"/>
<path class="y6 w4" d="M1045.6 677.5l-4-0.3-0.8-3.9 3.5-2 2.9 2.8-2.2 3.3-3.2-2.4 1.7-3.6 3.9 0.3 0.5 4-3.9 0.9-0.1-4 3.9 0.9-1.2 3.8-3.7-1.4 1.7-3.6 3.9 1-0.7 4-3.9-0.6 1.3-3.8 3.8 1.3-2.2 3.3"/>
<path class="g6" d="M1065.4 679.3l-3.7 4.7-5 3.5"/>
<path class="g5" d="M1056.7 687.5l-4.7 1.4-4.6 2.1-4.2 2.7-3.6 3.4-2.8 4.2-1.9 4.6"/>
<path class="g3" d="M1034.9 705.9l-0.4 3 0.1 3 0.5 2.9 1.1 2.9 1.5 2.5 2.1 2.2"/>
<path class="g1" d="M1039.8 722.4l0.9 0.5 0.9 0.4 1 0.3 1 0 0.9-0.1 1-0.3"/>
<circle class="d" cx="1046.1" cy="728.7" r="3.1"/>
<path class="g1" d="M1045.5 723.2l0.8-0.6 0.7-0.7 0.4-0.9 0.2-1-0.2-1-0.5-0.8-0.8-0.6-1-0.3-1 0.2-0.8 0.5-0.5 0.9 0 1 0.4 0.9 0.8 0.5 1 0.1 0.9-0.6 0.4-0.9-0.1-1-0.7-0.7-1-0.1"/>
<circle class="f1" cx="1044.7" cy="719.4" r="2.1"/>
<path class="g3" d="M1039.8 722.4l2.6 1.5 2.8 0.9"/>
<path class="g2" d="M1045.2 724.8l2 0 2 0.4 1.9 0.6 1.7 1 1.5 1.4 1.1 1.7 0.6 1.9 0.1 2"/>
<path class="g1" d="M1056.1 733.8l-0.2 0.9-0.1 1 0 1 0.2 1 0.4 0.9 0.6 0.8"/>
<circle class="d" cx="1052" cy="741.5" r="3.1"/>
<path class="g1" d="M1057 739.4l0.8 0.7 0.9 0.4 1 0.1 0.9-0.1 0.9-0.5 0.7-0.8 0.3-0.9 0-1-0.4-0.9-0.8-0.6-1-0.2-1 0.2-0.7 0.7-0.2 1 0.2 0.9 0.8 0.7 1 0.2 0.8-0.5 0.5-0.9-0.3-1"/>
<circle class="f1" cx="1060.3" cy="736.9" r="2.3"/>
<path class="g2" d="M1056.1 733.8l-0.5 1.9-1.1 1.7-1.6 1.1-1.9 0.6-2-0.3-1.7-1-1.2-1.6-0.3-2 0.7-1.9 1.5-1.3 1.9-0.5 1.9 0.7 1.3 1.5 0.2 2-1 1.7-1.7 1-2-0.3-1.5-1.3-0.1-2 1.4-1.5 2 0 1.5 1.3"/>
<circle class="f2" cx="1049.6" cy="734.2" r="3.9"/>
<path class="g3" d="M1045.2 724.8l3 0 2.9-0.8 2.4-1.8 1.7-2.5 0.7-2.9-0.6-3-1.7-2.5-2.5-1.5-3-0.2-2.8 1.1-1.8 2.4-0.4 3 1.2 2.7 2.5 1.7 3 0 2.5-1.6 1-2.8-1.1-2.8-2.6-1.5-3 0.2-2.1 2.1 0 3 2.3 2 3-0.1 1.8-2.4-0.8-2.9"/>
<circle class="f3" cx="1047" cy="716" r="6"/>
<path class="g5" d="M1034.9 705.9l-0.6 5 0.8 4.9"/>
<path class="g4" d="M1035.1 715.8l1.8 3.6 1.2 3.8 0.6 3.9-0.2 4-1.1 3.9-2 3.5"/>
<path class="g2" d="M1035.4 738.5l-1.4 1.4-1.6 1.2-1.8 0.9-1.9 0.5-2 0.1-2-0.3-1.8-0.9-1.5-1.3"/>
<path class="g1" d="M1021.4 740.1l-0.5-0.9-0.6-0.8-0.8-0.6-0.8-0.6-1-0.3-0.9-0.2"/>
<circle class="d" cx="1019.3" cy="731.4" r="2.7"/>
<path class="g1" d="M1016.8 736.7l-1 0.1-1 0.4-0.8 0.6-0.5 0.8-0.3 1 0.1 1 0.4 0.9 0.7 0.7 1 0.3 1-0.2 0.8-0.5 0.5-0.9 0-1-0.5-0.9-0.9-0.4-1 0-0.8 0.7-0.2 0.9 0.4 0.9 0.9 0.6"/>
<circle class="f1" cx="1016.1" cy="740.5" r="2.2"/>
<path class="g2" d="M1021.4 740.1l-1-1.8-0.4-1.9 0.2-2 1-1.7 1.5-1.3 2-0.5 1.9 0.3 1.7 1.2 0.9 1.7-0.1 2-1 1.7-1.8 1-2-0.2-1.6-1.3-0.5-1.9 0.6-1.9 1.6-1.2 2-0.1 1.5 1.2 0.2 2-1.2 1.6-2 0.2"/>
<circle class="f2" cx="1025.8" cy="734.2" r="4.1"/>
<path class="g4" d="M1035.4 738.5l-2.8 2.8-3.5 2"/>
<path class="g3" d="M1029.1 743.3l-2.9 0.7-2.8 1.1-2.6 1.5-2.3 1.9-1.9 2.3-1.2 2.7"/>
<path class="g1" d="M1015.4 753.5l-0.2 1 0 1 0.1 1 0.3 1 0.4 0.9 0.7 0.7"/>
<circle class="d" cx="1011.2" cy="761.5" r="2.8"/>
<path class="g1" d="M1016.7 759.1l0.8 0.6 0.9 0.3 1 0.1 1-0.2 0.8-0.6 0.6-0.8 0.3-0.9-0.1-1-0.5-0.9-0.8-0.5-1-0.2-1 0.4-0.6 0.7-0.2 1 0.3 0.9 0.8 0.6 1 0.1 0.9-0.5 0.5-0.9-0.1-1"/>
<circle class="f1" cx="1020" cy="757.1" r="2"/>
<path class="g3" d="M1015.4 753.5l-0.6 3 0.3 3"/>
<path class="g2" d="M1015.1 759.5l0.8 1.8 0.5 2 0.2 1.9-0.2 2-0.7 1.9-1.1 1.7-1.4 1.4-1.8 0.9"/>
<path class="g1" d="M1011.4 773.1l-1 0.1-1 0.3-0.9 0.4-0.8 0.6-0.7 0.8-0.5 0.8"/>
<circle class="d" cx="1002.9" cy="772.2" r="2.9"/>
<path class="g1" d="M1006.5 776.1l-0.2 1-0.1 1 0.3 1 0.5 0.8 0.8 0.6 1 0.3 1 0 0.9-0.5 0.6-0.7 0.3-1-0.2-1-0.6-0.8-1-0.3-1 0.1-0.7 0.6-0.3 1 0.2 0.9 0.8 0.6 1 0.1 0.9-0.6"/>
<circle class="f1" cx="1009.7" cy="778" r="2.1"/>
<path class="g2" d="M1011.4 773.1l-2 0.3-2-0.4-1.7-0.9-1.3-1.6-0.6-1.9 0.2-2 1.1-1.7 1.7-1.1 2-0.1 1.8 0.8 1.2 1.6 0.2 2-0.9 1.7-1.8 1-2-0.2-1.5-1.2-0.6-2 0.8-1.8 1.8-0.9 1.9 0.5 0.9 1.8-0.4 1.9"/>
<circle class="f2" cx="1007.7" cy="767.5" r="3.8"/>
<path class="g3" d="M1015.1 759.5l1.2 2.7 2 2.3 2.5 1.6 3 0.5 2.9-0.5 2.6-1.5 1.7-2.5 0.6-2.9-0.7-2.9-2-2.3-2.8-1-3 0.4-2.3 1.9-1.1 2.8 0.7 2.9 2.3 2 3 0.1 2.5-1.6 1.1-2.8-1.1-2.7-2.6-1.5-2.9 0.9-1.7 2.5 0.9 2.8 2.7 1.4 2.8-1.1"/>
<circle class="f3" cx="1025" cy="758.4" r="5"/>
<path class="g4" d="M1029.1 743.3l-3.9 0.9-3.9-0.4-3.6-1.9-2.6-3-1.1-3.9 0.5-3.9 2.3-3.3 3.6-1.9 4 0.2 3.4 2.1 1.7 3.6-0.5 4-2.7 2.9-3.9 0.8"/>
<path class="y0 w4" d="M1022.4 739.5l-3.6-1.7-2-3.5 0.5-3.9"/>
<path class="y1 w4" d="M1017.3 730.4l3-2.7 4-0.1 3.1 2.5"/>
<path class="y2 w4" d="M1027.4 730.1l0.8 3.9-1.9 3.5-3.9 0.8-3.1-2.5"/>
<path class="y3 w4" d="M1019.3 735.8l-0.5-3.9 2.5-3.1 4-0.1 2.8 2.8 0 4"/>
<path class="y4 w4" d="M1028.1 735.5l-3.2 2.5-3.6-1.7-0.2-4 3.5-1.9 3.2 2.4-0.5 3.9-3.5 1.9"/>
<path class="y5 w4" d="M1023.8 738.6l-3.6-1.9-0.3-4 3.7-1.3 2.8 2.9-1.8 3.5-4-0.1-0.8-3.9 3.7-1.4 2.3 3.3-2.6 3.1"/>
<path class="y6 w4" d="M1023.2 738.8l-3.3-2.3 2.2-3.3 3.9 0.7 0.3 4-3.9 1-1.2-3.8 3.3-2.2 3.1 2.6-2.8 2.8-2.3-3.3 3.5-1.9 2.5 3.2-3.2 2.4-1.5-3.7 3.8-1.3 0.2 4-3.9 0.6-0.7-3.9 4 0.2-1.3 3.8-3.4-2"/>
<path class="g5" d="M1035.1 715.8l2.3 4.5 3.4 3.6 4.5 2.3 4.9 0.7 4.9-1.1 4.1-2.9 2.6-4.2 0.7-5-1.5-4.8-3.6-3.5-4.7-1.5-4.9 1-3.7 3.4-1.5 4.7"/>
<path class="y0 w5" d="M1042.6 713l1.4 4.8 3.9 3.2 4.9 0.6"/>
<path class="y1 w5" d="M1052.8 721.6l4.4-2.4 1.8-4.7-1.9-4.6"/>
<path class="y2 w5" d="M1057.1 709.9l-4.7-1.7-4.4 2.4-1.9 4.6 2.4 4.4"/>
<path class="y3 w5" d="M1048.5 719.6l4.9 1.2 4.3-2.5 0.4-5-3-4-5 0.1"/>
<path class="y4 w5" d="M1050.1 709.4l-3 4 1.2 4.9 4.5 2.2 4.4-2.3 1.1-4.9-3.8-3.2-4.9 1"/>
<path class="y5 w5" d="M1049.6 711.1l-2.1 4.6 3.1 3.9 4.7-1.8-0.5-5-4.8-1.3-3.4 3.7 3.1 3.9 4.9-1.1-0.7-5-4.8-1.2"/>
<path class="y6 w5" d="M1049.1 711.8l-1.7 4.7 3.4 3.7 4.4-2.4-0.4-5-4.7-1.7-1.6 4.8 3.9 3.1 4.2-2.7-3.1-3.9-3.8 3.3 2 4.6 4.7-1.7-1.4-4.8-4.7 1.4 0.6 5 5 0 0.1-5-4.9 1.3 1.4 4.8 3.9-3.2-3.8-3.2"/>
<path class="g6" d="M1056.7 687.5l-5.7 1.7-6-0.2-5.6-2.3-4.3-4.1-2.5-5.5-0.1-6 2.5-5.4 4.6-3.9 5.8-1.2 5.8 1.6 4.1 4.4 1.3 5.8-2 5.7-4.8 3.5"/>
<path class="y0 w6" d="M1049.8 681.6l-6 0.2-5.3-3-1.7-5.7"/>
<path class="y1 w6" d="M1036.8 673.1l1.9-5.7 4.9-3.4 6 0.1"/>
<path class="y2 w6" d="M1049.6 664.1l4.3 4.2 0 6-3.9 4.6-5.9 0.9"/>
<path class="y3 w6" d="M1044.1 679.8l-5.1-3.1-0.3-6 4.3-4.3 5.8 1.3 2.6 5.5"/>
<path class="y4 w6" d="M1051.4 673.2l-3.3 5-6-0.3-3.2-5.1 2-5.6 5.6-2.2 4.2 4.2-1.6 5.8"/>
<path class="y5 w6" d="M1049.1 675l-5.6 2-4.2-4.4 3.3-5.1 6-0.2 2.6 5.4-4.7 3.6-5.4-2.6 1.1-5.9 5.9-0.9 2.4 5.6"/>
<path class="y6 w6" d="M1050.5 672.5l-4.5 4-4.6-3.8 2-5.7 6-0.4 2.6 5.4-5 3.4-3.8-4.6 3.7-4.7 4.4 4.1-2.5 5.4-5.7-1.9 3.2-5.1 5.6 2.1-3 5.2-5.4-2.6 4.3-4.2 3.7 4.7-4.2 4.3-3.1-5.1 4.8-3.6 1.9 5.6"/>
<path class="g9" d="M1080.6 599.7l-7.7 4.6-6.4 6.4"/>
<path class="g8" d="M1066.5 610.7l-3.9 6.9-4.9 6.3-6 5.3-6.9 4.1-7.5 2.6-8 0.8"/>
<path class="g6" d="M1029.3 636.7l-5.9-0.9-5.8-1.8-5.3-2.8-4.7-3.7-3.7-4.7-2.5-5.5"/>
<path class="g4" d="M1001.4 617.3l-0.6-3.9 0.1-4 0.7-4 1.5-3.7 2.2-3.3 2.9-2.7"/>
<path class="g2" d="M1008.2 595.7l1.8-1 1.9-0.6 2-0.4 2 0.1 1.9 0.5 1.8 0.9 1.4 1.4 1.1 1.7"/>
<path class="g1" d="M1022.1 598.3l0.2 1 0.4 0.9 0.5 0.9 0.6 0.7 0.8 0.6 0.9 0.5"/>
<circle class="d" cx="1021.6" cy="607.3" r="2.8"/>
<path class="g1" d="M1025.5 602.9l1 0.2 1-0.1 0.9-0.3 0.8-0.7 0.6-0.8 0.2-1-0.1-1-0.5-0.8-0.9-0.6-0.9-0.2-1 0.3-0.7 0.7-0.3 1 0.2 0.9 0.7 0.7 1 0.3 0.9-0.4 0.6-0.8-0.1-1-0.8-0.7"/>
<circle class="f1" cx="1027.7" cy="599.4" r="2.2"/>
<path class="g2" d="M1022.1 598.3l0.4 2-0.1 1.9-0.9 1.9-1.4 1.4-1.9 0.7-2-0.1-1.7-0.9-1.3-1.6-0.3-1.9 0.7-1.9 1.5-1.3 1.9-0.4 1.9 0.8 1.1 1.6 0 2-1.4 1.5-1.9 0.5-1.8-1-0.6-1.9 0.8-1.8 1.9-0.8 1.8 0.6"/>
<circle class="f2" cx="1017" cy="600.6" r="4.1"/>
<path class="g4" d="M1008.2 595.7l3.6-1.9 3.9-0.9"/>
<path class="g3" d="M1015.7 592.9l3 0.3 2.9-0.2 3-0.7 2.8-1.1 2.4-1.7 2.1-2.1"/>
<path class="g1" d="M1031.9 587.4l0.5-0.9 0.4-0.9 0.2-1 0.1-1-0.2-1-0.3-0.9"/>
<circle class="d" cx="1038.2" cy="581.5" r="2.6"/>
<path class="g1" d="M1032.6 581.7l-0.6-0.8-0.8-0.7-0.9-0.4-1-0.1-1 0.2-0.8 0.6-0.6 0.8-0.2 1 0.2 1 0.6 0.8 0.9 0.4 1 0 0.8-0.5 0.5-0.8 0-1-0.5-0.9-0.9-0.3-1 0.2-0.6 0.8-0.1 1"/>
<circle class="f1" cx="1028.6" cy="582.8" r="2.2"/>
<path class="g3" d="M1031.9 587.4l1.5-2.6 0.8-2.9"/>
<path class="g2" d="M1034.2 581.9l0-2 0.2-2 0.6-1.9 1-1.8 1.3-1.5 1.7-1.1 1.8-0.7 2-0.2"/>
<path class="g1" d="M1042.8 570.7l1 0.3 1 0.1 1-0.1 1-0.2 0.9-0.4 0.8-0.7"/>
<circle class="d" cx="1050.6" cy="574.9" r="2.9"/>
<path class="g1" d="M1048.5 569.7l0.6-0.7 0.4-1 0.1-1-0.2-0.9-0.5-0.9-0.7-0.7-1-0.3-1 0.1-0.9 0.4-0.6 0.8-0.1 1 0.2 1 0.8 0.7 0.9 0.2 1-0.3 0.6-0.7 0.1-1-0.4-0.9-0.9-0.5-1 0.3"/>
<circle class="f1" cx="1046.5" cy="566.9" r="2.3"/>
<path class="g2" d="M1042.8 570.7l2 0.5 1.7 1.1 1.2 1.5 0.6 2-0.2 1.9-0.9 1.8-1.7 1.2-1.9 0.3-1.9-0.6-1.4-1.4-0.5-1.9 0.6-2 1.5-1.3 2-0.2 1.7 0.9 0.8 1.9-0.6 1.9-1.7 1.1-1.9-0.6-1.2-1.6 0.5-1.9 1.6-1.2"/>
<circle class="f2" cx="1043.9" cy="576.4" r="3.8"/>
<path class="g3" d="M1034.2 581.9l-0.1-3-0.9-2.9-1.9-2.3-2.5-1.6-3-0.5-2.9 0.7-2.4 1.8-1.4 2.7 0.1 3 1.4 2.6 2.5 1.6 3 0.1 2.6-1.5 1.3-2.7-0.4-3-1.9-2.3-2.9-0.7-2.8 1.3-0.9 2.8 1 2.8 2.6 1.6 2.9-0.8 1.8-2.3-0.5-3-2.7-1.3-2.9 0.7"/>
<circle class="f3" cx="1024.8" cy="578.4" r="6"/>
<path class="g4" d="M1015.7 592.9l3.9 0.3 3.7 1.6 2.9 2.7 1.8 3.6 0.2 4-1.4 3.8-2.8 2.8-3.8 1.3-3.9-0.6-3.2-2.4-1.6-3.7 0.6-4 2.6-3 3.8-1.1"/>
<path class="y0 w4" d="M1018.5 598.2l3.8 1.3 2.5 3.2 0.3 4"/>
<path class="y1 w4" d="M1025.1 606.7l-2.1 3.4-3.6 1.7-3.7-1.5"/>
<path class="y2 w4" d="M1015.7 610.3l-1.5-3.7 1.2-3.8 3.7-1.5 3.6 1.7"/>
<path class="y3 w4" d="M1022.7 603l1.5 3.7-2 3.5-3.9 0.9-3.1-2.7 0.5-4"/>
<path class="y4 w4" d="M1015.7 604.4l3.5-1.8 3.6 1.8 1.1 3.9-2.4 3.2-4 0.3-2.4-3.1 1.5-3.7"/>
<path class="y5 w4" d="M1016.6 605l4 0.3 2.1 3.3-2.1 3.4-4-0.2-1-3.9 3.2-2.3 3.7 1.5-0.8 3.9-4 0.4-1.7-3.6"/>
<path class="y6 w4" d="M1016 607.8l2.6-3 3.7 1.5-0.6 4-3.9 0.4-0.3-4 3.8-1.3 2 3.5-3.2 2.5-3.3-2.2 2.3-3.3 3.6 1.7-1.6 3.7-3.9-1 1.2-3.8 3.6 1.7-1.7 3.6-3.7-1.6 2.7-3 3.3 2.2-2.4 3.2-2.9-2.8"/>
<path class="g6" d="M1001.4 617.3l-0.9-5.9 0.8-6"/>
<path class="g5" d="M1001.3 605.4l2.2-4.5 1.5-4.7 0.7-5-0.1-5-1.1-4.8-2.3-4.5"/>
<path class="g3" d="M1002.2 576.9l-2-2.3-2.2-1.9-2.6-1.6-2.8-1.1-2.9-0.5-3 0.1"/>
<path class="g1" d="M986.7 569.6l-1 0.3-0.9 0.4-0.8 0.6-0.8 0.7-0.5 0.8-0.4 0.9"/>
<circle class="d" cx="977.9" cy="569.9" r="3"/>
<path class="g1" d="M982.3 573.3l-0.2 1 0.1 1 0.4 0.9 0.7 0.8 0.8 0.5 1 0.1 1-0.1 0.8-0.6 0.6-0.8 0.1-1-0.3-1-0.7-0.7-1-0.2-1 0.3-0.7 0.7-0.1 1 0.4 0.9 0.8 0.6 1-0.1 0.7-0.7"/>
<circle class="f1" cx="984.8" cy="575" r="2.5"/>
<path class="g3" d="M986.7 569.6l-2.9 0.9-2.6 1.5"/>
<path class="g2" d="M981.2 572l-1.3 1.5-1.6 1.3-1.7 0.9-1.9 0.7-2 0.1-2-0.2-1.8-0.8-1.6-1.3"/>
<path class="g1" d="M967.3 574.2l-0.5-0.8-0.7-0.8-0.8-0.6-0.8-0.5-1-0.3-1-0.1"/>
<circle class="d" cx="964.5" cy="565.4" r="3"/>
<path class="g1" d="M962.5 571.1l-1 0.2-0.9 0.4-0.8 0.6-0.5 0.8-0.2 1 0.1 1 0.4 0.9 0.8 0.6 1 0.3 1-0.2 0.8-0.6 0.4-0.9 0-1-0.6-0.8-0.9-0.4-0.9 0.1-0.8 0.6-0.3 1 0.4 0.9 0.9 0.5"/>
<circle class="f1" cx="961.6" cy="575.3" r="2.5"/>
<path class="g2" d="M967.3 574.2l-1.1-1.6-0.5-2 0.2-2 0.8-1.8 1.5-1.3 1.9-0.6 2 0.2 1.7 1.1 1 1.8 0 2-0.9 1.7-1.8 1-2-0.1-1.6-1.1-0.6-1.9 0.6-1.9 1.7-1.1 2 0.3 1.3 1.5 0.1 2-1.1 1.7-2 0.3"/>
<circle class="f2" cx="970.2" cy="570.3" r="4.3"/>
<path class="g3" d="M981.2 572l-2 2.3-1.2 2.7-0.3 3 0.7 2.9 1.8 2.4 2.5 1.6 3 0.4 2.9-0.9 2.1-2.1 1-2.9-0.5-2.9-2-2.3-2.8-0.9-3 0.7-1.9 2.3-0.3 3 1.7 2.4 2.9 1 2.9-0.8 1.7-2.4-0.6-3-2.6-1.6-2.9 0.4-2.2 2.2 0 3 2.1 2.1"/>
<circle class="f3" cx="983.8" cy="582" r="6.3"/>
<path class="g5" d="M1002.2 576.9l-3.3-3.8-4.2-2.7"/>
<path class="g4" d="M994.7 570.4l-3.9-1-3.6-1.6-3.4-2.2-2.8-2.8-2.2-3.3-1.4-3.8"/>
<path class="g2" d="M977.4 555.7l-0.2-2 0.1-2 0.5-1.9 0.8-1.8 1.2-1.6 1.6-1.3 1.8-0.8 2-0.3"/>
<path class="g1" d="M985.2 544l1 0.1 1 0 1-0.1 0.9-0.3 0.9-0.5 0.7-0.7"/>
<circle class="d" cx="993.2" cy="547.3" r="3"/>
<path class="g1" d="M990.7 542.5l0.6-0.8 0.3-0.9 0.1-1-0.3-1-0.6-0.8-0.8-0.6-0.9-0.3-1 0.2-0.9 0.5-0.5 0.8-0.1 1 0.3 1 0.8 0.6 1 0.2 0.9-0.4 0.6-0.8 0-1-0.4-0.9-0.9-0.4-1 0.2"/>
<circle class="f1" cx="988.4" cy="539.4" r="1.9"/>
<path class="g2" d="M985.2 544l2 0.3 1.7 0.9 1.4 1.5 0.7 1.8 0 2-0.8 1.9-1.6 1.3-1.9 0.5-1.9-0.5-1.5-1.3-0.7-1.9 0.5-2 1.4-1.4 1.9-0.4 1.9 0.8 1.1 1.7 0 2-1.3 1.4-2 0.3-1.6-1.2-0.5-1.9 1-1.8"/>
<circle class="f2" cx="986.2" cy="549.7" r="3.9"/>
<path class="g4" d="M977.4 555.7l-0.4-4 0.8-3.9"/>
<path class="g3" d="M977.8 547.8l1.4-2.6 1.1-2.8 0.6-3 0.1-3-0.5-2.9-1.2-2.8"/>
<path class="g1" d="M979.3 530.7l-0.5-0.8-0.7-0.7-0.8-0.6-0.9-0.5-1-0.3-1 0"/>
<circle class="d" cx="976.3" cy="522.3" r="2.9"/>
<path class="g1" d="M974.4 527.8l-1 0.2-0.9 0.4-0.7 0.7-0.5 0.8-0.2 1 0.2 1 0.5 0.9 0.8 0.6 0.9 0.2 1-0.2 0.8-0.6 0.4-0.9-0.1-1-0.5-0.9-1-0.4-1 0.2-0.7 0.7-0.2 0.9 0.4 1 0.8 0.4"/>
<circle class="f1" cx="973.5" cy="530.8" r="2.6"/>
<path class="g3" d="M979.3 530.7l-1.7-2.4-2.3-2"/>
<path class="g2" d="M975.3 526.3l-1.8-0.8-1.7-1-1.5-1.4-1.2-1.6-0.8-1.8-0.4-2 0.2-2 0.7-1.9"/>
<path class="g1" d="M968.8 513.8l0.6-0.8 0.5-0.8 0.4-0.9 0.2-1 0-1-0.2-1"/>
<circle class="d" cx="975.8" cy="508.3" r="3.2"/>
<path class="g1" d="M970.3 508.3l-0.5-0.9-0.7-0.7-0.8-0.6-1-0.2-1 0.1-0.9 0.4-0.7 0.7-0.3 0.9 0 1 0.5 0.9 0.8 0.6 1 0.2 0.9-0.4 0.6-0.8 0.2-1-0.4-0.9-0.9-0.5-1 0.1-0.7 0.7-0.1 1"/>
<circle class="f1" cx="966.9" cy="508.5" r="2.2"/>
<path class="g2" d="M968.8 513.8l1.2-1.5 1.7-1.1 2-0.5 1.9 0.3 1.8 1 1.2 1.6 0.4 1.9-0.6 2-1.3 1.5-1.9 0.6-1.9-0.3-1.5-1.4-0.6-1.9 0.6-1.9 1.6-1.2 2-0.1 1.7 1.1 0.7 1.8-0.5 2-1.6 1.1-2 0-1.5-1.3"/>
<circle class="f2" cx="974.1" cy="517.1" r="3.9"/>
<path class="g3" d="M975.3 526.3l-2.8-1.2-2.9-0.3-3 0.7-2.5 1.6-1.7 2.5-0.7 2.9 0.6 2.9 1.8 2.5 2.6 1.3 3 0 2.6-1.5 1.6-2.6-0.1-3-1.7-2.5-2.8-1.1-2.9 0.4-2.3 2-0.5 3 1.3 2.7 2.6 1.5 3-0.2 1.9-2.2 0.2-3-2.1-2.2-3-0.1-2.3 1.9"/>
<circle class="f3" cx="967.3" cy="533.4" r="5.9"/>
<path class="g4" d="M977.8 547.8l1.9-3.5 3-2.6 3.8-1.4 4 0.3 3.5 1.9 2.3 3.3 0.5 3.9-1.5 3.8-3.2 2.4-3.9 0.4-3.5-2-1.8-3.6 0.7-3.9 3-2.6"/>
<path class="y0 w4" d="M986.6 544.2l4-0.1 3.2 2.4 1.3 3.8"/>
<path class="y1 w4" d="M995.1 550.3l-1.1 3.8-3.2 2.5-4 0"/>
<path class="y2 w4" d="M986.8 556.6l-2.9-2.8 0.1-4 3.1-2.6 4 0.3"/>
<path class="y3 w4" d="M991.1 547.5l2.5 3.1-1.1 3.8-3.7 1.7-3.7-1.6-0.7-3.9"/>
<path class="y4 w4" d="M984.4 550.6l3.1-2.6 3.8 1.2 0.5 4-3.1 2.6-3.9-0.6-1.9-3.6 2.5-3.1"/>
<path class="y5 w4" d="M985.4 548.5l3.8 1.5-0.2 4-3.8 1-2.8-3 1.2-3.8 4-0.3 0.9 3.9-3.5 2-3-2.7 2.4-3.3"/>
<path class="y6 w4" d="M984.4 547.8l3.9 1.1-0.9 3.9-4 0.1-1.2-3.8 3-2.6 3.1 2.4-2.6 3-3-2.7 2.5-3.1 2.7 2.9-2.5 3.1-2.7-2.9 3.5-2 1.9 3.5-2.9 2.7-2.4-3.3 3.6-1.8 1.1 3.8-3.9-0.4 2.1-3.4 2.6 2.9"/>
<path class="g5" d="M994.7 570.4l-4.8-1.2-5 0.3-4.6 1.9-3.7 3.4-2.1 4.6-0.2 4.9 2 4.7 3.7 3.3 4.8 1.2 4.9-1.2 3.6-3.4 1.4-4.8-1.5-4.8-3.8-3.2"/>
<path class="y0 w5" d="M989.4 576.1l-5-0.4-4.5 2.2-2.4 4.4"/>
<path class="y1 w5" d="M977.5 582.3l0.3 5 3.6 3.4 4.9 0.9"/>
<path class="y2 w5" d="M986.3 591.6l4-3.1 0.5-5-3.2-3.8-5-0.5"/>
<path class="y3 w5" d="M982.6 579.2l-4 3-1.2 4.8 3.2 3.9 4.9 0.7 4-3"/>
<path class="y4 w5" d="M989.5 588.6l0.2-5-3.6-3.5-5 0.6-1.5 4.8 3.8 3.3 4.8-1.5 1.1-4.9"/>
<path class="y5 w5" d="M989.3 582.4l-4-3-4.8 1.6-0.6 4.9 3.9 3.2 3.9-3.1-0.6-4.9-4.7-1.8-3.2 3.8 2.3 4.4 4.6-1.9"/>
<path class="y6 w5" d="M986.1 585.6l0-5-4.6-1.8-3.6 3.4 3.3 3.8 4.6-1.9 0-5-4.9-0.8-0.8 4.9 5 0.1 1.1-4.9-4.9-1.2-0.9 5 4.7 1.6 2.1-4.5-4.2-2.7-2.8 4.1 4.9 1.2 0.7-4.9-4.8-1.5-0.5 4.9 5-0.4"/>
<path class="g6" d="M1001.3 605.4l2.6-5.4 4.2-4.3 5.5-2.5 6-0.3 5.6 2.1 4.3 4.2 2 5.7-0.9 5.9-3.5 4.8-5.5 2.5-6-0.8-4.6-3.9-1.6-5.7 1.9-5.7"/>
<path class="y0 w6" d="M1011.3 602l5-3.4 6 0.2 4.4 4.1"/>
<path class="y1 w6" d="M1026.7 602.9l0.8 5.9-3 5.2-5.8 1.7"/>
<path class="y2 w6" d="M1018.7 615.7l-5.2-3-1.9-5.7 2.5-5.5 5.6-1.9"/>
<path class="y3 w6" d="M1019.7 599.6l4.9 3.5 0 6-4.3 4.2-5.9-0.8-3.7-4.8"/>
<path class="y4 w6" d="M1010.7 607.7l1-5.9 5.1-3.1 5.8 1.7 2.2 5.6-4.3 4.2-5.5-2.2-1.8-5.8"/>
<path class="y5 w6" d="M1013.2 602.2l3.8-4.6 5.7 1.9 0.7 6-4.9 3.5-5.5-2.3-1-5.9 4.8-3.6 4.7 3.7-1.2 5.8-5.8 1.4"/>
<path class="y6 w6" d="M1014.5 608.1l-3.3-5 3.7-4.8 4.9 3.5-2 5.6-5.9-1.4 0-6 5.9-1.1 1 5.9-5.9 1.3-3.1-5.1 4.3-4.2 4.9 3.4-1.9 5.7-5.8-1.6 3-5.2 5.6 2.1-3.6 4.8-3.3-5 5-3.4 3.4 4.9-5.9 1"/>
<path class="g8" d="M1029.3 636.7l-7.9-1.2-7.3-3.2"/>
<path class="g7" d="M1014.1 632.3l-5.4-4.5-5.9-3.8-6.5-2.7-6.8-1.6-7-0.2-6.9 1.2"/>
<path class="g5" d="M975.6 620.7l-4.6 1.9-4.3 2.6-3.8 3.2-3.2 3.8-2.4 4.4-1.5 4.7"/>
<path class="g3" d="M955.8 641.3l-0.2 3 0.2 3 0.7 3 1.1 2.7 1.7 2.5 2.2 2"/>
<path class="g1" d="M961.5 657.5l0.9 0.5 0.9 0.4 1 0.2 1 0 1-0.1 0.9-0.4"/>
<circle class="d" cx="967.7" cy="663.5" r="2.8"/>
<path class="g1" d="M967.2 658.1l0.8-0.6 0.7-0.8 0.3-0.9 0.1-1-0.2-1-0.6-0.8-0.8-0.6-1-0.2-1 0.2-0.7 0.6-0.5 0.9 0 1 0.5 0.9 0.9 0.5 1 0 0.8-0.6 0.4-0.9-0.3-1-0.8-0.6-1 0"/>
<circle class="f1" cx="965.8" cy="655.1" r="2.4"/>
<path class="g3" d="M961.5 657.5l2.6 1.5 3 0.7"/>
<path class="g2" d="M967.1 659.7l2-0.1 1.9 0.3 2 0.5 1.7 1 1.6 1.2 1.2 1.6 0.7 1.9 0.2 2"/>
<path class="g1" d="M978.4 668.1l-0.2 1-0.1 1 0.1 1 0.2 0.9 0.5 0.9 0.6 0.8"/>
<circle class="d" cx="974.3" cy="676" r="2.9"/>
<path class="g1" d="M979.5 673.7l0.8 0.6 0.9 0.4 1 0.1 1-0.2 0.9-0.5 0.6-0.8 0.3-1-0.1-1-0.5-0.8-0.8-0.6-1-0.2-0.9 0.3-0.7 0.7-0.2 1 0.3 1 0.8 0.6 1 0.1 0.9-0.4 0.4-1-0.3-0.9"/>
<circle class="f1" cx="983.1" cy="671.8" r="2.1"/>
<path class="g2" d="M978.4 668.1l-0.4 2-1.1 1.7-1.5 1.2-1.9 0.7-2-0.2-1.8-0.9-1.2-1.6-0.4-1.9 0.6-2 1.4-1.4 1.9-0.5 1.9 0.5 1.4 1.5 0.3 2-0.9 1.8-1.8 1-1.9-0.4-1.2-1.6 0.2-2 1.5-1.4 2 0 1.3 1.4"/>
<circle class="f2" cx="972.8" cy="669.8" r="3.8"/>
<path class="g3" d="M967.1 659.7l3-0.1 2.8-1 2.3-1.9 1.6-2.6 0.4-3-0.6-2.9-1.8-2.4-2.7-1.4-3-0.1-2.7 1.4-1.7 2.4-0.3 3 1.4 2.7 2.5 1.5 3-0.1 2.3-2 0.7-2.9-1-2.8-2.7-1.3-2.9 0.6-2 2.3 0.3 3 2.4 1.8 2.9-0.7 1.5-2.6-1.1-2.8"/>
<circle class="f3" cx="968.7" cy="650.2" r="5.4"/>
<path class="g5" d="M955.8 641.3l-0.4 5 0.9 5"/>
<path class="g4" d="M956.3 651.3l1.7 3.6 1.2 3.8 0.4 4-0.3 4-1.2 3.8-2.1 3.4"/>
<path class="g2" d="M956 673.9l-1.4 1.4-1.7 1.1-1.8 0.8-2 0.4-2 0-1.9-0.4-1.8-1-1.4-1.3"/>
<path class="g1" d="M942 674.9l-0.5-0.9-0.6-0.8-0.7-0.7-0.8-0.6-1-0.4-0.9-0.2"/>
<circle class="d" cx="939.9" cy="665.8" r="3.1"/>
<path class="g1" d="M937.5 671.3l-1 0.1-1 0.3-0.8 0.6-0.6 0.8-0.3 0.9 0 1 0.4 0.9 0.7 0.7 0.9 0.4 1-0.1 0.9-0.5 0.5-0.9 0.1-1-0.5-0.8-0.9-0.6-1 0.1-0.8 0.5-0.4 1 0.3 0.9 0.8 0.6"/>
<circle class="f1" cx="936.3" cy="675.2" r="2.3"/>
<path class="g2" d="M942 674.9l-1-1.8-0.3-2 0.3-1.9 1.1-1.8 1.6-1.1 1.9-0.5 2 0.4 1.6 1.3 0.8 1.8-0.2 2-1.1 1.6-1.8 0.9-2-0.3-1.5-1.3-0.5-1.9 0.6-2 1.6-1.2 2-0.1 1.6 1.2 0.3 2-1.2 1.5-2 0.2"/>
<circle class="f2" cx="945.7" cy="670.2" r="4"/>
<path class="g4" d="M956 673.9l-2.9 2.7-3.6 1.8"/>
<path class="g3" d="M949.5 678.4l-3 0.4-2.9 0.8-2.7 1.2-2.5 1.7-2 2.2-1.6 2.5"/>
<path class="g1" d="M934.8 687.2l-0.3 1-0.2 1 0 1 0.2 1 0.4 0.9 0.5 0.8"/>
<circle class="d" cx="930.1" cy="694.7" r="2.9"/>
<path class="g1" d="M935.4 692.9l0.8 0.7 0.8 0.5 1 0.1 1-0.1 0.9-0.4 0.7-0.7 0.4-0.9 0-1-0.4-1-0.7-0.6-1-0.3-1 0.2-0.7 0.7-0.3 1 0.2 0.9 0.7 0.7 1 0.2 0.9-0.4 0.4-0.9-0.1-1"/>
<circle class="f1" cx="938.6" cy="691.3" r="2.3"/>
<path class="g3" d="M934.8 687.2l-0.9 2.9-0.1 3"/>
<path class="g2" d="M933.8 693.1l0.6 1.9 0.2 2-0.1 2-0.5 1.9-0.9 1.8-1.3 1.6-1.7 1.1-1.9 0.6"/>
<path class="g1" d="M928.2 706l-1 0.1-1 0.1-0.9 0.3-0.9 0.5-0.8 0.6-0.6 0.8"/>
<circle class="d" cx="919.6" cy="703.7" r="2.8"/>
<path class="g1" d="M923 708.4l-0.4 0.9-0.1 1 0.1 1 0.4 0.9 0.7 0.7 0.9 0.5 1 0.1 1-0.4 0.7-0.6 0.4-1-0.1-1-0.5-0.8-0.8-0.5-1 0-0.9 0.5-0.4 0.9 0.1 1 0.7 0.7 1 0 0.8-0.6"/>
<circle class="f1" cx="925.4" cy="710.7" r="2.1"/>
<path class="g2" d="M928.2 706l-2 0.1-1.9-0.6-1.6-1.2-1-1.7-0.3-2 0.5-2 1.2-1.5 1.8-0.8 2 0.1 1.8 1 0.9 1.8-0.1 2-1.1 1.6-1.9 0.7-1.9-0.4-1.4-1.5-0.1-2 1.4-1.4 1.9-0.4 1.8 0.8 0.9 1.8-0.5 1.9"/>
<circle class="f2" cx="926.1" cy="701.3" r="3.8"/>
<path class="g3" d="M933.8 693.1l0.8 2.9 1.7 2.5 2.4 1.7 2.9 0.8 3-0.5 2.5-1.6 1.6-2.6 0.2-3-1.2-2.7-2.5-1.8-3-0.2-2.6 1.5-1.4 2.6 0.5 3 2.1 2.1 2.9 0.7 2.8-1.1 1.3-2.7-0.8-2.9-2.6-1.5-3 0.2-1.8 2.4 0.2 3 2.3 1.9 3-0.1 1.9-2.3"/>
<circle class="f3" cx="941.8" cy="693.4" r="7"/>
<path class="g4" d="M949.5 678.4l-4 0.5-3.9-0.7-3.4-2.1-2.5-3.1-1.2-3.8 0.5-4 2.1-3.4 3.4-2.2 3.9-0.4 3.7 1.5 2.5 3.2 0.5 3.9-1.6 3.7-3.4 2.1"/>
<path class="y0 w4" d="M946.1 673.6l-4-0.1-2.9-2.7-0.7-4"/>
<path class="y1 w4" d="M938.5 666.8l1.8-3.5 3.6-1.6 3.8 1.3"/>
<path class="y2 w4" d="M947.7 663l1.6 3.7-1.5 3.7-3.7 1.6-3.7-1.6"/>
<path class="y3 w4" d="M940.4 670.4l-1.2-3.9 1.8-3.6 3.9-0.7 3.4 2.2 0 4"/>
<path class="y4 w4" d="M948.3 668.4l-3.2 2.4-3.6-1.8-0.7-3.9 2.9-2.7 3.6 1.6 0.1 4-3.2 2.3"/>
<path class="y5 w4" d="M944.2 670.3l-3.4-2.2 0.7-3.9 3.8-1.2 2.1 3.4-1.8 3.6-3.9-1 0.4-4 3.7-1.5 2 3.4-2.4 3.2"/>
<path class="y6 w4" d="M945.4 670.1l-3.8-1.4 1.1-3.9 3.9 0.5-0.6 4-4 0.2-0.1-4 4-0.6 1.3 3.8-3.7 1.6-1.8-3.6 3.6-1.8 2 3.5-3.8 1.5-0.4-3.9 4 0.2-1.3 3.7-3-2.6 2-3.4 3.7 1.6-2.4 3.2-2.9-2.8"/>
<path class="g5" d="M956.3 651.3l2.2 4.5 3.3 3.7 4.3 2.5 4.9 1.1 4.9-0.6 4.5-2.4 3.2-3.8 1.5-4.8-0.5-4.9-2.6-4.3-4.2-2.7-5-0.6-4.6 1.9-3.2 3.9"/>
<path class="y0 w5" d="M965 644.8l-0.7 5 2.1 4.5 4.4 2.5"/>
<path class="y1 w5" d="M970.8 656.8l4.9-0.7 3.7-3.4 0-5"/>
<path class="y2 w5" d="M979.4 647.7l-3.1-3.9-4.9-0.5-3.9 3.2-0.5 5"/>
<path class="y3 w5" d="M967 651.5l3.7 3.4 5 0.2 3.1-3.9-0.7-4.9-4.5-2.1"/>
<path class="y4 w5" d="M973.6 644.2l-4.5 2.3-1.4 4.7 3.2 3.9 4.8-1.2 1-4.9-3.5-3.5-4.9 1.2"/>
<path class="y5 w5" d="M968.3 646.7l-1.7 4.7 3.5 3.6 4.7-1.9-0.2-5-4.5-2.2-4.3 2.6 0.9 4.9 4.7 1.6 2.4-4.4-3.5-3.6"/>
<path class="y6 w5" d="M970.3 647l-4.7 1.7 1.5 4.7 5 0.3 0.5-5-4.9-0.9-2 4.7 4.4 2.4 2.8-4.1-3.1-3.9-4.2 2.6 2.7 4.2 3.8-3.3-3.4-3.7-4.4 2.4 1.7 4.7 4.8-1.1-2.6-4.2-3.2 3.9 4.1 3 1.6-4.7-4.9 0.5"/>
<path class="g7" d="M975.6 620.7l-6.4 2.7-5.6 4.2"/>
<path class="g6" d="M963.6 627.6l-3.5 4.9-4.3 4.2-4.9 3.4-5.5 2.4-5.9 1.3-6-0.2"/>
<path class="g4" d="M933.5 643.6l-3.8-1-3.7-1.7-3.3-2.2-2.8-2.9-2.1-3.4-1.3-3.7"/>
<path class="g2" d="M916.5 628.7l-0.1-2 0.2-2 0.5-2 0.9-1.7 1.2-1.6 1.6-1.2 1.8-0.8 2-0.2"/>
<path class="g1" d="M924.6 617.2l1 0.1 1 0.1 1-0.1 1-0.3 0.8-0.5 0.8-0.6"/>
<circle class="d" cx="932.3" cy="621.4" r="2.6"/>
<path class="g1" d="M930.2 615.9l0.6-0.8 0.3-1 0.1-1-0.2-0.9-0.5-0.9-0.8-0.6-1-0.3-1 0.1-0.9 0.5-0.5 0.9-0.2 1 0.4 0.9 0.7 0.7 1 0.2 0.9-0.4 0.6-0.8 0.1-1-0.4-0.9-1-0.3-0.9 0.3"/>
<circle class="f1" cx="928.1" cy="613.1" r="2.1"/>
<path class="g2" d="M924.6 617.2l2 0.3 1.7 1 1.3 1.5 0.7 1.9-0.1 2-0.9 1.8-1.5 1.2-2 0.5-1.9-0.5-1.5-1.4-0.5-1.9 0.5-1.9 1.4-1.4 2-0.4 1.8 0.9 0.9 1.8-0.2 1.9-1.3 1.5-2 0.1-1.5-1.3-0.1-2 1.5-1.4"/>
<circle class="f2" cx="925.3" cy="623.1" r="4.1"/>
<path class="g4" d="M916.5 628.7l-0.3-4 0.9-3.9"/>
<path class="g3" d="M917.1 620.8l1.5-2.6 1.1-2.8 0.6-3 0.2-3-0.5-2.9-1.1-2.8"/>
<path class="g1" d="M918.9 603.7l-0.5-0.8-0.7-0.8-0.8-0.6-0.9-0.4-1-0.3-1-0.1"/>
<circle class="d" cx="916" cy="595" r="2.9"/>
<path class="g1" d="M914 600.7l-1 0.2-0.9 0.4-0.7 0.7-0.5 0.9-0.2 0.9 0.1 1 0.5 0.9 0.8 0.6 1 0.2 1-0.2 0.8-0.6 0.4-0.9-0.1-1-0.6-0.8-0.9-0.4-1 0.1-0.7 0.7-0.1 1 0.4 0.9 0.8 0.5"/>
<circle class="f1" cx="912.8" cy="604.5" r="2.4"/>
<path class="g3" d="M918.9 603.7l-1.7-2.5-2.3-1.9"/>
<path class="g2" d="M914.9 599.3l-1.8-0.8-1.7-1-1.5-1.4-1.2-1.6-0.8-1.8-0.4-2 0.1-2 0.7-1.8"/>
<path class="g1" d="M908.3 586.9l0.6-0.8 0.5-0.9 0.4-0.9 0.2-1 0-1-0.3-1"/>
<circle class="d" cx="915.4" cy="581.3" r="3.1"/>
<path class="g1" d="M909.7 581.3l-0.4-0.9-0.7-0.7-0.9-0.5-0.9-0.3-1 0.1-0.9 0.4-0.7 0.8-0.4 0.9 0.1 1 0.5 0.9 0.8 0.6 1 0.1 0.9-0.4 0.6-0.7 0.1-1-0.4-0.9-0.8-0.5-1 0.1-0.8 0.7-0.2 0.9"/>
<circle class="f1" cx="905.9" cy="581.7" r="2.2"/>
<path class="g2" d="M908.3 586.9l1.2-1.6 1.7-1.1 1.9-0.5 2 0.2 1.8 1 1.2 1.6 0.4 2-0.5 1.9-1.3 1.5-1.9 0.7-2-0.4-1.5-1.3-0.6-1.9 0.6-1.9 1.6-1.2 2-0.1 1.6 1.3 0.3 1.9-1.1 1.6-2 0.5-1.8-0.7-1-1.8"/>
<circle class="f2" cx="913.7" cy="587.2" r="4.1"/>
<path class="g3" d="M914.9 599.3l-2.8-1.2-3-0.3-2.9 0.7-2.5 1.7-1.7 2.4-0.7 2.9 0.6 3 1.8 2.4 2.6 1.4 3 0 2.7-1.5 1.5-2.5 0-3-1.6-2.5-2.8-1.2-3 0.4-2.1 2.1-0.5 2.9 1.7 2.5 2.9 0.6 2.7-1.2 1-2.8-1-2.9-2.9-0.9-2.4 1.7-0.1 3"/>
<circle class="f3" cx="907.8" cy="605.5" r="5.3"/>
<path class="g4" d="M917.1 620.8l2-3.5 2.9-2.7 3.8-1.5 4 0 3.7 1.5 2.8 2.8 1.4 3.8-0.5 3.9-2.2 3.4-3.5 1.8-4-0.1-3.4-2.2-1.6-3.7 0.6-3.9"/>
<path class="y0 w4" d="M923.1 620.4l2.8-2.9 3.9-0.9 3.5 1.9"/>
<path class="y1 w4" d="M933.3 618.5l1.9 3.5-0.3 3.9-3.2 2.5"/>
<path class="y2 w4" d="M931.7 628.4l-3.9-0.7-2.7-3-0.1-4 2.6-3"/>
<path class="y3 w4" d="M927.6 617.7l3.9-0.4 2.8 2.9-0.9 3.9-3.6 1.8-3.4-2"/>
<path class="y4 w4" d="M926.4 623.9l0.1-4 3.5-2.1 3.4 2.1 0 4-3.8 1.4-2.9-2.8 1.2-3.9"/>
<path class="y5 w4" d="M927.9 618.6l3.9-0.6 2 3.5-2.5 3.1-4-0.5-1.3-3.8 3.2-2.4 3.7 1.3-0.3 4-3.6 1.6-3.1-2.6"/>
<path class="y6 w4" d="M925.9 622.2l1.9-3.5 3.6 1.9-1.8 3.6-4-0.5-0.2-4 3.9-1 1.8 3.6-3.8 1.3-1.2-3.8 3.4-2.1 2.7 3-3.4 2.1-2.1-3.3 2.7-2.9 1.9 3.5-3.9 0.9 0-4 4 0.8-0.7 3.9-3.6-1.6 1.9-3.5"/>
<path class="g6" d="M933.5 643.6l-5.7-1.6-5.2-3"/>
<path class="g5" d="M922.6 639l-3.4-3.7-3.8-3.2-4.3-2.6-4.7-1.8-4.9-0.8-5 0.2"/>
<path class="g3" d="M896.5 627.1l-2.9 0.8-2.7 1.2-2.6 1.6-2.2 2-1.8 2.4-1.2 2.8"/>
<path class="g1" d="M883.1 637.9l-0.1 1-0.1 1 0.1 0.9 0.3 1 0.5 0.9 0.7 0.7"/>
<circle class="d" cx="878.8" cy="646.1" r="2.8"/>
<path class="g1" d="M884.5 643.4l0.8 0.6 1 0.3 0.9 0.1 1-0.3 0.9-0.5 0.6-0.8 0.2-1-0.1-1-0.5-0.8-0.9-0.6-1-0.1-0.9 0.3-0.6 0.8-0.2 1 0.3 0.9 0.8 0.6 1 0.1 0.9-0.5 0.4-0.9-0.3-1"/>
<circle class="f1" cx="888" cy="641.7" r="2.2"/>
<path class="g3" d="M883.1 637.9l-0.5 2.9 0.3 3"/>
<path class="g2" d="M882.9 643.8l0.7 1.9 0.5 1.9 0.1 2-0.3 2-0.7 1.9-1.1 1.6-1.6 1.3-1.8 0.9"/>
<path class="g1" d="M878.7 657.3l-1 0.1-0.9 0.3-0.9 0.4-0.9 0.5-0.7 0.7-0.5 0.9"/>
<circle class="d" cx="870" cy="656.2" r="3"/>
<path class="g1" d="M873.8 660.2l-0.3 1 0 1 0.2 0.9 0.5 0.9 0.8 0.6 0.9 0.4 1-0.1 0.9-0.4 0.7-0.7 0.3-1-0.2-1-0.6-0.8-0.9-0.4-1 0.1-0.8 0.6-0.3 1 0.2 1 0.8 0.6 1-0.1 0.8-0.7"/>
<circle class="f1" cx="876.3" cy="662.4" r="2.2"/>
<path class="g2" d="M878.7 657.3l-2 0.2-1.9-0.4-1.7-1-1.3-1.6-0.5-1.9 0.3-2 1.1-1.7 1.7-1 2-0.1 1.8 0.8 1.2 1.7 0.1 2-1 1.7-1.7 1-2-0.3-1.4-1.4-0.4-2 0.8-1.8 1.9-0.7 1.8 0.8 0.8 1.8-0.8 1.9"/>
<circle class="f2" cx="875.3" cy="650.8" r="4.4"/>
<path class="g3" d="M882.9 643.8l1.1 2.8 1.9 2.3 2.6 1.6 2.9 0.6 3-0.5 2.5-1.6 1.7-2.5 0.4-3-0.9-2.8-2.1-2.1-2.9-0.9-2.9 0.8-2.1 2.1-0.6 3 1.1 2.8 2.6 1.4 3-0.4 2.1-2.2 0-3-1.9-2.3-2.9-0.5-2.4 1.8-0.4 3 1.8 2.3 3 0.3 2.2-2"/>
<circle class="f3" cx="892.2" cy="643.4" r="5.5"/>
<path class="g5" d="M896.5 627.1l-4.8 1.3-4.4 2.5"/>
<path class="g4" d="M887.3 630.9l-2.8 2.8-3.2 2.4-3.6 1.7-3.9 1-4 0.2-3.9-0.7"/>
<path class="g2" d="M865.9 638.3l-1.8-0.8-1.7-1.1-1.5-1.4-1.1-1.6-0.8-1.9-0.3-2 0.2-2 0.7-1.8"/>
<path class="g1" d="M859.6 625.7l0.7-0.8 0.5-0.8 0.4-1 0.2-0.9 0-1-0.2-1"/>
<circle class="d" cx="867.3" cy="620.4" r="3"/>
<path class="g1" d="M861.2 620.2l-0.4-0.9-0.7-0.8-0.8-0.5-1-0.3-1 0.1-0.9 0.4-0.7 0.7-0.4 0.9 0 1 0.5 0.9 0.8 0.6 1 0.2 0.9-0.4 0.7-0.7 0.1-1-0.4-0.9-0.8-0.6-1 0.1-0.7 0.7-0.1 1"/>
<circle class="f1" cx="858.2" cy="620.7" r="2.4"/>
<path class="g2" d="M859.6 625.7l1.3-1.6 1.7-1 2-0.5 1.9 0.3 1.7 1.1 1.2 1.6 0.3 2-0.5 1.9-1.4 1.5-1.9 0.6-1.9-0.4-1.5-1.4-0.5-1.9 0.6-1.9 1.7-1.2 2-0.1 1.5 1.3 0.5 1.9-0.9 1.8-1.7 0.9-2-0.5-1.1-1.6"/>
<circle class="f2" cx="865.4" cy="628.7" r="4.1"/>
<path class="g4" d="M865.9 638.3l-3.7-1.7-3-2.6"/>
<path class="g3" d="M859.2 634l-1.6-2.5-2-2.3-2.2-1.9-2.6-1.6-2.8-1-3-0.4"/>
<path class="g1" d="M845 624.3l-1 0.1-1 0.3-0.9 0.4-0.8 0.5-0.8 0.7-0.5 0.8"/>
<circle class="d" cx="836.2" cy="623.1" r="3.1"/>
<path class="g1" d="M840 627.1l-0.3 1-0.1 1 0.2 1 0.5 0.8 0.7 0.7 1 0.3 1 0 0.9-0.3 0.7-0.8 0.3-0.9-0.1-1-0.6-0.8-0.9-0.4-1 0-0.8 0.6-0.4 1 0.2 0.9 0.7 0.7 1 0.2 0.9-0.5"/>
<circle class="f1" cx="843.1" cy="629.7" r="2.2"/>
<path class="g3" d="M845 624.3l-3 0.3-2.8 1.1"/>
<path class="g2" d="M839.2 625.7l-1.7 1.1-1.8 0.9-1.9 0.5-2 0.2-2-0.3-1.8-0.7-1.6-1.2-1.3-1.5"/>
<path class="g1" d="M825.1 624.7l-0.3-1-0.5-0.9-0.6-0.7-0.7-0.7-0.9-0.5-0.9-0.4"/>
<circle class="d" cx="824" cy="616.1" r="3.1"/>
<path class="g1" d="M821.2 620.5l-1 0-1 0.1-0.9 0.5-0.7 0.7-0.5 0.9-0.1 1 0.3 1 0.6 0.7 0.9 0.5 1 0.1 0.9-0.4 0.6-0.8 0.2-1-0.3-0.9-0.8-0.6-1-0.1-0.9 0.4-0.5 0.9 0.2 1 0.8 0.6"/>
<circle class="f1" cx="819.4" cy="624" r="2.1"/>
<path class="g2" d="M825.1 624.7l-0.7-1.9 0-2 0.6-1.9 1.2-1.6 1.8-0.9 2-0.2 1.9 0.7 1.4 1.4 0.5 2-0.4 1.9-1.3 1.5-1.9 0.6-2-0.6-1.3-1.5-0.2-2 0.9-1.8 1.8-0.8 1.9 0.5 1.3 1.5-0.3 2-1.6 1.2-2-0.1"/>
<circle class="f2" cx="830.5" cy="619.7" r="4.6"/>
<path class="g3" d="M839.2 625.7l-2.5 1.7-1.8 2.4-0.9 2.8 0.1 3 1.2 2.8 2.1 2 2.9 1 3-0.3 2.5-1.6 1.5-2.6 0-3-1.5-2.6-2.7-1.4-3 0.2-2.3 1.9-0.9 2.9 1 2.9 2.4 1.8 3 0.1 2.4-1.8 0.5-2.9-1.6-2.5-3-0.4-2.6 1.5-0.6 3 1.8 2.4"/>
<circle class="f3" cx="842.1" cy="635.6" r="5.4"/>
<path class="g4" d="M859.2 634l-2.1-3.3-1-3.9 0.4-4 1.9-3.5 3.1-2.6 3.8-1.1 3.9 0.6 3.3 2.3 1.9 3.5-0.1 4-2.1 3.4-3.6 1.9-4-0.4-3.1-2.6"/>
<path class="y0 w4" d="M861.5 628.3l-1-3.8 1.2-3.8 3.5-1.9"/>
<path class="y1 w4" d="M865.2 618.8l4 0.8 2.5 3.1 0.1 4"/>
<path class="y2 w4" d="M871.8 626.7l-2.6 3-4 0.4-2.9-2.8 0.5-4"/>
<path class="y3 w4" d="M862.8 623.3l3.2-2.4 3.9 0.5 2.6 3.1-0.9 3.9-3.9 1"/>
<path class="y4 w4" d="M867.7 629.4l-3-2.5 0.1-4 3-2.7 3.8 1.1 0.7 3.9-3.4 2.1-3.5-2.1"/>
<path class="y5 w4" d="M865.4 625.2l0.4-3.9 3.5-2.1 3.1 2.5-0.4 3.9-4 0.6-1.8-3.6 2.1-3.4 3.9 1-0.5 4-3.9 1.1"/>
<path class="y6 w4" d="M867.8 625.3l-1.7-3.6 2.9-2.8 3.1 2.4-2.2 3.3-3.8-1.4 1.3-3.8 3.7 1.5-0.7 3.9-3.8-1.1 0.3-4 4-0.3 0.5 4-3.8 1.4-1.2-3.8 3.6-1.7 0.6 3.9-4 0.8-1.4-3.7 3.8-1.2 1.6 3.7-3.6 1.7"/>
<path class="g5" d="M887.3 630.9l-3.5 3.5-2.3 4.5-0.6 4.9 1.2 4.9 2.9 4 4.3 2.6 5 0.5 4.7-1.8 3.3-3.8 1.1-4.8-1.6-4.8-3.8-3.3-4.9-0.6-4.5 2.3"/>
<path class="y0 w5" d="M888.6 639l-2.3 4.4 0.9 4.9 3.2 3.8"/>
<path class="y1 w5" d="M890.4 652.1l5 0.7 4.5-2.1 2.2-4.4"/>
<path class="y2 w5" d="M902.1 646.3l-1.4-4.8-4.3-2.5-4.8 1.4-2.8 4.1"/>
<path class="y3 w5" d="M888.8 644.5l1.6 4.8 4.7 1.5 4.5-2.3 0.3-5-3.7-3.3"/>
<path class="y4 w5" d="M896.2 640.2l-4.8 1.4-0.9 4.9 3.8 3.2 4.6-1.7 1.4-4.9-3.2-3.9-4.8 1.5"/>
<path class="y5 w5" d="M892.3 640.7l-0.1 5 4.4 2.3 3.8-3.2-2.1-4.5-4.9 1-1.9 4.6 3.6 3.5 4.8-1.3-0.5-5-4.7-1.8"/>
<path class="y6 w5" d="M894.7 641.3l-2.2 4.5 3.4 3.7 3.7-3.3-3-4-4.7 1.8 1.7 4.8 4.9-0.9-1.1-4.9-5 0.4 1.3 4.9 5 0.3 1.7-4.6-4.9-1.2 0.1 5 4.9-0.7 0-5-4.9 0.5 1.9 4.6 4.6-2.1-1.6-4.7-4.8 1.5"/>
<path class="g6" d="M922.6 639l-4-4.5-2.4-5.5-0.3-6 2-5.7 4-4.4 5.5-2.4 6 0.3 5.2 3 3.2 5.1 0.2 6-2.9 5.2-5.3 2.9-5.9-0.6-4.6-3.9"/>
<path class="y0 w6" d="M923.3 628.5l-1.4-5.8 2-5.7 5-3.3"/>
<path class="y1 w6" d="M928.9 613.7l6 0 4.4 4.1 0 6"/>
<path class="y2 w6" d="M939.3 623.8l-3.8 4.6-6 0.5-4.9-3.5-0.7-5.9"/>
<path class="y3 w6" d="M923.9 619.5l3.9-4.6 6 0.7 3.9 4.5-1.6 5.8-5.5 2.4"/>
<path class="y4 w6" d="M930.6 628.3l-5.4-2.6-0.9-6 3.9-4.5 6 0.7 1.5 5.8-4.1 4.4-5.7-1.9"/>
<path class="y5 w6" d="M925.9 624.2l-0.6-6 5.5-2.5 4.7 3.7-1.6 5.8-5.9 0.7-2.7-5.4 3.7-4.7 5.9 1-0.3 6-6 0.3"/>
<path class="y6 w6" d="M928.6 623.1l-1.1-5.9 5.9-1.2 2.5 5.4-5.1 3.2-3.7-4.7 3.5-4.9 5.4 2.7-2.5 5.5-5.8-1.4 1.9-5.7 5.7 1.6-2.2 5.6-5.8-1.4 2.3-5.5 5.9 1.3-2.1 5.6-5.7-1.9 0.9-5.9 5.7 2-2.2 5.5-4-4.4"/>
<path class="g13" d="M1271 561l-11.6-5.9-12.6-2.9"/>
<path class="g12" d="M1246.8 552.2l-12 0.4-11.9-1.5-11.5-3.5-10.6-5.6-9.2-7.7-7.2-9.6"/>
<path class="g10" d="M1184.4 524.7l-3.9-9.2-2.4-9.7-0.7-10 1.2-9.9 3.3-9.4 5.3-8.5"/>
<path class="g8" d="M1187.2 468l5.9-5.4 6.6-4.5 7.3-3.3 7.8-1.8 8 0 7.8 1.9"/>
<path class="g6" d="M1230.6 454.9l5.2 3 4.7 3.7 4 4.5 3 5.2 1.9 5.7 0.5 6"/>
<path class="g4" d="M1249.9 483l-0.6 3.9-1.3 3.8-1.9 3.6-2.5 3-3.2 2.5-3.7 1.6"/>
<path class="g2" d="M1236.7 501.4l-2 0.3-2-0.1-1.9-0.3-1.9-0.8-1.6-1.1-1.4-1.5-0.9-1.8-0.3-1.9"/>
<path class="g1" d="M1224.7 494.2l0.1-1-0.1-1-0.1-1-0.4-1-0.5-0.8-0.7-0.7"/>
<circle class="d" cx="1228.1" cy="486.2" r="2.7"/>
<path class="g1" d="M1223 488.7l-0.9-0.5-0.9-0.3-1 0-1 0.3-0.8 0.6-0.5 0.8-0.3 1 0.2 1 0.6 0.8 0.9 0.5 1 0.1 0.9-0.4 0.6-0.8 0.1-1-0.4-0.9-0.8-0.6-1 0-0.8 0.6-0.4 1 0.3 1"/>
<circle class="f1" cx="1220.2" cy="490.9" r="2.2"/>
<path class="g2" d="M1224.7 494.2l0.2-2 0.8-1.8 1.4-1.5 1.9-0.8 2 0 1.8 0.7 1.4 1.5 0.6 1.9-0.4 2-1.3 1.5-1.8 0.7-2-0.3-1.5-1.4-0.5-1.9 0.8-1.9 1.6-1.1 2 0.3 1.4 1.4 0.3 2-1.2 1.6-1.9 0.4-1.6-1.2"/>
<circle class="f2" cx="1231.2" cy="492.9" r="3.9"/>
<path class="g4" d="M1236.7 501.4l-3.9 0.6-4-0.7"/>
<path class="g3" d="M1228.8 501.3l-2.6-1.3-2.9-1-2.9-0.6-3 0-3 0.6-2.7 1.1"/>
<path class="g1" d="M1211.7 500.1l-0.8 0.6-0.8 0.7-0.6 0.8-0.4 0.9-0.3 1 0 1"/>
<circle class="d" cx="1203.2" cy="503.1" r="2.7"/>
<path class="g1" d="M1208.8 505.1l0.2 1 0.4 0.9 0.7 0.7 0.9 0.5 0.9 0.2 1-0.2 0.9-0.5 0.6-0.8 0.2-1-0.2-0.9-0.6-0.8-0.9-0.4-1 0.1-0.9 0.5-0.4 1 0.2 0.9 0.7 0.8 1 0.3 0.9-0.4 0.6-0.8"/>
<circle class="f1" cx="1212.6" cy="505.8" r="1.9"/>
<path class="g3" d="M1211.7 500.1l-2.5 1.8-1.9 2.3"/>
<path class="g2" d="M1207.3 504.2l-0.8 1.9-1 1.7-1.4 1.4-1.6 1.2-1.8 0.8-2 0.4-2-0.1-1.8-0.7"/>
<path class="g1" d="M1194.9 510.8l-0.8-0.7-0.9-0.5-0.9-0.3-1-0.2-1 0-1 0.2"/>
<circle class="d" cx="1189.1" cy="503.6" r="3.3"/>
<path class="g1" d="M1189.3 509.3l-0.9 0.5-0.7 0.7-0.5 0.8-0.3 1 0.1 1 0.4 0.9 0.8 0.7 0.9 0.3 1 0 0.9-0.5 0.6-0.8 0.1-1-0.4-0.9-0.7-0.7-1-0.1-0.9 0.4-0.6 0.9 0 1 0.7 0.8 0.9 0.1"/>
<circle class="f1" cx="1189.6" cy="513.2" r="2"/>
<path class="g2" d="M1194.9 510.8l-1.6-1.3-1.1-1.6-0.5-2 0.3-2 1-1.7 1.6-1.2 1.9-0.4 2 0.5 1.5 1.3 0.6 1.9-0.3 2-1.4 1.5-1.9 0.5-1.9-0.6-1.2-1.5 0.1-2 1.2-1.6 1.9-0.6 1.9 0.7 1 1.7-0.2 2-1.4 1.4"/>
<circle class="f2" cx="1197.1" cy="505.3" r="3.9"/>
<path class="g3" d="M1207.3 504.2l-1.1 2.8-0.3 3 0.8 2.9 1.9 2.3 2.6 1.5 3 0.2 2.8-1.1 1.9-2.3 0.6-2.9-1-2.9-2.4-1.8-3-0.3-2.6 1.5-1.2 2.8 0.8 2.9 2.4 1.7 3-0.1 2.3-1.9 0.5-3-1.6-2.5-3-0.7-2.4 1.7-0.6 3 2 2.2 3 0.5 2-2.2"/>
<circle class="f3" cx="1215.2" cy="510" r="5.2"/>
<path class="g4" d="M1228.8 501.3l-3.5-1.8-2.8-2.9-1.7-3.6-0.2-4 1.4-3.8 2.7-2.9 3.7-1.5 4 0.3 3.4 2 2 3.5 0 4-2 3.4-3.6 1.8-4-0.5"/>
<path class="y0 w4" d="M1228.2 495.3l-3-2.6-1.1-3.9 1.2-3.8"/>
<path class="y1 w4" d="M1225.3 485l3.2-2.4 4 0 3.2 2.4"/>
<path class="y2 w4" d="M1235.7 485l0.7 3.9-1.8 3.5-3.9 0.8-3.4-2.1"/>
<path class="y3 w4" d="M1227.3 491.1l-0.4-4 2.8-2.9 3.9-0.2 3.1 2.6-0.3 4"/>
<path class="y4 w4" d="M1236.4 490.6l-3.4 2-3.4-2.1-0.3-4 3.1-2.6 3.7 1.7 0.1 4-3.5 1.8"/>
<path class="y5 w4" d="M1232.7 491.4l-3.3-2.2 1.2-3.8 3.8-1.2 2.6 3.1-1.6 3.7-3.9-0.9-0.1-4 3.8-1.3 2.6 3.1-2.4 3.2"/>
<path class="y6 w4" d="M1235.4 491.1l-3.9-0.9-0.2-4 3.9-0.6 2.2 3.4-2.7 2.9-2.9-2.8 2.3-3.2 3.4 2-1.2 3.8-4-0.1-0.3-3.9 4-0.7 1.3 3.7-4 0.8 0.3-4 3.9-0.5 0.9 3.9-3.9 1.1 0.4-3.9 3.6 1.5-1.1 3.9"/>
<path class="g6" d="M1249.9 483l-1 5.9-2.4 5.5"/>
<path class="g5" d="M1246.5 494.4l-3.3 3.8-2.7 4.2-2 4.6-1.1 4.8-0.2 5 0.8 5"/>
<path class="g3" d="M1238 521.8l1.1 2.7 1.6 2.6 1.9 2.3 2.3 2 2.6 1.4 2.9 0.9"/>
<path class="g1" d="M1250.4 533.7l1 0 1-0.1 0.9-0.2 0.9-0.5 0.9-0.5 0.6-0.8"/>
<circle class="d" cx="1258.6" cy="537" r="2.7"/>
<path class="g1" d="M1255.7 531.6l0.5-0.9 0.2-1-0.1-1-0.3-0.9-0.7-0.7-0.9-0.5-1-0.2-0.9 0.3-0.8 0.6-0.5 0.9 0 1 0.5 0.9 0.8 0.5 1 0.1 0.9-0.5 0.5-0.8-0.1-1-0.7-0.8-0.9-0.2-1 0.4"/>
<circle class="f1" cx="1253" cy="529.2" r="2.1"/>
<path class="g3" d="M1250.4 533.7l3 0.1 2.9-0.7"/>
<path class="g2" d="M1256.3 533.1l1.7-0.9 1.9-0.7 2-0.4 2 0.1 1.9 0.4 1.8 0.9 1.5 1.4 1.1 1.7"/>
<path class="g1" d="M1270.2 535.6l0.2 0.9 0.4 1 0.5 0.8 0.7 0.8 0.8 0.6 0.9 0.4"/>
<circle class="d" cx="1270.3" cy="544.8" r="3.2"/>
<path class="g1" d="M1273.7 540.1l1 0.1 1 0 0.9-0.4 0.8-0.6 0.5-0.9 0.3-0.9-0.2-1-0.5-0.9-0.9-0.5-0.9-0.2-1 0.3-0.7 0.7-0.3 0.9 0.2 1 0.8 0.7 0.9 0.2 1-0.3 0.5-0.9 0-1-0.6-0.7"/>
<circle class="f1" cx="1275.5" cy="537.3" r="2.4"/>
<path class="g2" d="M1270.2 535.6l0.5 1.9-0.2 2-0.8 1.8-1.4 1.4-1.8 0.8-2 0-1.8-0.9-1.3-1.6-0.3-1.9 0.6-1.9 1.5-1.4 1.9-0.4 1.9 0.8 1.1 1.6 0.1 2-1.1 1.7-1.9 0.7-1.9-0.5-1.2-1.6 0.4-2 1.6-1.1 2 0.4"/>
<circle class="f2" cx="1265.5" cy="538.7" r="4.7"/>
<path class="g3" d="M1256.3 533.1l2.6-1.4 2.1-2.2 1.2-2.7 0.3-3-0.9-2.9-1.9-2.3-2.7-1.3-3-0.1-2.7 1.3-1.9 2.4-0.4 2.9 1.1 2.8 2.4 1.8 3 0.2 2.6-1.4 1.3-2.8-0.6-2.9-2.2-2-3-0.4-2.6 1.6-0.9 2.8 1 2.8 2.8 1 2.6-1.6 0.7-2.9-1.9-2.3"/>
<circle class="f3" cx="1253.9" cy="524.4" r="5.8"/>
<path class="g5" d="M1238 521.8l1.9 4.6 3 4"/>
<path class="g4" d="M1242.9 530.4l3.1 2.5 2.7 2.9 2.2 3.4 1.5 3.7 0.6 4-0.3 4"/>
<path class="g2" d="M1252.7 550.9l-0.7 1.8-1 1.8-1.3 1.5-1.5 1.3-1.8 0.9-1.9 0.5-2 0-1.9-0.6"/>
<path class="g1" d="M1240.6 558.1l-0.9-0.6-0.9-0.5-0.9-0.3-1-0.1-1 0.1-1 0.3"/>
<circle class="d" cx="1234.6" cy="551.2" r="3.1"/>
<path class="g1" d="M1234.9 557l-0.8 0.5-0.7 0.7-0.5 0.8-0.2 1 0.2 1 0.4 0.9 0.8 0.6 0.9 0.4 1-0.2 0.9-0.5 0.5-0.8 0.1-1-0.4-0.9-0.8-0.6-1-0.1-0.9 0.5-0.5 0.9 0.1 1 0.7 0.7 1 0.2"/>
<circle class="f1" cx="1235.1" cy="560.8" r="2.4"/>
<path class="g2" d="M1240.6 558.1l-1.7-1.2-1.2-1.6-0.6-1.9 0.2-2 0.9-1.8 1.5-1.3 2-0.5 1.9 0.4 1.6 1.3 0.7 1.8-0.2 2-1.2 1.6-1.9 0.6-2-0.5-1.3-1.5-0.1-2 0.9-1.7 1.7-1 2 0.2 1.4 1.4 0.1 2-1.2 1.6"/>
<circle class="f2" cx="1243.2" cy="550.8" r="4.9"/>
<path class="g4" d="M1252.7 550.9l-1.4 3.7-2.4 3.3"/>
<path class="g3" d="M1248.9 557.9l-2.4 1.8-2.1 2.1-1.7 2.5-1.3 2.7-0.7 2.9-0.1 3"/>
<path class="g1" d="M1240.6 572.9l0.3 0.9 0.3 1 0.5 0.8 0.7 0.8 0.8 0.6 0.9 0.4"/>
<circle class="d" cx="1240.3" cy="581.8" r="2.9"/>
<path class="g1" d="M1244.1 577.4l0.9 0.2 1 0 1-0.4 0.8-0.6 0.5-0.8 0.3-1-0.2-1-0.5-0.8-0.8-0.6-1-0.2-0.9 0.3-0.8 0.7-0.3 0.9 0.2 1 0.7 0.7 1 0.3 1-0.4 0.4-0.9 0-1-0.7-0.7"/>
<circle class="f1" cx="1246.3" cy="574.8" r="2.4"/>
<path class="g3" d="M1240.6 572.9l0.7 2.9 1.5 2.6"/>
<path class="g2" d="M1242.8 578.4l1.4 1.4 1.2 1.6 0.9 1.8 0.6 1.9 0.1 2-0.4 2-0.8 1.8-1.3 1.5"/>
<path class="g1" d="M1244.5 592.4l-0.9 0.5-0.7 0.7-0.7 0.7-0.5 0.9-0.4 0.9-0.1 1"/>
<circle class="d" cx="1235.9" cy="595.5" r="3.4"/>
<path class="g1" d="M1241.2 597.1l0.1 1 0.4 0.9 0.6 0.8 0.8 0.6 1 0.2 1 0 0.9-0.5 0.7-0.7 0.3-1-0.2-1-0.5-0.8-0.9-0.5-1 0-0.9 0.5-0.4 0.9 0 1 0.7 0.8 0.9 0.4 0.9-0.4 0.6-0.8"/>
<circle class="f1" cx="1245.2" cy="597.9" r="2.2"/>
<path class="g2" d="M1244.5 592.4l-1.7 1-2 0.5-1.9-0.3-1.8-0.9-1.3-1.5-0.5-2 0.3-1.9 1.1-1.7 1.8-0.9 2 0 1.7 1.1 0.9 1.7-0.1 2-1.2 1.6-1.9 0.6-1.9-0.8-0.9-1.8 0.4-2 1.7-1.1 1.9 0.3 1.1 1.6-0.2 2"/>
<circle class="f2" cx="1239.3" cy="588.7" r="3.9"/>
<path class="g3" d="M1242.8 578.4l2.1 2.1 2.7 1.4 3 0.4 2.9-0.6 2.6-1.6 1.7-2.4 0.7-2.9-0.6-2.9-1.7-2.5-2.7-1.3-3 0-2.6 1.5-1.5 2.6 0.1 3 1.7 2.5 2.8 1 2.9-0.8 1.9-2.3 0-3-1.8-2.3-2.9-0.9-2.8 1.2-0.9 2.8 1.7 2.5 2.9 0.6 2.5-1.8"/>
<circle class="f3" cx="1251.3" cy="572.8" r="5.2"/>
<path class="g4" d="M1248.9 557.9l-3.1 2.4-3.8 1.3-4-0.2-3.7-1.5-2.8-2.9-1.3-3.8 0.3-4 2.2-3.3 3.5-2 4-0.1 3.4 2.1 1.9 3.5-0.4 4-2.6 3.1"/>
<path class="y0 w4" d="M1242.5 556.5l-3.8 0.9-3.8-1.4-2.2-3.3"/>
<path class="y1 w4" d="M1232.7 552.7l0.4-4 2.9-2.8 4-0.6"/>
<path class="y2 w4" d="M1240 545.3l3.4 2.1 0.8 3.9-2.3 3.3-3.9 0.8"/>
<path class="y3 w4" d="M1238 555.4l-3-2.7 0.3-4 3.5-2 3.5 1.9 0.9 3.9"/>
<path class="y4 w4" d="M1243.2 552.5l-2.8 2.8-3.9-0.5-2-3.4 2-3.5 3.9 0.5 1.4 3.8-2.2 3.4"/>
<path class="y5 w4" d="M1239.6 555.6l-4-0.4-1.4-3.8 3.3-2.4 3.4 2.1-1.3 3.8-3.9 0.8-1.5-3.7 2.6-3 3.9 0.7 0.6 4"/>
<path class="y6 w4" d="M1241.3 553.7l-3.2 2.3-3.2-2.4 2.4-3.2 3.9 0.8-0.4 4-3.9-0.7 0.5-4 4 0.6-1 3.9-3.8-1.4 1.8-3.6 3.1 2.5-2.6 3.1-3.6-1.8 1.4-3.7 3.8 1.3-2.1 3.4-3-2.6 2.2-3.4 3.7 1.7-2.2 3.3"/>
<path class="g5" d="M1242.9 530.4l3.9 3.1 4.7 1.8 5 0.1 4.7-1.6 3.8-3.2 2.3-4.5 0.2-5-1.9-4.6-3.8-3.2-4.8-1.1-4.8 1.4-3.5 3.6-0.9 4.9 1.8 4.7"/>
<path class="y0 w5" d="M1249.6 526.8l4.2 2.8 5-0.4 3.7-3.3"/>
<path class="y1 w5" d="M1262.5 525.9l0.5-5-2.5-4.3-4.8-1.7"/>
<path class="y2 w5" d="M1255.7 514.9l-4.4 2.3-2.3 4.5 1.7 4.7 4.8 1.6"/>
<path class="y3 w5" d="M1255.5 528l4.5-2.1 1.2-4.9-2.5-4.3-5-0.5-3.9 3.1"/>
<path class="y4 w5" d="M1249.8 519.3l0.1 5 4.3 2.4 4.5-2.2-0.2-5-3.8-3.2-4.9 1.2-1.5 4.7"/>
<path class="y5 w5" d="M1248.3 522.2l3.5 3.6 4.8-1.4 1.2-4.9-3.9-3.1-4.8 1.5-1.1 4.9 4.2 2.6 4.4-2.4-0.8-4.9-4.9-1"/>
<path class="y6 w5" d="M1250.9 517.1l-2.3 4.5 4.3 2.6 3-4-3.4-3.6-4 3 1.3 4.8 5-0.3-0.2-5-4.9 0.7 0 5 4.9-0.9-1-4.9-5 0.2-0.5 5 5 0.5 0.7-4.9-4.9-0.3 1.4 4.8 4.8-1.6-2.1-4.6-4.4 2.4"/>
<path class="g6" d="M1246.5 494.4l-3.9 4.5-5.2 3.2-5.8 1.2-6-0.8-5.2-3-3.6-4.7-1.4-5.9 1.2-5.9 3.6-4.7 5.5-2.5 6 0.4 5 3.3 2.6 5.4-0.7 6"/>
<path class="y0 w6" d="M1238.6 490.9l-3.9 4.6-5.7 1.7-5.4-2.5"/>
<path class="y1 w6" d="M1223.6 494.7l-3.1-5.1 1-5.9 4.3-4.2"/>
<path class="y2 w6" d="M1225.8 479.5l6 0 4.5 3.9 1.1 5.9-4.1 4.4"/>
<path class="y3 w6" d="M1233.3 493.7l-6-0.3-3.4-4.9 0.8-5.9 5.3-2.9 5 3.3"/>
<path class="y4 w6" d="M1235 483l-0.5 6-5.6 2.2-4.6-3.8 1.2-5.9 5.8-1.3 4.6 3.9-1.2 5.8"/>
<path class="y5 w6" d="M1234.7 489.9l-5.8 1.5-4.5-4 2.7-5.3 6 0.2 2.1 5.6-4.7 3.8-4.5-4 3-5.2 5.9 1.2-0.7 5.9"/>
<path class="y6 w6" d="M1234.2 489.6l-6 0.8-3.1-5.2 4.9-3.5 4.2 4.2-3.2 5.1-5.4-2.5 2.9-5.2 5.8 1.3 0.6 6-6 0.4 0.6-6 5.9-0.8 1.3 5.8-5.6 2.2-2-5.6 5.6-2 3 5.2-4.6 3.9-2.5-5.5 5.6-2-0.4 6"/>
<path class="g8" d="M1230.6 454.9l7 4 5.5 5.8"/>
<path class="g7" d="M1243.1 464.7l2.9 6.4 3.8 5.8 4.6 5.3 5.5 4.3 6.2 3.2 6.8 1.8"/>
<path class="g5" d="M1272.9 491.5l5 0 5-0.6 4.8-1.4 4.5-2.2 3.9-3 3.3-3.8"/>
<path class="g3" d="M1299.4 480.5l1.4-2.7 1-2.8 0.5-3 0-3-0.6-2.9-1.2-2.7"/>
<path class="g1" d="M1300.5 463.4l-0.6-0.8-0.7-0.7-0.9-0.6-0.9-0.4-0.9-0.3-1 0"/>
<circle class="d" cx="1297.1" cy="455.4" r="2.9"/>
<path class="g1" d="M1295.5 460.6l-1 0.2-0.9 0.5-0.7 0.7-0.5 0.9-0.1 1 0.2 1 0.5 0.8 0.8 0.6 1 0.2 1-0.3 0.7-0.6 0.4-0.9-0.1-1-0.6-0.8-1-0.4-0.9 0.2-0.7 0.7-0.1 1 0.5 0.8 0.9 0.4"/>
<circle class="f1" cx="1294.8" cy="464.7" r="2.2"/>
<path class="g3" d="M1300.5 463.4l-1.8-2.4-2.4-1.8"/>
<path class="g2" d="M1296.3 459.2l-1.9-0.7-1.7-1-1.6-1.3-1.2-1.5-0.9-1.8-0.5-2 0.1-2 0.6-1.9"/>
<path class="g1" d="M1289.2 447l0.5-0.8 0.5-0.9 0.3-0.9 0.1-1 0-1-0.3-1"/>
<circle class="d" cx="1296" cy="441" r="3.2"/>
<path class="g1" d="M1290.3 441.4l-0.5-0.9-0.7-0.7-0.9-0.4-0.9-0.2-1 0.1-0.9 0.5-0.7 0.7-0.3 1 0.1 1 0.5 0.8 0.9 0.6 1 0.1 0.9-0.4 0.6-0.9 0.1-1-0.5-0.8-0.9-0.5-1 0-0.7 0.7-0.2 1"/>
<circle class="f1" cx="1286.6" cy="441.8" r="1.9"/>
<path class="g2" d="M1289.2 447l1.1-1.6 1.6-1.2 1.9-0.6 2 0.2 1.8 0.9 1.3 1.6 0.5 1.9-0.4 2-1.3 1.5-1.8 0.8-2-0.3-1.6-1.2-0.6-1.9 0.5-2 1.5-1.3 2-0.3 1.8 0.9 0.9 1.8-0.4 2-1.4 1.4-1.9 0.2-1.5-1.3"/>
<circle class="f2" cx="1294.8" cy="449.6" r="3.8"/>
<path class="g3" d="M1296.3 459.2l-2.8-1.1-3-0.1-2.9 0.8-2.5 1.7-1.6 2.5-0.5 3 0.7 2.9 1.9 2.4 2.7 1.2 3-0.1 2.6-1.6 1.4-2.7-0.2-3-1.7-2.4-2.9-1-2.9 0.7-2.1 2.2-0.6 2.9 1.4 2.7 2.6 1.5 2.9-0.6 1.9-2.3-0.8-3-2.6-1.4-2.9 0.9-1.3 2.7"/>
<circle class="f3" cx="1290.2" cy="467.5" r="5.6"/>
<path class="g5" d="M1299.4 480.5l2.3-4.4 1-4.9"/>
<path class="g4" d="M1302.7 471.2l-0.3-4 0.2-4 1-3.9 1.7-3.6 2.4-3.2 3.1-2.5"/>
<path class="g2" d="M1310.8 450l1.8-0.9 2-0.5 2-0.2 1.9 0.2 1.9 0.6 1.7 1.1 1.4 1.4 0.9 1.8"/>
<path class="g1" d="M1324.4 453.5l0.2 1 0.3 1 0.5 0.9 0.6 0.8 0.7 0.6 0.9 0.5"/>
<circle class="d" cx="1323.7" cy="462.4" r="3"/>
<path class="g1" d="M1327.6 458.3l1 0.3 1 0 0.9-0.3 0.8-0.6 0.7-0.8 0.2-0.9 0-1-0.5-0.9-0.8-0.6-0.9-0.3-1 0.2-0.8 0.7-0.3 0.9 0.1 1 0.7 0.7 0.9 0.3 1-0.2 0.7-0.8 0-1-0.6-0.8"/>
<circle class="f1" cx="1329.6" cy="455.5" r="2.3"/>
<path class="g2" d="M1324.4 453.5l0.4 2-0.3 2-1 1.7-1.5 1.3-1.9 0.6-2-0.2-1.7-1-1.1-1.6-0.2-2 0.8-1.9 1.5-1.2 2-0.2 1.8 0.9 1 1.7-0.1 2-1.2 1.6-2 0.3-1.7-1-0.6-2 0.8-1.8 1.8-0.8 2 0.5"/>
<circle class="f2" cx="1319.5" cy="457.3" r="4.3"/>
<path class="g4" d="M1310.8 450l3.7-1.7 3.9-0.5"/>
<path class="g3" d="M1318.4 447.8l3 0.5 3 0.2 2.9-0.4 2.9-0.8 2.7-1.4 2.3-1.9"/>
<path class="g1" d="M1335.2 444l0.6-0.9 0.4-0.8 0.4-1 0.1-1 0-1-0.3-0.9"/>
<circle class="d" cx="1342.3" cy="438.6" r="2.7"/>
<path class="g1" d="M1336.4 438.4l-0.5-0.9-0.7-0.7-0.8-0.5-1-0.2-1 0.1-0.9 0.4-0.6 0.8-0.4 0.9 0.1 1 0.5 0.9 0.8 0.5 1 0.2 1-0.4 0.6-0.8 0.1-1-0.5-0.9-0.9-0.5-1 0.1-0.7 0.7-0.3 0.9"/>
<circle class="f1" cx="1332.4" cy="439.4" r="2.3"/>
<path class="g3" d="M1335.2 444l1.7-2.5 1.1-2.8"/>
<path class="g2" d="M1338 438.7l0.2-2 0.5-1.9 0.8-1.8 1.2-1.6 1.5-1.4 1.7-1 2-0.4 2 0"/>
<path class="g1" d="M1347.9 428.6l0.9 0.4 1 0.2 1 0 1-0.1 0.9-0.3 0.9-0.5"/>
<circle class="d" cx="1355" cy="433.9" r="2.8"/>
<path class="g1" d="M1353.6 428.3l0.7-0.7 0.5-0.9 0.2-1-0.1-1-0.4-0.9-0.7-0.7-0.9-0.5-1 0-0.9 0.4-0.7 0.7-0.3 0.9 0.2 1 0.6 0.8 1 0.3 0.9-0.1 0.8-0.7 0.2-1-0.4-0.9-1-0.4-0.9 0.1"/>
<circle class="f1" cx="1351.9" cy="424.9" r="2.1"/>
<path class="g2" d="M1347.9 428.6l1.8 0.7 1.6 1.3 1.1 1.7 0.3 1.9-0.4 2-1.1 1.6-1.8 1-2 0.1-1.8-0.8-1.2-1.5-0.3-2 0.8-1.9 1.7-1.1 2 0 1.6 1.1 0.7 1.9-0.5 1.9-1.6 1.2-2-0.1-1.3-1.6 0-2 1.5-1.4"/>
<circle class="f2" cx="1348.4" cy="435.7" r="4.4"/>
<path class="g3" d="M1338 438.7l0.3-2.9-0.7-3-1.6-2.5-2.4-1.8-2.9-0.7-3 0.5-2.4 1.8-1.5 2.6 0 3 1.5 2.6 2.6 1.6 3-0.1 2.4-1.7 1.1-2.8-0.8-2.9-2.2-2-3-0.3-2.6 1.5-1.1 2.8 1 2.9 2.7 1.2 3-0.6 1.9-2.3-0.5-2.9-2.3-2-2.9 0.5"/>
<circle class="f3" cx="1329.6" cy="434.3" r="5.4"/>
<path class="g4" d="M1318.4 447.8l4 0.7 3.5 1.9 2.6 3 1.5 3.7 0 4-1.5 3.7-2.9 2.8-3.8 1.2-4-0.5-3.2-2.3-1.8-3.6 0.3-4 2.2-3.3 3.7-1.6"/>
<path class="y0 w4" d="M1319 453.5l3.9 0.7 3 2.7 1 3.8"/>
<path class="y1 w4" d="M1326.9 460.7l-1.4 3.8-3.4 2.1-4-0.3"/>
<path class="y2 w4" d="M1318.1 466.3l-2.6-3 0.6-4 3.4-2.1 3.7 1.5"/>
<path class="y3 w4" d="M1323.2 458.7l1.3 3.7-1.9 3.6-3.9 0.3-2.4-3.3 1.6-3.7"/>
<path class="y4 w4" d="M1317.9 459.3l3.7-1.4 3.6 1.7 1.3 3.8-2.3 3.3-4-0.3-1.7-3.6 1.9-3.5"/>
<path class="y5 w4" d="M1320.4 459.3l4-0.3 2.4 3.2-1.6 3.6-4 0.5-1.4-3.8 2.3-3.2 4 0.5 1.6 3.6-2.4 3.2-3.8-1.3"/>
<path class="y6 w4" d="M1321.5 465.3l0.5-3.9 3.9-0.5 0.5 3.9-3.5 2-2.5-3.1 2.3-3.3 3.1 2.6-1.8 3.6-3.9-1.1 1.1-3.8 4 0-0.3 4-4-0.7 0-4 3.9 0.9-1.9 3.5-3.5-1.9 2.3-3.2 3.3 2.2-3.2 2.5-1.5-3.8"/>
<path class="g5" d="M1302.7 471.2l-0.4-5-1.9-4.7-3.2-3.8-4.2-2.6-5-1-4.9 0.9-4.2 2.7-2.8 4.1-0.8 5 1.4 4.8 3.4 3.6 4.7 1.6 4.9-0.9 3.9-3.2"/>
<path class="y0 w5" d="M1293.6 472.7l1.5-4.7-1.4-4.8-3.9-3.1"/>
<path class="y1 w5" d="M1289.8 460.1l-5-0.4-4.1 2.8-1.1 4.9"/>
<path class="y2 w5" d="M1279.6 467.4l2.8 4.2 4.9 1.1 4.2-2.7 0.9-4.9"/>
<path class="y3 w5" d="M1292.4 465.1l-2.8-4.1-4.9-1.2-4.4 2.3-1.7 4.7 2.2 4.5"/>
<path class="y4 w5" d="M1280.8 471.3l4.7 1.7 3.8-3.1-0.1-5-4.1-2.9-4.7 1.7-0.4 4.9 4.1 2.9"/>
<path class="y5 w5" d="M1284.1 471.5l4.3-2.6-0.9-4.9-4.9-1-2.5 4.3 2.6 4.3 4.8-1.6 1.2-4.8-4.7-1.9-2.9 4 2.3 4.4"/>
<path class="y6 w5" d="M1283.4 471.7l4.6-1.8-0.4-5-4.6-1.9-2.1 4.5 3.5 3.6 3.3-3.8-3.1-3.9-4.8 1.4 1.1 4.9 5 0.6 1.1-4.8-4.8-1.1-2.2 4.5 4.8 1.3-0.2-5-5-0.4 1.4 4.8 4.4-2.3-2.4-4.3-4.4 2.2 3 4"/>
<path class="g7" d="M1272.9 491.5l7 0.1 6.8-1.8"/>
<path class="g6" d="M1286.7 489.8l5.1-3.1 5.6-2.3 5.8-1.3 6-0.2 5.9 1.2 5.4 2.5"/>
<path class="g4" d="M1320.5 486.6l3.1 2.6 2.6 3 2.1 3.4 1.3 3.8 0.6 4-0.4 3.9"/>
<path class="g2" d="M1329.8 507.3l-0.7 1.9-1 1.8-1.3 1.5-1.5 1.3-1.8 0.9-2 0.5-2-0.1-1.9-0.6"/>
<path class="g1" d="M1317.6 514.5l-0.8-0.6-0.9-0.4-0.9-0.3-1-0.2-1 0.1-1 0.3"/>
<circle class="d" cx="1312" cy="507.7" r="2.9"/>
<path class="g1" d="M1312 513.4l-0.8 0.5-0.8 0.7-0.4 0.9-0.2 0.9 0.1 1 0.5 0.9 0.8 0.7 0.9 0.3 1-0.1 0.9-0.6 0.5-0.8 0.1-1-0.4-0.9-0.8-0.6-1-0.1-0.9 0.5-0.5 0.9 0.1 1 0.6 0.7 1 0.3"/>
<circle class="f1" cx="1312.5" cy="516.8" r="2.3"/>
<path class="g2" d="M1317.6 514.5l-1.6-1.1-1.2-1.7-0.6-1.9 0.2-2 0.9-1.7 1.5-1.3 2-0.5 1.9 0.4 1.6 1.2 0.8 1.9-0.3 2-1.2 1.5-1.9 0.7-2-0.5-1.3-1.5-0.2-2 1.1-1.7 1.9-0.7 1.9 0.6 1.3 1.5-0.2 2-1.6 1.3"/>
<circle class="f2" cx="1319.7" cy="508.8" r="4.2"/>
<path class="g4" d="M1329.8 507.3l-1.4 3.8-2.4 3.2"/>
<path class="g3" d="M1326 514.3l-2.4 1.8-2.1 2.1-1.8 2.5-1.3 2.7-0.8 2.9 0 3"/>
<path class="g1" d="M1317.6 529.3l0.2 0.9 0.3 1 0.5 0.8 0.7 0.8 0.7 0.6 0.9 0.5"/>
<circle class="d" cx="1316.9" cy="538.4" r="2.9"/>
<path class="g1" d="M1320.9 533.9l1 0.2 1 0 1-0.4 0.8-0.6 0.5-0.8 0.3-1-0.2-1-0.5-0.8-0.8-0.6-0.9-0.2-1 0.2-0.7 0.7-0.4 1 0.2 1 0.7 0.7 1 0.2 0.9-0.3 0.7-0.8 0.2-1-0.6-0.8"/>
<circle class="f1" cx="1323.9" cy="531.2" r="2.6"/>
<path class="g3" d="M1317.6 529.3l0.6 2.9 1.4 2.6"/>
<path class="g2" d="M1319.6 534.8l1.4 1.5 1.2 1.6 0.9 1.8 0.5 1.9 0.1 2-0.4 2-0.9 1.8-1.3 1.4"/>
<path class="g1" d="M1321.1 548.8l-0.9 0.6-0.7 0.6-0.7 0.7-0.6 0.9-0.3 0.9-0.2 1"/>
<circle class="d" cx="1312.3" cy="551.3" r="3.1"/>
<path class="g1" d="M1317.7 553.5l0.1 1 0.4 0.9 0.6 0.8 0.8 0.6 1 0.3 1-0.1 0.9-0.4 0.6-0.7 0.4-1-0.2-1-0.5-0.8-0.9-0.5-1 0-0.8 0.5-0.5 0.8 0 1 0.6 0.8 1 0.4 0.9-0.2 0.6-0.8"/>
<circle class="f1" cx="1321.3" cy="554.6" r="2"/>
<path class="g2" d="M1321.1 548.8l-1.7 1.1-2 0.4-2-0.3-1.7-1-1.3-1.5-0.5-2 0.4-1.9 1.1-1.7 1.8-0.8 2 0 1.7 1.1 0.9 1.8-0.2 2-1.2 1.5-1.9 0.6-1.9-0.7-1-1.8 0.2-2 1.4-1.4 2-0.1 1.7 1.1 0.5 2"/>
<circle class="f2" cx="1316.9" cy="544.3" r="4"/>
<path class="g3" d="M1319.6 534.8l2.1 2.2 2.7 1.4 3 0.4 2.9-0.5 2.6-1.6 1.7-2.4 0.7-2.9-0.6-3-1.8-2.3-2.7-1.3-3 0.1-2.6 1.6-1.3 2.6 0.2 3 1.8 2.4 2.8 0.9 2.8-1.2 1.6-2.5 0-3-2-2.2-3-0.3-2.2 2-0.3 3 1.7 2.5 2.9 0.4 2.4-1.9"/>
<circle class="f3" cx="1329.1" cy="529.5" r="5.5"/>
<path class="g4" d="M1326 514.3l-3.2 2.4-3.8 1.3-4-0.1-3.7-1.6-2.8-2.8-1.5-3.7 0.3-4 2-3.5 3.3-2.2 4-0.3 3.6 1.8 2.2 3.3 0.1 4-2.2 3.4"/>
<path class="y0 w4" d="M1320.3 512.3l-3.7 1.5-3.9-0.7-2.8-2.9"/>
<path class="y1 w4" d="M1309.9 510.2l-0.5-3.9 2.1-3.4 3.9-0.9"/>
<path class="y2 w4" d="M1315.4 502l3.4 2 0.9 3.9-1.8 3.6-3.9 0.9"/>
<path class="y3 w4" d="M1314 512.4l-3.1-2.6 0.2-4 3.4-2.1 3.8 1.3 1.8 3.6"/>
<path class="y4 w4" d="M1320.1 508.6l-1.8 3.5-3.8 1.2-3.2-2.4-0.1-4 3.3-2.3 3.6 1.8 0.3 4"/>
<path class="y5 w4" d="M1318.4 510.4l-3.4 2.1-3.1-2.5 0.5-4 3.8-1.3 2.4 3.1-1.9 3.5-4-0.6-0.2-4 3.9-0.5 1.3 3.7"/>
<path class="y6 w4" d="M1317.7 509.9l-3.5 1.8-2.8-2.9 1.6-3.7 3.6 1.8-0.3 4-4-0.5-0.9-3.9 3.5-2 1.4 3.8-3.9 0.8-1.7-3.7 3.4-2 1.9 3.5-3.7 1.6-1.8-3.6 3.7-1.6 1 3.8-4 0.4 1-3.9 3.3 2.3-3.2 2.3"/>
<path class="g6" d="M1320.5 486.6l4.6 3.9 3.5 4.9"/>
<path class="g5" d="M1328.6 495.4l1.6 4.7 2.2 4.5 3 4 3.6 3.5 4.2 2.7 4.7 1.6"/>
<path class="g3" d="M1347.9 516.4l3 0.2 3-0.2 2.9-0.6 2.8-1.2 2.5-1.7 2-2.2"/>
<path class="g1" d="M1364.1 510.7l0.5-0.9 0.4-0.9 0.2-1 0-1-0.1-1-0.4-0.9"/>
<circle class="d" cx="1370.8" cy="504.5" r="2.7"/>
<path class="g1" d="M1364.7 505l-0.6-0.8-0.8-0.6-0.9-0.4-1-0.1-1 0.2-0.8 0.6-0.6 0.8-0.2 1 0.2 1 0.6 0.8 0.9 0.4 1 0 0.9-0.5 0.5-0.9 0-1-0.6-0.8-0.9-0.4-1 0.3-0.5 0.8 0.1 1"/>
<circle class="f1" cx="1361.5" cy="506.2" r="2"/>
<path class="g3" d="M1364.1 510.7l1.5-2.6 0.7-2.9"/>
<path class="g2" d="M1366.3 505.2l-0.1-2 0.3-2 0.5-1.9 1-1.8 1.3-1.5 1.6-1.2 1.8-0.7 2-0.2"/>
<path class="g1" d="M1374.7 493.9l1 0.2 1 0.1 1-0.1 1-0.3 0.9-0.4 0.7-0.7"/>
<circle class="d" cx="1383" cy="498.3" r="3"/>
<path class="g1" d="M1380.3 492.7l0.6-0.8 0.4-0.9 0.1-1-0.2-1-0.5-0.8-0.8-0.6-0.9-0.3-1 0-0.9 0.5-0.6 0.8-0.2 1 0.4 1 0.7 0.7 1 0.2 0.9-0.3 0.6-0.8 0.1-1-0.4-0.9-0.9-0.5-1 0.1"/>
<circle class="f1" cx="1377.9" cy="489.6" r="2"/>
<path class="g2" d="M1374.7 493.9l2 0.4 1.7 1 1.3 1.6 0.6 1.9-0.1 2-1 1.7-1.6 1.2-1.9 0.4-1.9-0.5-1.5-1.4-0.5-2 0.5-1.9 1.5-1.3 2-0.3 1.8 0.9 0.8 1.8-0.6 1.9-1.7 1.1-2-0.2-1.3-1.5 0.2-2 1.7-1.1"/>
<circle class="f2" cx="1375.8" cy="499.5" r="4.1"/>
<path class="g3" d="M1366.3 505.2l-0.1-3-1-2.8-1.9-2.4-2.6-1.5-2.9-0.5-2.9 0.6-2.4 1.8-1.5 2.7-0.1 3 1.4 2.7 2.4 1.7 3 0.3 2.7-1.4 1.5-2.5-0.1-3-1.9-2.4-2.9-0.6-2.7 1.2-1.3 2.8 0.7 2.9 2.6 1.5 2.9-0.7 1.4-2.7-1.1-2.8-2.9-0.9-2.7 1.2"/>
<circle class="f3" cx="1356.4" cy="504" r="5.9"/>
<path class="g5" d="M1347.9 516.4l5 0.4 4.9-1"/>
<path class="g4" d="M1357.8 515.8l3.6-1.8 3.8-1.3 3.9-0.6 4 0.2 3.9 1 3.5 2"/>
<path class="g2" d="M1380.5 515.3l1.4 1.4 1.1 1.6 0.9 1.8 0.5 2 0.1 2-0.4 1.9-0.9 1.8-1.4 1.5"/>
<path class="g1" d="M1381.8 529.3l-0.8 0.5-0.8 0.6-0.7 0.7-0.5 0.9-0.4 0.9-0.2 1"/>
<circle class="d" cx="1372.9" cy="531.9" r="3.2"/>
<path class="g1" d="M1378.4 533.9l0.1 1 0.4 0.9 0.6 0.8 0.8 0.6 0.9 0.3 1 0 1-0.5 0.6-0.7 0.4-0.9-0.2-1-0.5-0.9-0.9-0.5-1 0-0.8 0.5-0.5 0.9 0 1 0.6 0.8 1 0.2 0.9-0.3 0.6-0.9"/>
<circle class="f1" cx="1381.4" cy="534.8" r="2.5"/>
<path class="g2" d="M1381.8 529.3l-1.7 1-1.9 0.4-2-0.3-1.8-1-1.2-1.5-0.5-2 0.3-1.9 1.2-1.7 1.8-0.8 2 0 1.7 1.1 0.9 1.8-0.2 2-1.3 1.5-1.9 0.6-1.9-0.7-1-1.7 0.5-1.9 1.6-1.3 2-0.1 1.4 1.5 0 2"/>
<circle class="f2" cx="1377.7" cy="525.9" r="3.8"/>
<path class="g4" d="M1380.5 515.3l2.8 2.8 1.8 3.6"/>
<path class="g3" d="M1385.1 521.7l0.6 2.9 0.9 2.9 1.3 2.6 1.8 2.5 2.3 1.9 2.6 1.5"/>
<path class="g1" d="M1394.6 536l1 0.2 1 0.1 1-0.1 0.9-0.2 0.9-0.4 0.8-0.6"/>
<circle class="d" cx="1402.8" cy="540.6" r="3.1"/>
<path class="g1" d="M1400.2 535l0.7-0.8 0.4-0.9 0.1-1-0.2-1-0.5-0.9-0.7-0.6-1-0.3-1 0-0.9 0.5-0.6 0.8-0.2 1 0.3 0.9 0.7 0.7 1 0.3 0.9-0.3 0.7-0.8 0.1-1-0.4-0.9-1-0.4-0.9 0.3"/>
<circle class="f1" cx="1398.1" cy="531.5" r="2.2"/>
<path class="g3" d="M1394.6 536l2.9 0.7 3-0.1"/>
<path class="g2" d="M1400.5 536.6l1.9-0.7 1.9-0.4 2 0 2 0.3 1.9 0.8 1.6 1.2 1.2 1.5 0.8 1.9"/>
<path class="g1" d="M1413.8 541.2l0.1 1 0.2 0.9 0.4 1 0.6 0.8 0.7 0.7 0.8 0.6"/>
<circle class="d" cx="1412.3" cy="549.7" r="2.8"/>
<path class="g1" d="M1416.6 546.2l0.9 0.3 1 0.1 1-0.2 0.9-0.5 0.6-0.8 0.4-0.9 0-1-0.4-0.9-0.7-0.7-0.9-0.3-1 0.1-0.9 0.6-0.4 0.9 0.1 1 0.6 0.8 0.9 0.4 1-0.2 0.6-0.8 0-1-0.6-0.8"/>
<circle class="f1" cx="1418.9" cy="543.2" r="2.2"/>
<path class="g2" d="M1413.8 541.2l0.2 2-0.4 1.9-1.1 1.7-1.7 1.2-1.9 0.4-2-0.3-1.6-1.2-1-1.7 0-2 0.9-1.8 1.7-1.1 2-0.1 1.7 1.1 0.9 1.7-0.4 2-1.3 1.5-2 0.1-1.7-1.1-0.3-2 1.1-1.6 1.9-0.6 1.8 0.9"/>
<circle class="f2" cx="1409.3" cy="545.1" r="4.7"/>
<path class="g3" d="M1400.5 536.6l2.8-1.1 2.4-1.8 1.7-2.4 0.8-2.9-0.3-3-1.4-2.7-2.4-1.9-2.9-0.7-2.9 0.5-2.4 1.9-1.2 2.7 0.2 3 1.7 2.5 2.8 1.2 2.9-0.5 2.4-1.9 0.9-2.8-1.1-2.8-2.7-1.3-2.9 0.8-1.5 2.6 1 2.9 2.5 1.6 3-0.5 1.5-2.6-1.1-2.8"/>
<circle class="f3" cx="1402.8" cy="527.5" r="5.9"/>
<path class="g4" d="M1385.1 521.7l0.7 3.9-0.7 3.9-2.1 3.4-3.2 2.4-3.9 0.8-3.9-0.9-3-2.7-1.4-3.7 0.6-4 2.6-3 3.9-1.1 3.8 1.2 2.4 3.2-0.1 4"/>
<path class="y0 w4" d="M1380.8 529.1l-2.5 3.1-3.8 1.4-3.7-1.6"/>
<path class="y1 w4" d="M1370.8 532l-1.8-3.5 0.4-4 3.1-2.5"/>
<path class="y2 w4" d="M1372.5 522l4-0.2 3.1 2.5 0.6 3.9-2.1 3.4"/>
<path class="y3 w4" d="M1378.1 531.6l-3.8 1-3-2.6 0.1-4 2.9-2.7 4 0.5"/>
<path class="y4 w4" d="M1378.3 523.8l1.4 3.7-1.8 3.6-3.9 1-2.5-3.1 1.4-3.8 4 0.1 1.8 3.5"/>
<path class="y5 w4" d="M1378.7 528.8l-2.2 3.4-4 0.1-2.4-3.2 2.3-3.2 3.7 1.6 0.2 4-3.4 2.2-2.9-2.7 1.4-3.7 3.8 1.1"/>
<path class="y6 w4" d="M1375.2 528.4l0.4 4-3.9 0.9-1.5-3.7 2.8-2.9 3.6 1.8-0.2 4-4-0.5 0.8-3.9 3.9 0.6-0.6 3.9-4 0.2-0.3-4 4-0.3 0 4-4 0.6-0.7-3.9 3.7-1.5 0.7 3.9-4 0.6-0.5-4 3.8 1.2"/>
<path class="g5" d="M1357.8 515.8l4.5-2.3 3.6-3.4 2.4-4.4 1-4.9-0.7-5-2.3-4.4-3.7-3.3-4.7-1.7-5 0.4-4.5 2.3-3 4-1 4.9 1.4 4.8 3.4 3.6"/>
<path class="y0 w5" d="M1349.2 506.4l4.8 1.5 4.8-1.4 2.6-4.3"/>
<path class="y1 w5" d="M1361.4 502.2l-0.3-5-3.3-3.8-4.8-1.2"/>
<path class="y2 w5" d="M1353 492.2l-4.4 2.4-1.2 4.8 2.7 4.2 4.7 1.7"/>
<path class="y3 w5" d="M1354.8 505.3l4.5-2.3 1.5-4.8-2.4-4.3-4.8-1.6-4.3 2.5"/>
<path class="y4 w5" d="M1349.3 494.8l0 5 3.6 3.5 4.9-0.6 1.8-4.7-2.6-4.2-5-0.4-2.5 4.3"/>
<path class="y5 w5" d="M1349.5 497.7l1.8 4.6 4.9 1.3 2.6-4.3-3.3-3.8-4.3 2.4-0.3 5 4.5 2.3 3-4-2.8-4.1-4.5 2.2"/>
<path class="y6 w5" d="M1351.1 499.3l-0.1 5 5 0.8 1.2-4.8-4.1-2.9-3.4 3.6 2.2 4.5 5-0.8-0.7-4.9-4.9 0.5-0.8 5 5 0.1 0.4-5-4.8-1.3 0 5 4.9 0.5 0.1-5-5-0.5-1.3 4.8 5-0.3 0.4-5-4.9-1"/>
<path class="g6" d="M1328.6 495.4l1.9 5.7 0 6-2.2 5.6-4.2 4.3-5.5 2.3-6-0.2-5.3-2.9-3.3-5-0.4-6 2.6-5.4 5.1-3.1 6 0.1 4.9 3.6 1.8 5.7"/>
<path class="y0 w6" d="M1324 506.1l-2 5.6-5.2 3.1-6-0.5"/>
<path class="y1 w6" d="M1310.8 514.3l-4.4-4-0.5-6 3.9-4.6"/>
<path class="y2 w6" d="M1309.8 499.7l5.9-1.2 5.3 2.7 1.7 5.7-2.8 5.3"/>
<path class="y3 w6" d="M1319.9 512.2l-5.8 1.6-4.8-3.6-1-5.9 3.7-4.8 6-0.6"/>
<path class="y4 w6" d="M1318 498.9l4.5 3.9-0.2 6-5.5 2.4-5.4-2.5-1.5-5.9 3.6-4.8 5.9 1.1"/>
<path class="y5 w6" d="M1319.4 499.1l1.3 5.8-4.8 3.7-5-3.1 1.8-5.7 5.8-1.4 4.2 4.3-3.5 4.9-5.5-2.5 0.5-5.9 5.9-1.2"/>
<path class="y6 w6" d="M1320.1 498l3.2 5.1-4.2 4.3-5.6-2.1 0.3-6 6-1 1.1 5.9-5.1 3.2-4.6-3.8 3.1-5.1 5.4 2.5-3.6 4.8-4.3-4.1 4.9-3.5 2.6 5.4-5.9 0.7 1.1-5.9 5.3 2.9-2.3 5.5-5.5-2.5 3.7-4.7 4.4 4"/>
<path class="g10" d="M1187.2 468l7.4-6.8 8.9-4.5"/>
<path class="g9" d="M1203.5 456.7l8.9-1.4 8.6-2.6 8.1-4 7.3-5.3 6.1-6.6 4.5-7.8"/>
<path class="g7" d="M1247 429l2-6.7 1.1-6.9 0-7-1.3-6.9-2.5-6.5-3.9-5.8"/>
<path class="g5" d="M1242.4 389.2l-3.6-3.5-4.1-2.9-4.5-2.2-4.8-1.4-4.9-0.5-5 0.7"/>
<path class="g3" d="M1215.5 379.4l-2.8 1.1-2.6 1.4-2.4 1.9-2 2.2-1.5 2.6-0.9 2.9"/>
<path class="g1" d="M1203.3 391.5l0 1 0.1 1 0.3 0.9 0.4 0.9 0.6 0.8 0.7 0.7"/>
<circle class="d" cx="1200.8" cy="399.7" r="2.8"/>
<path class="g1" d="M1205.4 396.8l0.9 0.5 1 0.2 1-0.1 0.9-0.4 0.8-0.6 0.5-0.9 0.1-1-0.3-1-0.6-0.7-0.9-0.5-1 0-0.9 0.5-0.5 0.8-0.1 1 0.5 0.9 0.9 0.5 1-0.1 0.7-0.7 0.1-1-0.6-0.8"/>
<circle class="f1" cx="1207.7" cy="394.3" r="2.1"/>
<path class="g3" d="M1203.3 391.5l-0.1 3 0.8 2.9"/>
<path class="g2" d="M1204 397.4l1 1.7 0.8 1.8 0.4 2 0.1 2-0.4 1.9-0.8 1.9-1.3 1.5-1.6 1.2"/>
<path class="g1" d="M1202.2 411.4l-1 0.2-0.9 0.5-0.8 0.5-0.7 0.7-0.6 0.9-0.4 0.9"/>
<circle class="d" cx="1193.8" cy="411.4" r="2.7"/>
<path class="g1" d="M1197.8 415.1l-0.1 1 0.1 1 0.4 0.9 0.7 0.7 0.8 0.5 1 0.2 1-0.2 0.8-0.6 0.6-0.8 0.1-1-0.4-0.9-0.7-0.7-1-0.3-0.9 0.3-0.7 0.8-0.2 0.9 0.4 1 0.9 0.5 1 0 0.7-0.7"/>
<circle class="f1" cx="1201.1" cy="417.3" r="2.2"/>
<path class="g2" d="M1202.2 411.4l-2 0.5-2 0-1.8-0.7-1.5-1.4-0.8-1.8-0.1-2 0.8-1.8 1.5-1.3 2-0.5 1.9 0.5 1.4 1.5 0.5 1.9-0.7 1.9-1.6 1.2-2 0.1-1.7-0.9-0.7-1.9 0.6-1.9 1.6-1.2 2 0.4 1.3 1.5-0.2 2"/>
<circle class="f2" cx="1198.2" cy="407.2" r="4.7"/>
<path class="g3" d="M1204 397.4l1.5 2.5 2.3 1.9 2.9 1 3-0.1 2.7-1.3 1.9-2.3 0.7-2.9-0.7-2.9-2.1-2.2-2.9-0.9-2.9 0.8-2 2.3-0.3 2.9 1.5 2.7 2.8 1.1 2.9-0.4 2.3-2 0.4-3-1.5-2.6-2.9-0.7-2.7 1.3-1.3 2.7 0.7 2.9 2.5 1.6 2.9-0.8 1.5-2.6"/>
<circle class="f3" cx="1213.7" cy="396.1" r="5.4"/>
<path class="g5" d="M1215.5 379.4l-4.7 1.8-4 3"/>
<path class="g4" d="M1206.8 384.2l-2.3 3.2-2.8 2.8-3.3 2.3-3.7 1.7-3.9 0.8-4-0.2"/>
<path class="g2" d="M1186.8 394.8l-1.9-0.6-1.8-0.9-1.6-1.2-1.3-1.4-1-1.8-0.6-1.9 0-2 0.5-1.9"/>
<path class="g1" d="M1179.1 383.1l0.5-0.9 0.4-0.9 0.3-0.9 0-1-0.1-1-0.3-1"/>
<circle class="d" cx="1185.5" cy="377.2" r="2.8"/>
<path class="g1" d="M1179.9 377.4l-0.5-0.8-0.8-0.7-0.9-0.4-1-0.2-1 0.2-0.8 0.5-0.6 0.8-0.3 1 0.2 1 0.5 0.8 0.9 0.5 1 0.1 0.9-0.5 0.5-0.8 0.1-1-0.6-0.9-0.9-0.4-0.9 0.2-0.8 0.7 0 1"/>
<circle class="f1" cx="1176.5" cy="378.3" r="2.1"/>
<path class="g2" d="M1179.1 383.1l1-1.7 1.6-1.3 1.8-0.7 2 0.1 1.9 0.8 1.3 1.5 0.6 1.9-0.3 2-1.1 1.6-1.9 0.9-1.9-0.2-1.7-1.2-0.7-1.8 0.4-2 1.4-1.4 2-0.2 1.6 1.2 0.6 1.9-0.9 1.8-1.8 0.8-1.9-0.6-0.9-1.9"/>
<circle class="f2" cx="1184.4" cy="384.6" r="4.1"/>
<path class="g4" d="M1186.8 394.8l-3.8-1.2-3.3-2.2"/>
<path class="g3" d="M1179.7 391.4l-1.8-2.4-2.1-2.2-2.4-1.7-2.7-1.4-2.9-0.7-3-0.2"/>
<path class="g1" d="M1164.8 382.8l-1 0.2-0.9 0.3-0.9 0.5-0.8 0.6-0.7 0.7-0.5 0.9"/>
<circle class="d" cx="1156.1" cy="381.8" r="2.7"/>
<path class="g1" d="M1160 386l-0.2 1 0 1 0.3 0.9 0.6 0.9 0.8 0.5 0.9 0.3 1-0.1 0.9-0.4 0.6-0.8 0.3-1-0.3-0.9-0.6-0.8-0.9-0.4-1 0.2-0.8 0.7-0.3 0.9 0.3 1 0.8 0.6 1-0.1 0.7-0.7"/>
<circle class="f1" cx="1162.7" cy="388.4" r="2.2"/>
<path class="g3" d="M1164.8 382.8l-3 0.5-2.7 1.3"/>
<path class="g2" d="M1159.1 384.6l-1.5 1.3-1.7 1-1.9 0.8-2 0.3-1.9-0.1-2-0.5-1.7-1-1.4-1.5"/>
<path class="g1" d="M1145 384.9l-0.4-0.9-0.5-0.8-0.7-0.8-0.8-0.6-0.9-0.4-1-0.2"/>
<circle class="d" cx="1143.7" cy="376.2" r="2.7"/>
<path class="g1" d="M1140.7 381.2l-1 0-1 0.2-0.8 0.6-0.6 0.7-0.4 1 0 1 0.3 0.9 0.7 0.7 0.9 0.4 1 0 0.9-0.5 0.5-0.8 0.1-1-0.4-0.9-0.8-0.6-1 0-0.8 0.6-0.4 0.9 0.2 1 0.9 0.5"/>
<circle class="f1" cx="1139.9" cy="384.3" r="2.4"/>
<path class="g2" d="M1145 384.9l-0.8-1.8-0.3-2 0.5-1.9 1.1-1.7 1.6-1.1 2-0.4 1.9 0.5 1.6 1.4 0.7 1.8-0.2 2-1.2 1.6-1.9 0.8-2-0.4-1.4-1.4-0.4-2 0.8-1.8 1.8-0.9 1.9 0.4 1.4 1.4 0.3 2-1.3 1.6-2 0.2"/>
<circle class="f2" cx="1149.8" cy="380" r="4.3"/>
<path class="g3" d="M1159.1 384.6l-2.3 1.9-1.5 2.6-0.7 2.9 0.5 3 1.6 2.5 2.5 1.7 2.9 0.5 2.9-0.8 2.1-2.2 0.8-2.9-0.7-2.9-2.2-2-3-0.5-2.7 1.2-1.5 2.7 0.2 3 1.7 2.4 2.9 0.9 2.7-1.3 1.5-2.6-1-2.8-2.5-1.7-3 0.3-2 2.2-0.1 3 2.1 2.2"/>
<circle class="f3" cx="1162.2" cy="395.4" r="5.7"/>
<path class="g4" d="M1179.7 391.4l-2.4-3.2-1.1-3.9 0.3-4 1.9-3.5 3.2-2.4 3.9-0.7 3.9 1.2 2.7 2.8 0.9 3.9-1.3 3.8-3.2 2.4-4 0.1-3.3-2.3-1.1-3.8"/>
<path class="y0 w4" d="M1180.1 381.8l1.6-3.7 3.4-2 4 0.5"/>
<path class="y1 w4" d="M1189.1 376.6l2.9 2.7 0.4 4-2 3.4"/>
<path class="y2 w4" d="M1190.4 386.7l-3.9 1-3.3-2.3-0.9-3.9 2.4-3.2"/>
<path class="y3 w4" d="M1184.7 378.3l4-0.4 3.1 2.4 0.5 4-2.8 2.8-4-0.2"/>
<path class="y4 w4" d="M1185.5 386.9l-1.8-3.5 2.2-3.4 4 0.3 1.7 3.6-1.8 3.6-4-0.3-1.5-3.7"/>
<path class="y5 w4" d="M1184.3 383.5l2.4-3.2 4 0.4 1.1 3.8-3.5 2.1-3.5-1.8 0.5-4 3.9-0.6 1.6 3.6-2.8 2.9-3.8-1.2"/>
<path class="y6 w4" d="M1184.2 385.5l0.1-4 3.9-1.1 2.2 3.3-3 2.6-3.6-1.7 0.4-3.9 4-0.5 1.3 3.7-3.4 2.1-1.9-3.5 3-2.6 2.1 3.4-3.1 2.5-1.5-3.7 3.5-2 2.3 3.3-3.3 2.3-0.9-3.9 4-0.1-0.3 4-3.7-1.4"/>
<path class="g5" d="M1206.8 384.2l-2.9 4-1.5 4.8 0.2 5 1.9 4.6 3.6 3.5 4.6 1.8 5-0.3 4.3-2.6 2.7-4.2 0.2-5-2.3-4.4-4.3-2.6-5 0.2-4 3"/>
<path class="y0 w5" d="M1209.3 392l-1.5 4.8 1.9 4.6 4.4 2.4"/>
<path class="y1 w5" d="M1214.1 403.8l5-0.4 3.3-3.8 0.5-4.9"/>
<path class="y2 w5" d="M1222.9 394.7l-3-4.1-4.9-0.6-4.1 2.9-1.2 4.8"/>
<path class="y3 w5" d="M1209.7 397.7l2.8 4.2 4.9 0.6 4.2-2.8 1-4.9-3.4-3.6"/>
<path class="y4 w5" d="M1219.2 391.2l-5 0.2-3.4 3.7 1.7 4.7 5 0.6 2.9-4.1-1.1-4.8-4.5-2.2"/>
<path class="y5 w5" d="M1214.8 389.3l-3.8 3.3 1.5 4.8 4.9 0.5 1.9-4.6-2.8-4.2-4.8 1.4-1.1 4.8 4.7 1.8 3.4-3.7-1.8-4.7"/>
<path class="y6 w5" d="M1216.9 388.7l-5 0.8 0.5 4.9 4.7 1.8 2.3-4.5-4.5-2-3.1 3.9 4 3.1 4.3-2.6-2.4-4.4-4.4 2.4 2.8 4.1 4.1-3-3.2-3.8-4.5 2.2 2.1 4.5 4-3-3.3-3.8-2.3 4.5 5 0.8-1.2-4.9-5 0.8"/>
<path class="g7" d="M1242.4 389.2l-5.1-4.8-6.1-3.5"/>
<path class="g6" d="M1231.2 380.9l-5.8-1.5-5.5-2.4-5-3.3-4.3-4.1-3.2-5.1-2-5.7"/>
<path class="g4" d="M1205.4 358.8l-0.2-4 0.5-4 1.1-3.8 1.8-3.6 2.6-3 3.2-2.4"/>
<path class="g2" d="M1214.4 338l1.8-0.8 2-0.4 2-0.1 2 0.3 1.8 0.7 1.7 1.1 1.3 1.5 0.8 1.9"/>
<path class="g1" d="M1227.8 342.2l0.2 0.9 0.2 1 0.4 0.9 0.6 0.8 0.7 0.7 0.9 0.6"/>
<circle class="d" cx="1226.5" cy="351.2" r="3"/>
<path class="g1" d="M1230.8 347.1l0.9 0.3 1 0 1-0.2 0.8-0.5 0.7-0.8 0.3-0.9 0-1-0.4-1-0.8-0.6-0.9-0.3-1 0.2-0.8 0.6-0.4 0.9 0.1 1 0.6 0.8 0.9 0.3 1-0.2 0.7-0.8 0-1-0.6-0.8"/>
<circle class="f1" cx="1232.9" cy="344.6" r="2.3"/>
<path class="g2" d="M1227.8 342.2l0.3 1.9-0.4 2-1 1.7-1.6 1.2-2 0.6-1.9-0.3-1.7-1.1-1-1.7-0.1-2 0.8-1.9 1.6-1.1 2-0.1 1.8 0.9 0.9 1.8-0.2 2-1.4 1.5-2 0.4-1.7-1.1-0.7-1.8 0.9-1.8 1.9-0.7 1.9 0.8"/>
<circle class="f2" cx="1223.9" cy="345.1" r="4.5"/>
<path class="g4" d="M1214.4 338l3.7-1.5 4-0.4"/>
<path class="g3" d="M1222.1 336.1l2.9 0.6 3 0.2 3-0.3 2.9-0.7 2.7-1.4 2.3-1.9"/>
<path class="g1" d="M1238.9 332.6l0.6-0.8 0.5-0.8 0.3-1 0.2-1 0-1-0.3-0.9"/>
<circle class="d" cx="1245.7" cy="326.8" r="3.2"/>
<path class="g1" d="M1240.2 327.1l-0.4-0.9-0.7-0.7-0.9-0.6-1-0.2-1 0.1-0.9 0.5-0.6 0.7-0.4 0.9 0.1 1 0.5 0.9 0.8 0.6 1 0.1 0.9-0.4 0.6-0.8 0.2-1-0.5-0.9-0.8-0.5-1 0.1-0.7 0.8-0.1 1"/>
<circle class="f1" cx="1236.7" cy="327.4" r="2"/>
<path class="g3" d="M1238.9 332.6l1.8-2.4 1.1-2.7"/>
<path class="g2" d="M1241.8 327.5l0.2-2 0.5-2 0.8-1.8 1.2-1.6 1.5-1.4 1.8-0.9 1.9-0.5 2 0.1"/>
<path class="g1" d="M1251.7 317.4l0.9 0.4 1 0.2 1 0 1-0.1 1-0.3 0.8-0.5"/>
<circle class="d" cx="1259.2" cy="322.6" r="3.1"/>
<path class="g1" d="M1257.4 317.1l0.7-0.7 0.5-0.9 0.3-1-0.1-1-0.4-0.9-0.7-0.7-0.9-0.5-1 0-0.9 0.3-0.7 0.8-0.3 0.9 0.2 1 0.6 0.8 0.9 0.3 1-0.1 0.7-0.7 0.3-1-0.3-1-0.9-0.5-1 0.1"/>
<circle class="f1" cx="1255.9" cy="314" r="2.3"/>
<path class="g2" d="M1251.7 317.4l1.9 0.7 1.5 1.2 1.1 1.7 0.4 2-0.5 2-1.1 1.6-1.8 1-2 0.1-1.8-0.8-1.2-1.6-0.3-2 0.8-1.8 1.7-1.1 2 0 1.6 1.1 0.6 1.9-0.9 1.8-1.8 0.8-1.9-0.8-0.7-1.9 0.6-1.9 1.8-0.9"/>
<circle class="f2" cx="1253.4" cy="323.5" r="4.5"/>
<path class="g3" d="M1241.8 327.5l0.3-3-0.6-3-1.6-2.5-2.3-1.9-2.9-0.9-3 0.3-2.6 1.5-1.7 2.4-0.4 3 0.9 2.8 2.3 2 2.9 0.6 2.8-1 1.8-2.4 0.2-3-1.8-2.4-2.8-0.9-2.9 0.9-1.9 2.3-0.3 3 1.5 2.6 2.9 0.8 2.5-1.6 0.6-3-1.5-2.5-3-0.4"/>
<circle class="f3" cx="1232.7" cy="324.2" r="5.5"/>
<path class="g4" d="M1222.1 336.1l3.9 0.8 3.4 2 2.6 3.1 1.3 3.8-0.3 4-1.8 3.6-3.2 2.4-3.9 0.8-3.9-1.1-2.8-2.8-1.1-3.8 1-3.9 3-2.7 4-0.6"/>
<path class="y0 w4" d="M1224.3 341.7l3.6 1.8 1.9 3.5-0.6 3.9"/>
<path class="y1 w4" d="M1229.2 350.9l-2.7 2.9-4 0.6-3.4-2.1"/>
<path class="y2 w4" d="M1219.1 352.3l-1.4-3.8 1.9-3.5 3.8-1.3 3.5 1.9"/>
<path class="y3 w4" d="M1226.9 345.6l0.5 4-2.7 2.9-4-0.2-2.8-2.9 0.1-4"/>
<path class="y4 w4" d="M1218 345.4l3.4-2.1 3.9 1.1 1.5 3.7-2.9 2.8-3.8-1.2-0.7-3.9 3.2-2.5"/>
<path class="y5 w4" d="M1222.6 343.3l3.6 1.7-0.5 3.9-3.9 1.1-2.9-2.8 1.5-3.7 3.9-0.8 2.3 3.3-2.1 3.4-3.9-1 0.6-4"/>
<path class="y6 w4" d="M1221.2 344.4l4 0 1.5 3.7-3.4 2.1-3.1-2.6 2.4-3.2 3.3 2.3-1.6 3.7-3.9-0.6 0.6-3.9 3.8 1.2-0.1 4-4-0.2 1-3.9 3.9 1.2-1 3.9-4-0.1 0.7-3.9 4 0.2-0.2 4-3.5-1.9 3-2.6"/>
<path class="g6" d="M1205.4 358.8l-0.3-6 1.4-5.8"/>
<path class="g5" d="M1206.5 347l2.6-4.3 1.9-4.6 1.1-4.9 0.4-5-0.7-4.9-1.8-4.7"/>
<path class="g3" d="M1210 318.6l-1.7-2.5-2-2.2-2.3-1.9-2.7-1.4-2.8-0.9-3-0.2"/>
<path class="g1" d="M1195.5 309.5l-1 0.1-1 0.3-0.9 0.5-0.8 0.6-0.6 0.7-0.5 0.9"/>
<circle class="d" cx="1186.5" cy="308.4" r="2.9"/>
<path class="g1" d="M1190.7 312.6l-0.3 0.9 0 1 0.3 1 0.5 0.8 0.8 0.6 1 0.3 1 0 0.8-0.5 0.7-0.7 0.2-1-0.2-1-0.6-0.8-0.9-0.3-1 0.1-0.8 0.7-0.3 0.9 0.3 1 0.7 0.6 1 0.1 0.9-0.4"/>
<circle class="f1" cx="1193.5" cy="314.7" r="2.2"/>
<path class="g3" d="M1195.5 309.5l-3 0.4-2.7 1.3"/>
<path class="g2" d="M1189.8 311.2l-1.5 1.3-1.7 1.1-1.9 0.7-2 0.4-1.9-0.1-2-0.5-1.7-1-1.4-1.4"/>
<path class="g1" d="M1175.7 311.7l-0.4-0.9-0.6-0.9-0.7-0.7-0.8-0.6-0.9-0.4-1-0.2"/>
<circle class="d" cx="1174.2" cy="302.8" r="2.8"/>
<path class="g1" d="M1171.3 308l-1 0-0.9 0.3-0.9 0.5-0.6 0.8-0.4 0.9 0 1 0.4 1 0.7 0.7 0.9 0.4 1-0.1 0.9-0.5 0.5-0.8 0.1-1-0.4-0.9-0.9-0.5-1 0-0.8 0.5-0.4 0.9 0.3 1 0.8 0.5"/>
<circle class="f1" cx="1169.9" cy="311" r="2.2"/>
<path class="g2" d="M1175.7 311.7l-0.9-1.8-0.3-2 0.5-2 1-1.6 1.7-1.2 2-0.4 1.9 0.5 1.5 1.3 0.8 1.9-0.2 2-1.2 1.6-1.8 0.8-2-0.4-1.5-1.3-0.4-2 1-1.8 1.9-0.6 1.9 0.5 1.3 1.5 0.1 2-1.3 1.6-2 0.3"/>
<circle class="f2" cx="1179.8" cy="307.2" r="4.4"/>
<path class="g3" d="M1189.8 311.2l-2.3 1.9-1.6 2.6-0.6 2.9 0.4 3 1.4 2.6 2.4 1.9 2.9 0.8 2.9-0.6 2.4-1.8 1.3-2.7-0.2-3-1.6-2.5-2.7-1.3-3 0.4-2.3 2-0.5 3 1.3 2.7 2.6 1.5 3-0.3 1.9-2.3-0.1-3-2.1-2.2-3-0.4-2.2 2 0 3 2 2.3"/>
<circle class="f3" cx="1195.1" cy="321.5" r="5.7"/>
<path class="g5" d="M1210 318.6l-2.8-4.2-3.8-3.2"/>
<path class="g4" d="M1203.4 311.2l-3.6-1.6-3.4-2.2-2.9-2.7-2.4-3.3-1.6-3.6-0.7-4"/>
<path class="g2" d="M1188.8 293.8l0.1-2 0.5-1.9 0.7-1.9 1.2-1.6 1.4-1.4 1.7-1 2-0.5 2 0"/>
<path class="g1" d="M1198.4 283.5l0.9 0.3 1 0.2 1 0 1-0.1 0.9-0.4 0.9-0.5"/>
<circle class="d" cx="1205.7" cy="288.7" r="2.8"/>
<path class="g1" d="M1204.1 283l0.6-0.8 0.5-0.8 0.2-1-0.1-1-0.4-0.9-0.7-0.7-0.9-0.4-1-0.1-0.9 0.4-0.7 0.8-0.3 0.9 0.2 1 0.7 0.8 0.9 0.3 1-0.2 0.7-0.7 0.2-1-0.3-0.9-0.9-0.5-1 0.1"/>
<circle class="f1" cx="1202.4" cy="279.5" r="1.9"/>
<path class="g2" d="M1198.4 283.5l1.9 0.6 1.6 1.2 1.1 1.7 0.4 1.9-0.4 2-1.1 1.7-1.7 1-2 0.2-1.9-0.8-1.2-1.5-0.3-2 0.7-1.9 1.6-1.1 2-0.1 1.7 1.1 0.9 1.8-0.4 1.9-1.6 1.3-2-0.2-1.2-1.6 0.3-1.9 1.7-1.1"/>
<circle class="f2" cx="1199.2" cy="289.5" r="3.8"/>
<path class="g4" d="M1188.8 293.8l0.3-4 1.3-3.7"/>
<path class="g3" d="M1190.4 286.1l1.8-2.4 1.5-2.6 1.1-2.8 0.5-3 0-3-0.7-2.9"/>
<path class="g1" d="M1194.6 269.4l-0.4-0.9-0.6-0.8-0.7-0.8-0.8-0.6-0.9-0.4-0.9-0.2"/>
<circle class="d" cx="1192.9" cy="260.3" r="3"/>
<path class="g1" d="M1190.3 265.7l-1 0-1 0.2-0.8 0.6-0.7 0.7-0.3 1-0.1 1 0.4 0.9 0.7 0.7 0.9 0.4 1 0 0.9-0.5 0.5-0.8 0.1-1-0.4-0.9-0.8-0.6-1 0-0.9 0.6-0.3 0.9 0.3 1 0.8 0.6"/>
<circle class="f1" cx="1189.4" cy="268.8" r="2.4"/>
<path class="g3" d="M1194.6 269.4l-1.3-2.7-1.9-2.3"/>
<path class="g2" d="M1191.4 264.4l-1.7-1.2-1.4-1.3-1.2-1.7-0.8-1.8-0.5-1.9 0.1-2 0.5-2 1.1-1.6"/>
<path class="g1" d="M1187.5 250.9l0.7-0.7 0.7-0.7 0.5-0.9 0.4-0.9 0.2-1 0-1"/>
<circle class="d" cx="1195.7" cy="247.2" r="2.8"/>
<path class="g1" d="M1190 245.7l-0.3-1-0.5-0.8-0.7-0.7-0.9-0.4-1-0.1-1 0.2-0.8 0.6-0.6 0.8-0.1 1 0.3 1 0.7 0.7 0.9 0.3 1-0.1 0.8-0.7 0.3-0.9-0.3-1-0.7-0.7-1-0.2-0.9 0.5-0.4 0.9"/>
<circle class="f1" cx="1186.3" cy="245.4" r="2.1"/>
<path class="g2" d="M1187.5 250.9l1.5-1.3 1.8-0.8 2-0.1 1.9 0.7 1.5 1.3 0.9 1.8 0 2-0.9 1.8-1.6 1.2-2 0.3-1.8-0.8-1.2-1.6-0.2-2 1-1.7 1.8-0.9 1.9 0.5 1.3 1.5 0 2-1.3 1.5-2 0.3-1.8-0.8-0.7-1.9"/>
<circle class="f2" cx="1191.6" cy="254.1" r="4"/>
<path class="g3" d="M1191.4 264.4l-2.5-1.7-2.9-0.9-2.9 0.1-2.8 1.2-2.1 2.2-1 2.8 0.2 3 1.5 2.6 2.5 1.6 3 0.1 2.7-1.3 1.6-2.6-0.1-3-1.8-2.4-2.8-1-3 0.6-1.8 2.4-0.3 2.9 1.6 2.6 2.8 1.1 2.8-0.9 1.6-2.6-0.7-2.9-2.6-1.5-2.9 0.6-1.2 2.8"/>
<circle class="f3" cx="1183.8" cy="268.3" r="6.4"/>
<path class="g4" d="M1190.4 286.1l2.4-3.2 3.4-2.2 3.9-0.8 3.9 0.7 3.4 2.2 2 3.5 0.3 4-1.6 3.6-3.2 2.4-4 0.4-3.6-1.7-2-3.5 0.3-4 2.6-3"/>
<path class="y0 w4" d="M1198.2 284.5l4-0.8 3.7 1.5 2.2 3.4"/>
<path class="y1 w4" d="M1208.1 288.6l-0.8 3.9-3.4 2.2-3.9-0.7"/>
<path class="y2 w4" d="M1200 294l-2.5-3.1 0.7-3.9 3.6-1.9 3.8 1.3"/>
<path class="y3 w4" d="M1205.6 286.4l1.8 3.5-1.1 3.9-3.7 1.4-3.2-2.4-0.6-4"/>
<path class="y4 w4" d="M1198.8 288.8l2.6-3 3.9 0.8 1.1 3.8-2.5 3.1-4-0.7-1.8-3.6 1.9-3.5"/>
<path class="y5 w4" d="M1200 285.7l3.9-0.7 2.2 3.4-1.7 3.6-4 0-1.8-3.6 2.9-2.8 3.8 1.2-0.2 3.9-3.9 0.8-2.2-3.3"/>
<path class="y6 w4" d="M1199 288.2l2-3.5 4 0.3-0.3 4-4 0.3-1.9-3.5 3.2-2.3 2.6 3.1-2.1 3.4-3.2-2.5 2.2-3.3 3.8 1.3-0.6 3.9-3.9-0.4 0.7-3.9 3.7 1.6-1 3.8-3.6-1.8 2.1-3.4 2.6 3-2.7 2.9-2.2-3.3"/>
<path class="g5" d="M1203.4 311.2l-4.6-2-4.9-0.7-4.9 1-4.3 2.6-3.1 3.9-1.4 4.8 0.5 5 2.6 4.3 4.2 2.8 4.9 0.6 4.7-1.8 3.2-3.8 0.9-4.9-1.8-4.7"/>
<path class="y0 w5" d="M1199.4 318.3l-4-2.9-5-0.1-4.2 2.8"/>
<path class="y1 w5" d="M1186.2 318.1l-1.5 4.8 2 4.6 4.4 2.4"/>
<path class="y2 w5" d="M1191.1 329.9l4.9-0.8 2.9-4.1-0.1-5-3.3-3.8"/>
<path class="y3 w5" d="M1195.5 316.2l-4.9-0.9-4.2 2.7-1.3 4.9 2.6 4.2 4.9 0.8"/>
<path class="y4 w5" d="M1192.6 327.9l3.5-3.6-0.1-5-4.2-2.6-4.7 1.8-0.6 5 4.1 2.9 4.6-2"/>
<path class="y5 w5" d="M1195.2 324.4l0.3-4.9-3.7-3.4-4.7 1.5-1.1 4.9 3.9 3.1 4.3-2.6-1.9-4.6-4.9 1-0.8 4.9 4.8 1.4"/>
<path class="y6 w5" d="M1191.4 325.7l2.1-4.5-4.4-2.4-2.5 4.3 3.9 3.1 3.4-3.7-3-4-3.8 3.3 2.9 4.1 4-3-1.4-4.7-4.8 1.5 0 5 4.8 1.3 1.2-4.8-4.9-0.6-1.5 4.8 5 0.1-0.1-5-4.5 2.2 1.6 4.7 4.1-2.9"/>
<path class="g6" d="M1206.5 347l3.1-5.2 4.5-3.9 5.6-2.1 6 0 5.5 2.3 4.2 4.3 1.9 5.7-0.7 5.9-3.5 5-5.3 2.7-6-0.4-5-3.4-2.3-5.5 1.1-5.9"/>
<path class="y0 w6" d="M1215.6 346.5l4.3-4.2 5.9-0.9 5.3 2.8"/>
<path class="y1 w6" d="M1231.1 344.2l2.7 5.4-1.8 5.7-5 3.4"/>
<path class="y2 w6" d="M1227 358.7l-6-0.5-3.9-4.5 0.6-6 4.9-3.4"/>
<path class="y3 w6" d="M1222.6 344.3l5.8 1.8 2.6 5.3-3 5.2-6 0.2-3.5-4.9"/>
<path class="y4 w6" d="M1218.5 351.9l1-5.9 5.3-2.8 5.3 2.8 0.6 5.9-5.4 2.8-4.9-3.4-0.1-6"/>
<path class="y5 w6" d="M1220.3 345.3l5.6-2.1 3.7 4.7-2.1 5.6-6-0.3-2.7-5.3 3.8-4.7 5.3 2.8-1.2 5.8-5.8 1.4-3.8-4.6"/>
<path class="y6 w6" d="M1217.1 348.6l3.3-5 5.4 2.5-1.4 5.8-5.8-1.6-0.2-6 5.9-1.1 1.9 5.7-5.4 2.7-2.6-5.4 4.3-4.2 4.8 3.6-3.9 4.6-4.5-4 3.6-4.8 4.1 4.4-4.2 4.3-4.2-4.2 5.3-2.8 1.6 5.8-5.9 0.9-0.8-6"/>
<path class="g9" d="M1247 429l2.6-8.6 0.3-9"/>
<path class="g8" d="M1249.9 411.4l-2-7.7-0.7-8 0.7-8 2.2-7.7 3.8-7 5.5-5.9"/>
<path class="g6" d="M1259.4 367.1l5.1-3.1 5.5-2.3 5.9-1.3 6-0.1 5.9 1.1 5.5 2.4"/>
<path class="g4" d="M1293.3 363.8l3.1 2.5 2.7 2.9 2.2 3.4 1.5 3.7 0.6 3.9-0.2 4"/>
<path class="g2" d="M1303.2 384.2l-0.6 1.9-0.9 1.8-1.2 1.6-1.5 1.4-1.7 1-1.9 0.5-2 0.1-2-0.6"/>
<path class="g1" d="M1291.4 391.9l-0.8-0.5-0.9-0.4-1-0.3-1-0.1-1 0.1-0.9 0.4"/>
<circle class="d" cx="1285.5" cy="385.5" r="2.9"/>
<path class="g1" d="M1285.8 391.1l-0.9 0.5-0.7 0.7-0.4 0.9-0.1 1 0.2 1 0.5 0.9 0.8 0.6 0.9 0.3 1-0.2 0.8-0.5 0.5-0.9 0.1-1-0.5-0.9-0.8-0.6-1 0-0.9 0.5-0.4 0.9 0.2 1 0.8 0.6 1 0.1"/>
<circle class="f1" cx="1286.9" cy="394.1" r="2.4"/>
<path class="g2" d="M1291.4 391.9l-1.7-1-1.2-1.6-0.7-1.9 0.1-2 0.8-1.8 1.5-1.3 1.9-0.6 2 0.3 1.6 1.2 0.8 1.8-0.1 2-1.2 1.6-1.9 0.7-1.9-0.4-1.4-1.4-0.4-2 0.8-1.8 1.9-0.8 1.9 0.4 1.2 1.6 0 2-1.5 1.4"/>
<circle class="f2" cx="1292.6" cy="386.3" r="3.7"/>
<path class="g4" d="M1303.2 384.2l-1.2 3.8-2.2 3.4"/>
<path class="g3" d="M1299.8 391.4l-2.3 1.9-2 2.2-1.6 2.6-1.2 2.7-0.6 3 0 3"/>
<path class="g1" d="M1292.1 406.8l0.3 0.9 0.3 1 0.6 0.8 0.6 0.8 0.8 0.6 0.9 0.4"/>
<circle class="d" cx="1292.3" cy="415.8" r="3.2"/>
<path class="g1" d="M1295.6 411.3l1 0.2 1-0.1 0.9-0.3 0.8-0.7 0.6-0.8 0.2-1-0.2-1-0.5-0.8-0.8-0.6-1-0.2-0.9 0.3-0.8 0.7-0.3 1 0.3 1 0.7 0.7 1 0.2 0.9-0.4 0.6-0.8 0-1-0.6-0.8"/>
<circle class="f1" cx="1297.6" cy="407.8" r="2.1"/>
<path class="g3" d="M1292.1 406.8l0.8 2.9 1.4 2.6"/>
<path class="g2" d="M1294.3 412.3l1.4 1.5 1.1 1.6 0.9 1.8 0.5 1.9 0 2-0.4 2-0.9 1.8-1.4 1.4"/>
<path class="g1" d="M1295.5 426.3l-0.9 0.5-0.7 0.6-0.7 0.8-0.6 0.8-0.4 0.9-0.1 1"/>
<circle class="d" cx="1286.9" cy="428.8" r="3.2"/>
<path class="g1" d="M1292.1 430.9l0 1 0.4 1 0.6 0.8 0.8 0.6 0.9 0.3 1-0.1 0.9-0.4 0.7-0.7 0.4-1-0.1-1-0.6-0.8-0.8-0.5-1 0-0.9 0.4-0.5 0.9 0 1 0.6 0.8 1 0.3 1-0.3 0.6-0.7"/>
<circle class="f1" cx="1296" cy="432.2" r="2.3"/>
<path class="g2" d="M1295.5 426.3l-1.7 1-2 0.4-2-0.3-1.7-1-1.2-1.6-0.5-1.9 0.4-2 1.2-1.6 1.8-0.9 2 0.2 1.7 1 0.8 1.8-0.2 2-1.3 1.6-1.9 0.5-1.9-0.7-1.1-1.6 0.3-2 1.3-1.5 2-0.4 1.7 1.1 0.5 2"/>
<circle class="f2" cx="1290.6" cy="423.5" r="4.3"/>
<path class="g3" d="M1294.3 412.3l2.1 2.2 2.6 1.4 2.9 0.6 3-0.5 2.6-1.5 1.9-2.4 0.8-2.9-0.5-2.9-1.7-2.5-2.7-1.4-3-0.1-2.6 1.4-1.6 2.6 0 3 1.6 2.5 2.9 0.9 2.9-0.7 1.7-2.4-0.2-3-2.3-2-3 0.1-1.9 2.3 0.3 3 2.4 1.8 2.9-0.4 1.9-2.4"/>
<circle class="f3" cx="1302.4" cy="408.2" r="6.4"/>
<path class="g4" d="M1299.8 391.4l-3.1 2.6-3.7 1.4-4 0.1-3.8-1.3-2.9-2.7-1.7-3.6 0-4 1.8-3.6 3.2-2.3 4-0.6 3.7 1.6 2.4 3.2 0.3 4-2 3.4"/>
<path class="y0 w4" d="M1294 389.6l-3.6 1.8-4-0.7-3-2.6"/>
<path class="y1 w4" d="M1283.4 388.1l-0.9-3.9 1.9-3.6 3.7-1.4"/>
<path class="y2 w4" d="M1288.1 379.2l3.5 1.8 1.2 3.8-1.5 3.7-3.7 1.4"/>
<path class="y3 w4" d="M1287.6 389.9l-3.8-1.4-1.8-3.5 1.9-3.5 3.9-0.8 2.8 2.8"/>
<path class="y4 w4" d="M1290.6 383.5l-0.3 3.9-3.5 2-3.7-1.4-1.5-3.8 2.7-2.9 4 0.2 2 3.4"/>
<path class="y5 w4" d="M1290.3 384.9l-2.3 3.2-4-0.8-0.9-3.9 2.7-2.9 3.6 1.8-0.1 4-3.8 1.2-2-3.4 2.7-3 3.3 2.1"/>
<path class="y6 w4" d="M1289.5 383.2l-0.9 3.9-4-0.4-0.3-4 3.9-0.9 1.2 3.8-3 2.6-2.8-2.9 2.8-2.8 2.4 3.2-3.6 1.7-1.7-3.6 3.9-1 1.5 3.7-3.7 1.5-2.1-3.4 3.4-2.2 2.8 2.9-2.8 2.9-2.2-3.4 3.9-0.6-1.1 3.9"/>
<path class="g6" d="M1293.3 363.8l4.7 3.7 3.5 4.8"/>
<path class="g5" d="M1301.5 372.3l1.8 4.7 2.3 4.4 3 4 3.7 3.4 4.3 2.6 4.7 1.6"/>
<path class="g3" d="M1321.3 393l3 0.3 3-0.2 2.9-0.6 2.8-1.1 2.5-1.7 2.1-2.2"/>
<path class="g1" d="M1337.6 387.5l0.5-0.8 0.3-1 0.3-1 0-0.9-0.1-1-0.4-1"/>
<circle class="d" cx="1344" cy="381.2" r="2.9"/>
<path class="g1" d="M1338.2 381.8l-0.6-0.8-0.8-0.6-0.9-0.4-1-0.1-0.9 0.2-0.9 0.6-0.6 0.8-0.2 0.9 0.2 1 0.6 0.8 0.9 0.5 1 0 0.9-0.5 0.5-0.9 0-1-0.6-0.8-0.9-0.4-1 0.1-0.6 0.8-0.2 1"/>
<circle class="f1" cx="1335.2" cy="382.8" r="2.6"/>
<path class="g3" d="M1337.6 387.5l1.5-2.6 0.7-2.9"/>
<path class="g2" d="M1339.8 382l0-2 0.2-2 0.6-1.9 1-1.7 1.3-1.6 1.6-1.1 1.9-0.7 1.9-0.2"/>
<path class="g1" d="M1348.3 370.8l1 0.2 1 0.1 1-0.1 1-0.2 0.9-0.4 0.8-0.7"/>
<circle class="d" cx="1356.4" cy="375.1" r="3"/>
<path class="g1" d="M1354 369.7l0.6-0.8 0.4-0.9 0.1-1-0.2-1-0.5-0.8-0.8-0.7-0.9-0.3-1 0.1-0.9 0.5-0.6 0.8-0.2 1 0.3 0.9 0.7 0.7 1 0.2 1-0.3 0.6-0.7 0.1-1-0.4-0.9-0.9-0.5-1 0.1"/>
<circle class="f1" cx="1352.2" cy="366.4" r="2"/>
<path class="g2" d="M1348.3 370.8l2 0.4 1.7 1.1 1.3 1.5 0.6 1.9-0.2 2-0.9 1.8-1.6 1.2-2 0.4-1.9-0.6-1.4-1.4-0.5-2 0.5-1.9 1.5-1.3 2-0.3 1.8 0.9 0.9 1.8-0.1 2-1.2 1.6-2 0.2-1.7-1.1-0.4-1.9 1.2-1.6"/>
<circle class="f2" cx="1350.6" cy="377.9" r="4.7"/>
<path class="g3" d="M1339.8 382l-0.1-3-1-2.8-1.8-2.4-2.6-1.6-2.9-0.5-2.9 0.7-2.5 1.7-1.4 2.7-0.1 3 1.3 2.7 2.4 1.7 3 0.3 2.7-1.3 1.6-2.5-0.2-3-1.8-2.4-2.9-0.8-2.7 1.4-1.5 2.6 0.6 2.9 2.6 1.7 2.8-0.9 1.3-2.7-1.2-2.7-3-0.7-2.2 1.9"/>
<circle class="f3" cx="1331.6" cy="379.9" r="6.3"/>
<path class="g5" d="M1321.3 393l5 0.5 4.9-0.9"/>
<path class="g4" d="M1331.2 392.6l3.6-1.8 3.8-1.2 4-0.5 4 0.2 3.8 1.1 3.5 1.9"/>
<path class="g2" d="M1353.9 392.3l1.5 1.4 1.2 1.6 0.9 1.7 0.6 1.9 0.2 2-0.3 2-0.9 1.8-1.3 1.6"/>
<path class="g1" d="M1355.8 406.3l-0.8 0.5-0.8 0.6-0.6 0.8-0.5 0.9-0.4 0.9-0.1 1"/>
<circle class="d" cx="1347.3" cy="408.8" r="2.9"/>
<path class="g1" d="M1352.6 411l0.2 1 0.3 0.9 0.7 0.8 0.8 0.5 1 0.3 1-0.1 0.9-0.4 0.6-0.8 0.3-1-0.2-0.9-0.5-0.9-0.9-0.4-1 0-0.9 0.5-0.4 0.9 0.1 1 0.6 0.8 1 0.2 0.9-0.5 0.4-0.9"/>
<circle class="f1" cx="1356" cy="411.8" r="2.1"/>
<path class="g2" d="M1355.8 406.3l-1.6 1-2 0.5-2-0.2-1.8-0.9-1.3-1.5-0.5-2 0.3-1.9 1.1-1.7 1.7-0.9 2 0 1.8 1 0.9 1.7-0.1 2-1.2 1.6-1.9 0.6-1.9-0.7-1.1-1.7 0.3-1.9 1.5-1.4 2-0.1 1.5 1.3 0.1 2"/>
<circle class="f2" cx="1351" cy="402.3" r="4"/>
<path class="g4" d="M1353.9 392.3l2.9 2.7 2.1 3.5"/>
<path class="g3" d="M1358.9 398.5l0.8 2.8 1.2 2.8 1.6 2.5 2 2.3 2.5 1.7 2.7 1.2"/>
<path class="g1" d="M1369.7 411.8l1 0.1 1 0.1 1-0.2 0.9-0.3 0.9-0.5 0.8-0.7"/>
<circle class="d" cx="1378" cy="415.7" r="2.9"/>
<path class="g1" d="M1375.3 410.3l0.5-0.8 0.3-1 0.1-1-0.3-0.9-0.6-0.8-0.8-0.6-1-0.3-0.9 0.2-0.9 0.5-0.5 0.9-0.1 0.9 0.3 1 0.8 0.6 1 0.2 0.9-0.4 0.6-0.8 0-1-0.6-0.8-0.9-0.3-1 0.3"/>
<circle class="f1" cx="1372.9" cy="407.6" r="2"/>
<path class="g3" d="M1369.7 411.8l3 0.4 3-0.3"/>
<path class="g2" d="M1375.7 411.9l1.8-0.8 1.9-0.6 2-0.2 2 0.2 1.9 0.6 1.7 1.1 1.4 1.4 0.9 1.8"/>
<path class="g1" d="M1389.3 415.4l0.2 1 0.3 1 0.4 0.8 0.6 0.8 0.8 0.7 0.9 0.5"/>
<circle class="d" cx="1388.6" cy="423.8" r="2.8"/>
<path class="g1" d="M1392.5 420.2l0.9 0.2 1 0.1 1-0.3 0.8-0.6 0.6-0.8 0.3-0.9-0.1-1-0.4-0.9-0.8-0.7-1-0.2-1 0.2-0.7 0.7-0.4 0.9 0.2 1 0.6 0.7 1 0.3 0.9-0.3 0.7-0.7 0.1-1-0.4-0.9"/>
<circle class="f1" cx="1395" cy="417.2" r="2.3"/>
<path class="g2" d="M1389.3 415.4l0.3 2-0.3 2-0.9 1.7-1.5 1.3-1.9 0.6-2-0.2-1.7-1-1.2-1.6-0.2-2 0.8-1.9 1.6-1.2 2-0.2 1.8 0.9 1 1.7-0.2 2-1.3 1.5-1.9 0.4-1.7-1.1-0.5-1.9 1-1.8 1.8-0.7 1.8 0.9"/>
<circle class="f2" cx="1383.9" cy="418.5" r="4.2"/>
<path class="g3" d="M1375.7 411.9l2.7-1.3 2.2-2 1.5-2.6 0.6-2.9-0.6-3-1.6-2.5-2.5-1.6-3-0.5-2.9 0.8-2.2 2.1-0.9 2.8 0.5 3 2 2.2 2.9 0.9 2.9-0.8 1.9-2.3 0.1-3-1.7-2.4-2.8-1.1-2.8 1.2-1.2 2.8 0.7 2.9 2.5 1.6 3-0.4 1.5-2.6-1.1-2.8"/>
<circle class="f3" cx="1376.8" cy="402.3" r="6.7"/>
<path class="g4" d="M1358.9 398.5l1.1 3.8-0.2 4-1.6 3.7-2.8 2.8-3.7 1.6-4 0-3.6-1.7-2.5-3.2-0.7-3.9 1.2-3.8 2.9-2.7 4-0.8 3.7 1.5 2.3 3.3"/>
<path class="y0 w4" d="M1355 403.1l0 4-2.3 3.3-3.6 1.6"/>
<path class="y1 w4" d="M1349.1 412l-3.9-1.2-2.4-3.1-0.1-4"/>
<path class="y2 w4" d="M1342.7 403.7l2.6-3.1 4-0.3 3 2.7-0.5 4"/>
<path class="y3 w4" d="M1351.8 407l-3.3 2.2-3.9-0.7-1.5-3.7 2.3-3.2 4-0.4"/>
<path class="y4 w4" d="M1349.4 401.2l2.8 2.8-0.2 4-3.2 2.4-3.8-1.3-0.9-3.9 2.7-3 3.8 1.2"/>
<path class="y5 w4" d="M1350.6 403.4l0 4-3.7 1.5-3-2.7 1.3-3.7 4 0.6 1.1 3.9-3.2 2.3-3.2-2.5 1.2-3.8 4 0.5"/>
<path class="y6 w4" d="M1349.1 403.5l1.2 3.8-3.5 1.9-3-2.5 1.4-3.8 4 0.3 1 3.8-3.6 1.7-2.5-3.2 3.3-2.2 2.9 2.7-3.2 2.4-2.6-3 2.9-2.8 2.6 3.1-2.7 2.9-3.3-2.3 3.3-2.2 0.9 3.9-4 0.4-0.1-4 3.6 1.8"/>
<path class="g5" d="M1331.2 392.6l4.5-2.3 3.6-3.4 2.3-4.5 0.6-4.9-1.2-4.9-3-4-4.3-2.5-5-0.4-4.6 1.8-3.4 3.7-1.1 4.9 1.5 4.8 3.7 3.3 4.9 0.8"/>
<path class="y0 w5" d="M1329.7 385l4.6-2 2.2-4.5-1.1-4.8"/>
<path class="y1 w5" d="M1335.4 373.7l-4.1-3-5-0.3-4.1 2.8"/>
<path class="y2 w5" d="M1322.2 373.2l-1.1 4.9 2.4 4.4 4.9 0.9 3.8-3.2"/>
<path class="y3 w5" d="M1332.2 380.2l-0.4-5-4.1-2.8-4.7 1.7-2.4 4.4 1.5 4.8"/>
<path class="y4 w5" d="M1322.1 383.3l4.5 2.2 4.7-1.6 1.1-4.9-3.2-3.9-5 0.3-2.8 4.1 1.9 4.6"/>
<path class="y5 w5" d="M1323.3 384.1l4.9 1 3.8-3.2-0.6-4.9-4.9-0.9-2.9 4 2.8 4.2 4.8-1.4-0.7-4.9-5-0.2-0.9 4.9"/>
<path class="y6 w5" d="M1324.6 382.7l4.4 2.4 4-3-2.6-4.3-4.8 1.3-0.3 5 4.4 2.4 3.4-3.7-3.7-3.3-3.8 3.2 3.2 3.8 4.5-2-1.8-4.6-4.8 1.5 1.6 4.7 4.5-2.2-1.3-4.8-4.8 1.3 2.4 4.4 4.7-1.7-2.9-4.1-4 3"/>
<path class="g6" d="M1301.5 372.3l2.1 5.7 0.2 6-1.9 5.7-3.9 4.6-5.3 2.8-6 0.4-5.6-2.2-4-4.4-1.6-5.8 1.4-5.8 4.2-4.3 5.8-1.6 5.7 1.9 3.7 4.6"/>
<path class="y0 w6" d="M1296.3 379.9l0.4 6-3.7 4.8-5.7 1.9"/>
<path class="y1 w6" d="M1287.3 392.6l-5.5-2.4-2.7-5.3 1.7-5.8"/>
<path class="y2 w6" d="M1280.8 379.1l4.8-3.6 6 0 4.7 3.6 1.3 5.9"/>
<path class="y3 w6" d="M1297.6 385l-3.5 4.9-6 0.2-4.1-4.4 0.1-6 4.6-3.8"/>
<path class="y4 w6" d="M1288.7 375.9l5.8 1.7 1.4 5.8-3.7 4.7-6 0.3-3.9-4.6 1.7-5.8 5.5-2.3"/>
<path class="y5 w6" d="M1289.5 375.7l4.6 3.8-0.8 5.9-5.4 2.7-3.8-4.6 1.8-5.8 6-0.3 1.7 5.8-4.7 3.7-5.2-3 1.4-5.8"/>
<path class="y6 w6" d="M1285.1 378.1l6-0.6 1.2 5.9-5.4 2.7-3.5-4.9 4.5-4 5 3.3-2.5 5.5-5.5-2.4 1.9-5.7 5.6 2.1-1.6 5.8-5.7-1.7 0.5-6 5.6 2-3.4 4.9-5.4-2.7 4.1-4.4 4 4.5-5.6 2-1.5-5.8 5.6-2.1"/>
<path class="g8" d="M1259.4 367.1l6.8-4.1 7.7-2.2"/>
<path class="g7" d="M1273.9 360.8l7 0.3 6.9-0.7 6.8-1.9 6.4-2.9 5.6-4.2 4.6-5.2"/>
<path class="g5" d="M1311.2 346.2l2.3-4.5 1.7-4.7 0.9-4.9 0-5-0.9-4.9-2-4.6"/>
<path class="g3" d="M1313.2 317.6l-1.7-2.4-2.1-2.2-2.5-1.7-2.6-1.4-2.9-0.8-3-0.1"/>
<path class="g1" d="M1298.4 309l-1 0.2-1 0.3-0.8 0.5-0.8 0.6-0.7 0.8-0.4 0.9"/>
<circle class="d" cx="1289.7" cy="308.3" r="2.8"/>
<path class="g1" d="M1293.7 312.3l-0.3 0.9 0.1 1 0.3 1 0.6 0.8 0.8 0.6 0.9 0.3 1-0.1 0.9-0.5 0.6-0.8 0.2-1-0.2-1-0.7-0.7-0.9-0.3-1 0.1-0.7 0.7-0.3 1 0.3 0.9 0.8 0.6 1-0.1 0.8-0.6"/>
<circle class="f1" cx="1296.4" cy="314" r="2.4"/>
<path class="g3" d="M1298.4 309l-3 0.6-2.7 1.3"/>
<path class="g2" d="M1292.7 310.9l-1.4 1.4-1.7 1.1-1.8 0.8-2 0.5-2 0-1.9-0.5-1.8-0.9-1.4-1.4"/>
<path class="g1" d="M1278.7 311.9l-0.5-0.9-0.6-0.8-0.7-0.7-0.8-0.6-0.9-0.4-1-0.2"/>
<circle class="d" cx="1277" cy="303" r="2.7"/>
<path class="g1" d="M1274.2 308.3l-1 0.1-1 0.3-0.8 0.6-0.6 0.8-0.3 0.9 0 1 0.4 1 0.7 0.7 0.9 0.3 1-0.1 0.9-0.5 0.5-0.8 0.1-1-0.5-0.9-0.8-0.5-1 0-0.9 0.6-0.3 0.9 0.3 1 0.8 0.5"/>
<circle class="f1" cx="1273.1" cy="311.4" r="2.3"/>
<path class="g2" d="M1278.7 311.9l-1-1.8-0.3-2 0.3-1.9 1.1-1.7 1.6-1.2 1.9-0.5 2 0.5 1.6 1.2 0.8 1.8-0.1 2-1.2 1.7-1.8 0.8-2-0.3-1.5-1.3-0.5-1.9 0.9-1.8 1.8-1 1.9 0.5 1.1 1.7-0.5 2-1.7 1-2-0.2"/>
<circle class="f2" cx="1282.1" cy="306.9" r="3.9"/>
<path class="g3" d="M1292.7 310.9l-2.2 2.1-1.4 2.6-0.6 2.9 0.5 3 1.5 2.6 2.5 1.7 2.9 0.7 2.9-0.7 2.3-1.8 1.2-2.8-0.2-3-1.8-2.4-2.7-1.2-3 0.5-2.2 2.1-0.6 2.9 1.4 2.7 2.6 1.4 3-0.5 1.8-2.4-0.3-2.9-2.1-2.2-2.9-0.3-2.6 1.6-0.2 3 1.9 2.4"/>
<circle class="f3" cx="1297.3" cy="321.1" r="5.5"/>
<path class="g5" d="M1313.2 317.6l-2.9-4-3.9-3.2"/>
<path class="g4" d="M1306.4 310.4l-3.7-1.5-3.4-2.2-3-2.6-2.4-3.2-1.6-3.7-0.8-3.9"/>
<path class="g2" d="M1291.5 293.3l0.2-2 0.4-2 0.8-1.8 1.1-1.7 1.4-1.3 1.8-1 1.9-0.6 2 0.1"/>
<path class="g1" d="M1301.1 283l0.9 0.3 1 0.2 1 0 1-0.2 1-0.3 0.8-0.5"/>
<circle class="d" cx="1308.2" cy="288" r="2.7"/>
<path class="g1" d="M1306.8 282.5l0.7-0.8 0.5-0.9 0.2-0.9-0.1-1-0.4-0.9-0.7-0.7-1-0.4-1-0.1-0.9 0.4-0.7 0.7-0.2 1 0.2 1 0.6 0.7 1 0.4 0.9-0.2 0.8-0.7 0.1-1-0.3-0.9-0.9-0.5-1 0.2"/>
<circle class="f1" cx="1305.3" cy="278.8" r="2.2"/>
<path class="g2" d="M1301.1 283l1.9 0.6 1.6 1.2 1.1 1.7 0.4 1.9-0.4 2-1.1 1.7-1.7 1-2 0.2-1.8-0.8-1.3-1.5-0.3-2 0.7-1.9 1.7-1.1 2-0.1 1.6 1.1 0.6 1.9-0.7 1.9-1.8 0.9-1.9-0.4-1.2-1.6 0.1-2 1.5-1.3"/>
<circle class="f2" cx="1300.5" cy="287.9" r="4.4"/>
<path class="g4" d="M1291.5 293.3l0.3-4 1.4-3.8"/>
<path class="g3" d="M1293.2 285.5l1.8-2.3 1.5-2.6 1-2.9 0.6-2.9-0.1-3-0.6-2.9"/>
<path class="g1" d="M1297.4 268.9l-0.5-0.9-0.5-0.9-0.7-0.7-0.8-0.6-0.9-0.4-1-0.3"/>
<circle class="d" cx="1295.3" cy="259.9" r="3.3"/>
<path class="g1" d="M1293 265.1l-1 0.1-0.9 0.2-0.9 0.6-0.6 0.7-0.4 1 0 1 0.3 0.9 0.7 0.7 0.9 0.4 1 0 0.9-0.5 0.6-0.8 0.1-1-0.4-0.9-0.9-0.6-1 0-0.8 0.6-0.3 0.9 0.3 1 0.8 0.5"/>
<circle class="f1" cx="1292" cy="268.5" r="2.2"/>
<path class="g3" d="M1297.4 268.9l-1.3-2.7-2-2.3"/>
<path class="g2" d="M1294.1 263.9l-1.6-1.2-1.5-1.4-1.1-1.6-0.9-1.8-0.4-1.9 0-2 0.5-1.9 1.1-1.8"/>
<path class="g1" d="M1290.2 250.3l0.7-0.6 0.7-0.8 0.5-0.8 0.4-0.9 0.2-1 0-1"/>
<circle class="d" cx="1298.1" cy="246.5" r="3"/>
<path class="g1" d="M1292.7 245.2l-0.3-1-0.5-0.8-0.7-0.7-0.9-0.4-1-0.1-1 0.2-0.8 0.6-0.6 0.8-0.1 1 0.3 1 0.7 0.7 0.9 0.3 1-0.1 0.8-0.7 0.3-0.9-0.3-1-0.7-0.7-1 0-0.9 0.5-0.3 0.9"/>
<circle class="f1" cx="1288.9" cy="244.8" r="2.2"/>
<path class="g2" d="M1290.2 250.3l1.5-1.3 1.9-0.7 2-0.1 1.8 0.7 1.6 1.3 0.8 1.8 0 2-0.9 1.8-1.6 1.2-1.9 0.3-1.9-0.8-1.2-1.6-0.2-2 1-1.7 1.8-0.9 2 0.3 1.5 1.2 0.6 2-0.9 1.8-1.8 0.8-1.9-0.6-1.2-1.6"/>
<circle class="f2" cx="1296.1" cy="253.5" r="4.1"/>
<path class="g3" d="M1294.1 263.9l-2.4-1.7-2.9-0.9-3 0.2-2.7 1.2-2.1 2.2-1 2.8 0.3 3 1.6 2.6 2.6 1.4 3 0.1 2.6-1.6 1.4-2.6-0.3-3-1.9-2.3-2.9-0.7-2.9 1-1.5 2.6 0.1 3 1.8 2.4 3 0.4 2.6-1.5 1-2.9-1.3-2.7-2.8-1-2.7 1.4-0.8 2.9"/>
<circle class="f3" cx="1286.3" cy="267.9" r="6.6"/>
<path class="g4" d="M1293.2 285.5l2.4-3.1 3.3-2.3 3.9-0.9 4 0.5 3.4 1.9 2.5 3.2 0.8 3.9-1 3.9-2.6 3-3.8 1.4-3.9-0.7-3-2.6-1.2-3.8 1.1-3.9"/>
<path class="y0 w4" d="M1299.1 286l3.2-2.4 4-0.1 3.3 2.1"/>
<path class="y1 w4" d="M1309.6 285.6l1.3 3.8-1.4 3.7-3.4 2.2"/>
<path class="y2 w4" d="M1306.1 295.3l-3.9-0.8-2.5-3.1 0.4-4 3.2-2.3"/>
<path class="y3 w4" d="M1303.3 285.1l4 0.7 2.3 3.3-1.4 3.7-3.8 1.2-3.3-2.2"/>
<path class="y4 w4" d="M1301.1 291.8l-0.2-4 3-2.7 3.9 0.6 2.1 3.5-1.6 3.7-3.9 0.7-2.9-2.7"/>
<path class="y5 w4" d="M1301.5 290.9l0.4-4 3.5-2 3.6 1.6-0.5 4-4 0.5-1.1-3.9 3.3-2.2 2.6 3.1-2.6 3-3.7-1.6"/>
<path class="y6 w4" d="M1303 289.4l1.5-3.7 3.9 0.9 0.5 3.9-4 0.8-1-3.8 3.5-1.9 2.2 3.3-3.4 2-2.3-3.3 3.1-2.6 2.5 3.1-3 2.7-1.8-3.6 3.5-2.1 1.1 3.9-4 0.3 0.7-3.9 3.9 0.7-1.1 3.8-3.9-0.7 0.3-4"/>
<path class="g5" d="M1306.4 310.4l-4.6-1.9-5-0.4-4.8 1.5-3.9 3.1-2.3 4.4-0.2 5 2.1 4.6 4 3 5 0.7 4.5-2 2.8-4.2 0-5-3-4-4.8-1.5"/>
<path class="y0 w5" d="M1296.2 313.7l-4.6 1.9-2.9 4.1 0 5"/>
<path class="y1 w5" d="M1288.7 324.7l3.3 3.8 5 0.6 3.9-3.2"/>
<path class="y2 w5" d="M1300.9 325.9l0.8-4.9-2.8-4.1-5-0.8-4 3"/>
<path class="y3 w5" d="M1289.9 319.1l-1.1 4.9 3 3.9 5-0.2 3-4-1.7-4.7"/>
<path class="y4 w5" d="M1298.1 319l-4.5-2.1-4.4 2.4-1.1 4.8 2.8 4.2 4.9-0.8 1.9-4.6-2.4-4.4"/>
<path class="y5 w5" d="M1295.3 318.5l-5 0.1-2.9 4.1 1.5 4.7 4.9 1.2 3.3-3.7-1.4-4.8-4.8-1.3-3.3 3.7 2.2 4.5 5-0.3"/>
<path class="y6 w5" d="M1294.8 326.7l0.8-4.9-4.6-1.8-3.7 3.4 3.3 3.7 4.6-2.1-1.1-4.9-5 0.1-0.9 4.9 4.6 1.8 3.2-3.8-2.6-4.3-4.2 2.8 3.7 3.5 4-3-3.5-3.5-4.1 2.9 2.3 4.4 4.6-2-1.8-4.7-3.5 3.6 3.7 3.3"/>
<path class="g7" d="M1311.2 346.2l3.2-6.2 1.5-6.9"/>
<path class="g6" d="M1315.9 333.1l-0.4-6 0.5-5.9 1.5-5.8 2.6-5.4 3.7-4.7 4.8-3.7"/>
<path class="g4" d="M1328.6 301.6l3.7-1.4 3.9-0.9 4-0.1 4 0.6 3.7 1.4 3.3 2.3"/>
<path class="g2" d="M1351.2 303.5l1.2 1.6 1 1.7 0.7 1.9 0.4 1.9-0.2 2-0.5 2-1.1 1.7-1.5 1.3"/>
<path class="g1" d="M1351.2 317.6l-0.9 0.4-0.8 0.6-0.8 0.6-0.6 0.8-0.4 0.9-0.3 1"/>
<circle class="d" cx="1342.9" cy="318.8" r="2.7"/>
<path class="g1" d="M1347.4 321.9l0 1 0.3 0.9 0.5 0.9 0.7 0.7 1 0.3 1 0.1 0.9-0.4 0.7-0.6 0.5-0.9-0.1-1-0.4-0.9-0.8-0.6-1-0.1-0.9 0.4-0.6 0.8 0 1 0.5 0.9 0.9 0.3 0.9-0.4 0.6-0.8"/>
<circle class="f1" cx="1350.4" cy="323.3" r="2.2"/>
<path class="g2" d="M1351.2 317.6l-1.8 0.8-2 0.3-1.9-0.5-1.7-1.2-1-1.6-0.4-2 0.6-1.9 1.3-1.5 1.9-0.7 2 0.2 1.5 1.3 0.8 1.8-0.4 2-1.4 1.4-2 0.4-1.8-0.8-1-1.8 0.5-1.9 1.6-1.2 1.9 0.4 1.2 1.6-0.2 2"/>
<circle class="f2" cx="1346.5" cy="313.7" r="3.9"/>
<path class="g4" d="M1351.2 303.5l2.5 3.1 1.5 3.7"/>
<path class="g3" d="M1355.2 310.3l0.3 3 0.6 2.9 1.1 2.8 1.6 2.6 2.1 2.2 2.4 1.7"/>
<path class="g1" d="M1363.3 325.5l1 0.3 0.9 0.2 1 0.1 1-0.2 1-0.3 0.8-0.5"/>
<circle class="d" cx="1370.1" cy="330.8" r="2.6"/>
<path class="g1" d="M1369 325.1l0.8-0.7 0.5-0.9 0.2-0.9-0.1-1-0.4-0.9-0.6-0.8-0.9-0.4-1-0.1-1 0.4-0.7 0.7-0.3 1 0.2 0.9 0.6 0.8 1 0.4 0.9-0.2 0.8-0.7 0.2-0.9-0.4-1-0.8-0.5-1 0.2"/>
<circle class="f1" cx="1367.4" cy="321.7" r="2.1"/>
<path class="g3" d="M1363.3 325.5l2.8 1 3 0.2"/>
<path class="g2" d="M1369.1 326.7l2-0.4 2-0.1 2 0.2 1.9 0.6 1.7 1 1.5 1.4 1 1.7 0.5 1.9"/>
<path class="g1" d="M1381.7 333l0 1 0.1 1 0.3 1 0.4 0.9 0.6 0.8 0.7 0.7"/>
<circle class="d" cx="1379" cy="341.4" r="2.8"/>
<path class="g1" d="M1383.8 338.4l0.9 0.4 1 0.2 1-0.1 0.9-0.3 0.8-0.7 0.5-0.9 0.1-1-0.3-0.9-0.6-0.8-0.9-0.4-1 0-0.9 0.4-0.5 0.9-0.1 1 0.5 0.9 0.9 0.4 1 0 0.7-0.7 0.2-1-0.5-0.9"/>
<circle class="f1" cx="1386.2" cy="336.1" r="2.2"/>
<path class="g2" d="M1381.7 333l0 2-0.7 1.9-1.3 1.5-1.8 1-2 0.2-1.9-0.6-1.5-1.4-0.7-1.8 0.2-2 1.2-1.7 1.8-0.8 1.9 0.2 1.6 1.2 0.7 1.9-0.6 1.9-1.6 1.3-1.9 0.2-1.8-1-0.6-1.9 0.8-1.8 1.9-0.7 1.8 1"/>
<circle class="f2" cx="1375" cy="333.9" r="4.5"/>
<path class="g3" d="M1369.1 326.7l3-0.6 2.6-1.5 1.9-2.3 1-2.9-0.2-3-1.4-2.7-2.3-1.8-2.9-0.7-2.9 0.8-2.2 2.1-0.8 2.9 0.8 2.9 2.3 2 3 0.3 2.6-1.4 1.5-2.6-0.4-3-2.4-1.8-3 0.2-2.3 2-0.6 2.9 1.4 2.7 2.9 0.9 2.6-1.3 1.1-2.8-1.6-2.6"/>
<circle class="f3" cx="1371.1" cy="318.8" r="5.5"/>
<path class="g4" d="M1355.2 310.3l0.4 4-1 3.9-2.2 3.3-3.3 2.3-3.9 0.9-3.9-0.8-3.3-2.3-1.9-3.6 0-4 1.9-3.5 3.4-2.1 4-0.1 3.4 2.1 1.7 3.6"/>
<path class="y0 w4" d="M1350.5 314l-0.7 3.9-2.8 2.9-4 0.3"/>
<path class="y1 w4" d="M1343 321.1l-3.5-1.9-1.7-3.6 1.5-3.7"/>
<path class="y2 w4" d="M1339.3 311.9l3.4-2.2 3.8 1.3 2.1 3.4-1.4 3.7"/>
<path class="y3 w4" d="M1347.2 318.1l-3.6 1.6-3.5-1.9-1.1-3.9 2.8-2.9 3.9 0.4"/>
<path class="y4 w4" d="M1345.7 311.4l2.5 3.2-1 3.8-3.8 1.4-2.9-2.8 0.9-3.9 3.9-0.9 2.8 2.9"/>
<path class="y5 w4" d="M1348.1 315.1l-1.1 3.8-3.9 0.7-2.7-2.9 0.8-3.9 4-0.5 2.3 3.3-2.1 3.4-4-0.4-1.1-3.9 3.7-1.6"/>
<path class="y6 w4" d="M1344 313.1l2.9 2.7-2 3.4-3.6-1.8 0.9-3.9 4 0.1 0 4-4 0.4-0.7-4 3.5-1.9 1.7 3.6-3.2 2.4-1.8-3.5 3.9-0.9 1.3 3.8-3.4 2-0.7-3.9 3.9-0.6 0.4 4-4 0.3 0.3-4 3.7 1.5"/>
<path class="g6" d="M1328.6 301.6l5.6-2.2 6-0.5"/>
<path class="g5" d="M1340.2 298.9l4.8 1.1 5 0.3 5-0.4 4.8-1.3 4.5-2.2 4-3.1"/>
<path class="g3" d="M1368.3 293.3l1.8-2.3 1.5-2.6 1.1-2.8 0.5-3 0-3-0.7-2.9"/>
<path class="g1" d="M1372.5 276.7l-0.4-0.9-0.6-0.8-0.7-0.7-0.8-0.6-0.9-0.4-1-0.2"/>
<circle class="d" cx="1370.8" cy="268.2" r="2.8"/>
<path class="g1" d="M1368.1 273.1l-1 0-1 0.3-0.8 0.6-0.6 0.7-0.4 1 0 1 0.4 0.9 0.7 0.7 0.9 0.4 1-0.1 0.9-0.5 0.5-0.8 0.1-1-0.4-0.9-0.9-0.5-1 0-0.8 0.5-0.4 1 0.4 0.9 0.9 0.5"/>
<circle class="f1" cx="1366.9" cy="276" r="2.3"/>
<path class="g3" d="M1372.5 276.7l-1.4-2.7-2-2.2"/>
<path class="g2" d="M1369.1 271.8l-1.7-1-1.5-1.3-1.3-1.6-0.9-1.7-0.6-1.9-0.1-2 0.5-2 0.9-1.8"/>
<path class="g1" d="M1364.4 258.5l0.7-0.7 0.6-0.7 0.5-0.9 0.3-1 0.2-1-0.1-1"/>
<circle class="d" cx="1372.3" cy="254.3" r="2.9"/>
<path class="g1" d="M1366.6 253.2l-0.3-0.9-0.6-0.8-0.8-0.7-0.9-0.3-1-0.1-1 0.3-0.7 0.6-0.5 0.9-0.1 1 0.3 0.9 0.8 0.7 0.9 0.3 1-0.2 0.7-0.7 0.3-1-0.3-0.9-0.8-0.7-1-0.1-0.8 0.5-0.4 1"/>
<circle class="f1" cx="1363" cy="253.8" r="2.4"/>
<path class="g2" d="M1364.4 258.5l1.4-1.4 1.8-0.8 2-0.2 2 0.5 1.5 1.2 1 1.8 0.1 2-0.7 1.8-1.6 1.3-1.9 0.4-1.9-0.6-1.3-1.5-0.3-2 0.9-1.8 1.7-1 2 0.2 1.5 1.3 0.6 1.9-0.6 1.9-1.6 1.2-1.9-0.3-1.2-1.7"/>
<circle class="f2" cx="1370.4" cy="262.2" r="4"/>
<path class="g3" d="M1369.1 271.8l-2.5-1.6-2.9-0.7-3 0.3-2.7 1.3-2.1 2.1-1.1 2.8 0.2 3 1.4 2.7 2.4 1.7 3 0.4 2.8-1 1.9-2.4 0.4-3-1.3-2.7-2.6-1.5-2.9 0.4-2 2.2-0.5 3 1.3 2.7 2.8 1 2.7-1.3 1.3-2.7-1.1-2.8-2.8-1-2.6 1.6-0.5 2.9"/>
<circle class="f3" cx="1365.2" cy="279.5" r="8"/>
<path class="g5" d="M1368.3 293.3l3-3.9 2-4.6"/>
<path class="g4" d="M1373.3 284.8l0.6-3.9 1.1-3.9 1.9-3.5 2.4-3.2 3.1-2.5 3.6-1.8"/>
<path class="g2" d="M1386 266l2-0.4 2 0 2 0.3 1.9 0.6 1.7 1.1 1.4 1.4 1 1.7 0.4 2"/>
<path class="g1" d="M1398.4 272.7l0 1 0 1 0.3 0.9 0.4 1 0.5 0.8 0.8 0.7"/>
<circle class="d" cx="1395.3" cy="281.2" r="2.9"/>
<path class="g1" d="M1400.4 278.1l0.9 0.4 0.9 0.3 1-0.1 1-0.3 0.7-0.7 0.6-0.8 0.1-1-0.2-1-0.6-0.8-0.9-0.4-1-0.1-0.9 0.5-0.6 0.8-0.1 1 0.5 0.9 0.9 0.5 1-0.1 0.8-0.5 0.3-1-0.3-0.9"/>
<circle class="f1" cx="1403.5" cy="275.7" r="2.1"/>
<path class="g2" d="M1398.4 272.7l-0.1 2-0.7 1.8-1.4 1.5-1.8 0.9-2 0.2-1.9-0.7-1.4-1.4-0.7-1.9 0.3-2 1.2-1.6 1.8-0.8 2 0.3 1.5 1.2 0.6 2-0.6 1.9-1.7 1.1-2-0.2-1.5-1.3-0.4-2 1-1.8 1.8-0.8 1.8 0.8"/>
<circle class="f2" cx="1392.8" cy="274.1" r="3.7"/>
<path class="g4" d="M1386 266l3.9-0.7 4 0.3"/>
<path class="g3" d="M1393.9 265.6l2.8 1.2 2.9 0.7 3 0.3 3-0.3 2.9-0.8 2.6-1.5"/>
<path class="g1" d="M1411.1 265.2l0.7-0.7 0.6-0.7 0.5-0.9 0.4-0.9 0.1-1-0.1-1"/>
<circle class="d" cx="1419.1" cy="261" r="3"/>
<path class="g1" d="M1413.3 260l-0.3-1-0.5-0.8-0.8-0.7-0.9-0.3-1-0.1-1 0.3-0.8 0.6-0.5 0.9-0.1 1 0.4 0.9 0.7 0.7 0.9 0.3 1-0.2 0.8-0.7 0.2-1-0.2-0.9-0.8-0.7-1-0.1-0.9 0.6-0.4 0.9"/>
<circle class="f1" cx="1409.8" cy="260" r="2.2"/>
<path class="g3" d="M1411.1 265.2l2.2-2 1.5-2.6"/>
<path class="g2" d="M1414.8 260.6l0.6-1.9 0.8-1.8 1.1-1.7 1.5-1.4 1.7-1 1.9-0.7 2-0.1 1.9 0.4"/>
<path class="g1" d="M1426.3 252.4l0.9 0.5 0.9 0.4 1 0.2 1 0.1 1-0.2 0.9-0.3"/>
<circle class="d" cx="1432.8" cy="258.7" r="3.1"/>
<path class="g1" d="M1432 253.1l0.8-0.6 0.7-0.8 0.4-0.9 0.1-1-0.3-0.9-0.5-0.9-0.8-0.6-1-0.2-1 0.2-0.8 0.6-0.4 0.9 0 1 0.4 0.9 0.9 0.5 1 0 0.8-0.6 0.4-0.9-0.1-1-0.7-0.7-1-0.1"/>
<circle class="f1" cx="1430.8" cy="249.2" r="2.1"/>
<path class="g2" d="M1426.3 252.4l1.7 1 1.4 1.5 0.7 1.9 0 2-0.7 1.9-1.5 1.4-1.8 0.6-2-0.2-1.7-1.1-0.9-1.8 0.1-2 1.1-1.7 1.8-0.8 2 0.4 1.4 1.4 0.2 1.9-0.8 1.8-1.8 1-1.9-0.4-1.2-1.6-0.1-2 1.3-1.6"/>
<circle class="f2" cx="1425.4" cy="258" r="3.7"/>
<path class="g3" d="M1414.8 260.6l0.8-2.9 0-3-0.9-2.8-1.8-2.4-2.5-1.7-2.9-0.8-3 0.4-2.6 1.5-1.7 2.4-0.7 2.9 0.7 3 1.9 2.3 2.8 1.1 3-0.3 2.4-1.8 1.1-2.7-0.9-2.9-2.5-1.7-3 0.3-2 2.2 0.3 3 2.1 2.1 3 0.2 2.2-2.1 0.1-3-2.1-2.2"/>
<circle class="f3" cx="1406.4" cy="253.9" r="5.6"/>
<path class="g4" d="M1393.9 265.6l3.7 1.5 3 2.7 1.9 3.5 0.5 4-1.1 3.8-2.6 3.1-3.7 1.6-4-0.2-3.4-2.1-1.9-3.5 0.1-4 2.2-3.3 3.7-1.6 3.9 0.8"/>
<path class="y0 w4" d="M1396.2 271.9l2.7 3 0 4-2.6 3"/>
<path class="y1 w4" d="M1396.3 281.9l-3.9 0.9-3.6-1.8-1.6-3.6"/>
<path class="y2 w4" d="M1387.2 277.4l1.5-3.7 3.6-1.8 3.9 0.9 1.9 3.5"/>
<path class="y3 w4" d="M1398.1 276.3l-1.3 3.7-3.9 1.1-3.4-2.1-0.8-3.9 2.9-2.7"/>
<path class="y4 w4" d="M1391.6 272.4l4 0.5 1.8 3.5-2.4 3.3-3.9-0.6-2-3.5 1.7-3.6 4 0.2"/>
<path class="y5 w4" d="M1394.8 272.2l1.5 3.7-3 2.7-3.8-1.3 0-4 3.4-2.1 3.3 2.3-0.4 4-4 0-1.2-3.8 3.5-2"/>
<path class="y6 w4" d="M1394.1 271.7l2.7 2.9-2.8 2.8-2.9-2.6 2.4-3.2 3.1 2.6-1.6 3.7-3.6-1.7 0.3-3.9 4-0.4 0.9 3.9-4 0.2 0.5-3.9 4-0.4-0.5 4-3.8-1.2 1.7-3.6 3.7 1.5-1.2 3.8-4-0.5 1.4-3.7 3.6 1.6"/>
<path class="g5" d="M1373.3 284.8l0.7-4.9-0.8-5-2.3-4.4-3.8-3.3-4.6-1.8-5 0.1-4.6 2.1-3.2 3.9-1.2 4.8 1.1 4.9 3.4 3.7 4.7 1.6 4.9-1.1 3.6-3.5"/>
<path class="y0 w5" d="M1366.2 281.9l1-4.9-1.5-4.7-4.2-2.7"/>
<path class="y1 w5" d="M1361.5 269.6l-5 0.1-4.1 2.9-1.7 4.7"/>
<path class="y2 w5" d="M1350.7 277.3l1.3 4.8 4 3.1 5 0 3.5-3.5"/>
<path class="y3 w5" d="M1364.5 281.7l-0.7-5-3.9-3.1-4.9 1.1-1.7 4.7 2.6 4.2"/>
<path class="y4 w5" d="M1355.9 283.6l4.9 1 3.8-3.4-1.3-4.8-4.6-1.9-4 3 0.4 5 4.5 2"/>
<path class="y5 w5" d="M1359.6 284.5l4.4-2.5-0.1-5-4.6-1.9-4.2 2.7 1.4 4.8 4.9 1.3 3.7-3.4-1.7-4.7-4.9 0.9 0.2 5"/>
<path class="y6 w5" d="M1358.7 281.7l4.5 2.1 2.6-4.3-2.9-4-4.3 2.6 1.6 4.8 4.6-1.9-1.9-4.6-4.9 0.9-0.7 5 5 0.3 0.7-5-5-0.9 0 5 5 0.1 0.7-4.9-4.9-1.1-2 4.6 4.9 1 1.4-4.8-4.6-2-0.5 5"/>
<path class="g6" d="M1340.2 298.9l5.8 1.3 5.2 3 3.8 4.6 1.9 5.7-0.3 6-2.7 5.4-4.6 3.7-5.9 1.4-5.8-1.4-4.5-4-1.9-5.7 1.2-5.9 4.2-4.3 5.8-1.4"/>
<path class="y0 w6" d="M1342.4 307.3l5.6 2.2 3.2 5.1-1.2 5.9"/>
<path class="y1 w6" d="M1350 320.5l-4.8 3.5-6-0.7-4.5-3.9"/>
<path class="y2 w6" d="M1334.7 319.4l-1-5.9 3.4-4.9 5.9-1.5 4.7 3.7"/>
<path class="y3 w6" d="M1347.7 310.8l0.9 5.9-3.8 4.7-6-0.1-4.1-4.3 1.2-5.9"/>
<path class="y4 w6" d="M1335.9 311.1l4.9-3.4 5.9 1.3 1.7 5.8-4.6 3.8-5.7-1.9-2-5.6 4.5-4"/>
<path class="y5 w6" d="M1340.6 307.1l5.8 1.2 2.2 5.7-4.8 3.6-4.8-3.6 2-5.7 5.9-0.9 3.7 4.8-3.2 5-5.9-0.9 0.2-6"/>
<path class="y6 w6" d="M1341.7 310.3l5.7-2 3.6 4.8-4 4.5-4.6-3.8 3.5-4.9 5 3.4-2.1 5.6-5.4-2.5 3.4-4.9 5 3.4-2.6 5.3-5.3-2.9 1.5-5.8 5.9 0.6-1.5 5.8-4.9-3.4 2.4-5.5 5.7 1.9-3.1 5.1-5.1-3.1 3.5-4.8"/>
<path class="g12" d="M1184.4 524.7l-4.7-11-1.5-11.9"/>
<path class="g11" d="M1178.2 501.8l2-10.9 0.5-11-1.3-10.9-3.2-10.5-5.1-9.8-7-8.4"/>
<path class="g9" d="M1164.1 440.3l-7.1-5.5-7.9-4.4-8.4-3.1-8.9-1.7-9 0.3-8.7 2.2"/>
<path class="g7" d="M1114.1 428.1l-6.1 3.4-5.6 4.2-4.9 5-3.9 5.8-2.7 6.5-1.1 6.9"/>
<path class="g5" d="M1089.8 459.9l0.5 4.9 1.2 4.9 2 4.6 2.7 4.2 3.5 3.6 4.2 2.7"/>
<path class="g3" d="M1103.9 484.8l2.9 0.9 2.9 0.5 3 0.1 3-0.5 2.8-1 2.5-1.6"/>
<path class="g1" d="M1121 483.2l0.7-0.8 0.6-0.8 0.4-0.9 0.3-1 0.1-1-0.2-0.9"/>
<circle class="d" cx="1128.1" cy="478.4" r="3.1"/>
<path class="g1" d="M1122.9 477.8l-0.3-1-0.6-0.8-0.8-0.6-1-0.3-1 0-0.9 0.3-0.8 0.7-0.4 0.9-0.1 1 0.4 0.9 0.8 0.7 1 0.2 0.9-0.3 0.7-0.7 0.2-1-0.3-0.9-0.8-0.6-1-0.1-0.8 0.6-0.4 0.9"/>
<circle class="f1" cx="1119.9" cy="478" r="2.6"/>
<path class="g3" d="M1121 483.2l2.1-2.2 1.4-2.7"/>
<path class="g2" d="M1124.5 478.3l0.4-1.9 0.7-1.9 1-1.7 1.3-1.5 1.7-1.2 1.8-0.8 2-0.2 2 0.3"/>
<path class="g1" d="M1135.4 469.4l0.9 0.4 0.9 0.3 1 0.2 1 0 1-0.2 0.9-0.5"/>
<circle class="d" cx="1142.1" cy="474.9" r="3.1"/>
<path class="g1" d="M1141.1 469.6l0.8-0.6 0.6-0.8 0.3-0.9 0-1-0.3-1-0.6-0.8-0.8-0.5-1-0.2-1 0.3-0.7 0.6-0.4 0.9 0 1 0.6 0.9 0.9 0.4 1 0 0.8-0.6 0.3-1-0.2-1-0.8-0.6-1-0.2"/>
<circle class="f1" cx="1139.7" cy="465.5" r="2.3"/>
<path class="g2" d="M1135.4 469.4l1.8 0.9 1.4 1.4 0.8 1.8 0.2 2-0.6 1.9-1.4 1.5-1.8 0.8-2-0.1-1.7-1-1.1-1.7 0-2 1-1.8 1.7-0.9 2 0.2 1.6 1.3 0.5 1.9-0.6 1.9-1.8 0.9-2-0.4-1.2-1.5 0-2 1.3-1.6"/>
<circle class="f2" cx="1135" cy="474.4" r="3.8"/>
<path class="g3" d="M1124.5 478.3l0.6-2.9-0.3-3-1.3-2.7-2.1-2.2-2.7-1.2-3 0-2.8 1.1-2 2.3-0.8 2.9 0.6 2.9 1.9 2.3 2.9 0.9 2.9-0.6 2.1-2.1 0.6-3-1.2-2.7-2.7-1.3-3 0.6-1.9 2.3-0.1 3 2 2.2 2.9 0.6 2.7-1.4 1.1-2.8-1.1-2.8-2.8-1.1"/>
<circle class="f3" cx="1116.3" cy="472.3" r="5.3"/>
<path class="g5" d="M1103.9 484.8l4.8 1.5 5 0.4"/>
<path class="g4" d="M1113.7 486.7l3.9-0.8 4-0.1 3.9 0.6 3.8 1.3 3.4 2.1 2.9 2.8"/>
<path class="g2" d="M1135.6 492.6l1 1.7 0.7 1.9 0.4 1.9 0 2-0.4 2-0.9 1.8-1.3 1.5-1.7 1.1"/>
<path class="g1" d="M1133.4 506.5l-0.9 0.3-0.9 0.4-0.9 0.5-0.7 0.7-0.6 0.8-0.4 0.9"/>
<circle class="d" cx="1124.1" cy="506.5" r="3"/>
<path class="g1" d="M1129 510.1l-0.2 1 0.2 1 0.3 0.9 0.7 0.8 0.8 0.5 1 0.2 1-0.2 0.8-0.5 0.6-0.8 0.1-1-0.3-1-0.7-0.7-1-0.2-0.9 0.2-0.7 0.7-0.2 1 0.4 1 0.8 0.5 1-0.1 0.7-0.7"/>
<circle class="f1" cx="1132.6" cy="511.8" r="2.2"/>
<path class="g2" d="M1133.4 506.5l-1.9 0.6-2-0.1-1.8-0.8-1.5-1.4-0.8-1.8 0-2 0.8-1.8 1.6-1.3 1.9-0.4 2 0.6 1.3 1.4 0.5 2-0.7 1.8-1.6 1.2-2 0.1-1.7-1.1-0.5-2 0.8-1.8 1.8-0.9 1.9 0.6 1.2 1.5-0.2 2"/>
<circle class="f2" cx="1130.5" cy="502.8" r="4.1"/>
<path class="g4" d="M1135.6 492.6l2 3.4 0.9 3.9"/>
<path class="g3" d="M1138.5 499.9l-0.2 3 0.2 3 0.7 2.9 1.2 2.8 1.7 2.5 2.1 2"/>
<path class="g1" d="M1144.2 516.1l0.9 0.5 0.9 0.4 1 0.2 1 0 1-0.1 0.9-0.4"/>
<circle class="d" cx="1150.7" cy="522" r="3.1"/>
<path class="g1" d="M1149.9 516.7l0.8-0.6 0.7-0.8 0.4-0.9 0.1-1-0.3-1-0.5-0.8-0.9-0.6-0.9-0.2-1 0.2-0.8 0.6-0.5 0.9 0 1 0.5 0.9 0.9 0.5 1 0 0.8-0.6 0.4-0.9-0.1-1-0.7-0.8-0.9-0.3"/>
<circle class="f1" cx="1148.8" cy="512.9" r="2.1"/>
<path class="g3" d="M1144.2 516.1l2.7 1.5 2.9 0.7"/>
<path class="g2" d="M1149.8 518.3l2-0.1 2 0.3 1.9 0.5 1.7 1 1.6 1.3 1.2 1.6 0.7 1.8 0.2 2"/>
<path class="g1" d="M1161.1 526.7l-0.2 1-0.1 1 0.1 1 0.2 1 0.5 0.9 0.6 0.7"/>
<circle class="d" cx="1157.1" cy="534.6" r="3"/>
<path class="g1" d="M1162.2 532.3l0.8 0.6 0.9 0.4 1 0.1 1-0.2 0.9-0.5 0.6-0.8 0.3-0.9-0.1-1-0.5-0.9-0.8-0.6-1-0.2-0.9 0.3-0.7 0.8-0.2 1 0.3 0.9 0.8 0.6 1 0.1 0.8-0.5 0.3-0.9-0.4-1"/>
<circle class="f1" cx="1165" cy="530.3" r="2"/>
<path class="g2" d="M1161.1 526.7l-0.4 2-1.1 1.7-1.5 1.3-1.9 0.6-2-0.1-1.8-1-1.2-1.6-0.4-1.9 0.6-1.9 1.4-1.5 1.9-0.5 1.9 0.5 1.4 1.5 0.3 2-0.9 1.8-1.8 1-1.9-0.5-1.3-1.5 0-2 1.4-1.4 2 0.1 1.4 1.5"/>
<circle class="f2" cx="1155.1" cy="527.6" r="4.1"/>
<path class="g3" d="M1149.8 518.3l3-0.1 2.8-1 2.3-1.9 1.6-2.6 0.5-2.9-0.7-3-1.8-2.4-2.6-1.4-3-0.1-2.7 1.4-1.8 2.4-0.2 3 1.3 2.7 2.6 1.5 3-0.1 2.2-2.1 0.8-2.8-1.4-2.7-2.8-1.1-2.8 1-1.4 2.6 0.5 3 2.5 1.6 2.9-0.8 1.7-2.4-1-2.9"/>
<circle class="f3" cx="1152" cy="508.2" r="6.3"/>
<path class="g4" d="M1138.5 499.9l-0.2 4-1.5 3.7-2.6 3.1-3.4 2.1-3.9 0.7-4-0.8-3.3-2.2-2.2-3.3-0.6-4 1.2-3.8 2.8-2.9 3.8-1.3 3.9 0.8 3.1 2.5"/>
<path class="y0 w4" d="M1131.6 498.5l1.3 3.8-1.2 3.8-3.4 2.2"/>
<path class="y1 w4" d="M1128.3 508.3l-3.9-0.8-2.8-2.8 0-4"/>
<path class="y2 w4" d="M1121.6 500.7l2.8-2.8 4 0.3 2.3 3.3-1.3 3.8"/>
<path class="y3 w4" d="M1129.4 505.3l-3.7 1.4-3.3-2.3-0.7-3.9 2.5-3.1 4-0.4"/>
<path class="y4 w4" d="M1128.2 497l2.8 2.9-1.2 3.8-3.9 0.9-3.2-2.4 0.6-3.9 3.5-2 3.4 2"/>
<path class="y5 w4" d="M1130.2 498.3l0.5 4-3.4 2.1-3.5-2 0.5-4 3.8-1.2 2.9 2.7-1.2 3.9-4 0-1.4-3.8 3.5-1.9"/>
<path class="y6 w4" d="M1127.9 498.1l2.3 3.3-2.5 3.1-3.8-1.5 1.1-3.9 4-0.3 0.4 4-4 0.5-1.6-3.7 3-2.6 2.2 3.4-3.7 1.5-0.6-4 4 0.4-0.9 3.9-4-0.2 0-4 4 0.3-0.4 4-3.8-1.2 2.2-3.4 2.9 2.8"/>
<path class="g5" d="M1113.7 486.7l4.9-1 4.3-2.4 3.3-3.8 1.7-4.7-0.3-5-2.3-4.4-4-3.1-4.9-0.9-4.8 1.6-3.4 3.7-0.9 4.9 1.8 4.7 4.1 2.8 5 0"/>
<path class="y0 w5" d="M1118.2 479.1l4-3 1.1-4.9-2.2-4.5"/>
<path class="y1 w5" d="M1121.1 466.7l-4.3-2.5-4.8 1.1-3.2 3.8"/>
<path class="y2 w5" d="M1108.8 469.1l-0.1 5 3.1 3.9 4.9 1.1 4-3.1"/>
<path class="y3 w5" d="M1120.7 476l0.4-5-3.2-3.7-5-0.6-3.4 3.7 0.5 5"/>
<path class="y4 w5" d="M1110 475.4l4.2 2.7 4.6-2 0.8-5-3.5-3.6-5 0.4-1.6 4.8 3.2 3.7"/>
<path class="y5 w5" d="M1112.7 476.4l5-0.6 1.5-4.8-3.9-3-4.8 1.4 0.2 5 4.6 2 3.4-3.7-3-4-4.9 0.9-0.3 5"/>
<path class="y6 w5" d="M1110.5 474.6l4.8 1.3 2.2-4.5-4.2-2.7-2.7 4.2 3.2 3.8 3.8-3.2-2.5-4.3-4.4 2.4 0.7 4.9 5 0.8 2.2-4.4-3.8-3.3-3.6 3.5 3.3 3.8 4.2-2.7-3.7-3.4-2.1 4.5 5 0.4-1.3-4.8-4.6 2 2.3 4.5"/>
<path class="g7" d="M1089.8 459.9l0.7 6.9 2.4 6.6"/>
<path class="g6" d="M1092.9 473.4l3.5 4.9 2.6 5.4 1.6 5.8 0.5 6-0.8 5.9-2.3 5.6"/>
<path class="g4" d="M1098 507l-2.5 3.1-2.9 2.8-3.4 2.1-3.7 1.5-3.9 0.7-4-0.3"/>
<path class="g2" d="M1077.6 516.9l-1.9-0.6-1.8-0.9-1.6-1.2-1.3-1.5-1-1.8-0.5-1.9 0-2 0.5-1.9"/>
<path class="g1" d="M1070 505.1l0.5-0.9 0.4-0.9 0.3-0.9 0.1-1-0.1-1-0.3-1"/>
<circle class="d" cx="1076.6" cy="498.9" r="3.1"/>
<path class="g1" d="M1070.9 499.4l-0.5-0.8-0.8-0.7-0.9-0.4-0.9-0.2-1 0.2-0.9 0.5-0.6 0.8-0.3 0.9 0.2 1 0.5 0.9 0.9 0.5 1 0 0.9-0.4 0.5-0.9 0.1-1-0.5-0.8-0.9-0.5-1 0.1-0.8 0.6-0.3 1"/>
<circle class="f1" cx="1066.7" cy="500.7" r="2.6"/>
<path class="g2" d="M1070 505.1l1.1-1.7 1.5-1.3 1.9-0.6 2 0.1 1.8 0.8 1.4 1.5 0.5 1.9-0.3 2-1.2 1.6-1.8 0.8-2-0.1-1.6-1.2-0.7-1.9 0.4-1.9 1.5-1.4 2-0.1 1.6 1.2 0.7 1.8-0.9 1.8-1.9 0.6-1.8-0.8-0.6-1.9"/>
<circle class="f2" cx="1075.9" cy="506.2" r="3.8"/>
<path class="g4" d="M1077.6 516.9l-3.8-1.2-3.3-2.3"/>
<path class="g3" d="M1070.5 513.4l-1.9-2.3-2.1-2.1-2.5-1.7-2.8-1.2-2.9-0.7-3-0.1"/>
<path class="g1" d="M1055.3 505.3l-0.9 0.2-1 0.4-0.9 0.5-0.7 0.6-0.7 0.8-0.4 0.8"/>
<circle class="d" cx="1046.7" cy="504.6" r="2.7"/>
<path class="g1" d="M1050.7 508.6l-0.2 1 0 1 0.3 1 0.6 0.8 0.8 0.6 1 0.2 1-0.1 0.9-0.5 0.6-0.8 0.2-1-0.3-0.9-0.7-0.8-0.9-0.3-1 0.2-0.7 0.7-0.3 0.9 0.3 1 0.8 0.6 1 0.1 0.8-0.5"/>
<circle class="f1" cx="1054.5" cy="511.2" r="2.3"/>
<path class="g3" d="M1055.3 505.3l-2.9 0.6-2.7 1.4"/>
<path class="g2" d="M1049.7 507.3l-1.5 1.3-1.7 1.1-1.8 0.8-2 0.4-2-0.1-1.9-0.5-1.8-0.9-1.4-1.5"/>
<path class="g1" d="M1035.6 507.9l-0.4-0.8-0.6-0.9-0.7-0.7-0.8-0.6-0.9-0.4-1-0.2"/>
<circle class="d" cx="1034.1" cy="498.9" r="2.8"/>
<path class="g1" d="M1031.2 504.3l-1 0.1-0.9 0.3-0.9 0.5-0.6 0.8-0.3 0.9 0 1 0.3 1 0.7 0.7 1 0.4 1-0.1 0.8-0.5 0.6-0.8 0-1-0.4-0.9-0.9-0.6-1 0-0.8 0.6-0.3 0.9 0.1 1 0.7 0.7"/>
<circle class="f1" cx="1030.3" cy="507.7" r="2.4"/>
<path class="g2" d="M1035.6 507.9l-0.9-1.7-0.3-2 0.4-2 1.1-1.7 1.6-1.1 2-0.4 1.9 0.4 1.6 1.3 0.8 1.8-0.2 2-1.2 1.7-1.8 0.8-2-0.3-1.5-1.4-0.4-1.9 0.7-1.9 1.5-1.2 2 0 1.6 1.3 0.3 2-1.2 1.6-2 0.2"/>
<circle class="f2" cx="1040" cy="504.1" r="4.4"/>
<path class="g3" d="M1049.7 507.3l-2.2 2-1.6 2.5-0.6 3 0.4 2.9 1.4 2.7 2.3 1.9 2.9 0.8 3-0.4 2.4-1.7 1.5-2.6 0-3-1.5-2.7-2.6-1.5-3 0.1-2.4 1.7-1.1 2.8 0.5 2.9 2.3 2.1 3 0.2 2.3-1.9 0.4-3-1.7-2.5-2.8-0.9-2.6 1.5-0.3 3 1.8 2.4"/>
<circle class="f3" cx="1053.2" cy="516.3" r="5.2"/>
<path class="g4" d="M1070.5 513.4l-2.5-3.1-1.4-3.8 0-4 1.5-3.7 2.7-2.9 3.7-1.6 4 0.2 3.5 1.9 2.3 3.3 0.4 3.9-1.6 3.7-3.3 2.3-4 0.2-3.4-2.1"/>
<path class="y0 w4" d="M1072.4 507.7l-1.6-3.7 0.5-3.9 2.6-3"/>
<path class="y1 w4" d="M1073.9 497.1l3.9-1 3.5 2 1.1 3.8"/>
<path class="y2 w4" d="M1082.4 501.9l-1.8 3.6-3.8 1.3-3.7-1.6-1.9-3.5"/>
<path class="y3 w4" d="M1071.2 501.7l1.7-3.6 3.6-1.6 3.5 1.9 1.1 3.9-2.6 3"/>
<path class="y4 w4" d="M1078.5 505.3l-4-0.1-2.3-3.3 1.1-3.9 3.7-1.6 3.6 1.7 0.6 3.9-3.1 2.7"/>
<path class="y5 w4" d="M1078.1 504.7l-3.5-1.9 0.6-3.9 3.9-0.9 2.3 3.2-2.5 3.1-3.9-0.8 0-4 3.7-1.5 1.9 3.5-3.2 2.3"/>
<path class="y6 w4" d="M1077.4 503.8l-2.5-3.1 1.8-3.6 4 0.1-0.1 4-3.7 1.4-1.9-3.5 2.7-3 3.7 1.7-2.3 3.3-3.7-1.6 1-3.9 3.9 1.1-2.1 3.4-3.5-1.9 2.3-3.3 3.7 1.6-2.9 2.8-2.3-3.3 3.6-1.6 1.1 3.9-3.9 0.9"/>
<path class="g6" d="M1098 507l-3.7 4.7-4.8 3.5"/>
<path class="g5" d="M1089.5 515.2l-4.8 1.7-4.4 2.3-4.1 2.9-3.4 3.6-2.7 4.2-1.6 4.8"/>
<path class="g3" d="M1068.5 534.7l-0.3 2.9 0.2 3 0.6 3 1.1 2.8 1.7 2.4 2.2 2.1"/>
<path class="g1" d="M1074 550.9l0.8 0.5 1 0.4 1 0.2 1 0.1 0.9-0.2 1-0.4"/>
<circle class="d" cx="1080" cy="556.9" r="2.9"/>
<path class="g1" d="M1079.7 551.5l0.8-0.5 0.6-0.8 0.4-0.9 0.1-1-0.2-1-0.6-0.8-0.8-0.6-0.9-0.2-1 0.2-0.8 0.6-0.5 0.9 0 1 0.5 0.8 0.9 0.5 1 0 0.8-0.5 0.4-0.9-0.2-1-0.8-0.6-1-0.1"/>
<circle class="f1" cx="1078.7" cy="548.1" r="2"/>
<path class="g3" d="M1074 550.9l2.6 1.5 2.9 0.8"/>
<path class="g2" d="M1079.5 553.2l2-0.1 2 0.3 1.9 0.6 1.7 0.9 1.6 1.3 1.1 1.6 0.7 1.9 0.2 2"/>
<path class="g1" d="M1090.7 561.7l-0.2 1-0.1 1 0.1 1 0.2 0.9 0.4 0.9 0.7 0.8"/>
<circle class="d" cx="1086.5" cy="569.9" r="3.2"/>
<path class="g1" d="M1091.8 567.3l0.8 0.6 0.9 0.4 1 0.1 0.9-0.2 0.9-0.5 0.7-0.7 0.3-1-0.1-1-0.5-0.9-0.8-0.6-1-0.1-0.9 0.3-0.7 0.7-0.3 1 0.4 0.9 0.7 0.7 1 0.1 0.9-0.5 0.4-0.9-0.3-1"/>
<circle class="f1" cx="1095.1" cy="565.5" r="2.1"/>
<path class="g2" d="M1090.7 561.7l-0.4 2-1.1 1.7-1.5 1.2-2 0.6-1.9-0.1-1.8-1-1.2-1.6-0.4-2 0.6-1.9 1.4-1.4 2-0.5 1.9 0.6 1.3 1.5 0.3 2-1 1.7-1.7 1-2-0.2-1.4-1.4-0.1-2 1.2-1.6 2-0.2 1.6 1.2"/>
<circle class="f2" cx="1083.7" cy="563" r="4.3"/>
<path class="g3" d="M1079.5 553.2l3-0.1 2.8-1 2.4-1.9 1.6-2.5 0.5-3-0.6-2.9-1.8-2.4-2.6-1.5-3-0.1-2.8 1.3-1.7 2.4-0.3 3 1.3 2.7 2.5 1.6 3-0.1 2.3-2 0.3-3-1.4-2.7-2.8-0.9-2.9 0.7-1.5 2.7 0.8 2.8 2.7 1.4 2.8-0.7 1.8-2.5-0.4-3"/>
<circle class="f3" cx="1081.2" cy="542.5" r="5.9"/>
<path class="g5" d="M1068.5 534.7l-0.5 4.9 1 4.9"/>
<path class="g4" d="M1069 544.5l1.9 3.6 1.3 3.7 0.7 4-0.1 4-1 3.9-1.8 3.5"/>
<path class="g2" d="M1070 567.2l-1.4 1.5-1.6 1.2-1.7 1-1.9 0.6-2 0.2-2-0.3-1.8-0.8-1.6-1.3"/>
<path class="g1" d="M1056 569.3l-0.5-0.9-0.7-0.7-0.7-0.7-0.9-0.5-1-0.3-1-0.1"/>
<circle class="d" cx="1053.2" cy="560.8" r="3"/>
<path class="g1" d="M1051.2 566.1l-0.9 0.2-1 0.3-0.7 0.7-0.6 0.8-0.2 1 0.1 1 0.4 0.9 0.8 0.6 1 0.3 1-0.2 0.8-0.5 0.4-0.9 0-1-0.5-0.9-0.9-0.4-1 0.1-0.8 0.6-0.3 1 0.2 0.9 0.7 0.7"/>
<circle class="f1" cx="1050.1" cy="569.9" r="2"/>
<path class="g2" d="M1056 569.3l-1.1-1.7-0.5-1.9 0.2-2 0.9-1.8 1.5-1.3 1.9-0.6 2 0.2 1.7 1.1 1 1.8 0 2-1 1.7-1.8 1-2-0.1-1.6-1.2-0.6-1.9 0.4-1.9 1.6-1.3 2 0 1.4 1.3 0.3 2-1 1.8-1.9 0.4"/>
<circle class="f2" cx="1060.1" cy="564.7" r="3.9"/>
<path class="g4" d="M1070 567.2l-2.8 3-3.4 2.1"/>
<path class="g3" d="M1063.8 572.3l-2.9 0.7-2.7 1.1-2.6 1.6-2.2 2-1.9 2.4-1.2 2.7"/>
<path class="g1" d="M1050.3 582.8l-0.2 1 0 1 0.1 1 0.3 1 0.5 0.8 0.6 0.8"/>
<circle class="d" cx="1046.5" cy="590.8" r="2.9"/>
<path class="g1" d="M1051.6 588.4l0.8 0.6 1 0.3 1 0.1 0.9-0.2 0.9-0.6 0.6-0.8 0.3-0.9-0.2-1-0.5-0.9-0.8-0.6-1-0.1-0.9 0.3-0.7 0.8-0.2 1 0.4 0.9 0.8 0.6 1 0.1 0.8-0.6 0.2-1-0.4-0.9"/>
<circle class="f1" cx="1054.2" cy="586.6" r="2.2"/>
<path class="g3" d="M1050.3 582.8l-0.5 3 0.2 3"/>
<path class="g2" d="M1050 588.8l0.8 1.8 0.4 2 0.1 2-0.3 2-0.7 1.8-1.1 1.7-1.5 1.3-1.9 0.8"/>
<path class="g1" d="M1045.8 602.2l-0.9 0.1-1 0.3-0.9 0.4-0.9 0.6-0.6 0.7-0.6 0.8"/>
<circle class="d" cx="1036.7" cy="601.1" r="3.2"/>
<path class="g1" d="M1040.9 605.1l-0.3 1 0 1 0.2 1 0.5 0.8 0.8 0.7 0.9 0.3 1 0 0.9-0.4 0.7-0.8 0.3-0.9-0.2-1-0.6-0.8-0.9-0.4-1 0.1-0.8 0.6-0.3 0.9 0.2 1 0.7 0.7 1 0.1 0.9-0.6"/>
<circle class="f1" cx="1043.9" cy="607.6" r="1.9"/>
<path class="g2" d="M1045.8 602.2l-1.9 0.3-2-0.4-1.7-1.1-1.2-1.5-0.6-2 0.3-2 1.1-1.6 1.8-1 1.9-0.2 1.9 0.9 1.1 1.6 0.1 2-0.9 1.8-1.8 0.9-2-0.2-1.4-1.5-0.4-1.9 0.9-1.8 1.8-0.9 2 0.3 1.1 1.6-0.2 2"/>
<circle class="f2" cx="1042.5" cy="595.4" r="4.9"/>
<path class="g3" d="M1050 588.8l1.1 2.8 1.9 2.3 2.6 1.6 2.9 0.6 3-0.5 2.5-1.6 1.7-2.5 0.5-3-1-2.8-2.1-2.2-2.9-0.8-2.9 0.8-2.1 2.1-0.6 2.9 1.1 2.8 2.5 1.6 3-0.3 2.3-2 0.5-2.9-1.4-2.7-2.9-0.7-2.6 1.5-1 2.9 1.5 2.6 2.9 0.5 2.5-1.7"/>
<circle class="f3" cx="1060.5" cy="589" r="5.9"/>
<path class="g4" d="M1063.8 572.3l-3.8 1-4-0.3-3.7-1.6-2.9-2.8-1.6-3.6-0.1-4 1.6-3.7 2.9-2.6 3.9-1.1 3.9 0.9 3 2.7 1.2 3.8-0.9 3.9-2.9 2.8"/>
<path class="y0 w4" d="M1060.4 567.7l-3.9 0.7-3.5-2-1.3-3.8"/>
<path class="y1 w4" d="M1051.7 562.6l1-3.9 3.5-1.9 4 0.4"/>
<path class="y2 w4" d="M1060.2 557.2l2.5 3.1-0.2 4-3 2.7-4-0.5"/>
<path class="y3 w4" d="M1055.5 566.5l-2.3-3.2 0.4-4 3.5-2.1 3.7 1.6 0.9 3.9"/>
<path class="y4 w4" d="M1061.7 562.7l-2.5 3.1-4-0.3-1.5-3.7 2.5-3.1 3.9 1.2 0.4 3.9-3.6 1.8"/>
<path class="y5 w4" d="M1056.9 565.6l-2.8-2.8 1.2-3.8 4-0.6 1.5 3.6-2.2 3.4-3.8-1 0.4-3.9 3.8-1.1 2 3.4-3 2.6"/>
<path class="y6 w4" d="M1058 565.4l-3.5-1.8 1.3-3.8 3.8 1.4-0.8 3.9-4-0.6 0.1-4 3.9-1.1 2.3 3.3-3.3 2.1-3-2.7 3.2-2.5 2.2 3.3-3.2 2.4-1.9-3.5 3.3-2.4 1.8 3.6-3.8 1.2-1.6-3.6 3.7-1.5 1.2 3.9-3.9-0.6"/>
<path class="g5" d="M1069 544.5l2.4 4.4 3.5 3.5 4.5 2.2 5 0.6 4.8-1.3 4.1-2.9 2.5-4.4 0.5-4.9-1.7-4.7-3.6-3.5-4.8-1.3-4.9 1.1-3.6 3.5-1.2 4.8"/>
<path class="y0 w5" d="M1076.5 541.6l1.5 4.8 4.2 2.7 5 0.2"/>
<path class="y1 w5" d="M1087.2 549.3l3.8-3.3 0.7-4.9-2.6-4.3"/>
<path class="y2 w5" d="M1089.1 536.8l-4.6-1.8-4.7 1.7-2.1 4.6 1.8 4.7"/>
<path class="y3 w5" d="M1079.5 546l4.3 2.5 4.5-2.1 2-4.6-2.4-4.4-4.9-0.9"/>
<path class="y4 w5" d="M1083 536.5l-4.1 2.9-0.2 5 3.7 3.4 4.8-1.3 1-4.9-3.9-3.2-4.4 2.5"/>
<path class="y5 w5" d="M1079.9 540.9l0.2 5 4.6 2 4.3-2.5-1.1-4.9-4.9-1.2-3.5 3.6 1.4 4.8 5 0.6 1.8-4.7-3.8-3.2"/>
<path class="y6 w5" d="M1083.9 540.4l-4.7 1.8 1.2 4.8 5 0.4 2.2-4.5-4.1-2.8-3.2 3.8 3.9 3.1 3.4-3.6-2.7-4.2-4.7 1.7 0.2 5 5-0.5-0.7-4.9-5 0.1-0.1 5 5-0.2-0.8-4.9-4.7 1.7 2.4 4.4 4.2-2.7-3.6-3.6"/>
<path class="g6" d="M1089.5 515.2l-5.7 2-6 0-5.6-2.1-4.4-4.1-2.4-5.5 0.1-6 2.8-5.4 4.9-3.4 6-0.6 5.4 2.4 3.4 5 0.2 6-3.3 5-5.6 2.2"/>
<path class="y0 w6" d="M1079.3 510.7l-5.8-1.7-3.9-4.5-0.8-6"/>
<path class="y1 w6" d="M1068.8 498.5l3.6-4.8 5.9-1.1 5.1 3.1"/>
<path class="y2 w6" d="M1083.4 495.7l1.7 5.8-2.9 5.2-5.6 2.3-5.4-2.6"/>
<path class="y3 w6" d="M1071.2 506.4l-1.6-5.8 2.9-5.3 5.9-0.6 4.6 3.9-0.9 5.9"/>
<path class="y4 w6" d="M1082.1 504.5l-5.6 2.2-4.6-3.7 0-6 5.3-2.8 4.7 3.8-1.3 5.9-5.7 1.6"/>
<path class="y5 w6" d="M1074.9 505.5l-4.8-3.6 1.9-5.6 6 0.5 1.1 5.9-5.1 3.1-4.2-4.3 3.1-5.2 5.6 2.2 0 6-5.2 2.9"/>
<path class="y6 w6" d="M1073.3 507.4l-4.7-3.8 1.9-5.7 5.6 1.9 0.3 6-6 0.4-0.2-6 6-0.1 2.1 5.6-5.2 3.1-3.4-5 4.8-3.5 4.1 4.4-5.1 3.2-2.3-5.5 5.7-1.9 1.7 5.7-6-0.2-0.1-6 5.5 2.5-3.8 4.6-3.7-4.8"/>
<path class="g9" d="M1114.1 428.1l-7.9 4.3-6.5 6.2"/>
<path class="g8" d="M1099.7 438.6l-4.1 6.9-5.1 6.2-6.1 5.1-7 4-7.6 2.3-8 0.6"/>
<path class="g6" d="M1061.8 463.7l-5.9-1.1-5.6-2-5.3-3-4.5-3.9-3.6-4.8-2.3-5.5"/>
<path class="g4" d="M1034.6 443.4l-0.6-4 0.2-4 0.8-3.9 1.5-3.7 2.4-3.2 3-2.6"/>
<path class="g2" d="M1041.9 422l1.8-0.9 1.9-0.5 2-0.2 2 0.2 1.9 0.6 1.7 1 1.4 1.5 0.9 1.8"/>
<path class="g1" d="M1055.5 425.5l0.2 0.9 0.3 1 0.5 0.9 0.6 0.8 0.7 0.6 0.9 0.5"/>
<circle class="d" cx="1054.6" cy="434.5" r="2.9"/>
<path class="g1" d="M1058.7 430.2l1 0.3 1 0 0.9-0.3 0.9-0.6 0.6-0.8 0.3-0.9-0.1-1-0.5-0.9-0.8-0.6-0.9-0.3-1 0.2-0.8 0.7-0.3 0.9 0.1 1 0.7 0.8 1 0.2 0.9-0.2 0.6-0.8 0.1-1-0.5-0.9"/>
<circle class="f1" cx="1060.5" cy="427.1" r="2.2"/>
<path class="g2" d="M1055.5 425.5l0.4 1.9-0.3 2-0.9 1.8-1.6 1.3-1.9 0.6-1.9-0.2-1.8-1-1.1-1.7-0.2-1.9 0.8-1.9 1.5-1.2 2-0.3 1.8 0.9 1.1 1.7-0.2 2-1.3 1.6-1.9 0.4-1.8-0.9-0.6-1.9 0.8-1.9 1.8-0.8 1.8 0.9"/>
<circle class="f2" cx="1049.6" cy="427.8" r="4.3"/>
<path class="g4" d="M1041.9 422l3.6-1.7 4-0.5"/>
<path class="g3" d="M1049.5 419.8l2.9 0.5 3 0.2 3-0.4 2.9-0.8 2.7-1.4 2.2-2"/>
<path class="g1" d="M1066.2 415.9l0.6-0.8 0.5-0.9 0.3-0.9 0.2-1-0.1-1-0.2-1"/>
<circle class="d" cx="1073" cy="410.4" r="3"/>
<path class="g1" d="M1067.5 410.3l-0.5-0.8-0.7-0.7-0.9-0.5-1-0.2-1 0.1-0.8 0.4-0.7 0.8-0.3 0.9 0.1 1 0.5 0.9 0.8 0.5 1 0.1 0.9-0.3 0.6-0.8 0.1-1-0.4-0.9-0.9-0.5-1 0.1-0.7 0.8-0.2 1"/>
<circle class="f1" cx="1064.2" cy="411" r="2.3"/>
<path class="g3" d="M1066.2 415.9l1.8-2.4 1.1-2.8"/>
<path class="g2" d="M1069.1 410.7l0.1-2 0.4-1.9 0.8-1.9 1.1-1.7 1.4-1.3 1.8-1.1 1.9-0.5 2 0"/>
<path class="g1" d="M1078.6 400.3l0.9 0.3 1 0.2 1 0 1-0.1 0.9-0.4 0.9-0.5"/>
<circle class="d" cx="1085.6" cy="405.2" r="2.7"/>
<path class="g1" d="M1084.3 399.8l0.7-0.7 0.4-0.9 0.2-1-0.1-1-0.4-0.9-0.7-0.7-0.9-0.4-1 0-0.9 0.4-0.7 0.7-0.3 1 0.2 0.9 0.7 0.8 0.9 0.3 1-0.2 0.7-0.7 0.2-1-0.4-0.9-0.8-0.5-1 0.1"/>
<circle class="f1" cx="1082.8" cy="396.5" r="2.1"/>
<path class="g2" d="M1078.6 400.3l1.9 0.7 1.6 1.1 1.1 1.7 0.4 2-0.3 1.9-1.1 1.7-1.7 1-2 0.2-1.9-0.7-1.3-1.6-0.3-1.9 0.8-1.9 1.6-1.2 2-0.1 1.7 1.1 0.8 1.8-0.4 2-1.5 1.4-1.9 0.2-1.7-1-0.7-1.9 1-1.8"/>
<circle class="f2" cx="1078.6" cy="406.6" r="3.6"/>
<path class="g3" d="M1069.1 410.7l0.1-3-0.7-2.9-1.8-2.4-2.5-1.7-2.9-0.5-2.9 0.7-2.3 1.9-1.2 2.8 0.3 3 1.7 2.4 2.8 1.2 3-0.5 2.1-2.1 0.5-3-1.3-2.7-2.8-1.1-2.9 0.5-1.9 2.3 0.3 3 2.3 1.9 3 0.2 2.2-2 0.1-3-1.9-2.3-3-0.4-2.2 2"/>
<circle class="f3" cx="1060.5" cy="407.3" r="5.5"/>
<path class="g4" d="M1049.5 419.8l3.9 0.7 3.5 1.9 2.6 3.1 1.4 3.7-0.2 4-1.8 3.6-3.1 2.5-3.9 0.9-3.8-1-3-2.7-1.1-3.9 1-3.8 2.9-2.8 3.9-0.7"/>
<path class="y0 w4" d="M1051.8 425.3l3.6 1.7 2.1 3.4-0.5 4"/>
<path class="y1 w4" d="M1057 434.4l-2.8 2.9-4 0.2-3.2-2.4"/>
<path class="y2 w4" d="M1047 435.1l-0.3-4 2.5-3.1 3.9-0.8 3.6 1.8"/>
<path class="y3 w4" d="M1056.7 429l0.9 3.9-2.6 3-4-0.1-2.2-3.3 1-3.9"/>
<path class="y4 w4" d="M1049.8 428.6l3.7-1.6 3.2 2.3 0.6 4-2.7 2.9-3.8-1.5-0.5-3.9 2.9-2.9"/>
<path class="y5 w4" d="M1053.2 427.9l3.7 1.6 0.3 4-3 2.6-3.8-1.4 0-4 3.5-2 3.1 2.5-1.5 3.7-4-0.3-0.9-3.9"/>
<path class="y6 w4" d="M1050.6 430.7l3.8-1.1 1.9 3.5-2.6 3-3.3-2.2 1.9-3.5 3.7 1.5-0.8 3.9-4-0.1-0.8-3.9 3.9-1.1 1.5 3.6-3.6 1.7-0.9-3.9 4-0.2 0.7 3.9-3.9 1.1-1.7-3.6 3.3-2.3 2 3.5-3.8 1.5-1.5-3.7"/>
<path class="g6" d="M1034.6 443.4l-0.8-5.9 0.9-6"/>
<path class="g5" d="M1034.7 431.5l2.3-4.4 1.5-4.8 0.9-4.9-0.1-5-1-4.9-2-4.6"/>
<path class="g3" d="M1036.3 402.9l-1.9-2.3-2.1-2.1-2.5-1.7-2.7-1.3-2.9-0.7-3-0.1"/>
<path class="g1" d="M1021.2 394.7l-1 0.3-0.9 0.3-0.9 0.5-0.8 0.7-0.6 0.7-0.4 0.9"/>
<circle class="d" cx="1012.3" cy="394.4" r="3"/>
<path class="g1" d="M1016.6 398.1l-0.2 1 0 1 0.3 1 0.6 0.8 0.9 0.5 0.9 0.3 1-0.2 0.9-0.5 0.6-0.8 0.2-1-0.3-0.9-0.7-0.8-0.9-0.3-1 0.2-0.7 0.7-0.3 1 0.4 0.9 0.7 0.7 1 0 0.9-0.6"/>
<circle class="f1" cx="1019.8" cy="400.5" r="2.2"/>
<path class="g3" d="M1021.2 394.7l-3 0.7-2.6 1.4"/>
<path class="g2" d="M1015.6 396.8l-1.4 1.4-1.7 1.2-1.8 0.8-1.9 0.5-2 0.1-2-0.4-1.8-0.9-1.4-1.3"/>
<path class="g1" d="M1001.6 398.2l-0.5-0.9-0.6-0.8-0.8-0.7-0.8-0.5-0.9-0.4-1-0.2"/>
<circle class="d" cx="999.2" cy="389.3" r="3.1"/>
<path class="g1" d="M997 394.7l-1 0.1-1 0.4-0.8 0.6-0.6 0.8-0.3 0.9 0.1 1 0.4 0.9 0.7 0.7 1 0.4 1-0.2 0.8-0.5 0.5-0.9 0-1-0.4-0.8-0.9-0.5-1 0-0.8 0.6-0.4 1 0.3 0.9 0.8 0.6"/>
<circle class="f1" cx="995.8" cy="398.5" r="2.1"/>
<path class="g2" d="M1001.6 398.2l-1-1.8-0.4-1.9 0.3-2 1-1.8 1.5-1.2 2-0.5 1.9 0.4 1.6 1.2 0.9 1.8-0.1 2-1 1.7-1.8 0.8-2-0.2-1.6-1.2-0.5-2 0.8-1.8 1.7-1.1 2 0.1 1.4 1.4 0.1 2-1.3 1.5-1.9 0.2"/>
<circle class="f2" cx="1006.1" cy="393.5" r="3.8"/>
<path class="g3" d="M1015.6 396.8l-2.2 2.1-1.4 2.7-0.4 2.9 0.5 3 1.7 2.5 2.4 1.7 3 0.6 2.9-0.7 2.2-2 1.2-2.8-0.4-2.9-1.8-2.4-2.8-1.1-2.9 0.5-2.2 2.2-0.7 2.9 1.2 2.7 2.8 1.2 2.9-0.6 1.7-2.5-0.8-2.9-2.3-1.9-3-0.1-2.1 2.1-0.1 3 2.1 2.1"/>
<circle class="f3" cx="1017.4" cy="406.6" r="5.8"/>
<path class="g5" d="M1036.3 402.9l-3.1-3.9-4-3"/>
<path class="g4" d="M1029.2 396l-3.7-1.5-3.5-2-3.1-2.5-2.5-3.1-1.8-3.6-1-3.9"/>
<path class="g2" d="M1013.6 379.4l0.1-2 0.3-1.9 0.7-1.9 1-1.7 1.4-1.5 1.7-1.1 1.9-0.6 2-0.1"/>
<path class="g1" d="M1022.7 368.6l0.9 0.3 1 0.1 1 0 1-0.2 0.9-0.4 0.8-0.6"/>
<circle class="d" cx="1030.3" cy="372.9" r="3"/>
<path class="g1" d="M1028.3 367.8l0.7-0.8 0.4-0.9 0.1-1-0.1-1-0.5-0.8-0.7-0.7-0.9-0.4-1 0.1-0.9 0.4-0.7 0.8-0.2 0.9 0.3 1 0.6 0.7 1 0.3 1-0.2 0.6-0.8 0.2-1-0.4-0.9-0.9-0.5-1 0.2"/>
<circle class="f1" cx="1026.6" cy="364.3" r="2.1"/>
<path class="g2" d="M1022.7 368.6l1.9 0.5 1.6 1.1 1.2 1.7 0.5 1.9-0.2 2-1 1.7-1.7 1.1-2 0.3-1.9-0.7-1.3-1.4-0.4-2 0.6-1.9 1.6-1.2 2-0.2 1.7 1 0.8 1.8-0.4 2-1.4 1.4-2 0.2-1.8-1-0.5-1.9 0.9-1.8"/>
<circle class="f2" cx="1023.3" cy="375.2" r="4.1"/>
<path class="g4" d="M1013.6 379.4l0.1-4 1.2-3.8"/>
<path class="g3" d="M1014.9 371.6l1.7-2.5 1.3-2.6 0.9-2.9 0.4-3-0.1-3-0.8-2.9"/>
<path class="g1" d="M1018.3 354.7l-0.5-0.8-0.6-0.8-0.7-0.7-0.8-0.6-1-0.4-0.9-0.2"/>
<circle class="d" cx="1015.8" cy="346.2" r="3.2"/>
<path class="g1" d="M1013.8 351.2l-1 0.1-1 0.3-0.8 0.6-0.6 0.8-0.3 0.9 0 1 0.4 0.9 0.7 0.7 0.9 0.4 1-0.1 0.9-0.5 0.5-0.9 0.1-1-0.5-0.8-0.9-0.6-1 0.1-0.8 0.6-0.3 0.9 0.3 1 0.7 0.7"/>
<circle class="f1" cx="1012.4" cy="354.9" r="2.3"/>
<path class="g3" d="M1018.3 354.7l-1.5-2.6-2-2.2"/>
<path class="g2" d="M1014.8 349.9l-1.7-1.1-1.5-1.3-1.3-1.5-0.9-1.8-0.5-1.9-0.1-2 0.4-2 1-1.7"/>
<path class="g1" d="M1010.2 336.6l0.7-0.7 0.7-0.8 0.5-0.9 0.3-0.9 0.1-1 0-1"/>
<circle class="d" cx="1017.9" cy="332" r="3.2"/>
<path class="g1" d="M1012.5 331.3l-0.4-0.9-0.5-0.9-0.8-0.6-0.9-0.4-1-0.1-1 0.3-0.7 0.6-0.5 0.9-0.1 1 0.3 1 0.7 0.7 1 0.2 1-0.2 0.7-0.7 0.3-0.9-0.3-1-0.8-0.6-1-0.1-0.8 0.7-0.3 0.9"/>
<circle class="f1" cx="1009" cy="331.4" r="2.1"/>
<path class="g2" d="M1010.2 336.6l1.5-1.4 1.8-0.8 2-0.2 1.9 0.5 1.6 1.3 0.9 1.8 0.1 2-0.8 1.8-1.5 1.3-2 0.4-1.9-0.7-1.3-1.5-0.2-2 0.9-1.8 1.7-1 2 0.1 1.6 1.2 0.5 2-0.8 1.8-1.8 1-2-0.2-1.4-1.5"/>
<circle class="f2" cx="1015.6" cy="338.9" r="4.5"/>
<path class="g3" d="M1014.8 349.9l-2.5-1.6-3-0.7-2.9 0.3-2.7 1.4-2 2.3-0.8 2.8 0.4 3 1.8 2.5 2.6 1.3 3-0.1 2.5-1.6 1.3-2.8-0.4-2.9-2.1-2.2-2.9-0.6-2.8 1.2-1.5 2.6 0.2 3 2.1 2.1 2.9 0.4 2.6-1.5 1.2-2.7-1-2.8-2.6-1.5-2.9 0.6-1.3 2.8"/>
<circle class="f3" cx="1007.3" cy="354.8" r="5"/>
<path class="g4" d="M1014.9 371.6l2.2-3.3 3.2-2.4 3.9-1.1 4 0.2 3.5 1.8 2.6 3 1.1 3.9-0.7 3.9-2.4 3.2-3.7 1.7-3.9-0.4-3.3-2.4-1.4-3.7 0.8-3.9"/>
<path class="y0 w4" d="M1020.8 372.1l2.8-2.8 4-0.8 3.4 2.1"/>
<path class="y1 w4" d="M1031 370.6l1.1 3.8-1.8 3.6-3.8 1.2"/>
<path class="y2 w4" d="M1026.5 379.2l-3.6-1.7-1.8-3.6 0.8-3.9 3.3-2.2"/>
<path class="y3 w4" d="M1025.2 367.8l4 0.6 2.4 3.2-1.5 3.7-3.8 1.1-3.1-2.5"/>
<path class="y4 w4" d="M1023.2 373.9l0.8-3.9 3.7-1.5 3.3 2.2-0.7 3.9-3.7 1.4-3.3-2.2 0.8-4"/>
<path class="y5 w4" d="M1024.1 369.8l3.8-1.2 3.1 2.5-0.4 4-3.9 1.1-2.8-2.8 0.8-3.9 4 0.3 1.2 3.8-3.7 1.7-3-2.6"/>
<path class="y6 w4" d="M1023.2 372.7l1-3.9 3.9 0.9-0.6 4-4 0 0.2-4 3.9-0.8 0.4 4-4 0.1-0.4-4 4-0.3-0.1 4-3.8 1-1.8-3.6 4-0.7 1.3 3.8-3.9 0.9-1.2-3.8 4 0-0.9 3.9-3.6-1.8 1.8-3.6"/>
<path class="g5" d="M1029.2 396l-4.7-1.8-5-0.2-4.7 1.6-3.8 3.3-2.1 4.5-0.1 5 2.3 4.5 4 2.9 5 0.5 4.5-2.1 2.7-4.2-0.1-5-3-4-4.9-1.3"/>
<path class="y0 w5" d="M1019.3 399.7l-4.6 1.9-2.9 4-0.2 5"/>
<path class="y1 w5" d="M1011.6 410.6l2.9 4.1 4.9 0.9 4.6-2.1"/>
<path class="y2 w5" d="M1024 413.5l1.5-4.8-2.2-4.4-4.8-1.5-4.2 2.8"/>
<path class="y3 w5" d="M1014.3 405.6l-1.2 4.8 2.3 4.5 4.9 0.8 4-3 0.1-5"/>
<path class="y4 w5" d="M1024.4 407.7l-4-3-4.7 1.9-1.2 4.8 2.9 4.1 5-0.1 2.6-4.3-3-4.1"/>
<path class="y5 w5" d="M1022 407l-4.8 1.3-0.2 5 4.6 2 3.3-3.8-1.9-4.6-5 0.7-1.2 4.8 4.4 2.3 4.2-2.7-0.7-4.9"/>
<path class="y6 w5" d="M1024.7 407.1l-4.9-1-1.1 4.9 3.8 3.2 3.4-3.7-2.7-4.3-4.3 2.4 2.7 4.2 4.8-1.4-0.5-5-5-0.2-0.2 5 5 0-1-4.9-5 0.4-0.1 5 5-0.2-1.6-4.8-3.8 3.2 3.9 3.1 2.2-4.6-4.4-2.4"/>
<path class="g6" d="M1034.7 431.5l2.7-5.3 4.1-4.4 5.3-2.8 5.9-1 5.9 1.1 5.1 3.1 3.6 4.8 1.4 5.9-1.1 5.9-3.5 4.8-5.3 2.9-6 0.2-5.3-2.7-3.4-5"/>
<path class="y0 w6" d="M1044.1 439l-0.5-6 2.7-5.3 5.5-2.3"/>
<path class="y1 w6" d="M1051.8 425.4l5.7 1.9 2.6 5.4-2.2 5.6"/>
<path class="y2 w6" d="M1057.9 438.3l-5.5 2.5-5.6-2.1-2.8-5.3 1.6-5.8"/>
<path class="y3 w6" d="M1045.6 427.6l5.4-2.6 5.7 1.9 1.9 5.7-3.1 5.2-5.9 0.9"/>
<path class="y4 w6" d="M1049.6 438.7l-3.8-4.7 2.3-5.5 5.8-1.6 4.2 4.2-1.1 5.9-5.8 1.3-3.2-5.1"/>
<path class="y5 w6" d="M1048 433.2l2.4-5.5 6-0.1 2.1 5.6-4.4 4.1-5.8-1.5 0.3-6 5.2-2.8 3.8 4.7-2.3 5.5-5.8-1.6"/>
<path class="y6 w6" d="M1049.5 435.6l-1-5.9 4.9-3.4 3.4 5-3.6 4.7-5.5-2.4 1.6-5.8 6 0.4 0.7 6-5.9 1.5-2.9-5.3 5.5-2.3 3.3 5.1-4.2 4.2-4.7-3.9 3.7-4.7 5.2 3-4.5 4-3.5-4.9 5.2-3 3.8 4.6-4.2 4.3"/>
<path class="g8" d="M1061.8 463.7l-7.8-1.5-7.2-3.5"/>
<path class="g7" d="M1046.8 458.7l-5.2-4.7-5.8-4-6.3-3-6.7-1.8-7-0.5-7 0.9"/>
<path class="g5" d="M1008.8 445.6l-4.6 1.9-4.4 2.4-3.9 3.2-3.3 3.7-2.5 4.3-1.5 4.8"/>
<path class="g3" d="M988.6 465.9l-0.3 3 0.2 3 0.6 2.9 1.2 2.8 1.7 2.4 2.1 2.1"/>
<path class="g1" d="M994.1 482.1l0.9 0.5 0.9 0.4 1 0.2 1 0 1-0.1 0.9-0.4"/>
<circle class="d" cx="1000.4" cy="488.5" r="2.9"/>
<path class="g1" d="M999.8 482.7l0.9-0.6 0.6-0.7 0.4-1 0.1-1-0.3-0.9-0.5-0.9-0.8-0.5-1-0.3-1 0.2-0.8 0.6-0.4 0.9 0 1 0.5 0.9 0.8 0.5 1 0 0.9-0.6 0.3-0.9-0.2-0.9-0.9-0.6-1 0.1"/>
<circle class="f1" cx="998.8" cy="479.6" r="2.1"/>
<path class="g3" d="M994.1 482.1l2.7 1.5 2.9 0.7"/>
<path class="g2" d="M999.7 484.3l2 0 1.9 0.2 2 0.6 1.7 0.9 1.5 1.3 1.2 1.7 0.7 1.8 0.2 2"/>
<path class="g1" d="M1010.9 492.8l-0.2 1-0.1 1 0.1 1 0.2 1 0.5 0.9 0.6 0.7"/>
<circle class="d" cx="1006.6" cy="500.9" r="3"/>
<path class="g1" d="M1012 498.4l0.8 0.7 0.9 0.3 1 0.1 1-0.2 0.8-0.5 0.7-0.7 0.3-1-0.1-1-0.5-0.9-0.8-0.6-0.9-0.1-1 0.3-0.7 0.7-0.2 1 0.3 0.9 0.8 0.7 0.9 0.1 0.9-0.5 0.4-1-0.4-0.9"/>
<circle class="f1" cx="1015.2" cy="496" r="2.4"/>
<path class="g2" d="M1010.9 492.8l-0.4 2-1.1 1.7-1.5 1.2-1.9 0.7-2-0.2-1.8-0.9-1.2-1.6-0.4-2 0.6-1.9 1.4-1.4 2-0.5 1.9 0.5 1.3 1.5 0.3 2-0.9 1.8-1.9 0.8-1.9-0.6-1.3-1.5 0-2 1.3-1.6 2-0.3 1.7 1.1"/>
<circle class="f2" cx="1006.1" cy="493.7" r="4.7"/>
<path class="g3" d="M999.7 484.3l3-0.1 2.8-1 2.3-1.8 1.6-2.6 0.5-2.9-0.6-3-1.8-2.4-2.6-1.4-3-0.1-2.8 1.3-1.7 2.4-0.3 3 1.3 2.7 2.6 1.6 3-0.2 2.2-2 0.4-3-1.4-2.6-2.6-1.5-3 0.4-2.1 2.2 0.3 2.9 2.5 1.7 2.9-0.7 1.6-2.5-0.4-3"/>
<circle class="f3" cx="1001.9" cy="472.9" r="5.2"/>
<path class="g5" d="M988.6 465.9l-0.4 5 0.8 4.9"/>
<path class="g4" d="M989 475.8l1.8 3.6 1.2 3.8 0.5 4-0.3 4-1.1 3.8-2.1 3.4"/>
<path class="g2" d="M989 498.4l-1.4 1.5-1.6 1.1-1.8 0.9-2 0.5-1.9 0-2-0.3-1.8-0.9-1.5-1.4"/>
<path class="g1" d="M975 499.8l-0.5-0.9-0.6-0.7-0.7-0.7-0.9-0.6-0.9-0.3-1-0.2"/>
<circle class="d" cx="972.6" cy="491.3" r="3.1"/>
<path class="g1" d="M970.4 496.4l-1 0.1-0.9 0.3-0.8 0.6-0.6 0.8-0.3 1 0.1 1 0.4 0.9 0.7 0.7 0.9 0.3 1-0.1 0.9-0.5 0.5-0.9 0-1-0.5-0.9-0.9-0.5-1 0.1-0.8 0.6-0.3 0.9 0.3 1 0.9 0.5"/>
<circle class="f1" cx="969.1" cy="500.4" r="2.3"/>
<path class="g2" d="M975 499.8l-1-1.7-0.4-2 0.3-2 1-1.7 1.6-1.2 1.9-0.5 2 0.3 1.6 1.2 0.9 1.8-0.1 2-1.1 1.7-1.8 0.9-2-0.2-1.5-1.3-0.6-1.9 0.6-1.9 1.6-1.3 2 0.1 1.6 1.3 0.2 2-1.3 1.5-2 0.2"/>
<circle class="f2" cx="978" cy="494.6" r="4.3"/>
<path class="g4" d="M989 498.4l-2.8 2.9-3.5 1.8"/>
<path class="g3" d="M982.7 503.1l-3 0.6-2.8 0.9-2.7 1.3-2.4 1.8-2 2.3-1.5 2.6"/>
<path class="g1" d="M968.3 512.6l-0.2 1-0.1 1 0 1 0.2 0.9 0.4 1 0.6 0.8"/>
<circle class="d" cx="964" cy="520.8" r="3.3"/>
<path class="g1" d="M969.2 518.3l0.8 0.6 0.9 0.4 1 0.2 1-0.2 0.8-0.5 0.7-0.7 0.4-0.9-0.1-1-0.4-0.9-0.8-0.7-1-0.2-0.9 0.3-0.8 0.7-0.2 0.9 0.2 1 0.8 0.7 1 0.1 0.8-0.5 0.5-0.8 0-1"/>
<circle class="f1" cx="972.6" cy="516.2" r="2"/>
<path class="g3" d="M968.3 512.6l-0.7 2.9 0 3"/>
<path class="g2" d="M967.6 518.5l0.6 1.9 0.3 2 0 2-0.4 1.9-0.8 1.9-1.3 1.5-1.6 1.2-1.8 0.8"/>
<path class="g1" d="M962.6 531.7l-1 0-1 0.2-1 0.4-0.8 0.5-0.8 0.6-0.6 0.9"/>
<circle class="d" cx="953.6" cy="529.9" r="3.1"/>
<path class="g1" d="M957.4 534.3l-0.3 0.9-0.1 1 0.1 1 0.5 0.8 0.7 0.7 0.9 0.4 1 0.1 1-0.4 0.7-0.7 0.3-0.9-0.1-1-0.5-0.8-0.9-0.5-1 0-0.8 0.6-0.4 0.9 0.2 1 0.7 0.7 1 0 0.8-0.5"/>
<circle class="f1" cx="960.3" cy="536.3" r="2.3"/>
<path class="g2" d="M962.6 531.7l-2 0.1-2-0.5-1.6-1.2-1.1-1.7-0.4-1.9 0.4-2 1.2-1.6 1.8-0.9 2 0 1.7 1 1.1 1.7 0 2-1.1 1.7-1.8 0.8-2-0.3-1.2-1.6-0.2-2 1.2-1.6 1.9-0.5 1.9 0.7 1.1 1.7-0.2 1.9"/>
<circle class="f2" cx="959.7" cy="526.5" r="4.7"/>
<path class="g3" d="M967.6 518.5l0.9 2.9 1.8 2.4 2.5 1.7 2.9 0.7 3-0.5 2.5-1.6 1.6-2.5 0.4-3-1.1-2.8-2.3-1.9-2.9-0.5-2.8 1.1-1.8 2.4 0 3 1.7 2.5 2.8 1 2.9-0.8 1.6-2.6-0.1-3-1.9-2.3-3-0.5-2.5 1.5-1 2.9 1.2 2.7 2.9 0.8 2.6-1.4"/>
<circle class="f3" cx="976.4" cy="518.7" r="5.5"/>
<path class="g4" d="M982.7 503.1l-4 0.7-3.9-0.5-3.6-1.8-2.7-2.9-1.5-3.8 0-4 1.6-3.6 3-2.7 3.9-1 3.9 0.7 3.1 2.6 1.5 3.7-0.6 4-2.6 3"/>
<path class="y0 w4" d="M980.8 497.5l-3.8 1.2-3.9-0.9-2.4-3.3"/>
<path class="y1 w4" d="M970.7 494.5l0.6-3.9 3-2.7 4 0"/>
<path class="y2 w4" d="M978.3 487.9l2.8 2.8 0.2 4-3 2.7-3.9 0.1"/>
<path class="y3 w4" d="M974.4 497.5l-2.6-3.1 0.4-3.9 3.2-2.4 3.8 1.2 0.8 3.9"/>
<path class="y4 w4" d="M980 493.2l-3 2.7-3.7-1.5-0.5-3.9 3.5-2.1 3.2 2.5 0.1 4-3.1 2.5"/>
<path class="y5 w4" d="M976.5 497.4l-3.8-1.4-0.6-3.9 3.5-1.9 3.2 2.4-0.7 3.9-4 0.8-2.1-3.4 1.8-3.6 3.7 1.4-1 3.9"/>
<path class="y6 w4" d="M976.5 495.6l-4-0.4-0.7-3.9 3.9-1 1.2 3.8-3.8 1.4-2.6-3 3.2-2.5 3.4 2.1-2.2 3.3-3.4-2.1 2.7-2.9 2.2 3.3-3 2.7-2.8-2.9 3.2-2.4 1.7 3.6-3.3 2.3-1.2-3.8 4 0.4-2 3.5-3.5-2"/>
<path class="g5" d="M989 475.8l2.2 4.5 3.5 3.6 4.5 2.2 4.9 0.6 4.8-1.3 4-3.1 2.3-4.4 0.2-5-2.1-4.5-4-3.1-5-0.6-4.6 1.9-2.8 4.2-0.2 5"/>
<path class="y0 w5" d="M996.7 475.8l2.7 4.1 4.7 2 4.8-1.4"/>
<path class="y1 w5" d="M1008.9 480.5l3-3.9 0.5-5-2.8-4.2"/>
<path class="y2 w5" d="M1009.6 467.4l-5-0.7-4.3 2.5-1.5 4.8 2.2 4.4"/>
<path class="y3 w5" d="M1001 478.4l4.8 1.7 4.5-2.2 0.8-5-3.6-3.4-5 0.4"/>
<path class="y4 w5" d="M1002.5 469.9l-2.5 4.4 2.6 4.2 5-0.1 1.9-4.7-3-4-5 0.2-2.4 4.4"/>
<path class="y5 w5" d="M999.1 474.3l2.1 4.5 4.9 0.9 2.9-4-2.8-4.1-5 0.1-2.5 4.3 2.7 4.2 4.9-0.8 1-4.9-4-3"/>
<path class="y6 w5" d="M1003.3 471.5l-4.2 2.6 2.2 4.5 4.8-1.2-0.3-5-4.9-0.9-2.4 4.4 4.2 2.7 2.5-4.3-3.9-3.1-2.9 4.1 3.3 3.7 3.6-3.5-3.1-3.9-4.2 2.6 3 3.9 3.1-3.9-3.1-3.9-2.8 4.2 4.7 1.7 2.2-4.5-4.8-1.7"/>
<path class="g7" d="M1008.8 445.6l-6.5 2.6-5.6 4.2"/>
<path class="g6" d="M996.7 452.4l-3.6 4.8-4.3 4.2-4.9 3.4-5.5 2.3-5.9 1.2-6-0.2"/>
<path class="g4" d="M966.5 468.1l-3.9-1.1-3.6-1.7-3.3-2.3-2.7-2.9-2.1-3.4-1.2-3.8"/>
<path class="g2" d="M949.7 452.9l-0.1-2 0.2-2 0.6-1.9 1-1.7 1.3-1.6 1.6-1.1 1.8-0.8 2-0.1"/>
<path class="g1" d="M958.1 441.7l1 0.2 1 0 1 0 1-0.3 0.9-0.4 0.7-0.6"/>
<circle class="d" cx="966.2" cy="446" r="3"/>
<path class="g1" d="M963.7 440.6l0.7-0.8 0.3-1 0.1-1-0.2-0.9-0.5-0.9-0.7-0.6-1-0.3-1 0-0.9 0.5-0.6 0.8-0.1 1 0.3 1 0.7 0.6 1 0.3 0.9-0.3 0.7-0.8 0-1-0.4-0.9-0.9-0.4-1 0.3"/>
<circle class="f1" cx="961.9" cy="437.1" r="2"/>
<path class="g2" d="M958.1 441.7l2 0.4 1.7 1 1.3 1.6 0.6 1.9-0.2 2-0.9 1.7-1.6 1.2-2 0.4-1.9-0.5-1.4-1.5-0.5-1.9 0.5-1.9 1.5-1.3 2-0.3 1.8 0.9 0.8 1.8-0.6 1.9-1.7 1-2-0.1-1.4-1.5 0.2-2 1.6-1.2"/>
<circle class="f2" cx="958.7" cy="447.9" r="3.7"/>
<path class="g4" d="M949.7 452.9l-0.2-4 1-3.9"/>
<path class="g3" d="M950.5 445l1.6-2.5 1.3-2.7 0.8-2.9 0.3-3-0.4-3-0.9-2.8"/>
<path class="g1" d="M953.2 428.1l-0.6-0.9-0.6-0.7-0.8-0.7-0.8-0.5-1-0.3-1-0.1"/>
<circle class="d" cx="950.6" cy="419.5" r="2.9"/>
<path class="g1" d="M948.4 424.9l-0.9 0.1-1 0.4-0.8 0.6-0.5 0.8-0.3 1 0.1 1 0.5 0.9 0.7 0.6 1 0.3 1-0.1 0.8-0.6 0.5-0.9 0-1-0.6-0.8-0.9-0.5-1 0.1-0.7 0.6-0.3 1 0.3 1 0.8 0.6"/>
<circle class="f1" cx="948.2" cy="428.7" r="2.2"/>
<path class="g3" d="M953.2 428.1l-1.6-2.6-2.2-2"/>
<path class="g2" d="M949.4 423.5l-1.8-0.9-1.7-1.1-1.4-1.4-1.1-1.7-0.8-1.8-0.2-2 0.2-2 0.8-1.8"/>
<path class="g1" d="M943.4 410.8l0.6-0.8 0.6-0.8 0.4-1 0.2-0.9 0-1-0.2-1"/>
<circle class="d" cx="951.1" cy="405.9" r="2.8"/>
<path class="g1" d="M945 405.3l-0.4-0.9-0.6-0.8-0.9-0.5-0.9-0.3-1 0-0.9 0.4-0.8 0.7-0.3 0.9 0 1 0.4 0.9 0.8 0.6 1 0.2 0.9-0.3 0.7-0.8 0.1-0.9-0.3-1-0.9-0.5-1 0.1-0.7 0.7 0 1"/>
<circle class="f1" cx="942" cy="405.5" r="2.3"/>
<path class="g2" d="M943.4 410.8l1.3-1.6 1.7-1 1.9-0.4 2 0.4 1.7 1 1.1 1.7 0.3 2-0.5 1.9-1.4 1.4-1.9 0.6-2-0.4-1.4-1.4-0.5-2 0.7-1.9 1.6-1.1 2 0.1 1.5 1.2 0.6 1.9-0.9 1.8-1.9 0.6-1.7-1-0.8-1.9"/>
<circle class="f2" cx="949.6" cy="412.6" r="3.8"/>
<path class="g3" d="M949.4 423.5l-2.7-1.3-3-0.4-2.9 0.7-2.5 1.6-1.7 2.5-0.5 3 0.8 2.8 2 2.3 2.8 1 3-0.5 2.2-2 0.9-2.8-0.8-2.9-2.4-1.9-3-0.1-2.5 1.6-1 2.8 1.2 2.8 2.6 1.5 3-0.3 2.2-2.1 0.5-2.9-1.8-2.4-3-0.2-2.1 2.1-0.3 3"/>
<circle class="f3" cx="944.8" cy="430.5" r="5.9"/>
<path class="g4" d="M950.5 445l2.2-3.3 3.1-2.6 3.7-1.3 4 0.2 3.7 1.6 2.7 3 1.1 3.8-0.6 4-2.4 3.2-3.6 1.7-4-0.4-3.2-2.3-1.5-3.7 0.9-3.9"/>
<path class="y0 w4" d="M956.6 445l2.9-2.8 3.9-0.7 3.7 1.6"/>
<path class="y1 w4" d="M967.1 443.1l1.9 3.5-1.1 3.8-3.5 1.9"/>
<path class="y2 w4" d="M964.4 452.3l-3.8-1.2-1.6-3.7 1.8-3.5 3.9-1"/>
<path class="y3 w4" d="M964.7 442.9l3.6 1.7 1.3 3.8-2.3 3.3-4 0.2-2.3-3.2"/>
<path class="y4 w4" d="M961 448.7l1.2-3.9 4-0.6 3 2.6-1.1 3.8-3.7 1.5-3.3-2.2 1-3.9"/>
<path class="y5 w4" d="M962.1 446l3.9-1.1 2.8 2.8-1.4 3.7-3.8 1.1-2.9-2.8 1.5-3.8 3.9-0.7 1.7 3.7-3.4 2.1-3.4-2.1"/>
<path class="y6 w4" d="M961 448.9l1.9-3.5 3.9 0.9-0.4 3.9-3.9 1.2-2-3.5 3-2.6 3.4 2.2-2.4 3.2-3.7-1.6 1.4-3.7 4 0.4-0.3 4-4 0.4-1.2-3.8 3.9-0.9 0.5 4-4 0.3 1.1-3.8 3.5 1.9-2.5 3.1-3.3-2.3"/>
<path class="g6" d="M966.5 468.1l-5.8-1.6-5.1-3.1"/>
<path class="g5" d="M955.6 463.4l-3.4-3.7-3.9-3.1-4.4-2.5-4.7-1.8-4.9-0.7-5 0.2"/>
<path class="g3" d="M929.3 451.8l-2.9 0.9-2.7 1.2-2.5 1.7-2.2 2-1.7 2.5-1.2 2.7"/>
<path class="g1" d="M916.1 462.8l-0.1 1-0.1 1 0.2 1 0.3 1 0.5 0.8 0.7 0.8"/>
<circle class="d" cx="912.8" cy="471.1" r="3.1"/>
<path class="g1" d="M917.6 468.4l0.8 0.5 1 0.3 1 0.1 0.9-0.3 0.8-0.5 0.6-0.9 0.3-0.9-0.2-1-0.5-0.9-0.8-0.5-1-0.1-1 0.4-0.6 0.7-0.2 1 0.4 0.9 0.8 0.6 1 0.1 0.8-0.7 0.3-0.9-0.4-0.9"/>
<circle class="f1" cx="920.2" cy="466.1" r="2.1"/>
<path class="g3" d="M916.1 462.8l-0.4 3 0.3 3"/>
<path class="g2" d="M916 468.8l0.8 1.8 0.4 2 0.2 2-0.3 1.9-0.7 1.9-1.1 1.7-1.5 1.3-1.8 0.9"/>
<path class="g1" d="M912 482.3l-0.9 0.1-1 0.3-0.9 0.5-0.8 0.5-0.7 0.8-0.5 0.8"/>
<circle class="d" cx="903.6" cy="481" r="2.6"/>
<path class="g1" d="M907.2 485.3l-0.3 1 0 1 0.2 0.9 0.5 0.9 0.8 0.6 1 0.3 1 0 0.9-0.4 0.6-0.8 0.3-1-0.2-0.9-0.6-0.8-0.9-0.4-1 0.1-0.8 0.6-0.3 1 0.2 0.9 0.8 0.7 1 0.1 0.9-0.5"/>
<circle class="f1" cx="910.6" cy="487.9" r="2.4"/>
<path class="g2" d="M912 482.3l-1.9 0.3-2-0.4-1.7-1-1.3-1.5-0.5-2 0.2-1.9 1.1-1.7 1.7-1.1 2-0.1 1.8 0.8 1.2 1.6 0.1 2-0.9 1.8-1.8 0.9-1.9-0.2-1.6-1.2-0.4-2 0.9-1.8 1.7-1 2 0.6 1 1.7-0.5 1.9"/>
<circle class="f2" cx="908.7" cy="476.9" r="3.8"/>
<path class="g3" d="M916 468.8l1.1 2.7 2 2.3 2.6 1.6 2.9 0.5 3-0.5 2.5-1.7 1.6-2.5 0.4-3-1-2.8-2.1-2.1-2.9-0.8-2.9 0.8-2.1 2.2-0.6 3 1.2 2.7 2.6 1.6 3-0.2 2.3-1.9 0.8-2.9-1.6-2.6-2.8-1.1-2.8 1.2-0.8 2.8 1.4 2.7 2.9 0.7 2.6-1.5"/>
<circle class="f3" cx="927.6" cy="469.8" r="6.7"/>
<path class="g5" d="M929.3 451.8l-4.8 1.4-4.3 2.6"/>
<path class="g4" d="M920.2 455.8l-2.8 2.8-3.2 2.4-3.6 1.8-3.9 1-4 0.2-3.9-0.7"/>
<path class="g2" d="M898.8 463.3l-1.8-0.8-1.7-1.1-1.4-1.4-1.2-1.6-0.8-1.9-0.3-1.9 0.2-2 0.7-1.9"/>
<path class="g1" d="M892.5 450.7l0.6-0.8 0.6-0.8 0.3-0.9 0.2-1 0-1-0.2-1"/>
<circle class="d" cx="899.3" cy="445.5" r="3"/>
<path class="g1" d="M894 445.2l-0.4-0.9-0.7-0.8-0.8-0.5-1-0.2-1 0-0.9 0.4-0.7 0.7-0.4 1 0.1 1 0.4 0.9 0.8 0.6 1 0.1 1-0.3 0.6-0.8 0.2-1-0.4-0.9-0.9-0.5-1 0-0.8 0.6-0.2 1"/>
<circle class="f1" cx="890.6" cy="445.4" r="2.2"/>
<path class="g2" d="M892.5 450.7l1.3-1.5 1.7-1.1 1.9-0.4 2 0.3 1.7 1 1.2 1.6 0.3 2-0.5 1.9-1.4 1.5-1.9 0.6-1.9-0.4-1.5-1.3-0.5-2 0.6-1.9 1.6-1.2 2 0.1 1.4 1.4 0.5 2-1 1.7-1.9 0.6-1.8-0.9-0.7-1.9"/>
<circle class="f2" cx="897.7" cy="453.7" r="4.1"/>
<path class="g4" d="M898.8 463.3l-3.7-1.6-3-2.6"/>
<path class="g3" d="M892.1 459.1l-1.6-2.6-1.9-2.3-2.3-1.9-2.6-1.5-2.8-1-3-0.4"/>
<path class="g1" d="M877.9 449.4l-1 0.1-1 0.2-0.9 0.4-0.8 0.5-0.7 0.7-0.6 0.8"/>
<circle class="d" cx="869.4" cy="447.4" r="2.6"/>
<path class="g1" d="M872.9 452.1l-0.3 1-0.1 1 0.2 1 0.5 0.8 0.7 0.7 1 0.4 1 0 0.9-0.4 0.7-0.8 0.3-0.9-0.1-1-0.6-0.8-0.9-0.4-1 0-0.8 0.6-0.4 1 0.2 0.9 0.8 0.7 1 0.1 0.8-0.6"/>
<circle class="f1" cx="875.9" cy="454.3" r="1.9"/>
<path class="g3" d="M877.9 449.4l-3 0.3-2.8 1"/>
<path class="g2" d="M872.1 450.7l-1.6 1.1-1.8 0.9-2 0.5-2 0.2-1.9-0.3-1.9-0.7-1.6-1.2-1.3-1.6"/>
<path class="g1" d="M858 449.6l-0.3-0.9-0.5-0.9-0.6-0.8-0.7-0.7-0.9-0.5-0.9-0.3"/>
<circle class="d" cx="857.3" cy="440.6" r="3"/>
<path class="g1" d="M854.1 445.5l-1-0.1-1 0.2-0.9 0.5-0.7 0.7-0.5 0.8-0.1 1 0.3 1 0.6 0.8 0.9 0.5 1 0 0.9-0.3 0.6-0.8 0.2-1-0.3-0.9-0.8-0.7-1-0.1-0.9 0.5-0.5 0.9 0.2 0.9 0.6 0.8"/>
<circle class="f1" cx="853" cy="448.9" r="2.3"/>
<path class="g2" d="M858 449.6l-0.6-1.8-0.1-2 0.6-1.9 1.3-1.6 1.7-0.9 2-0.2 1.9 0.7 1.4 1.4 0.6 1.9-0.5 2-1.3 1.5-1.9 0.6-2-0.6-1.3-1.5-0.2-2 1.2-1.6 1.8-0.8 1.9 0.5 1.3 1.6-0.2 2-1.4 1.4-2 0.3"/>
<circle class="f2" cx="862.6" cy="446.4" r="3.6"/>
<path class="g3" d="M872.1 450.7l-2.5 1.7-1.8 2.4-0.9 2.8 0 3 1.2 2.7 2.2 2.1 2.8 1 3-0.3 2.5-1.6 1.5-2.6 0.1-3-1.5-2.6-2.7-1.4-3 0.2-2.3 1.9-0.8 2.9 1.3 2.7 2.8 1.2 2.9-0.8 1.4-2.6-0.9-2.9-2.8-1.1-2.7 1.2-0.8 3 1.4 2.6 3 0.4"/>
<circle class="f3" cx="873.9" cy="460" r="5.5"/>
<path class="g4" d="M892.1 459.1l-2.1-3.4-0.9-3.9 0.6-4 2.2-3.3 3.3-2.2 4-0.6 3.7 1.4 2.7 3.1 0.7 3.9-1.5 3.7-3.2 2.3-4 0.1-3.3-2.4-1.1-3.8"/>
<path class="y0 w4" d="M893.2 450l1.6-3.7 3.5-1.8 4 0.5"/>
<path class="y1 w4" d="M902.3 445l2.8 2.8 0.3 4-2.6 3"/>
<path class="y2 w4" d="M902.8 454.8l-4 0.2-2.8-2.9 0-4 3-2.7"/>
<path class="y3 w4" d="M899 445.4l3.9 0.6 2.2 3.4-1 3.9-3.7 1.6-3.3-2.1"/>
<path class="y4 w4" d="M897.1 452.8l-0.9-3.9 2.4-3.2 4 0.2 2.4 3.2-1.6 3.7-4-0.2-1.4-3.7"/>
<path class="y5 w4" d="M898 448.9l2.2-3.4 4 0.6 1.5 3.7-2.7 2.9-3.6-1.9 0.8-3.9 4-0.6 2.5 3.2-1.9 3.5-3.8-1.3"/>
<path class="y6 w4" d="M901 451.7l0.4-4 3.9-0.7 1.5 3.7-3.1 2.6-2.9-2.7 2.3-3.2 3.5 1.9-1.7 3.6-3.4-2.1 2.6-3.1 3.6 1.7-1.2 3.8-3.8-1.1 0.3-4 3.7 1.6-2.5 3-3.6-1.9 2.6-3.1 2.6 3-2.6 3-1.5-3.7"/>
<path class="g5" d="M920.2 455.8l-3.5 3.5-2.3 4.5-0.8 4.9 1 4.9 2.7 4.2 4.1 2.9 4.9 1 4.9-1.2 3.8-3.2 2-4.5-0.5-5-2.8-4.1-4.6-2-4.9 0.7"/>
<path class="y0 w5" d="M924.2 462.4l-3.8 3.3-0.8 4.9 2.5 4.4"/>
<path class="y1 w5" d="M922.1 475l4.5 2.1 4.9-1.1 3-4"/>
<path class="y2 w5" d="M934.5 472l-0.1-5-3.2-3.8-5 0-3.6 3.4"/>
<path class="y3 w5" d="M922.6 466.6l0 5 4 3.1 4.9-0.6 2.8-4.1-1.6-4.7"/>
<path class="y4 w5" d="M932.7 465.3l-5-0.9-3.8 3.3 0 5 4.2 2.7 4.5-2.1 1.3-4.8-2.9-4.1"/>
<path class="y5 w5" d="M931 464.4l-4.9 1-1.9 4.7 4 3.1 4.6-2 0.9-4.9-4.3-2.5-3.9 3.1 2.4 4.4 4.6-1.8-1.3-4.8"/>
<path class="y6 w5" d="M931.2 464.7l-5 0.7 0.4 5 5 0.2 2-4.6-4.2-2.7-2.6 4.2 3.7 3.5 4.3-2.6-1.9-4.6-5 0.1-0.4 5 4.9-0.3-1-4.9-4.9 0.7 0.4 4.9 5-0.5-0.5-4.9-5 0.6 1.6 4.8 4.3-2.7-4.2-2.8"/>
<path class="g6" d="M955.6 463.4l-4.1-4.4-2.4-5.5-0.3-6 2-5.7 4.2-4.3 5.5-2.2 6 0.5 5.1 3.3 2.7 5.3-0.3 6-3.4 4.9-5.6 2.2-5.8-1.4-3.9-4.5"/>
<path class="y0 w6" d="M955.3 451.6l-0.3-6 3.2-5.1 5.7-1.8"/>
<path class="y1 w6" d="M963.9 438.7l5.4 2.6 2.4 5.5-1.7 5.8"/>
<path class="y2 w6" d="M970 452.6l-4.8 3.6-5.9-1.2-3.5-4.9 0.5-6"/>
<path class="y3 w6" d="M956.3 444.1l4.9-3.5 5.8 1.5 1.8 5.7-3.8 4.7-6-0.2"/>
<path class="y4 w6" d="M959 452.3l-3.3-5 2.2-5.5 6-1 3.5 4.9-2.3 5.5-6 0.4-4.1-4.4"/>
<path class="y5 w6" d="M955 447.2l3-5.3 5.8 1.3 1.2 5.9-4.3 4.2-5.5-2.4 0.3-6 5.7-2.1 2.9 5.2-4.7 3.6-4.2-4.3"/>
<path class="y6 w6" d="M955.2 447.3l3.2-5.1 5.8 1.7 0.5 6-5.7 1.8-2.5-5.4 5-3.4 3.9 4.5-4.4 4-3.6-4.8 5.2-3 3.7 4.7-4.6 3.8-3.4-4.9 4-4.5 4.9 3.4-4.4 4.1-2.7-5.4 4.8-3.6 3 5.2-5 3.4-1.9-5.7"/>
<path class="g11" d="M1164.1 440.3l-8.7-6.7-10.2-4.1"/>
<path class="g10" d="M1145.2 429.5l-10-0.7-9.7-2.4-9.2-3.9-8.3-5.7-6.9-7.2-5.1-8.6"/>
<path class="g8" d="M1096 401l-2.3-7.7-1.1-7.9 0.4-8 1.8-7.8 3.5-7.2 5.1-6.2"/>
<path class="g6" d="M1103.4 356.2l4.8-3.5 5.4-2.7 5.7-1.7 6-0.6 6 0.8 5.5 2.1"/>
<path class="g4" d="M1136.8 350.6l3.2 2.4 2.8 2.9 2.2 3.4 1.6 3.7 0.7 3.9-0.3 4"/>
<path class="g2" d="M1147 370.9l-0.7 1.9-0.9 1.7-1.3 1.6-1.5 1.3-1.8 0.9-1.9 0.5-2 0-1.9-0.6"/>
<path class="g1" d="M1135 378.2l-0.9-0.5-0.9-0.5-0.9-0.3-1-0.1-1 0.1-1 0.3"/>
<circle class="d" cx="1129.1" cy="371.6" r="3"/>
<path class="g1" d="M1129.3 377.2l-0.8 0.5-0.7 0.7-0.5 0.9-0.1 1 0.1 1 0.5 0.8 0.8 0.7 0.9 0.3 1-0.1 0.9-0.6 0.5-0.8 0.1-1-0.5-0.9-0.8-0.6-1-0.1-0.9 0.5-0.4 0.9 0.1 1 0.8 0.7 1 0.1"/>
<circle class="f1" cx="1129.7" cy="380.8" r="2.3"/>
<path class="g2" d="M1135 378.2l-1.7-1.1-1.2-1.6-0.6-1.9 0.1-2 0.9-1.8 1.5-1.3 2-0.5 1.9 0.4 1.6 1.2 0.8 1.8-0.2 2-1.3 1.6-1.8 0.7-2-0.5-1.3-1.5-0.3-2 1.1-1.7 1.8-0.7 1.9 0.7 1.1 1.6-0.1 2-1.4 1.5"/>
<circle class="f2" cx="1136.5" cy="373.2" r="3.8"/>
<path class="g4" d="M1147 370.9l-1.4 3.8-2.3 3.2"/>
<path class="g3" d="M1143.3 377.9l-2.5 1.7-2.1 2.1-1.9 2.4-1.3 2.6-0.9 2.9-0.1 3"/>
<path class="g1" d="M1134.5 392.6l0.2 1 0.3 0.9 0.5 0.9 0.6 0.8 0.8 0.6 0.9 0.5"/>
<circle class="d" cx="1133.7" cy="401.7" r="2.9"/>
<path class="g1" d="M1137.8 397.3l0.9 0.2 1 0 1-0.3 0.8-0.6 0.6-0.8 0.3-0.9-0.2-1-0.4-0.9-0.8-0.6-1-0.2-1 0.2-0.7 0.7-0.4 0.9 0.2 1 0.7 0.7 1 0.3 0.9-0.3 0.5-0.9-0.1-0.9-0.7-0.8"/>
<circle class="f1" cx="1139.6" cy="394.4" r="2.1"/>
<path class="g3" d="M1134.5 392.6l0.6 3 1.3 2.6"/>
<path class="g2" d="M1136.4 398.2l1.4 1.5 1.2 1.6 0.9 1.8 0.4 1.9 0.1 2-0.4 2-0.9 1.8-1.3 1.5"/>
<path class="g1" d="M1137.8 412.3l-0.9 0.5-0.8 0.6-0.7 0.7-0.5 0.8-0.4 1-0.2 0.9"/>
<circle class="d" cx="1129" cy="414.4" r="2.9"/>
<path class="g1" d="M1134.3 416.8l0.1 1 0.4 1 0.6 0.8 0.8 0.6 0.9 0.3 1-0.1 0.9-0.4 0.7-0.7 0.4-1-0.2-1-0.5-0.8-0.9-0.5-1 0-0.8 0.5-0.5 0.8 0 1 0.6 0.8 1 0.4 0.9-0.4 0.5-0.8"/>
<circle class="f1" cx="1137.4" cy="417.3" r="2.6"/>
<path class="g2" d="M1137.8 412.3l-1.8 0.9-1.9 0.4-2-0.3-1.7-0.9-1.3-1.6-0.5-2 0.4-1.9 1.2-1.6 1.8-0.9 2 0.1 1.7 1.1 0.9 1.8-0.3 1.9-1.2 1.6-2 0.5-1.9-0.6-1.2-1.5 0-2 1.3-1.5 2-0.3 1.7 1 0.3 2"/>
<circle class="f2" cx="1132.4" cy="407.9" r="4"/>
<path class="g3" d="M1136.4 398.2l2.1 2.2 2.7 1.4 3 0.4 2.9-0.7 2.4-1.8 1.6-2.6 0.2-2.9-1-2.9-2.3-1.9-2.9-0.7-2.9 1-1.9 2.3-0.3 3 1.4 2.6 2.7 1.3 2.9-0.6 2-2.3 0.4-3-1.7-2.4-2.8-1.1-2.8 1.2-1.1 2.8 1.4 2.6 3 0.6 2.3-1.9 0.4-2.9"/>
<circle class="f3" cx="1144.5" cy="393.8" r="5.9"/>
<path class="g4" d="M1143.3 377.9l-3.3 2.3-3.8 1.2-4-0.2-3.6-1.7-2.8-2.9-1.4-3.7 0.4-4 2-3.4 3.4-2.1 4-0.2 3.6 1.8 2.1 3.4 0 4-2.2 3.3"/>
<path class="y0 w4" d="M1137.7 375.7l-3.8 1.4-3.8-1.1-2.4-3.2"/>
<path class="y1 w4" d="M1127.7 372.8l-0.2-4 2.5-3.1 4-0.5"/>
<path class="y2 w4" d="M1134 365.2l3.3 2.2 0.5 4-2.3 3.2-3.9 1"/>
<path class="y3 w4" d="M1131.6 375.6l-3.5-2-0.7-4 2.2-3.3 3.9-0.8 3.3 2.3"/>
<path class="y4 w4" d="M1136.8 367.8l0.2 4-2.9 2.8-3.9-0.5-2-3.5 2.4-3.2 3.8 1.1 0.8 3.9"/>
<path class="y5 w4" d="M1135.2 372.4l-3.5 2-3.1-2.6 1.4-3.7 3.9-0.9 2.9 2.8-1 3.8-4-0.1-1.3-3.8 3.2-2.5 2.9 2.8"/>
<path class="y6 w4" d="M1136.6 370.2l-1.7 3.6-4 0.1 0-4 4-0.4 0 4-3.9 0.5-1-3.9 3.6-1.6 2.2 3.3-3 2.6-2.2-3.3 3.1-2.4 2.5 3.1-3.5 1.8-2.2-3.4 3.9-1 1.5 3.7-3.3 2.2-1-3.9 4-0.1-1.6 3.7"/>
<path class="g6" d="M1136.8 350.6l4.8 3.7 3.5 4.8"/>
<path class="g5" d="M1145.1 359.1l1.5 4.8 2.1 4.6 2.7 4.1 3.5 3.6 4.1 2.9 4.6 1.9"/>
<path class="g3" d="M1163.6 381l3 0.5 3 0 3-0.4 2.8-0.9 2.6-1.5 2.2-2"/>
<path class="g1" d="M1180.2 376.7l0.6-0.8 0.4-0.9 0.3-1 0.2-1-0.1-1-0.3-0.9"/>
<circle class="d" cx="1187.2" cy="370.7" r="3"/>
<path class="g1" d="M1181.3 371.1l-0.5-0.9-0.7-0.7-0.9-0.5-1-0.1-1 0.1-0.9 0.5-0.6 0.8-0.3 0.9 0.1 1 0.5 0.9 0.9 0.5 1 0.1 0.9-0.4 0.6-0.9 0-1-0.5-0.8-0.8-0.5-1 0.2-0.7 0.7 0 1"/>
<circle class="f1" cx="1177.9" cy="371.5" r="2.1"/>
<path class="g3" d="M1180.2 376.7l1.7-2.5 1-2.8"/>
<path class="g2" d="M1182.9 371.4l0.1-2 0.4-2 0.7-1.9 1.1-1.6 1.4-1.5 1.7-1 1.9-0.6 2 0"/>
<path class="g1" d="M1192.2 360.8l1 0.3 1 0.2 1 0 1-0.2 0.9-0.4 0.8-0.5"/>
<circle class="d" cx="1199.8" cy="365.8" r="2.9"/>
<path class="g1" d="M1197.9 360.2l0.7-0.8 0.4-0.9 0.2-1-0.1-0.9-0.4-0.9-0.8-0.7-0.9-0.4-1 0-0.9 0.4-0.7 0.7-0.2 1 0.2 1 0.7 0.7 0.9 0.3 1-0.2 0.7-0.7 0.2-1-0.4-0.9-0.9-0.5-1 0"/>
<circle class="f1" cx="1196.4" cy="356.7" r="2.2"/>
<path class="g2" d="M1192.2 360.8l1.9 0.6 1.7 1.2 1.1 1.6 0.5 2-0.3 1.9-1.1 1.7-1.7 1.1-2 0.2-1.9-0.7-1.3-1.5-0.3-2 0.7-1.9 1.6-1.2 2-0.1 1.7 1.1 0.6 1.9-0.9 1.8-1.7 0.9-2-0.2-1.4-1.4 0.2-2 1.4-1.4"/>
<circle class="f2" cx="1191.7" cy="367.3" r="4.1"/>
<path class="g3" d="M1182.9 371.4l0.1-3-0.7-2.9-1.7-2.5-2.5-1.8-2.9-0.7-2.9 0.4-2.6 1.6-1.6 2.5-0.3 3 1 2.8 2.3 1.9 3 0.5 2.8-1.1 1.7-2.4 0.1-3-1.7-2.5-2.8-0.9-2.9 0.8-2 2.3-0.1 3 1.9 2.3 3 0.1 2.2-2 0.1-3-2.1-2.2-3 0"/>
<circle class="f3" cx="1173.9" cy="365.8" r="6.8"/>
<path class="g5" d="M1163.6 381l5 0.8 4.9-0.6"/>
<path class="g4" d="M1173.5 381.2l3.7-1.5 3.9-1 4-0.3 3.9 0.5 3.8 1.3 3.3 2.2"/>
<path class="g2" d="M1196.1 382.4l1.3 1.5 1.1 1.8 0.7 1.8 0.4 2-0.1 2-0.5 1.9-1 1.7-1.5 1.4"/>
<path class="g1" d="M1196.5 396.5l-0.9 0.4-0.8 0.6-0.7 0.7-0.6 0.8-0.5 0.9-0.2 1"/>
<circle class="d" cx="1187.7" cy="398.3" r="3"/>
<path class="g1" d="M1192.8 400.9l0 1 0.3 0.9 0.5 0.9 0.8 0.6 0.9 0.4 1 0 1-0.4 0.7-0.6 0.4-1 0-1-0.5-0.8-0.8-0.6-1-0.1-0.9 0.4-0.6 0.9 0 1 0.5 0.8 1 0.4 0.9-0.3 0.7-0.8"/>
<circle class="f1" cx="1196" cy="402" r="2.3"/>
<path class="g2" d="M1196.5 396.5l-1.8 0.9-2 0.2-1.9-0.4-1.7-1.1-1.1-1.6-0.4-2 0.5-1.9 1.3-1.6 1.9-0.7 2 0.2 1.6 1.2 0.8 1.8-0.4 2-1.4 1.5-1.9 0.4-1.9-0.8-1-1.7 0.3-2 1.4-1.4 2 0 1.6 1.2 0.2 2"/>
<circle class="f2" cx="1191.6" cy="392.7" r="4"/>
<path class="g4" d="M1196.1 382.4l2.6 3.1 1.7 3.6"/>
<path class="g3" d="M1200.4 389.1l0.2 3 0.7 2.9 1.1 2.8 1.6 2.6 2.1 2.1 2.5 1.7"/>
<path class="g1" d="M1208.6 404.2l0.9 0.3 1 0.3 1 0 1-0.1 0.9-0.3 0.9-0.6"/>
<circle class="d" cx="1215.7" cy="409.4" r="2.8"/>
<path class="g1" d="M1214.3 403.8l0.7-0.7 0.5-0.8 0.2-1 0-1-0.4-0.9-0.7-0.7-0.9-0.5-1 0-1 0.3-0.6 0.8-0.3 0.9 0.1 1 0.7 0.8 0.9 0.3 1-0.2 0.7-0.6 0.2-1-0.3-1-0.7-0.6-1-0.1"/>
<circle class="f1" cx="1212.7" cy="400.1" r="2.1"/>
<path class="g3" d="M1208.6 404.2l2.8 1 3 0.3"/>
<path class="g2" d="M1214.4 405.5l1.9-0.4 2-0.1 2 0.3 1.9 0.6 1.7 1 1.5 1.4 1 1.7 0.5 2"/>
<path class="g1" d="M1226.9 412l-0.1 1 0.1 1 0.3 0.9 0.4 0.9 0.6 0.9 0.7 0.6"/>
<circle class="d" cx="1224.1" cy="420.8" r="3.1"/>
<path class="g1" d="M1228.9 417.3l0.9 0.5 1 0.2 1 0 0.9-0.4 0.8-0.6 0.5-0.9 0.1-1-0.2-1-0.7-0.8-0.8-0.4-1 0-0.9 0.4-0.6 0.9-0.1 1 0.5 0.9 0.9 0.4 1 0 0.7-0.7 0.3-0.9-0.3-1"/>
<circle class="f1" cx="1231.4" cy="414.7" r="2.2"/>
<path class="g2" d="M1226.9 412l-0.1 2-0.7 1.8-1.4 1.5-1.7 1-2 0.1-1.9-0.6-1.5-1.4-0.7-1.8 0.3-2 1.1-1.7 1.8-0.8 2 0.2 1.6 1.3 0.6 1.9-0.6 1.9-1.5 1.3-2 0.2-1.6-1.3-0.4-2 1-1.7 1.9-0.6 1.8 1"/>
<circle class="f2" cx="1221.1" cy="414.2" r="3.6"/>
<path class="g3" d="M1214.4 405.5l2.9-0.6 2.6-1.5 2.1-2.2 1.1-2.8 0-3-1.1-2.8-2.2-2.1-2.8-0.9-3 0.4-2.5 1.7-1.3 2.7 0.2 3 1.8 2.4 2.8 1.1 2.9-0.6 2-2.2-0.1-3-2-2.3-2.9-0.5-2.7 1.2-1.3 2.8 1.2 2.7 2.8 1 2.8-1.1 0.8-2.9-1.5-2.6"/>
<circle class="f3" cx="1215.9" cy="396.2" r="5.3"/>
<path class="g4" d="M1200.4 389.1l0.3 4-1 3.9-2.4 3.2-3.4 2.1-4 0.4-3.7-1.2-2.8-2.9-1.1-3.9 1.1-3.9 2.8-2.7 4-0.8 3.6 1.7 2.1 3.4-0.5 4"/>
<path class="y0 w4" d="M1195.4 396.4l-2.9 2.8-3.9 0.9-3.6-1.8"/>
<path class="y1 w4" d="M1185 398.3l-1.7-3.7 1.5-3.7 3.5-1.9"/>
<path class="y2 w4" d="M1188.3 389l3.8 1.3 1.5 3.7-1.3 3.8-3.7 1.4"/>
<path class="y3 w4" d="M1188.6 399.2l-3.8-1.3-1-3.9 1.9-3.5 3.9-1.1 3 2.6"/>
<path class="y4 w4" d="M1192.6 392l-0.3 4-3.7 1.5-3.2-2.4 0.8-3.9 3.9-0.9 3.2 2.5-0.5 3.9"/>
<path class="y5 w4" d="M1192.8 396.7l-3.9 0.9-2.8-2.8 1.5-3.7 3.9-0.8 2.8 2.9-1 3.9-4 0.1-1-3.9 3.5-1.9 2.4 3.3"/>
<path class="y6 w4" d="M1194.2 394.7l-2.5 3.1-3.2-2.4 2.1-3.4 3.4 2.1-1.8 3.6-3.4-2 0.7-4 3.9-0.4 0.9 3.9-3.6 1.6-2.6-3 2.6-3 3.6 1.8-2.5 3-2.8-2.8 3.1-2.5 2.4 3.2-3.8 1.2-1.2-3.9 3.9-0.9 1 3.9"/>
<path class="g5" d="M1173.5 381.2l4.6-1.9 3.7-3.4 2.3-4.5 0.4-4.9-1.6-4.8-3.5-3.5-4.8-1.7-4.9 0.8-3.9 3.2-1.7 4.7 1.2 4.9 3.6 3.4 5 0.6 4.3-2.5"/>
<path class="y0 w5" d="M1178.2 371.6l1.8-4.7-1-4.9-3.5-3.7"/>
<path class="y1 w5" d="M1175.5 358.3l-4.8-1.2-4.4 2.3-2 4.6"/>
<path class="y2 w5" d="M1164.3 364l1.4 4.8 4.3 2.5 5-0.8 2.8-4.1"/>
<path class="y3 w5" d="M1177.8 366.4l-1.4-4.8-4.3-2.5-4.7 1.9-1 4.9 3.6 3.5"/>
<path class="y4 w5" d="M1170 369.4l4.9-0.9 2.6-4.3-1.7-4.7-5-0.8-3.3 3.7 0.8 4.9 4.8 1.6"/>
<path class="y5 w5" d="M1173.1 368.9l2.9-4.1-2.6-4.3-4.9 0.8-2.3 4.5 2.8 4.1 5-0.7 0.4-5-4.9-1.1-2.3 4.4 3.9 3.2"/>
<path class="y6 w5" d="M1171.1 370.7l3.3-3.8-2.2-4.4-5 0.2-1 4.9 4.6 2 2.5-4.2-4.3-2.5-2.8 4.1 4 3 3-4-4.1-2.8-3.8 3.2 4 3 3.6-3.5-3.1-3.9-3 4 4.2 2.7 3.6-3.5-4-3-2.2 4.5 4.5 2.2"/>
<path class="g6" d="M1145.1 359.1l1.8 5.8-0.2 6-2.2 5.6-4 4.4-5.4 2.6-6 0.2-5.6-2.3-4-4.4-1.5-5.8 1.4-5.9 4.1-4.3 5.7-1.7 5.8 1.6 4 4.5"/>
<path class="y0 w6" d="M1139 365.4l0.7 6-2.7 5.3-5.2 2.9"/>
<path class="y1 w6" d="M1131.8 379.6l-6-0.4-3.9-4.6-0.1-6"/>
<path class="y2 w6" d="M1121.8 368.6l3.5-4.8 6-0.5 4.8 3.6 0.1 6"/>
<path class="y3 w6" d="M1136.2 372.9l-4.8 3.6-5.9-1.2-2.3-5.5 3.2-5.2 5.9-0.3"/>
<path class="y4 w6" d="M1132.3 364.3l4.5 4-0.5 6-5.5 2.4-4.4-4 0.8-6 5.4-2.6 4.9 3.4"/>
<path class="y5 w6" d="M1137.5 367.5l-1.8 5.7-5.9-0.1-3.3-5.1 2.8-5.3 5.8 1.4 1.1 5.9-5.2 2.8-3.6-4.8 4.4-4 5 3.2"/>
<path class="y6 w6" d="M1136.8 367.2l-0.9 5.9-6-0.4 0-6 6-0.3 2.2 5.5-5.5 2.4-2.7-5.4 5.6-2 2.7 5.3-4.5 3.9-4.7-3.7 2.2-5.6 5.1 3.1-3.5 4.8-4.1-4.4 5-3.3 2.8 5.3-5.6 2-1.3-5.9 6-0.8 1 5.9"/>
<path class="g8" d="M1103.4 356.2l6.5-4.6 7.4-2.8"/>
<path class="g7" d="M1117.3 348.8l7-0.5 6.9-1.5 6.5-2.5 6-3.6 5.2-4.7 4.1-5.7"/>
<path class="g5" d="M1153 330.3l1.9-4.6 1.3-4.8 0.5-5-0.4-5-1.4-4.8-2.3-4.4"/>
<path class="g3" d="M1152.6 301.7l-2-2.2-2.3-1.9-2.6-1.6-2.8-1-3-0.5-3 0.1"/>
<path class="g1" d="M1136.9 294.6l-0.9 0.3-0.9 0.4-0.9 0.6-0.7 0.7-0.5 0.8-0.4 0.9"/>
<circle class="d" cx="1127.8" cy="294.4" r="2.7"/>
<path class="g1" d="M1132.6 298.3l-0.1 1 0.1 1 0.4 0.9 0.6 0.8 0.9 0.5 1 0.2 1-0.2 0.8-0.6 0.5-0.8 0.1-1-0.3-1-0.7-0.7-1-0.2-1 0.3-0.6 0.7-0.2 1 0.4 0.9 0.9 0.5 1-0.2 0.6-0.8"/>
<circle class="f1" cx="1135.6" cy="299.9" r="2.1"/>
<path class="g3" d="M1136.9 294.6l-2.8 0.9-2.6 1.6"/>
<path class="g2" d="M1131.5 297.1l-1.3 1.5-1.5 1.3-1.8 1-1.9 0.6-2 0.2-1.9-0.3-1.9-0.7-1.6-1.3"/>
<path class="g1" d="M1117.6 299.4l-0.5-0.8-0.7-0.7-0.8-0.7-0.8-0.4-1-0.3-1-0.1"/>
<circle class="d" cx="1115" cy="291.1" r="2.8"/>
<path class="g1" d="M1112.8 296.4l-1 0.1-0.9 0.4-0.8 0.7-0.5 0.8-0.2 1 0.1 1 0.5 0.9 0.8 0.6 0.9 0.3 1-0.2 0.8-0.6 0.5-0.9-0.1-1-0.5-0.8-0.9-0.5-1 0.2-0.8 0.6-0.3 1 0.4 0.9 0.9 0.4"/>
<circle class="f1" cx="1111.8" cy="299.7" r="2.1"/>
<path class="g2" d="M1117.6 299.4l-1.1-1.6-0.5-1.9 0.1-2 0.9-1.8 1.5-1.4 1.9-0.6 2 0.2 1.6 1.1 1.1 1.7 0 2-0.9 1.8-1.8 1-2-0.1-1.6-1.1-0.7-1.9 0.8-1.9 1.7-1 2 0.4 1.3 1.5 0.1 2-1.2 1.6-1.9 0.2"/>
<circle class="f2" cx="1121.7" cy="294.1" r="4.6"/>
<path class="g3" d="M1131.5 297.1l-2 2.2-1.2 2.8-0.2 3 0.7 2.9 1.8 2.4 2.6 1.5 3 0.4 2.8-0.9 2.2-2.2 0.9-2.8-0.6-2.9-1.9-2.3-2.9-0.9-2.9 0.8-2 2.2-0.4 3 1.2 2.8 2.7 1.2 3-0.4 1.9-2.3 0.3-2.9-2-2.3-3-0.5-2.2 2 0.2 3 2.4 1.8"/>
<circle class="f3" cx="1138.1" cy="304.9" r="6.3"/>
<path class="g5" d="M1152.6 301.7l-3.4-3.7-4.2-2.7"/>
<path class="g4" d="M1145 295.3l-3.9-1-3.6-1.7-3.3-2.2-2.8-2.8-2.2-3.4-1.2-3.8"/>
<path class="g2" d="M1128 280.4l-0.2-2 0.2-2 0.6-1.9 0.9-1.8 1.2-1.6 1.6-1.2 1.9-0.7 2-0.3"/>
<path class="g1" d="M1136.2 268.9l1 0.2 1 0.1 1-0.1 0.9-0.3 0.9-0.4 0.8-0.7"/>
<circle class="d" cx="1144" cy="273.2" r="2.7"/>
<path class="g1" d="M1141.8 267.7l0.6-0.8 0.3-0.9 0.1-1-0.2-1-0.5-0.8-0.8-0.7-1-0.2-1 0.1-0.9 0.5-0.5 0.8-0.2 1 0.3 0.9 0.8 0.7 1 0.2 0.9-0.3 0.6-0.8 0.1-1-0.6-0.8-0.9-0.4-1 0.3"/>
<circle class="f1" cx="1139.2" cy="264.8" r="2"/>
<path class="g2" d="M1136.2 268.9l1.9 0.4 1.8 1 1.3 1.5 0.6 1.9-0.1 2-0.9 1.8-1.5 1.3-2 0.4-1.9-0.5-1.5-1.4-0.5-1.9 0.5-2 1.4-1.3 2-0.4 1.8 0.9 1.1 1.7-0.1 2-1.1 1.6-2 0.5-1.8-0.9-0.9-1.8 0.8-1.8"/>
<circle class="f2" cx="1137.5" cy="276.5" r="4.6"/>
<path class="g4" d="M1128 280.4l-0.3-4 1-3.9"/>
<path class="g3" d="M1128.7 272.5l1.6-2.5 1.2-2.8 0.8-2.8 0.3-3-0.3-3-0.9-2.9"/>
<path class="g1" d="M1131.4 255.5l-0.5-0.8-0.6-0.8-0.8-0.7-0.8-0.5-0.9-0.4-1-0.1"/>
<circle class="d" cx="1129.2" cy="246.9" r="2.8"/>
<path class="g1" d="M1126.8 252.2l-1 0.1-1 0.3-0.8 0.6-0.5 0.9-0.3 0.9 0.1 1 0.4 0.9 0.7 0.7 1 0.3 1-0.1 0.8-0.6 0.5-0.8 0-1-0.5-0.9-0.9-0.5-1 0.1-0.8 0.6-0.3 1 0.3 0.9 0.7 0.7"/>
<circle class="f1" cx="1125.7" cy="256.3" r="2.4"/>
<path class="g3" d="M1131.4 255.5l-1.5-2.6-2.1-2.1"/>
<path class="g2" d="M1127.8 250.8l-1.8-1-1.5-1.2-1.3-1.5-1-1.8-0.7-1.9-0.1-2 0.4-1.9 0.9-1.8"/>
<path class="g1" d="M1122.7 237.7l0.7-0.7 0.6-0.8 0.4-0.9 0.3-1 0.1-1-0.1-1"/>
<circle class="d" cx="1130.2" cy="233.3" r="2.9"/>
<path class="g1" d="M1124.7 232.3l-0.3-0.9-0.6-0.8-0.8-0.6-0.9-0.4-1 0-1 0.3-0.7 0.7-0.5 0.9-0.1 0.9 0.4 1 0.7 0.6 1 0.3 1-0.3 0.7-0.7 0.2-0.9-0.3-1-0.8-0.6-1 0.1-0.7 0.6-0.3 1"/>
<circle class="f1" cx="1121.5" cy="232.6" r="2.3"/>
<path class="g2" d="M1122.7 237.7l1.4-1.4 1.8-1 1.9-0.2 2 0.5 1.6 1.2 1 1.7 0.2 2-0.7 1.9-1.5 1.3-2 0.4-1.9-0.5-1.3-1.5-0.4-2 0.8-1.8 1.8-1.1 2 0 1.4 1.4 0.3 2-1.3 1.5-2 0.4-1.7-0.9-0.5-2"/>
<circle class="f2" cx="1127.2" cy="240.1" r="4.3"/>
<path class="g3" d="M1127.8 250.8l-2.6-1.5-3-0.6-2.9 0.4-2.7 1.4-1.9 2.3-0.9 2.9 0.5 3 1.6 2.4 2.7 1.5 3 0 2.6-1.5 1.4-2.6-0.2-3-1.8-2.4-2.9-0.9-2.7 1.1-1.6 2.6 0.1 3 2.2 2.1 3 0 2.4-1.9 0.4-2.9-1.7-2.5-2.9-0.7-2.5 1.7-0.7 2.9"/>
<circle class="f3" cx="1119.6" cy="258.2" r="5.8"/>
<path class="g4" d="M1128.7 272.5l2.1-3.4 3.2-2.4 3.9-1.1 3.9 0.5 3.4 2.2 2.1 3.4 0.2 4-1.7 3.6-3.3 2.2-4 0.1-3.4-2.1-1.5-3.7 1-3.9 3.1-2.4"/>
<path class="y0 w4" d="M1137.7 269.5l4 0.1 3.3 2.3 1.5 3.7"/>
<path class="y1 w4" d="M1146.5 275.6l-0.9 3.9-3.5 2.1-3.9-0.9"/>
<path class="y2 w4" d="M1138.2 280.7l-2.1-3.4 1.2-3.8 3.4-2.1 3.9 0.9"/>
<path class="y3 w4" d="M1144.6 272.3l1.6 3.7-1.6 3.6-3.8 1.2-3.5-2.1-0.5-3.9"/>
<path class="y4 w4" d="M1136.8 274.8l3.1-2.6 3.8 1 1.9 3.6-1.5 3.7-4 0.3-2.5-3.2 1-3.8"/>
<path class="y5 w4" d="M1138.6 273.8l3.8-1.5 3.2 2.4-1.3 3.7-4 0.1-1.9-3.5 2.6-3 3.9 1 1 3.9-3.6 1.7-3.2-2.4"/>
<path class="y6 w4" d="M1139.1 276.2l1-3.9 4-0.2 0.5 4-3.6 1.7-2.8-2.9 1.8-3.6 3.9 0.7-0.9 3.9-4 0.1 0-4 3.9-0.8 0.3 4-3.9 0.7-1.7-3.6 4-0.5 1 3.9-3.7 1.5-1.5-3.8 3.8-1.4-0.3 4-3.4-2.1"/>
<path class="g5" d="M1145 295.3l-4.8-1.3-5 0.3-4.6 2-3.6 3.4-2 4.6 0.1 5 2.2 4.5 4 3 5 0.8 4.6-1.7 3.2-4 0.5-4.9-2.3-4.5-4.4-2.3"/>
<path class="y0 w5" d="M1137.9 300.2l-5 0.8-3.3 3.7-0.5 5"/>
<path class="y1 w5" d="M1129.1 309.7l2.8 4.1 4.7 1.8 4.6-2"/>
<path class="y2 w5" d="M1141.2 313.6l1.7-4.7-2.4-4.4-4.7-1.7-4.6 1.8"/>
<path class="y3 w5" d="M1131.2 304.6l-2.3 4.5 2.1 4.5 4.6 2.1 4.5-2.3 1.2-4.9"/>
<path class="y4 w5" d="M1141.3 308.5l-3.1-3.9-5-0.2-3.1 4 1.9 4.6 4.7 1.5 4.2-2.7 0.5-5"/>
<path class="y5 w5" d="M1141.4 306.8l-4.3-2.5-4.2 2.8 0.4 5 4.9 1.1 2.4-4.4-3.6-3.5-4.6 2 1.2 4.8 5-0.5 0.6-4.9"/>
<path class="y6 w5" d="M1139.2 306.7l-4.9-0.9-1.3 4.8 4.5 2.1 3.3-3.7-3.4-3.6-3.6 3.5 2.7 4.3 4.8-1.2 0.6-5-4.9-0.8-1.7 4.6 4.5 2.2 3.4-3.6-2.8-4.2-3.3 3.8 2.8 4.1 3.6-3.5-3.7-3.4-1.9 4.6 4.8 1.4 1.8-4.6"/>
<path class="g7" d="M1153 330.3l2.7-6.4 1-6.9"/>
<path class="g6" d="M1156.7 317l-0.6-6 0.3-6 1.3-5.8 2.4-5.5 3.5-4.9 4.7-3.8"/>
<path class="g4" d="M1168.3 285l3.6-1.6 3.9-1.1 3.9-0.4 4 0.4 3.8 1.3 3.4 2.2"/>
<path class="g2" d="M1190.9 285.8l1.3 1.4 1.1 1.7 0.8 1.8 0.4 2 0 2-0.4 1.9-1 1.8-1.4 1.4"/>
<path class="g1" d="M1191.7 299.8l-0.9 0.5-0.8 0.6-0.7 0.7-0.6 0.8-0.4 0.9-0.2 1"/>
<circle class="d" cx="1183.5" cy="301.2" r="2.8"/>
<path class="g1" d="M1188.1 304.3l0 1 0.3 0.9 0.6 0.9 0.8 0.6 0.9 0.3 1 0 1-0.4 0.7-0.7 0.3-0.9 0-1-0.5-0.9-0.9-0.5-1-0.1-0.9 0.5-0.5 0.8 0 1 0.6 0.9 0.9 0.3 1-0.2 0.7-0.7"/>
<circle class="f1" cx="1191.8" cy="305.8" r="2.2"/>
<path class="g2" d="M1191.7 299.8l-1.8 0.9-2 0.4-1.9-0.4-1.7-1.1-1.2-1.6-0.4-1.9 0.4-2 1.3-1.5 1.8-0.9 2 0.2 1.6 1.2 0.9 1.8-0.3 2-1.4 1.4-1.9 0.5-1.9-0.6-1-1.7 0.1-2 1.2-1.6 2-0.2 1.5 1.4 0.1 2"/>
<circle class="f2" cx="1185.8" cy="296.5" r="4.3"/>
<path class="g4" d="M1190.9 285.8l2.7 2.9 1.7 3.6"/>
<path class="g3" d="M1195.3 292.3l0.4 3 0.8 2.9 1.2 2.7 1.7 2.5 2.2 2.1 2.5 1.6"/>
<path class="g1" d="M1204.1 307.1l1 0.3 1 0.2 1 0 1-0.1 0.9-0.4 0.8-0.5"/>
<circle class="d" cx="1211.3" cy="311.8" r="2.9"/>
<path class="g1" d="M1209.8 306.6l0.7-0.8 0.5-0.8 0.2-1-0.1-1-0.4-0.9-0.7-0.7-0.9-0.4-1-0.1-0.9 0.4-0.7 0.8-0.3 0.9 0.2 1 0.7 0.8 0.9 0.3 1-0.2 0.7-0.7 0.2-1-0.4-0.9-0.9-0.4-1 0.2"/>
<circle class="f1" cx="1208" cy="303" r="2.2"/>
<path class="g3" d="M1204.1 307.1l2.9 0.9 3 0.2"/>
<path class="g2" d="M1210 308.2l1.9-0.4 2-0.1 2 0.2 1.9 0.6 1.7 1 1.5 1.4 1 1.7 0.6 2"/>
<path class="g1" d="M1222.6 314.6l-0.1 1 0.1 0.9 0.3 1 0.4 0.9 0.6 0.8 0.7 0.7"/>
<circle class="d" cx="1219.9" cy="322.8" r="2.8"/>
<path class="g1" d="M1224.6 319.9l0.9 0.4 1 0.3 1-0.1 0.9-0.4 0.8-0.6 0.5-0.9 0.1-1-0.2-1-0.7-0.8-0.9-0.4-1 0-0.9 0.5-0.5 0.8-0.1 1 0.5 0.9 0.9 0.5 1-0.1 0.7-0.7 0.2-1-0.6-0.8"/>
<circle class="f1" cx="1227.6" cy="317.1" r="2.3"/>
<path class="g2" d="M1222.6 314.6l-0.1 2-0.7 1.8-1.3 1.5-1.8 1-2 0.2-1.9-0.6-1.5-1.4-0.7-1.8 0.2-2 1.2-1.7 1.8-0.8 2 0.2 1.5 1.2 0.7 1.9-0.6 1.9-1.6 1.3-2-0.1-1.6-1.2-0.3-2 1-1.7 2-0.4 1.6 1.2"/>
<circle class="f2" cx="1216.7" cy="316.6" r="3.4"/>
<path class="g3" d="M1210 308.2l2.9-0.6 2.6-1.5 1.9-2.3 1-2.9-0.2-3-1.4-2.6-2.3-1.9-3-0.6-2.9 0.9-2.1 2.1-0.7 2.9 0.9 2.9 2.4 1.9 3 0.2 2.5-1.6 1.1-2.8-0.7-2.9-2.3-1.9-3-0.2-2.4 1.9-0.3 3 2 2.2 3 0.5 2.3-1.9 0.5-2.9-2-2.3"/>
<circle class="f3" cx="1211.4" cy="298.2" r="5.2"/>
<path class="g4" d="M1195.3 292.3l0.5 4-0.7 3.9-2.1 3.4-3.2 2.5-3.8 1.1-4-0.6-3.3-2.2-2.1-3.4-0.2-4 1.7-3.6 3.3-2.3 3.9-0.3 3.6 1.9 1.8 3.6"/>
<path class="y0 w4" d="M1190.7 296.3l-0.5 3.9-2.5 3.1-3.9 0.6"/>
<path class="y1 w4" d="M1183.8 303.9l-3.4-2.3-0.7-3.9 2.2-3.3"/>
<path class="y2 w4" d="M1181.9 294.4l3.9-1.1 3.5 1.8 1.7 3.7-1.3 3.7"/>
<path class="y3 w4" d="M1189.7 302.5l-3.8 1.3-3.2-2.4 0.1-4 3.2-2.4 3.8 1.1"/>
<path class="y4 w4" d="M1189.8 296.1l1.7 3.6-2.3 3.3-4 0.5-2.8-2.9 0.5-3.9 3.7-1.5 3.2 2.4"/>
<path class="y5 w4" d="M1189.8 297.6l-0.3 4-3.4 2-3.6-1.9 0.6-3.9 4-0.2 1.6 3.6-3.3 2.4-3.6-1.7 0.4-4 4-0.2"/>
<path class="y6 w4" d="M1186.2 297.7l0.6 4-3.5 1.9-2-3.5 3.6-1.8 2.7 2.9-2 3.5-3.9-0.9-0.5-4 3.7-1.6 2 3.5-3 2.7-2-3.5 3.6-1.8 1.7 3.6-3.8 1.3-0.3-4 4-0.1 0 4-4-0.1 1.6-3.6 2.8 2.8"/>
<path class="g6" d="M1168.3 285l5.4-2.5 6-0.9"/>
<path class="g5" d="M1179.7 281.6l4.9 0.7 5 0 4.9-0.8 4.8-1.6 4.3-2.5 3.7-3.4"/>
<path class="g3" d="M1207.3 274l1.6-2.5 1.3-2.7 0.9-2.9 0.3-3-0.3-3-0.9-2.8"/>
<path class="g1" d="M1210.2 257.1l-0.5-0.9-0.6-0.7-0.8-0.7-0.8-0.5-1-0.4-1-0.1"/>
<circle class="d" cx="1207.9" cy="248.3" r="2.8"/>
<path class="g1" d="M1205.5 253.8l-1 0.1-0.9 0.4-0.8 0.6-0.6 0.8-0.2 1 0.1 1 0.4 0.9 0.8 0.6 0.9 0.3 1-0.1 0.8-0.5 0.5-0.9 0-1-0.5-0.9-0.9-0.5-1 0.1-0.8 0.7-0.3 0.9 0.4 0.9 0.8 0.5"/>
<circle class="f1" cx="1204.8" cy="257.8" r="2.1"/>
<path class="g3" d="M1210.2 257.1l-1.6-2.6-2.1-2"/>
<path class="g2" d="M1206.5 252.5l-1.8-0.9-1.6-1.2-1.4-1.5-1.1-1.6-0.7-1.9-0.3-2 0.3-2 0.8-1.8"/>
<path class="g1" d="M1200.7 239.6l0.7-0.7 0.5-0.9 0.5-0.9 0.2-1 0.1-1-0.2-0.9"/>
<circle class="d" cx="1208.2" cy="234.7" r="3"/>
<path class="g1" d="M1202.5 234.2l-0.4-1-0.6-0.7-0.9-0.6-0.9-0.3-1 0-0.9 0.4-0.8 0.7-0.4 0.9 0 1 0.4 0.9 0.8 0.6 1 0.2 0.9-0.3 0.7-0.7 0.2-1-0.4-0.9-0.8-0.6-1 0-0.8 0.6-0.3 1"/>
<circle class="f1" cx="1198.8" cy="234.2" r="2.2"/>
<path class="g2" d="M1200.7 239.6l1.4-1.5 1.7-1 2-0.3 1.9 0.3 1.7 1.1 1.1 1.7 0.3 2-0.7 1.9-1.4 1.4-1.9 0.6-1.9-0.5-1.5-1.4-0.4-2 0.7-1.9 1.7-1.1 2 0 1.5 1.4 0.3 1.9-1.1 1.7-2 0.3-1.7-1-0.7-1.9"/>
<circle class="f2" cx="1206" cy="241.5" r="3.7"/>
<path class="g3" d="M1206.5 252.5l-2.7-1.4-3-0.5-2.9 0.5-2.6 1.5-1.9 2.3-0.9 2.9 0.4 3 1.6 2.5 2.6 1.5 3 0.2 2.7-1.3 1.7-2.4 0.2-3-1.5-2.6-2.7-1.4-2.9 0.7-1.8 2.4 0.2 3 1.8 2.4 3 0.5 2.6-1.5 0.8-2.8-1.4-2.7-2.8-1.1-2.6 1.5-0.4 2.9"/>
<circle class="f3" cx="1201.7" cy="260.1" r="6.3"/>
<path class="g5" d="M1207.3 274l2.7-4.2 1.7-4.7"/>
<path class="g4" d="M1211.7 265.1l0.2-4 0.9-3.9 1.5-3.7 2.2-3.3 2.9-2.8 3.5-2"/>
<path class="g2" d="M1222.9 245.4l1.9-0.5 2-0.2 2 0.1 1.9 0.5 1.8 1 1.5 1.3 1.1 1.6 0.6 2"/>
<path class="g1" d="M1235.7 251.2l0 1 0.2 0.9 0.3 1 0.4 0.9 0.7 0.8 0.7 0.6"/>
<circle class="d" cx="1233.4" cy="260" r="3"/>
<path class="g1" d="M1238 256.4l1 0.4 0.9 0.2 1-0.2 0.9-0.4 0.8-0.7 0.4-0.8 0.1-1-0.3-1-0.7-0.7-0.9-0.4-1 0-0.8 0.5-0.5 0.9 0 1 0.5 0.8 0.9 0.5 1-0.2 0.7-0.6 0.2-0.9-0.4-0.9"/>
<circle class="f1" cx="1240.7" cy="254.1" r="2.2"/>
<path class="g2" d="M1235.7 251.2l0 2-0.6 1.9-1.2 1.5-1.7 1.1-2 0.2-1.9-0.5-1.6-1.3-0.8-1.8 0.1-2 1.1-1.7 1.8-0.9 2 0.1 1.6 1.2 0.7 1.8-0.5 2-1.5 1.2-2 0.2-1.7-1-0.7-1.9 0.7-1.9 1.8-1 2 0.3"/>
<circle class="f2" cx="1230.6" cy="253.2" r="3.6"/>
<path class="g4" d="M1222.9 245.4l3.8-1 4 0"/>
<path class="g3" d="M1230.7 244.4l2.9 0.9 2.9 0.5 3 0.1 3-0.5 2.8-1.1 2.5-1.6"/>
<path class="g1" d="M1247.8 242.7l0.7-0.8 0.6-0.8 0.4-0.9 0.3-1 0-1-0.1-1"/>
<circle class="d" cx="1255.5" cy="237.9" r="2.9"/>
<path class="g1" d="M1249.7 237.2l-0.4-0.9-0.6-0.8-0.8-0.6-1-0.3-1 0-0.9 0.4-0.8 0.7-0.4 0.9 0 1 0.4 0.9 0.8 0.6 0.9 0.2 1-0.3 0.7-0.7 0.2-1-0.4-0.9-0.8-0.6-1 0-0.8 0.5-0.4 1"/>
<circle class="f1" cx="1245.8" cy="237.1" r="2"/>
<path class="g3" d="M1247.8 242.7l2-2.3 1.4-2.6"/>
<path class="g2" d="M1251.2 237.8l0.4-2 0.7-1.8 1-1.8 1.4-1.5 1.6-1.1 1.8-0.8 2-0.3 2 0.3"/>
<path class="g1" d="M1262.1 228.8l0.9 0.5 1 0.3 0.9 0.1 1 0 1-0.2 0.9-0.4"/>
<circle class="d" cx="1268.5" cy="234.7" r="2.8"/>
<path class="g1" d="M1267.8 229.1l0.8-0.6 0.6-0.9 0.3-0.9 0.1-1-0.3-1-0.6-0.8-0.9-0.5-1-0.1-0.9 0.2-0.8 0.7-0.4 0.9 0.1 1 0.5 0.8 0.9 0.5 1-0.1 0.8-0.6 0.3-0.9-0.3-1-0.8-0.6-1 0.1"/>
<circle class="f1" cx="1266.6" cy="225.9" r="2.1"/>
<path class="g2" d="M1262.1 228.8l1.8 0.9 1.4 1.4 0.9 1.8 0.1 2-0.6 1.9-1.3 1.5-1.8 0.8-2-0.1-1.8-1-1-1.7-0.1-2 1-1.7 1.8-1 2 0.2 1.5 1.3 0.6 1.9-0.6 2-1.7 1-2 0-1.4-1.4 0-2 1.2-1.6"/>
<circle class="f2" cx="1262.1" cy="234" r="4.4"/>
<path class="g3" d="M1251.2 237.8l0.6-2.9-0.2-3-1.2-2.8-2-2.2-2.6-1.5-3-0.3-2.9 0.7-2.4 1.9-1.3 2.7-0.1 3 1.2 2.7 2.4 1.8 3 0.5 2.8-1.1 1.8-2.4 0-3-1.8-2.3-2.9-1-2.8 1-1.5 2.6 0.8 2.9 2.6 1.4 2.8-0.9 1.3-2.8-0.9-2.9-2.6-1.4"/>
<circle class="f3" cx="1241.8" cy="232.9" r="6.3"/>
<path class="g4" d="M1230.7 244.4l3.8 1.2 3.3 2.4 2.1 3.4 0.8 3.9-0.9 3.9-2.4 3.2-3.6 1.8-4 0-3.5-1.9-2.1-3.4 0-4 2.2-3.4 3.7-1.6 3.9 0.8"/>
<path class="y0 w4" d="M1234 250.7l2.6 3 0.8 4-1.8 3.6"/>
<path class="y1 w4" d="M1235.6 261.3l-3.7 1.6-3.7-1.5-1.5-3.7"/>
<path class="y2 w4" d="M1226.7 257.7l1.1-3.8 3.6-1.8 3.7 1.4 1.3 3.8"/>
<path class="y3 w4" d="M1236.4 257.3l-1.5 3.7-3.5 1.8-3.6-1.7-0.9-3.9 2.2-3.3"/>
<path class="y4 w4" d="M1229.1 253.9l4 0.2 1.7 3.7-2.2 3.3-4-0.4-1.2-3.8 2.4-3.2 3.8 1.1"/>
<path class="y5 w4" d="M1233.6 254.8l0.4 4-3.2 2.4-3.1-2.5 1-3.8 4 0 1.8 3.6-3.1 2.5-3.1-2.4 2.1-3.5 4 0.5"/>
<path class="y6 w4" d="M1234.4 255.6l0.8 3.9-3.3 2.4-2.4-3.2 2.1-3.4 3.9 0.9-0.4 4-4 0.3-1.2-3.8 3.8-1.4 1.4 3.7-3.9 1.1-1.1-3.8 3.9-0.9 0.9 3.9-3.9 0.8-1-3.8 4 0.1 0.2 4-4-0.2 0.2-4 4 0.8"/>
<path class="g5" d="M1211.7 265.1l0.3-5-1.3-4.8-2.8-4.1-4.1-2.9-4.9-1-4.9 1-4 3-2.3 4.4 0.1 5 2.6 4.3 4.3 2.5 5-0.3 4.1-2.9 1.6-4.8"/>
<path class="y0 w5" d="M1205.4 259.5l-1.5-4.7-3.7-3.3-5-0.6"/>
<path class="y1 w5" d="M1195.2 250.9l-4 2.9-1.4 4.8 2 4.6"/>
<path class="y2 w5" d="M1191.8 263.2l4.5 2.3 4.8-1.4 2.2-4.5-1-4.9"/>
<path class="y3 w5" d="M1202.3 254.7l-4.4-2.4-4.6 1.8-1.5 4.8 2.5 4.3 4.8 1.2"/>
<path class="y4 w5" d="M1199.1 264.4l3.8-3.3-0.4-4.9-4.4-2.5-4.7 1.7-0.2 5 3.6 3.4 4.6-2"/>
<path class="y5 w5" d="M1201.4 261.8l0.1-5-3.9-3.1-4.8 1.6-0.3 5 4.1 2.8 3.8-3.3-0.9-4.9-5-0.6-2.6 4.3 3.7 3.3"/>
<path class="y6 w5" d="M1195.6 261.9l4.1-2.9-2.7-4.2-4.8 1.4 1.3 4.9 5-0.7 0.2-5-5 0.1 0.2 5 5-0.5-1.1-4.9-4.9-0.6-1.4 4.8 4.4 2.4 2.1-4.5-4.9-1 0.6 4.9 4.9-0.8-0.8-5-5 0.5 0.6 4.9 4.8-1.2"/>
<path class="g6" d="M1179.7 281.6l5.9 0.9 5.4 2.6 4.2 4.2 2.6 5.5 0.3 6-1.9 5.6-4.1 4.4-5.5 2.4-6-0.4-5.2-3-3.1-5.2-0.3-6 2.9-5.2 5.2-3"/>
<path class="y0 w6" d="M1180.1 290.4l6 0.3 4.9 3.5 2.1 5.6"/>
<path class="y1 w6" d="M1193.1 299.8l-1.7 5.7-4.8 3.6-6 0.1"/>
<path class="y2 w6" d="M1180.6 309.2l-4.5-4-0.6-6 3.5-4.9 6-0.3"/>
<path class="y3 w6" d="M1185 294l4.3 4.2-0.3 5.9-4.5 4-5.8-1.6-2.3-5.6"/>
<path class="y4 w6" d="M1176.4 300.9l3.6-4.8 5.9-0.7 3.8 4.6-1.8 5.8-5.8 1.6-4.2-4.2 2.4-5.5"/>
<path class="y5 w6" d="M1180.3 297.7l6 0.2 2.7 5.3-3.4 5-5.6-2.3-1.1-5.9 5.3-2.7 3.8 4.7-2.9 5.2-5.5-2.3 1.3-5.9"/>
<path class="y6 w6" d="M1180.9 299l5.8-1.3 3.1 5.1-3.8 4.6-4.8-3.6 3.6-4.8 5 3.3-2 5.7-6 0.2-0.8-6 6-0.5-0.8 5.9-5.9-1.1 1.2-5.9 5.8 1.3-1.6 5.8-4.9-3.5 4.3-4.2 3.3 5-5.7 1.8 0.9-5.9 6 0.3"/>
<path class="g10" d="M1096 401l-2.9-9.6-0.3-10"/>
<path class="g9" d="M1092.8 381.4l2.3-8.7 1-8.9-0.5-9-1.9-8.8-3.6-8.2-5.3-7.3"/>
<path class="g7" d="M1084.8 330.5l-5.3-4.7-5.8-3.8-6.4-2.9-6.8-1.7-7-0.3-6.9 1.3"/>
<path class="g5" d="M1046.6 318.4l-4.5 2.1-4.2 2.7-3.8 3.3-3.1 3.9-2.2 4.5-1.2 4.8"/>
<path class="g3" d="M1027.6 339.7l-0.1 3 0.4 3 0.9 2.9 1.3 2.7 1.9 2.3 2.3 1.9"/>
<path class="g1" d="M1034.3 355.5l0.9 0.5 0.9 0.3 1 0.1 1 0 1-0.2 0.9-0.5"/>
<circle class="d" cx="1041" cy="361.4" r="2.9"/>
<path class="g1" d="M1040 355.7l0.8-0.6 0.5-0.8 0.4-1 0-1-0.3-0.9-0.6-0.8-0.9-0.5-1-0.2-0.9 0.3-0.8 0.7-0.4 0.9 0.1 1 0.6 0.8 0.8 0.5 1-0.1 0.8-0.6 0.4-1-0.3-1-0.7-0.6-1-0.1"/>
<circle class="f1" cx="1038.8" cy="352.2" r="2.1"/>
<path class="g3" d="M1034.3 355.5l2.7 1.3 2.9 0.6"/>
<path class="g2" d="M1039.9 357.4l2-0.2 2 0.1 2 0.4 1.8 0.8 1.6 1.2 1.3 1.6 0.8 1.8 0.3 2"/>
<path class="g1" d="M1051.7 365.1l-0.1 0.9 0 1 0.1 1 0.3 1 0.5 0.8 0.7 0.8"/>
<circle class="d" cx="1048.2" cy="373" r="2.8"/>
<path class="g1" d="M1053.2 370.6l0.9 0.5 0.9 0.4 1 0 1-0.3 0.8-0.5 0.6-0.9 0.2-0.9-0.1-1-0.6-0.9-0.8-0.5-1-0.1-0.9 0.4-0.7 0.7-0.1 1 0.3 0.9 0.8 0.6 1 0.1 0.8-0.7 0.4-0.9-0.4-1"/>
<circle class="f1" cx="1055.6" cy="368.4" r="2.4"/>
<path class="g2" d="M1051.7 365.1l-0.3 1.9-0.9 1.8-1.4 1.4-1.9 0.7-2 0-1.8-0.8-1.3-1.5-0.5-1.9 0.4-2 1.3-1.5 1.9-0.7 2 0.5 1.4 1.4 0.4 1.9-0.8 1.9-1.7 1-1.9-0.3-1.5-1.3 0-2 1.2-1.6 2-0.3 1.7 1"/>
<circle class="f2" cx="1046.5" cy="366.3" r="3.9"/>
<path class="g3" d="M1039.9 357.4l3-0.3 2.8-1.2 2.2-2.1 1.4-2.6 0.3-3-0.9-2.9-1.9-2.3-2.8-1.2-3 0.1-2.6 1.5-1.5 2.5-0.1 3 1.5 2.6 2.6 1.4 3-0.3 2.2-2.1 0.4-2.9-1.5-2.6-2.8-1-2.9 0.9-1.5 2.6 0.8 2.9 2.7 1.4 2.8-1.1 1-2.8-1.3-2.7"/>
<circle class="f3" cx="1042.5" cy="348.5" r="5.9"/>
<path class="g5" d="M1027.6 339.7l-0.1 5 1.2 4.9"/>
<path class="g4" d="M1028.7 349.6l1.9 3.5 1.3 3.8 0.7 3.9-0.1 4-1 3.9-1.9 3.5"/>
<path class="g2" d="M1029.6 372.2l-1.4 1.5-1.6 1.2-1.8 0.9-1.9 0.5-2 0.1-2-0.3-1.8-0.9-1.5-1.3"/>
<path class="g1" d="M1015.6 373.9l-0.5-0.8-0.6-0.8-0.8-0.7-0.8-0.5-1-0.3-1-0.2"/>
<circle class="d" cx="1013.2" cy="365.4" r="2.9"/>
<path class="g1" d="M1010.9 370.6l-0.9 0.1-1 0.4-0.8 0.6-0.5 0.8-0.3 1 0.1 1 0.4 0.9 0.8 0.7 0.9 0.3 1-0.2 0.8-0.5 0.5-0.9 0-1-0.5-0.9-0.9-0.4-1 0-0.8 0.7-0.2 0.9 0.3 1 0.8 0.6"/>
<circle class="f1" cx="1010" cy="374.5" r="2.1"/>
<path class="g2" d="M1015.6 373.9l-1-1.7-0.5-1.9 0.3-2 0.9-1.8 1.6-1.3 1.9-0.5 2 0.3 1.6 1.2 0.9 1.7 0 2-1 1.7-1.8 1-2-0.2-1.6-1.2-0.6-1.9 0.7-1.9 1.6-1.2 2 0.1 1.6 1.2 0.2 2-0.9 1.7-1.9 0.6"/>
<circle class="f2" cx="1020.7" cy="369.3" r="4.1"/>
<path class="g4" d="M1029.6 372.2l-2.8 2.9-3.5 1.9"/>
<path class="g3" d="M1023.3 377l-2.9 0.6-2.9 0.9-2.6 1.4-2.4 1.8-2 2.3-1.4 2.7"/>
<path class="g1" d="M1009.1 386.7l-0.2 0.9-0.1 1 0.1 1 0.2 1 0.4 0.9 0.6 0.8"/>
<circle class="d" cx="1004.7" cy="394.6" r="2.9"/>
<path class="g1" d="M1010.1 392.3l0.8 0.6 0.9 0.4 1 0.1 1-0.2 0.9-0.5 0.6-0.7 0.4-1-0.1-1-0.5-0.8-0.8-0.7-0.9-0.1-1 0.2-0.7 0.8-0.3 0.9 0.3 1 0.8 0.6 1 0.1 0.8-0.5 0.5-0.9-0.3-1"/>
<circle class="f1" cx="1013.5" cy="390.3" r="2.2"/>
<path class="g3" d="M1009.1 386.7l-0.7 2.9 0.2 3"/>
<path class="g2" d="M1008.6 392.6l0.7 1.8 0.3 2 0.1 2-0.4 2-0.7 1.8-1.2 1.7-1.5 1.2-1.9 0.8"/>
<path class="g1" d="M1004 405.9l-1 0.1-0.9 0.2-1 0.4-0.8 0.6-0.7 0.7-0.6 0.8"/>
<circle class="d" cx="995.2" cy="404.7" r="3.1"/>
<path class="g1" d="M999 408.7l-0.3 0.9-0.1 1 0.2 1 0.5 0.9 0.8 0.6 0.9 0.4 1 0 0.9-0.4 0.7-0.7 0.3-1-0.1-0.9-0.6-0.9-0.9-0.4-1 0.1-0.8 0.6-0.4 0.9 0.2 1 0.8 0.7 1 0 0.7-0.6"/>
<circle class="f1" cx="1001.2" cy="411.1" r="2.3"/>
<path class="g2" d="M1004 405.9l-2 0.2-1.9-0.4-1.7-1.1-1.2-1.6-0.5-2 0.4-2 1.1-1.6 1.8-1 2 0 1.8 0.9 1.1 1.6 0 2-1 1.8-1.8 0.9-2-0.4-1.3-1.5 0-2 1.3-1.5 2-0.2 1.6 1.2 0.2 1.9-1.3 1.6"/>
<circle class="f2" cx="1002" cy="401.2" r="4.2"/>
<path class="g3" d="M1008.6 392.6l1 2.8 1.9 2.3 2.5 1.6 3 0.5 2.9-0.6 2.4-1.8 1.4-2.6 0.1-3-1.4-2.7-2.5-1.7-3-0.1-2.6 1.5-1.3 2.7 0.5 3 2.1 2.1 3 0.5 2.6-1.5 1.4-2.7-0.6-2.9-2.2-2-3-0.3-2.4 1.7-0.7 2.9 1.8 2.5 3 0.5 2.1-2.1"/>
<circle class="f3" cx="1016.6" cy="391.8" r="5.7"/>
<path class="g4" d="M1023.3 377l-3.9 0.8-4-0.6-3.5-1.8-2.7-3-1.4-3.7 0.2-4 1.8-3.6 3.2-2.4 3.9-0.8 3.9 1.2 2.7 2.9 1 3.8-1.2 3.9-3.1 2.5"/>
<path class="y0 w4" d="M1020.2 372.2l-4 0.4-3.6-1.7-1.9-3.5"/>
<path class="y1 w4" d="M1010.7 367.4l0.8-3.9 3.2-2.4 3.9 0.4"/>
<path class="y2 w4" d="M1018.6 361.5l2.7 3-0.2 4-3.1 2.5-4-0.4"/>
<path class="y3 w4" d="M1014 370.6l-2.3-3.3 1.4-3.7 3.6-1.7 3.7 1.6 1 3.9"/>
<path class="y4 w4" d="M1021.4 367.4l-3 2.7-3.9-0.9-1.7-3.6 1.9-3.6 4 0 2.1 3.4-2.2 3.3"/>
<path class="y5 w4" d="M1018.6 368.7l-3.9-1.1-0.9-3.9 3.2-2.4 3.7 1.6 0.5 4-3.4 2-3.6-1.8 0.3-4 3.9-0.9 2.1 3.3"/>
<path class="y6 w4" d="M1020.5 365.5l-2.4 3.3-3.8-1-0.6-3.9 4-0.5 1.3 3.7-3.6 1.7-1.9-3.5 3.1-2.5 2.7 2.9-2.2 3.4-2.8-2.8 2.8-2.8 2.8 2.8-3.1 2.5-3.1-2.6 3.2-2.4 2.1 3.4-3.1 2.5-2.9-2.8 3.7-1.6 1.3 3.8"/>
<path class="g5" d="M1028.7 349.6l2.4 4.4 3.6 3.5 4.5 2.1 5 0.5 4.8-1.4 3.9-3.1 2.3-4.4 0.3-5-1.9-4.6-3.9-3.2-4.9-1-4.7 1.6-3.2 3.8-0.8 5"/>
<path class="y0 w5" d="M1036.1 347.8l2.2 4.5 4.5 2.1 4.9-1.2"/>
<path class="y1 w5" d="M1047.7 353.2l3.5-3.6 0.6-5-2.7-4.2"/>
<path class="y2 w5" d="M1049.1 340.4l-4.9-1.1-4.4 2.4-1.1 4.9 2.2 4.5"/>
<path class="y3 w5" d="M1040.9 351.1l4.9 0.8 3.7-3.4-0.8-4.9-4.1-2.9-4.6 2"/>
<path class="y4 w5" d="M1040 342.7l-1.7 4.7 3 3.9 5-0.5 2.4-4.4-2.4-4.4-5 0.6-1.6 4.8"/>
<path class="y5 w5" d="M1039.7 347.4l3.7 3.4 4.7-1.6 0.9-4.9-4.5-2.1-4 3 1 4.9 5 0.1 2.6-4.3-3.8-3.3-3.9 3.2"/>
<path class="y6 w5" d="M1041.4 345.8l1.6 4.8 4.9-1.2 0.2-5-5-0.1-0.4 5 4.6 1.8 1.9-4.7-3.9-3.1-3.8 3.1 2.5 4.3 4.5-2-2.6-4.2-4.6 2.1 2.7 4.2 3.8-3.3-2.9-4.1-3.8 3.3 3.2 3.8 3.6-3.4-4.4-2.4-2 4.5"/>
<path class="g7" d="M1046.6 318.4l-6.3 2.9-5.5 4.4"/>
<path class="g6" d="M1034.8 325.7l-3.5 4.8-4.3 4.3-4.9 3.4-5.5 2.4-5.9 1.1-6-0.2"/>
<path class="g4" d="M1004.7 341.5l-3.8-1.3-3.6-1.8-3.2-2.4-2.6-3-2-3.5-1-3.8"/>
<path class="g2" d="M988.5 325.7l-0.1-2 0.4-2 0.6-1.9 1-1.7 1.4-1.5 1.6-1.1 1.9-0.7 2-0.1"/>
<path class="g1" d="M997.3 314.7l1 0.3 1 0.1 1-0.1 0.9-0.2 0.9-0.4 0.9-0.6"/>
<circle class="d" cx="1005.3" cy="319.2" r="3.1"/>
<path class="g1" d="M1003 313.8l0.6-0.8 0.4-0.9 0.1-1-0.1-0.9-0.5-0.9-0.8-0.7-0.9-0.3-1 0-0.9 0.5-0.6 0.7-0.2 1 0.2 1 0.8 0.7 0.9 0.3 1-0.3 0.6-0.8 0.2-1-0.6-0.8-0.9-0.4-0.9 0.2"/>
<circle class="f1" cx="1001.1" cy="310.5" r="2.4"/>
<path class="g2" d="M997.3 314.7l1.9 0.5 1.7 1.1 1.2 1.6 0.6 1.9-0.3 2-0.9 1.7-1.7 1.2-2 0.3-1.9-0.6-1.3-1.5-0.5-1.9 0.6-1.9 1.6-1.3 2-0.2 1.7 0.9 1 1.8-0.1 2-1.6 1.3-2-0.1-1.4-1.3 0-2 1.3-1.5"/>
<circle class="f2" cx="999.2" cy="320.8" r="3.9"/>
<path class="g4" d="M988.5 325.7l-0.1-4 1.2-3.9"/>
<path class="g3" d="M989.6 317.8l1.7-2.4 1.3-2.7 0.9-2.9 0.4-3-0.2-3-0.9-2.8"/>
<path class="g1" d="M992.8 301l-0.5-0.9-0.6-0.8-0.7-0.7-0.8-0.5-1-0.4-1-0.1"/>
<circle class="d" cx="990.2" cy="292.6" r="3.2"/>
<path class="g1" d="M988.2 297.6l-1 0-0.9 0.4-0.8 0.6-0.6 0.8-0.3 0.9 0.1 1 0.4 1 0.7 0.6 1 0.4 1-0.1 0.8-0.6 0.5-0.8 0-1-0.5-0.9-0.8-0.5-1 0-0.8 0.6-0.3 1 0.5 0.9 0.8 0.5"/>
<circle class="f1" cx="987.7" cy="300.7" r="2.4"/>
<path class="g3" d="M992.8 301l-1.5-2.6-2.1-2.2"/>
<path class="g2" d="M989.2 296.2l-1.7-0.9-1.6-1.3-1.3-1.4-1.1-1.8-0.6-1.9-0.2-2 0.4-1.9 0.9-1.8"/>
<path class="g1" d="M984 283.2l0.6-0.7 0.6-0.9 0.5-0.9 0.3-0.9 0-1-0.1-1"/>
<circle class="d" cx="991.6" cy="278.9" r="2.6"/>
<path class="g1" d="M985.9 277.8l-0.4-0.9-0.5-0.8-0.8-0.6-1-0.4-1 0-0.9 0.4-0.8 0.6-0.4 0.9-0.1 1 0.4 0.9 0.8 0.7 0.9 0.2 1-0.2 0.7-0.8 0.2-0.9-0.3-1-0.8-0.6-1 0.1-0.8 0.6-0.3 0.9"/>
<circle class="f1" cx="982.5" cy="277.9" r="2.2"/>
<path class="g2" d="M984 283.2l1.3-1.5 1.8-0.9 2-0.3 1.9 0.5 1.7 1.1 1 1.7 0.2 2-0.7 1.9-1.5 1.4-1.9 0.4-1.9-0.5-1.4-1.5-0.4-1.9 0.8-1.9 1.7-1 2 0.1 1.4 1.4 0.2 2-1.3 1.6-2 0.4-1.6-1.1-0.3-2"/>
<circle class="f2" cx="990.7" cy="285.9" r="4.8"/>
<path class="g3" d="M989.2 296.2l-2.6-1.4-2.9-0.6-3 0.5-2.6 1.5-1.8 2.4-0.7 2.9 0.7 3 1.9 2.3 2.7 1.2 3-0.4 2.4-1.8 1-2.8-0.7-2.9-2.2-2-3-0.3-2.7 1.3-1.3 2.7 0.3 3 2.2 2 3-0.2 1.9-2.3 0.1-3-2-2.3-2.9-0.5-2.2 2-0.3 3"/>
<circle class="f3" cx="981.4" cy="301.5" r="5.9"/>
<path class="g4" d="M989.6 317.8l2.2-3.3 3.2-2.4 3.8-1.1 4 0.2 3.6 1.8 2.6 3.1 1 3.8-0.7 4-2.5 3.1-3.7 1.6-4-0.5-3.1-2.5-1.4-3.7 1-3.9"/>
<path class="y0 w4" d="M995.6 318l3-2.7 4-0.2 3.5 1.8"/>
<path class="y1 w4" d="M1006.1 316.9l1.7 3.7-0.8 3.9-3 2.6"/>
<path class="y2 w4" d="M1004 327.1l-3.9 0.3-3-2.6-0.3-4 2.7-3"/>
<path class="y3 w4" d="M999.5 317.8l4 0 2.9 2.7-0.1 4-3.3 2.3-3.8-1.1"/>
<path class="y4 w4" d="M999.2 325.7l-1.9-3.6 2.3-3.3 4 0.4 2.3 3.2-1.5 3.8-4 0-2.3-3.3"/>
<path class="y5 w4" d="M998.1 322.9l1.4-3.8 4 0 2.1 3.4-2.8 2.9-3.4-2 0.3-4 4-0.4 1.2 3.8-2.9 2.7-3.6-1.7"/>
<path class="y6 w4" d="M998.4 323.8l0.7-3.9 4-0.2 0.9 3.8-3.4 2.2-3-2.7 1.8-3.5 3.9 1.1-1.6 3.7-3.8-1.3 0.8-3.9 3.9 1.3-1.4 3.7-3.3-2.2 1.4-3.8 3.2 2.4-2.1 3.4-3.7-1.4 2.3-3.3 2 3.5-3.4 2.1-1.4-3.7"/>
<path class="g6" d="M1004.7 341.5l-5.7-1.9-4.9-3.4"/>
<path class="g5" d="M994.1 336.2l-3-4-3.6-3.5-4-3-4.5-2.2-4.8-1.3-5-0.2"/>
<path class="g3" d="M969.2 322l-3 0.5-2.8 1-2.7 1.3-2.4 1.8-2 2.3-1.4 2.6"/>
<path class="g1" d="M954.9 331.5l-0.3 1-0.1 1 0 1 0.3 1 0.4 0.9 0.5 0.8"/>
<circle class="d" cx="950.6" cy="339.1" r="3"/>
<path class="g1" d="M955.7 337.2l0.8 0.6 0.9 0.4 1 0.2 1-0.2 0.9-0.4 0.6-0.8 0.4-0.9 0-1-0.5-0.9-0.8-0.7-0.9-0.2-1 0.3-0.7 0.7-0.3 1 0.3 0.9 0.7 0.7 1 0.1 0.9-0.5 0.3-0.9-0.2-1"/>
<circle class="f1" cx="958.8" cy="334.9" r="2"/>
<path class="g3" d="M954.9 331.5l-0.8 2.9 0 3"/>
<path class="g2" d="M954.1 337.4l0.6 1.9 0.3 2-0.1 2-0.5 2-0.8 1.8-1.3 1.5-1.6 1.2-1.9 0.7"/>
<path class="g1" d="M948.8 350.5l-1 0-1 0.2-0.9 0.3-0.9 0.5-0.8 0.6-0.6 0.8"/>
<circle class="d" cx="940.7" cy="347.7" r="2.9"/>
<path class="g1" d="M943.6 352.9l-0.4 1-0.1 1 0.2 0.9 0.4 0.9 0.7 0.7 0.9 0.5 1 0 1-0.3 0.7-0.7 0.4-0.9-0.1-1-0.6-0.9-0.8-0.4-1 0-0.9 0.5-0.4 0.9 0.2 1 0.7 0.7 1 0.2 0.9-0.5"/>
<circle class="f1" cx="946.4" cy="355.6" r="1.9"/>
<path class="g2" d="M948.8 350.5l-2 0-1.9-0.5-1.6-1.2-1.1-1.7-0.4-2 0.5-1.9 1.2-1.6 1.8-0.8 2 0 1.7 1 1 1.8 0 2-1.1 1.6-1.9 0.8-1.9-0.4-1.2-1.6 0.1-2 1.3-1.5 2-0.3 1.6 1.2 0.1 2-1.1 1.7"/>
<circle class="f2" cx="947.5" cy="344.9" r="4.2"/>
<path class="g3" d="M954.1 337.4l0.9 2.9 1.7 2.5 2.4 1.8 2.8 0.8 3-0.2 2.7-1.4 1.9-2.3 0.7-2.9-0.7-3-1.9-2.2-2.8-1.1-3 0.5-2.2 1.9-0.9 2.9 0.9 2.9 2.2 2 3 0.4 2.7-1.2 1.1-2.8-1.1-2.8-2.7-1.5-2.8 1-1.4 2.6 1 2.9 2.7 1.2 2.9-1"/>
<circle class="f3" cx="965" cy="340.7" r="6.6"/>
<path class="g5" d="M969.2 322l-5 0.9-4.5 2"/>
<path class="g4" d="M959.7 324.9l-3.1 2.6-3.4 2.1-3.7 1.4-4 0.7-4-0.2-3.8-1.1"/>
<path class="g2" d="M937.7 330.4l-1.7-1-1.6-1.3-1.2-1.5-1-1.8-0.6-1.9-0.1-2 0.4-2 1-1.7"/>
<path class="g1" d="M932.9 317.2l0.7-0.7 0.6-0.8 0.5-0.9 0.3-0.9 0.1-1-0.1-1"/>
<circle class="d" cx="940.6" cy="313.5" r="2.7"/>
<path class="g1" d="M935 311.9l-0.3-1-0.6-0.8-0.7-0.6-1-0.4-1 0-0.9 0.3-0.8 0.6-0.5 0.9-0.1 1 0.4 0.9 0.7 0.7 1 0.3 1-0.3 0.7-0.7 0.2-0.9-0.3-1-0.7-0.6-1 0-0.8 0.6-0.3 0.9"/>
<circle class="f1" cx="931.8" cy="311.9" r="2.3"/>
<path class="g2" d="M932.9 317.2l1.4-1.4 1.8-0.9 2-0.2 1.9 0.5 1.6 1.2 1 1.8 0.1 2-0.7 1.8-1.6 1.3-1.9 0.4-1.9-0.6-1.3-1.5-0.3-2 0.8-1.8 1.8-1 2 0.2 1.5 1.3 0.2 2-1.2 1.6-2 0.4-1.6-1.1-0.7-1.9"/>
<circle class="f2" cx="937.8" cy="319.3" r="3.6"/>
<path class="g4" d="M937.7 330.4l-3.4-2-2.8-3"/>
<path class="g3" d="M931.5 325.4l-1.2-2.7-1.7-2.5-2-2.2-2.4-1.9-2.6-1.3-2.9-0.8"/>
<path class="g1" d="M918.7 314l-1 0-1 0.2-1 0.2-0.9 0.5-0.8 0.6-0.6 0.8"/>
<circle class="d" cx="909.4" cy="311.6" r="3.3"/>
<path class="g1" d="M913.4 316.3l-0.5 0.9-0.1 1 0.1 0.9 0.4 1 0.6 0.7 0.9 0.5 1 0.1 1-0.3 0.7-0.7 0.5-0.9-0.1-1-0.5-0.8-0.8-0.6-1 0-0.9 0.5-0.5 0.9 0.2 1 0.6 0.7 1 0.3 0.9-0.5"/>
<circle class="f1" cx="915.8" cy="318.5" r="2.4"/>
<path class="g3" d="M918.7 314l-3 0-3 0.7"/>
<path class="g2" d="M912.7 314.7l-1.7 1-1.9 0.7-1.9 0.4-2 0-2-0.5-1.8-0.9-1.5-1.3-1.1-1.7"/>
<path class="g1" d="M898.8 312.4l-0.2-0.9-0.4-0.9-0.5-0.9-0.7-0.7-0.8-0.6-0.9-0.4"/>
<circle class="d" cx="899" cy="303.2" r="2.9"/>
<path class="g1" d="M895.3 308l-1-0.2-1 0.1-0.9 0.4-0.8 0.6-0.5 0.8-0.3 1 0.2 1 0.5 0.8 0.9 0.6 1 0.2 0.9-0.3 0.7-0.8 0.3-0.9-0.2-1-0.8-0.7-0.9-0.2-1 0.4-0.5 0.8 0.2 1 0.7 0.7"/>
<circle class="f1" cx="893.2" cy="310.9" r="2.2"/>
<path class="g2" d="M898.8 312.4l-0.5-1.9 0.1-2 0.8-1.8 1.4-1.5 1.9-0.7 2 0 1.8 0.8 1.2 1.6 0.4 2-0.6 1.9-1.5 1.3-1.9 0.4-1.9-0.7-1.1-1.6-0.1-2 1.1-1.7 1.9-0.7 1.8 0.8 0.9 1.8-0.4 1.9-1.7 1.1-1.9-0.7"/>
<circle class="f2" cx="904.1" cy="308.1" r="4.1"/>
<path class="g3" d="M912.7 314.7l-2.6 1.5-2 2.2-1.2 2.8-0.1 3 1 2.8 2.1 2.2 2.7 1.1 3-0.1 2.6-1.6 1.5-2.6 0.1-3-1.5-2.5-2.7-1.4-3 0.4-2.2 2-0.9 2.8 1.1 2.8 2.8 1.2 2.8-0.9 1.8-2.4-0.2-3-1.9-2.3-2.9-0.6-2.5 1.6-0.7 2.9 1.4 2.7"/>
<circle class="f3" cx="913.2" cy="323.5" r="5.6"/>
<path class="g4" d="M931.5 325.4l-1.7-3.6-0.4-4 0.9-3.9 2.2-3.3 3.3-2.2 3.9-0.8 3.9 1 3.1 2.5 1.6 3.7-0.4 4-2.2 3.3-3.7 1.7-3.9-0.5-3.1-2.6"/>
<path class="y0 w4" d="M935 320.7l-1-3.8 1.2-3.8 3.4-2.2"/>
<path class="y1 w4" d="M938.6 310.9l4 0.1 3.1 2.5 0.7 3.9"/>
<path class="y2 w4" d="M946.4 317.4l-2.2 3.3-3.8 1.2-3.4-2.2-1-3.9"/>
<path class="y3 w4" d="M936 315.8l2.4-3.2 3.9-0.8 3.1 2.6 0.1 4-3.3 2.2"/>
<path class="y4 w4" d="M942.2 320.6l-3.8-1.4-1-3.9 2.2-3.4 4 0.5 1.3 3.7-2.2 3.4-4 0.1"/>
<path class="y5 w4" d="M938.7 319.6l-2.3-3.3 1.2-3.8 4-0.3 1.7 3.5-2.2 3.4-3.9-1-0.1-4 3.8-1 2.5 3.2-2.3 3.2"/>
<path class="y6 w4" d="M941.1 319.5l-3.8-1.2 0.3-4 3.9-0.7 1.7 3.7-2.8 2.8-2.8-2.8 2.7-2.9 3.6 1.8-0.5 4-3.9-1 0.8-3.9 4 0.2-1 3.9-3.5-1.9 1.4-3.7 3.3 2.2-2.5 3.2-3.1-2.5 3.2-2.4 2.8 2.8-3.3 2.2"/>
<path class="g5" d="M959.7 324.9l-3.8 3.3-2.6 4.2-1 4.9 1 5 2.8 4.1 4.3 2.6 4.9 0.4 4.7-1.9 3.1-3.9 0.6-5-2-4.6-4.2-2.7-5 0.3-3.9 3.1"/>
<path class="y0 w5" d="M958.6 334.7l-1.2 4.8 2.2 4.5 4.7 1.8"/>
<path class="y1 w5" d="M964.3 345.8l4.9-0.9 3.4-3.6 0.1-5"/>
<path class="y2 w5" d="M972.7 336.3l-3.6-3.5-5 0.2-3.8 3.2-0.6 5"/>
<path class="y3 w5" d="M959.7 341.2l3 4 5 0.2 3.8-3.2-0.6-5-3.8-3.3"/>
<path class="y4 w5" d="M967.1 333.9l-4.8 1.5-0.9 5 3.1 3.9 4.9-1 2.4-4.4-2.5-4.3-5 0.6"/>
<path class="y5 w5" d="M964.3 335.2l-2.1 4.5 2.7 4.1 5 0.1 1.5-4.8-4-2.9-3.8 3.3 2.2 4.5 4.9-0.4 1.7-4.8-3.4-3.6"/>
<path class="y6 w5" d="M969 335.2l-3.9 3 1.2 4.8 5-0.1-0.1-5-4.9-1.1-0.8 5 4.3 2.4 2-4.6-4-3.1-3.3 3.7 3.8 3.2 3.3-3.8-3.9-3.2-3.7 3.3 3.8 3.2 3-3.9-4.5-2.3-2.1 4.6 4.9 1 0.5-4.9-4.9-0.8"/>
<path class="g6" d="M994.1 336.2l-3.6-4.8-1.9-5.7 0.2-6 2.3-5.5 4.4-4.2 5.6-2 6 0.5 5.1 3.1 3 5.2 0.2 6-2.9 5.3-5.2 2.9-6-0.3-4.8-3.7"/>
<path class="y0 w6" d="M996.5 327l-1.7-5.7 2.3-5.5 5.5-2.6"/>
<path class="y1 w6" d="M1002.6 313.2l5.8 1.6 3.7 4.7 0 6"/>
<path class="y2 w6" d="M1012.1 325.5l-4.3 4.2-5.9 0.6-4.4-4.1-0.1-6"/>
<path class="y3 w6" d="M997.4 320.2l4.4-4.1 5.9 0.9 3.5 4.9-1.4 5.8-5.5 2.5"/>
<path class="y4 w6" d="M1004.3 330.2l-5.6-2.2-2-5.6 3.3-5 6-0.8 3.4 4.9-2.5 5.4-6 0.5"/>
<path class="y5 w6" d="M1000.9 327.4l-3.2-5.1 3.5-4.8 5.8 1.8 1.3 5.8-4.3 4.2-4.9-3.5 1.7-5.8 5.8-1.4 1.9 5.7-4.8 3.5"/>
<path class="y6 w6" d="M1003.7 327.8l-4.6-3.9 1.6-5.8 6 0.2 1.9 5.7-5.1 3.1-4.7-3.6 4.1-4.3 5.1 3.2-2.9 5.2-5.5-2.4 1.2-5.9 5.5 2.3-0.9 5.9-5.9-1.2 2.5-5.5 5.4 2.5-3.4 4.9-3.5-4.9 4.7-3.8 2.3 5.6-5.8 1.7"/>
<path class="g9" d="M1084.8 330.5l-6.8-6-8-4.1"/>
<path class="g8" d="M1070 320.4l-7.8-1.6-7.5-2.8-6.9-4-6-5.3-4.7-6.5-3.2-7.3"/>
<path class="g6" d="M1033.9 292.9l-1-5.9 0-6 1-6 2.1-5.6 3.3-5 4.4-4"/>
<path class="g4" d="M1043.7 260.4l3.6-1.8 3.8-1.3 3.9-0.5 4 0.2 3.9 1.1 3.4 2"/>
<path class="g2" d="M1066.3 260.1l1.4 1.5 1.2 1.6 0.8 1.8 0.5 2 0.1 2-0.4 1.9-0.9 1.8-1.4 1.5"/>
<path class="g1" d="M1067.6 274.2l-0.8 0.5-0.8 0.6-0.7 0.7-0.6 0.8-0.3 1-0.2 1"/>
<circle class="d" cx="1058.9" cy="276.3" r="2.9"/>
<path class="g1" d="M1064.2 278.8l0.1 1 0.3 0.9 0.6 0.8 0.8 0.6 1 0.3 1-0.1 0.9-0.4 0.7-0.7 0.3-0.9-0.1-1-0.5-0.9-0.9-0.5-1 0-0.9 0.5-0.5 0.8 0.1 1 0.6 0.8 1 0.3 0.9-0.4 0.6-0.8"/>
<circle class="f1" cx="1067.5" cy="280" r="2.4"/>
<path class="g2" d="M1067.6 274.2l-1.7 1-2 0.3-1.9-0.3-1.8-0.9-1.2-1.6-0.5-2 0.4-1.9 1.2-1.6 1.8-0.9 2 0.1 1.7 1.1 0.8 1.8-0.2 2-1.3 1.5-1.9 0.5-1.9-0.7-1.2-1.6 0-2 1.1-1.6 1.8-0.7 2 0.5 1 1.7"/>
<circle class="f2" cx="1062.1" cy="268.8" r="4.7"/>
<path class="g4" d="M1066.3 260.1l2.8 2.9 1.9 3.5"/>
<path class="g3" d="M1071 266.5l0.5 3 0.8 2.9 1.4 2.7 1.7 2.4 2.3 2 2.6 1.5"/>
<path class="g1" d="M1080.3 281l0.9 0.2 1 0.2 1-0.1 1-0.2 0.9-0.4 0.8-0.6"/>
<circle class="d" cx="1088.1" cy="285.7" r="2.9"/>
<path class="g1" d="M1085.9 280.1l0.7-0.7 0.4-0.9 0.1-1-0.1-1-0.5-0.9-0.7-0.7-1-0.3-1 0-0.9 0.5-0.6 0.7-0.2 1 0.3 1 0.7 0.7 0.9 0.3 1-0.3 0.6-0.7 0.2-1-0.5-0.9-0.9-0.4-1 0.1"/>
<circle class="f1" cx="1083.8" cy="276.9" r="1.9"/>
<path class="g3" d="M1080.3 281l2.9 0.8 3-0.1"/>
<path class="g2" d="M1086.2 281.7l1.9-0.6 1.9-0.3 2 0 2 0.4 1.8 0.9 1.6 1.2 1.2 1.6 0.7 1.9"/>
<path class="g1" d="M1099.3 286.8l0.1 1 0.2 0.9 0.3 1 0.5 0.8 0.7 0.8 0.8 0.6"/>
<circle class="d" cx="1097.3" cy="295.6" r="2.9"/>
<path class="g1" d="M1101.9 291.9l1 0.3 1 0.1 0.9-0.1 0.9-0.5 0.7-0.7 0.4-0.9 0-1-0.3-1-0.7-0.7-0.9-0.3-1 0.1-0.9 0.5-0.4 0.9 0 1 0.6 0.8 0.9 0.4 1-0.1 0.6-0.8 0-1-0.5-0.9"/>
<circle class="f1" cx="1103.9" cy="288.9" r="2.1"/>
<path class="g2" d="M1099.3 286.8l0.1 2-0.5 1.9-1.1 1.6-1.7 1.2-1.9 0.4-2-0.5-1.6-1.2-0.9-1.7 0-2 1-1.8 1.7-1 2 0 1.7 1 0.8 1.9-0.4 1.9-1.5 1.4-1.9 0.3-1.7-1.1-0.5-1.9 1-1.8 2-0.4 1.7 1.1"/>
<circle class="f2" cx="1094.2" cy="289.4" r="3.9"/>
<path class="g3" d="M1086.2 281.7l2.8-0.9 2.4-1.8 1.7-2.5 0.7-2.9-0.6-2.9-1.6-2.5-2.6-1.6-3-0.2-2.7 1.2-1.8 2.4-0.4 3 1.4 2.7 2.5 1.5 3-0.2 2.3-2 0.7-2.9-1.4-2.7-2.8-1.1-2.9 1-1.4 2.7 0.6 2.9 2.5 1.7 2.9-0.4 1.8-2.5-0.3-2.9-2.3-2"/>
<circle class="f3" cx="1086.3" cy="273.6" r="6.5"/>
<path class="g4" d="M1071 266.5l0.6 4-0.6 3.9-2 3.5-3.1 2.6-3.8 1.2-4-0.5-3.4-2.1-2.1-3.3-0.4-4 1.6-3.7 3.2-2.4 4-0.4 3.5 1.8 2 3.5"/>
<path class="y0 w4" d="M1066.5 270.6l-0.4 4-2.4 3.1-4 0.8"/>
<path class="y1 w4" d="M1059.7 278.5l-3.5-1.9-1.2-3.8 1.2-3.8"/>
<path class="y2 w4" d="M1056.2 269l3.4-2 3.9 1 1.6 3.6-1.7 3.7"/>
<path class="y3 w4" d="M1063.4 275.3l-3.9 0.8-2.9-2.7 0.2-3.9 3.3-2.4 3.7 1.5"/>
<path class="y4 w4" d="M1063.8 268.6l1.5 3.7-2 3.5-4 0-2.4-3.2 1.5-3.7 3.9-0.8 2.8 2.9"/>
<path class="y5 w4" d="M1065.1 271l-1.5 3.7-3.9 0.6-2.6-3 2.4-3.2 3.8 1 0.6 3.9-3.1 2.5-3.2-2.4 0.7-3.9 4-0.4"/>
<path class="y6 w4" d="M1062.3 269.8l1.5 3.7-3.2 2.5-2.4-3.2 1.9-3.5 4 0.4 0.6 3.9-4 0.5-0.9-3.9 3.6-1.7 2.7 3-2.3 3.3-3.3-2.2 1.3-3.8 3.8 1-2 3.5-2.8-2.9 3.3-2.3 1.3 3.7-3.8 1.3-1.8-3.6 3.7-1.6"/>
<path class="g6" d="M1043.7 260.4l5.4-2.7 5.8-1.2"/>
<path class="g5" d="M1054.9 256.5l5 0.4 5-0.2 4.9-1.1 4.6-1.8 4.2-2.8 3.5-3.6"/>
<path class="g3" d="M1082.1 247.4l1.4-2.6 1.1-2.8 0.7-2.9 0.1-3-0.5-3-1.1-2.8"/>
<path class="g1" d="M1083.8 230.3l-0.5-0.8-0.7-0.7-0.8-0.6-0.9-0.5-1-0.3-1 0"/>
<circle class="d" cx="1080.9" cy="221.8" r="2.8"/>
<path class="g1" d="M1078.9 227.4l-1 0.2-0.9 0.4-0.7 0.7-0.5 0.8-0.2 1 0.1 1 0.5 0.9 0.8 0.6 1 0.2 1-0.2 0.8-0.6 0.4-0.9-0.1-1-0.6-0.8-0.9-0.4-1 0.1-0.7 0.7-0.3 0.9 0.5 0.9 0.9 0.4"/>
<circle class="f1" cx="1078.3" cy="231.2" r="2.1"/>
<path class="g3" d="M1083.8 230.3l-1.7-2.4-2.3-1.9"/>
<path class="g2" d="M1079.8 226l-1.9-0.8-1.7-1.1-1.5-1.3-1.2-1.6-0.8-1.8-0.4-2 0.2-2 0.6-1.8"/>
<path class="g1" d="M1073.1 213.6l0.6-0.8 0.5-0.9 0.4-0.9 0.2-1-0.1-1-0.2-1"/>
<circle class="d" cx="1080.7" cy="208.2" r="2.9"/>
<path class="g1" d="M1074.5 208l-0.5-0.9-0.6-0.7-0.9-0.5-1-0.3-1 0.1-0.9 0.5-0.6 0.7-0.4 0.9 0.1 1 0.5 0.9 0.8 0.6 1 0.1 0.9-0.4 0.6-0.7 0.1-1-0.4-0.9-0.9-0.5-0.9 0.1-0.8 0.7 0 1"/>
<circle class="f1" cx="1070.7" cy="208.5" r="2.1"/>
<path class="g2" d="M1073.1 213.6l1.3-1.6 1.6-1.2 1.9-0.4 2 0.2 1.8 1 1.2 1.6 0.4 1.9-0.5 2-1.3 1.5-1.9 0.7-2-0.4-1.5-1.3-0.5-1.9 0.5-1.9 1.6-1.3 2 0.1 1.7 1.1 0.7 1.8-0.7 1.9-1.7 1.1-2-0.4-1.2-1.6"/>
<circle class="f2" cx="1078.9" cy="215.4" r="3.7"/>
<path class="g3" d="M1079.8 226l-2.8-1.2-3-0.3-2.9 0.7-2.5 1.7-1.7 2.5-0.7 2.9 0.6 2.9 1.8 2.4 2.7 1.4 3 0 2.6-1.5 1.5-2.6 0-3-1.7-2.5-2.8-1.2-2.9 0.6-2 2.2-0.5 3 1.2 2.7 2.6 1.5 3-0.7 1.8-2.3 0-3-2.2-2-3 0.6-1.3 2.6"/>
<circle class="f3" cx="1073.8" cy="233.5" r="5.1"/>
<path class="g5" d="M1082.1 247.4l2.4-4.3 1.3-4.9"/>
<path class="g4" d="M1085.8 238.2l-0.2-4 0.5-4 1.2-3.8 1.9-3.5 2.6-3 3.3-2.3"/>
<path class="g2" d="M1095.1 217.6l1.9-0.7 1.9-0.4 2 0 2 0.4 1.8 0.7 1.6 1.2 1.3 1.6 0.8 1.8"/>
<path class="g1" d="M1108.4 222.2l0 1 0.3 1 0.4 0.9 0.5 0.9 0.7 0.7 0.8 0.6"/>
<circle class="d" cx="1106.9" cy="230.7" r="2.9"/>
<path class="g1" d="M1111.1 227.3l0.9 0.3 1 0.1 1-0.2 0.9-0.5 0.7-0.7 0.3-1 0-1-0.3-0.9-0.8-0.7-0.9-0.3-1 0.1-0.8 0.6-0.4 0.9 0 1 0.6 0.8 0.9 0.4 1-0.2 0.6-0.8 0.1-1-0.5-0.8"/>
<circle class="f1" cx="1113.2" cy="224.8" r="2.4"/>
<path class="g2" d="M1108.4 222.2l0.1 2-0.4 2-1.1 1.6-1.7 1.2-1.9 0.5-2-0.4-1.6-1.2-1-1.7 0-2 0.9-1.8 1.7-1.1 2 0 1.7 1 0.9 1.8-0.3 2-1.4 1.5-1.9 0.5-1.9-0.7-1-1.8 0.3-1.9 1.6-1.3 1.9 0.4"/>
<circle class="f2" cx="1102.6" cy="225.1" r="3.9"/>
<path class="g4" d="M1095.1 217.6l3.7-1.4 4-0.2"/>
<path class="g3" d="M1102.8 216l2.9 0.9 3 0.4 3 0 2.9-0.6 2.8-1.1 2.5-1.7"/>
<path class="g1" d="M1119.9 213.9l0.7-0.7 0.5-0.9 0.4-0.9 0.3-1 0-1-0.1-0.9"/>
<circle class="d" cx="1127.8" cy="209.1" r="2.8"/>
<path class="g1" d="M1121.7 208.5l-0.4-1-0.6-0.7-0.9-0.6-0.9-0.3-1 0-0.9 0.4-0.8 0.6-0.4 0.9 0 1 0.4 1 0.8 0.6 1 0.2 0.9-0.3 0.7-0.7 0.2-1-0.4-0.9-0.8-0.6-1 0-0.7 0.7-0.1 1"/>
<circle class="f1" cx="1118.3" cy="208.7" r="2.1"/>
<path class="g3" d="M1119.9 213.9l2-2.2 1.3-2.7"/>
<path class="g2" d="M1123.2 209l0.4-2 0.6-1.9 1-1.7 1.3-1.6 1.6-1.2 1.8-0.8 2-0.3 2 0.3"/>
<path class="g1" d="M1133.9 199.8l0.9 0.4 1 0.3 0.9 0.1 1 0 1-0.3 0.9-0.4"/>
<circle class="d" cx="1140.6" cy="205.6" r="2.8"/>
<path class="g1" d="M1139.6 199.9l0.8-0.7 0.5-0.8 0.4-0.9 0-1-0.3-1-0.7-0.8-0.8-0.5-1-0.1-1 0.3-0.7 0.6-0.4 1 0.1 1 0.5 0.8 0.9 0.4 1-0.1 0.8-0.6 0.3-1-0.3-0.9-0.8-0.6-1 0.1"/>
<circle class="f1" cx="1138.8" cy="196.9" r="2.5"/>
<path class="g2" d="M1133.9 199.8l1.8 0.8 1.5 1.4 0.9 1.8 0.2 1.9-0.6 2-1.3 1.5-1.8 0.8-2 0-1.8-1-1-1.6-0.1-2 0.9-1.8 1.7-1 2 0.2 1.6 1.2 0.7 1.9-0.7 1.9-1.7 1.1-2-0.1-1.6-1.3-0.3-2 1-1.7"/>
<circle class="f2" cx="1132.7" cy="205" r="4.2"/>
<path class="g3" d="M1123.2 209l0.6-3-0.5-2.9-1.4-2.7-2.3-1.9-2.8-0.9-3 0.3-2.5 1.6-1.6 2.5-0.2 3 1.3 2.7 2.6 1.6 3 0 2.5-1.6 1.1-2.8-0.8-2.9-2.2-2.1-3-0.2-2.4 1.7-0.8 2.9 1.5 2.6 2.9 0.8 2.6-1.3 1.3-2.8-1.4-2.6-2.8-1-2.5 1.7"/>
<circle class="f3" cx="1113.9" cy="202.2" r="6.5"/>
<path class="g4" d="M1102.8 216l3.9 1.2 3.3 2.2 2.4 3.2 1.1 3.8-0.3 4-1.8 3.6-3.1 2.5-3.8 1.1-4-0.8-3.1-2.4-1.7-3.7 0.4-4 2.3-3.2 3.7-1.6"/>
<path class="y0 w4" d="M1102.1 221.9l3.9 0.6 2.9 2.8 0.7 4"/>
<path class="y1 w4" d="M1109.6 229.3l-2 3.5-3.5 1.8-3.9-0.9"/>
<path class="y2 w4" d="M1100.2 233.7l-2.1-3.4 0.9-3.9 3.2-2.4 4 0.4"/>
<path class="y3 w4" d="M1106.2 224.4l2.4 3.1-0.7 4-3.5 1.8-3.8-1.2-1.6-3.6"/>
<path class="y4 w4" d="M1099 228.5l1.8-3.6 3.8-1.2 3.2 2.4-0.4 3.9-3.5 2-3.3-2.3 0.5-4"/>
<path class="y5 w4" d="M1101.1 225.7l3.5-1.9 3.5 2-0.5 4-4 0.8-1.5-3.7 3.1-2.5 3.5 1.9-1.3 3.8-3.9 0.6-1.5-3.8"/>
<path class="y6 w4" d="M1102 226.9l3.1-2.6 3.4 2-1.9 3.5-4-0.5 0-4 3.9-1 1.7 3.6-2.9 2.8-3.5-1.9 1.6-3.7 3.2 2.4-2.2 3.3-2.7-2.9 3-2.6 2.8 2.9-3.2 2.4-3-2.7 2.3-3.3 2.6 3-2.5 3.1-3.2-2.4"/>
<path class="g5" d="M1085.8 238.2l-0.2-5-1.6-4.7-3.1-4-4.1-2.7-4.9-1.1-5 0.8-4.2 2.7-2.7 4.2-0.7 4.9 1.6 4.8 3.6 3.4 4.8 1.3 4.8-1.3 3.5-3.6"/>
<path class="y0 w5" d="M1077.6 237.9l0.9-4.9-2.2-4.5-4.4-2.4"/>
<path class="y1 w5" d="M1071.9 226.1l-4.9 1-3.4 3.7 0 5"/>
<path class="y2 w5" d="M1063.6 235.8l3.3 3.7 5 0.2 3.9-3.1 0.4-5"/>
<path class="y3 w5" d="M1076.2 231.6l-2.9-4-5-0.2-3.6 3.4 0.3 5 3.7 3.3"/>
<path class="y4 w5" d="M1068.7 239.1l5-0.7 3-3.9-1.5-4.8-4.6-2-4.2 2.7 0.1 5 4 3"/>
<path class="y5 w5" d="M1070.5 238.4l4.8-1.5 0.1-5-4.6-1.9-4.2 2.6 0.6 5 4.9 0.7 2.7-4.3-3.7-3.4-4.1 2.9 1.3 4.8"/>
<path class="y6 w5" d="M1068.3 238.3l5-0.7 1-4.9-4.8-1.2-2 4.6 3.7 3.4 4.4-2.3-1.1-4.9-5-0.6-1.1 4.9 5 0.2 1.5-4.7-4.5-2.3-3 3.9 4.1 2.9 3.1-3.9-3.6-3.4-2.3 4.5 4 3 3.1-3.9-3.4-3.7-2.3 4.5"/>
<path class="g6" d="M1054.9 256.5l6 0.5 5.6 2.3 4.6 3.8 3 5.2 1.2 5.9-1.1 5.9-3.2 5.1-4.9 3.4-5.9 1.1-5.8-1.4-4.6-3.9-2.3-5.5 0.5-6 3.4-5"/>
<path class="y0 w6" d="M1051.4 267.9l5.4-2.6 5.9 1 4.3 4.1"/>
<path class="y1 w6" d="M1067 270.4l0.7 6-3.4 5-5.7 1.7"/>
<path class="y2 w6" d="M1058.6 283.1l-5.3-2.8-2.1-5.6 1.7-5.8 5.3-3"/>
<path class="y3 w6" d="M1058.2 265.9l5.4 2.5 1.8 5.7-3.1 5.2-5.7 1.8-5.1-3.1"/>
<path class="y4 w6" d="M1051.5 278l-0.3-6 4.2-4.3 5.9 0.4 2.8 5.3-3.1 5.1-5.9-1-1.7-5.8"/>
<path class="y5 w6" d="M1053.4 271.7l3.5-4.8 5.9 1.5 1.1 5.9-5.2 3-4.4-4 1.6-5.8 6 0.8 0.3 6-5.8 1.5-3.3-5"/>
<path class="y6 w6" d="M1053.1 270.8l3.6-4.9 5 3.3-2.9 5.3-5.9-1.4 1-5.9 6-0.6 0.4 5.9-5.7 2.1-2.5-5.5 5.3-2.9 2.8 5.3-4.6 3.9-4.3-4.3 4.2-4.3 3.3 5-5.6 2-1-6 6-0.5 0.4 6-6-0.4 0-6"/>
<path class="g8" d="M1033.9 292.9l-1.3-7.9 0.9-8"/>
<path class="g7" d="M1033.5 277l3-6.3 2.1-6.7 1-6.9-0.3-7-1.5-6.8-3-6.4"/>
<path class="g5" d="M1034.8 236.9l-3.1-3.9-3.5-3.5-4.1-2.9-4.6-2.1-4.8-1.2-5-0.2"/>
<path class="g3" d="M1009.7 223.1l-3 0.6-2.8 0.9-2.6 1.4-2.4 1.9-2 2.3-1.4 2.6"/>
<path class="g1" d="M995.5 232.8l-0.2 1-0.1 1 0 1 0.2 0.9 0.5 1 0.6 0.8"/>
<circle class="d" cx="991.4" cy="240.6" r="3.1"/>
<path class="g1" d="M996.5 238.5l0.7 0.6 0.9 0.4 1 0.1 1-0.2 0.9-0.4 0.7-0.8 0.3-0.9-0.1-1-0.4-0.9-0.8-0.6-1-0.2-0.9 0.2-0.7 0.7-0.3 1 0.3 1 0.7 0.6 1 0.1 0.9-0.4 0.5-0.9-0.1-1"/>
<circle class="f1" cx="1000.2" cy="236.2" r="2.4"/>
<path class="g3" d="M995.5 232.8l-0.7 2.9 0 3"/>
<path class="g2" d="M994.8 238.7l0.6 1.9 0.3 2 0 2-0.5 2-0.8 1.8-1.3 1.5-1.6 1.2-1.8 0.7"/>
<path class="g1" d="M989.7 251.8l-1 0.1-1 0.1-1 0.4-0.8 0.5-0.8 0.6-0.6 0.9"/>
<circle class="d" cx="981.1" cy="249.8" r="2.8"/>
<path class="g1" d="M984.5 254.4l-0.3 0.9-0.2 1 0.2 1 0.4 0.9 0.8 0.7 0.9 0.4 1 0 0.9-0.3 0.7-0.7 0.4-1-0.1-1-0.5-0.8-0.9-0.5-1 0.1-0.9 0.5-0.4 0.9 0.2 1 0.7 0.7 1 0.1 0.8-0.7"/>
<circle class="f1" cx="986.9" cy="256.6" r="2.2"/>
<path class="g2" d="M989.7 251.8l-2 0.1-2-0.5-1.6-1.2-1.1-1.7-0.4-1.9 0.5-2 1.2-1.6 1.8-0.9 2 0.1 1.7 1 1 1.7 0 2-1.1 1.7-1.8 0.8-2-0.4-1.3-1.5 0-2 1.4-1.5 1.9-0.4 1.8 0.9 0.6 1.9-0.7 1.9"/>
<circle class="f2" cx="987.2" cy="247.2" r="4"/>
<path class="g3" d="M994.8 238.7l0.9 2.9 1.8 2.4 2.4 1.8 2.9 0.8 2.9-0.2 2.7-1.5 1.8-2.3 0.7-2.9-0.7-3-1.9-2.2-2.9-1.1-2.9 0.6-2.3 1.9-0.8 2.9 0.9 2.9 2.4 1.8 3 0.1 2.4-1.9 0.4-3-1.6-2.5-2.8-1-2.8 1.1-0.9 2.9 1.2 2.7 2.9 0.8 2.4-1.8"/>
<circle class="f3" cx="1003.8" cy="238.9" r="5.3"/>
<path class="g5" d="M1009.7 223.1l-4.9 0.9-4.5 2.3"/>
<path class="g4" d="M1000.3 226.3l-2.9 2.7-3.3 2.3-3.6 1.7-3.9 0.9-4 0.2-3.9-0.8"/>
<path class="g2" d="M978.7 233.3l-1.8-0.9-1.7-1.1-1.4-1.4-1.1-1.7-0.8-1.9-0.2-1.9 0.2-2 0.8-1.9"/>
<path class="g1" d="M972.7 220.5l0.6-0.7 0.5-0.9 0.4-0.9 0.3-1 0-1-0.2-0.9"/>
<circle class="d" cx="980.1" cy="215.4" r="2.9"/>
<path class="g1" d="M974.3 215.1l-0.4-1-0.7-0.7-0.8-0.6-1-0.3-1 0.1-0.9 0.4-0.7 0.7-0.4 0.9 0 1 0.5 0.9 0.8 0.6 0.9 0.2 1-0.3 0.6-0.8 0.2-1-0.4-0.9-0.8-0.5-1-0.1-0.8 0.6-0.2 1"/>
<circle class="f1" cx="970.5" cy="215.2" r="1.9"/>
<path class="g2" d="M972.7 220.5l1.2-1.5 1.8-1 1.9-0.4 2 0.3 1.7 1.1 1.1 1.6 0.3 2-0.5 1.9-1.4 1.4-1.9 0.6-2-0.4-1.4-1.4-0.5-1.9 0.7-1.9 1.6-1.2 2 0 1.5 1.4 0.1 2-0.9 1.7-1.8 0.9-2-0.4-1.2-1.6"/>
<circle class="f2" cx="975.8" cy="223.8" r="4.9"/>
<path class="g4" d="M978.7 233.3l-3.6-1.8-3-2.6"/>
<path class="g3" d="M972.1 228.9l-1.6-2.6-1.9-2.3-2.3-2-2.5-1.5-2.8-1.1-3-0.4"/>
<path class="g1" d="M958 219l-1 0.1-1 0.2-0.9 0.4-0.8 0.5-0.8 0.7-0.5 0.9"/>
<circle class="d" cx="948.9" cy="217.5" r="3.1"/>
<path class="g1" d="M953 221.8l-0.4 0.9 0 1 0.2 1 0.4 0.8 0.8 0.7 0.9 0.4 1 0 0.9-0.4 0.7-0.7 0.4-1-0.2-0.9-0.6-0.9-0.9-0.4-1 0.1-0.8 0.6-0.3 0.9 0.2 1 0.7 0.6 1 0.2 0.9-0.5"/>
<circle class="f1" cx="956.4" cy="224.1" r="2.1"/>
<path class="g3" d="M958 219l-3 0.3-2.8 1"/>
<path class="g2" d="M952.2 220.3l-1.7 1.1-1.8 0.9-1.9 0.5-2 0.2-2-0.3-1.8-0.7-1.6-1.2-1.3-1.6"/>
<path class="g1" d="M938.1 219.2l-0.3-1-0.5-0.8-0.6-0.8-0.7-0.7-0.9-0.5-0.9-0.4"/>
<circle class="d" cx="937.3" cy="210.2" r="3.1"/>
<path class="g1" d="M934.2 215l-1 0-1 0.1-0.9 0.5-0.7 0.7-0.5 0.9-0.1 1 0.3 0.9 0.6 0.8 0.9 0.5 1 0.1 0.9-0.4 0.6-0.8 0.2-1-0.3-0.9-0.8-0.6-1-0.2-0.9 0.5-0.4 0.9 0.1 1 0.7 0.7"/>
<circle class="f1" cx="932.7" cy="218.2" r="2.3"/>
<path class="g2" d="M938.1 219.2l-0.6-1.9-0.1-2 0.6-1.9 1.3-1.5 1.8-1 2-0.1 1.8 0.7 1.4 1.4 0.6 1.9-0.5 2-1.3 1.5-1.9 0.5-2-0.5-1.3-1.5-0.2-2 1.2-1.7 1.9-0.4 1.9 0.8 0.9 1.8-0.2 2-1.6 1.2-2-0.2"/>
<circle class="f2" cx="943" cy="217.1" r="4.8"/>
<path class="g3" d="M952.2 220.3l-2.5 1.7-1.8 2.3-1 2.9 0.1 3 1.2 2.7 2.1 2.1 2.9 1 3-0.3 2.5-1.6 1.5-2.6 0-3-1.5-2.6-2.6-1.4-3 0.3-2.4 1.9-0.9 2.8 1.1 2.8 2.6 1.5 2.9-0.6 2.2-2 0.1-3-2.1-2.2-3 0-2.1 2.1-0.3 3 1.8 2.4"/>
<circle class="f3" cx="955.5" cy="230.7" r="5.5"/>
<path class="g4" d="M972.1 228.9l-2.1-3.4-1-3.9 0.4-4 1.7-3.6 2.9-2.7 3.8-1.5 4 0.2 3.5 1.9 2.4 3.2 0.7 3.9-1.3 3.8-3 2.7-3.9 0.8-3.7-1.3"/>
<path class="y0 w4" d="M976.5 225l-2.5-3.2-0.4-4 1.8-3.5"/>
<path class="y1 w4" d="M975.4 214.3l3.6-1.7 3.9 0.7 2.9 2.8"/>
<path class="y2 w4" d="M985.8 216.1l0 4-2.5 3.1-3.9 0.6-3.3-2.3"/>
<path class="y3 w4" d="M976.1 221.5l-0.4-4 3-2.7 3.8 1.1 2 3.5-1.2 3.8"/>
<path class="y4 w4" d="M983.3 223.2l-3.7 1.4-3.4-2-0.6-4 3.2-2.3 3.7 1.4 0.4 4-3.6 1.8"/>
<path class="y5 w4" d="M979.3 223.5l-3.1-2.5 0.3-4 3.4-2.1 3 2.6-0.6 3.9-3.8 1.3-1.9-3.5 3.1-2.4 2.9 2.7-1 3.9"/>
<path class="y6 w4" d="M981.6 223.4l-3.9-0.7-0.6-4 3.4-2.1 2.1 3.4-3.4 2.1-1.8-3.6 3.6-1.9 2.8 2.8-2.1 3.4-3.9-1 1-3.9 4 0.1 0.3 4-3.9 0.9-1.3-3.8 3.7-1.6 0.8 3.9-3.8 1 0.4-4 4 0 0 4"/>
<path class="g5" d="M1000.3 226.3l-3.6 3.4-2.3 4.4-0.7 5 1.2 4.9 3 4 4.3 2.4 5 0.3 4.6-2 3.1-3.9 0.7-5-2-4.6-4.1-2.8-5 0-4.1 2.9"/>
<path class="y0 w5" d="M1000.4 235.3l-1.5 4.8 1.3 4.8 3.7 3.4"/>
<path class="y1 w5" d="M1003.9 248.3l5 0 3.8-3.2 1-4.9"/>
<path class="y2 w5" d="M1013.7 240.2l-2.5-4.4-4.8-1.2-4.3 2.6-0.7 4.9"/>
<path class="y3 w5" d="M1001.4 242.1l3 4 5 0.4 3.8-3.2-0.4-5-4.3-2.5"/>
<path class="y4 w5" d="M1008.5 235.8l-4.6 2-1.4 4.8 3.4 3.7 5 0 2.8-4.2-2.9-4-5-0.3"/>
<path class="y5 w5" d="M1005.8 237.8l-3.3 3.8 1.6 4.7 4.9 1 3.6-3.5-2.1-4.5-5-0.3-2.2 4.5 3.3 3.8 4.7-1.7-0.5-5"/>
<path class="y6 w5" d="M1010.8 240.6l-4.8-1.1-1.6 4.8 4.5 2 3.3-3.8-3.3-3.8-4.7 1.6 1.4 4.8 4.7-1.8-1.7-4.7-4.8 1.3 2.3 4.4 4.8-1.3-0.1-5-5 0.1-0.3 5 5 0.5-1.2-4.8-5 0.2 1 4.9 4.6-2-3.1-4"/>
<path class="g7" d="M1034.8 236.9l-4.3-5.5-5.5-4.3"/>
<path class="g6" d="M1025 227.1l-5.5-2.4-5.1-3.2-4.4-4-3.7-4.8-2.5-5.4-1.2-5.9"/>
<path class="g4" d="M1002.6 201.4l0.2-4 0.8-3.9 1.5-3.7 2.2-3.4 2.8-2.8 3.4-2.1"/>
<path class="g2" d="M1013.5 181.5l2-0.6 1.9-0.2 2 0.1 2 0.5 1.8 0.9 1.5 1.3 1.2 1.6 0.6 1.9"/>
<path class="g1" d="M1026.5 187l0 1 0.2 1 0.3 0.9 0.5 0.9 0.6 0.8 0.8 0.6"/>
<circle class="d" cx="1024.3" cy="195.6" r="2.9"/>
<path class="g1" d="M1028.9 192.2l0.9 0.4 1 0.1 1-0.1 0.9-0.4 0.7-0.7 0.5-0.9 0-1-0.3-1-0.7-0.7-0.9-0.4-1 0.1-0.8 0.5-0.5 0.9 0 1 0.5 0.8 0.9 0.4 1-0.1 0.7-0.7 0.3-1-0.3-0.9"/>
<circle class="f1" cx="1031.4" cy="189.3" r="2.1"/>
<path class="g2" d="M1026.5 187l0.1 2-0.6 1.9-1.2 1.6-1.7 1.1-2 0.3-1.9-0.5-1.6-1.2-0.8-1.9 0-2 1.1-1.7 1.7-0.9 2 0 1.7 1.2 0.7 1.8-0.4 2-1.5 1.3-2 0.3-1.8-0.9-0.6-1.9 0.6-1.9 1.6-1.2 2 0.5"/>
<circle class="f2" cx="1021.2" cy="190" r="4.5"/>
<path class="g4" d="M1013.5 181.5l3.9-1.1 4 0"/>
<path class="g3" d="M1021.4 180.4l2.8 0.9 3 0.6 3 0 3-0.5 2.8-1 2.5-1.6"/>
<path class="g1" d="M1038.5 178.8l0.7-0.7 0.6-0.8 0.4-0.9 0.3-1 0.1-1-0.1-1"/>
<circle class="d" cx="1046.1" cy="174.9" r="2.8"/>
<path class="g1" d="M1040.5 173.4l-0.4-0.9-0.6-0.8-0.8-0.6-0.9-0.4-1 0-0.9 0.3-0.8 0.7-0.5 0.9 0 1 0.4 0.9 0.7 0.7 1 0.2 1-0.2 0.7-0.8 0.2-0.9-0.3-1-0.8-0.6-1 0.1-0.8 0.6-0.1 1"/>
<circle class="f1" cx="1037.2" cy="173.6" r="2.1"/>
<path class="g3" d="M1038.5 178.8l2.1-2.2 1.4-2.6"/>
<path class="g2" d="M1042 174l0.5-1.9 0.8-1.9 1-1.7 1.4-1.4 1.7-1.2 1.8-0.7 2-0.2 2 0.4"/>
<path class="g1" d="M1053.2 165.4l0.9 0.5 0.9 0.3 1 0.2 1 0 1-0.2 0.9-0.4"/>
<circle class="d" cx="1059.5" cy="171.4" r="2.8"/>
<path class="g1" d="M1058.9 165.8l0.8-0.6 0.6-0.7 0.4-1 0-1-0.2-0.9-0.6-0.9-0.8-0.5-1-0.2-1 0.2-0.8 0.6-0.4 0.9 0 1 0.6 0.9 0.8 0.5 1-0.1 0.9-0.5 0.3-1-0.2-1-0.7-0.6-1 0"/>
<circle class="f1" cx="1057.7" cy="162.1" r="2.2"/>
<path class="g2" d="M1053.2 165.4l1.8 0.9 1.3 1.5 0.8 1.8 0.1 2-0.6 1.9-1.4 1.5-1.9 0.7-2-0.2-1.7-1-1-1.8 0.1-2 1-1.7 1.8-0.8 2 0.2 1.5 1.4 0.3 1.9-1.1 1.7-1.9 0.6-1.8-0.8-1-1.7 0.6-1.9 1.8-0.9"/>
<circle class="f2" cx="1052.5" cy="171.1" r="3.6"/>
<path class="g3" d="M1042 174l0.7-2.9-0.2-3-1.3-2.7-2.2-2.1-2.8-1-3 0.2-2.6 1.5-1.7 2.5-0.2 3 1.3 2.7 2.5 1.6 3 0.1 2.5-1.7 1.1-2.8-0.9-2.9-2.4-1.7-3 0.3-2.2 2.1-0.4 3 1.5 2.6 2.9 0.8 2.7-1.1 1.2-2.8-1.3-2.7-2.8-0.9-2.8 1.2"/>
<circle class="f3" cx="1035.3" cy="169.9" r="6"/>
<path class="g4" d="M1021.4 180.4l3.8 1.2 3.2 2.4 2.2 3.4 0.9 3.9-0.7 3.9-2.2 3.3-3.4 2.1-4 0.4-3.7-1.5-2.6-3.1-0.6-3.9 1.4-3.7 3.3-2.4 4-0.2"/>
<path class="y0 w4" d="M1023 186.2l3.3 2.2 1.5 3.7-1.5 3.7"/>
<path class="y1 w4" d="M1026.3 195.8l-3.5 1.9-4-0.4-2.3-3.2"/>
<path class="y2 w4" d="M1016.5 194.1l0.6-4 3.1-2.4 4 0.2 2.6 3"/>
<path class="y3 w4" d="M1026.8 190.9l-0.6 3.9-3.6 1.8-3.5-2.1-0.4-3.9 2.6-3.1"/>
<path class="y4 w4" d="M1021.3 187.5l4-0.3 2.9 2.7-0.6 4-3.3 2.2-3.6-1.7-0.4-4 3.5-2.1"/>
<path class="y5 w4" d="M1023.8 188.3l3.5 1.9-0.3 4-3.6 1.8-3.3-2.2 0.2-4 3.9-0.8 1.8 3.5-2.1 3.4-3.9-0.6-0.3-4"/>
<path class="y6 w4" d="M1019.7 191.3l3.5-1.8 3.2 2.5-1.8 3.6-3.9-0.8 0.3-4 3.9 0.4-0.8 4-3.7-1.4 1.7-3.6 3.9 0.9-1.7 3.6-3.8-1.2 0.5-4 4 0.5-1.1 3.8-3.5-2 1.8-3.6 3.4 2.1-2.8 2.8-2.2-3.3 3.9-0.9"/>
<path class="g6" d="M1002.6 201.4l0.3-6 1.9-5.7"/>
<path class="g5" d="M1004.8 189.7l2.8-4.1 2.2-4.5 1.5-4.8 0.7-4.9-0.3-5-1.3-4.8"/>
<path class="g3" d="M1010.4 161.6l-1.5-2.7-1.8-2.4-2.1-2.1-2.5-1.7-2.7-1.2-3-0.5"/>
<path class="g1" d="M996.8 151l-1 0-1 0.2-0.9 0.4-0.9 0.5-0.7 0.7-0.6 0.8"/>
<circle class="d" cx="988.2" cy="149.1" r="2.9"/>
<path class="g1" d="M991.7 153.6l-0.4 0.9-0.1 1 0.2 1 0.5 0.9 0.7 0.7 0.9 0.4 1 0 0.9-0.3 0.8-0.7 0.3-1-0.1-1-0.5-0.8-0.9-0.5-1 0.1-0.9 0.5-0.4 0.9 0.2 1 0.7 0.8 1 0.1 0.8-0.6"/>
<circle class="f1" cx="994.3" cy="156.1" r="2.1"/>
<path class="g3" d="M996.8 151l-3 0.2-2.8 0.9"/>
<path class="g2" d="M991 152.1l-1.7 1.2-1.8 0.8-1.9 0.6-2 0.2-2-0.3-1.8-0.7-1.6-1.2-1.3-1.6"/>
<path class="g1" d="M976.9 151.1l-0.3-0.9-0.5-0.9-0.6-0.8-0.7-0.6-0.9-0.6-1-0.3"/>
<circle class="d" cx="976.2" cy="142.7" r="2.8"/>
<path class="g1" d="M972.9 147l-0.9-0.1-1 0.2-0.9 0.5-0.7 0.7-0.5 0.9-0.1 1 0.3 0.9 0.6 0.8 0.8 0.5 1 0.1 1-0.4 0.6-0.8 0.2-1-0.3-0.9-0.8-0.7-1-0.1-0.9 0.5-0.4 0.9 0.1 1 0.7 0.7"/>
<circle class="f1" cx="971.7" cy="150.3" r="2.2"/>
<path class="g2" d="M976.9 151.1l-0.7-1.8 0-2 0.6-1.9 1.2-1.6 1.8-0.9 2-0.2 1.9 0.7 1.4 1.4 0.5 1.9-0.4 2-1.3 1.5-1.9 0.5-2-0.5-1.3-1.5-0.2-2 0.9-1.8 1.8-0.9 1.9 0.5 1.1 1.8-0.5 1.9-1.6 1.2-1.9-0.3"/>
<circle class="f2" cx="981.7" cy="146.6" r="4"/>
<path class="g3" d="M991 152.1l-2.5 1.7-1.8 2.4-1 2.9 0.1 3 1.2 2.7 2.1 2.1 2.8 1.1 3-0.3 2.6-1.5 1.6-2.6 0.1-3-1.4-2.6-2.6-1.6-3 0.1-2.4 1.8-1.2 2.7 0.9 2.8 2.5 1.7 2.9-0.6 1.8-2.5-0.1-3-2.2-2-3 0.3-2 2.2 0.5 2.9 2.5 1.7"/>
<circle class="f3" cx="993.2" cy="160.7" r="5.3"/>
<path class="g5" d="M1010.4 161.6l-2.4-4.4-3.4-3.7"/>
<path class="g4" d="M1004.6 153.5l-3.4-2.2-3-2.6-2.5-3.1-1.8-3.6-1.1-3.8-0.2-4"/>
<path class="g2" d="M992.6 134.2l0.4-2 0.7-1.9 1.1-1.7 1.3-1.5 1.6-1.2 1.9-0.7 2-0.3 1.9 0.3"/>
<path class="g1" d="M1003.5 125.2l0.9 0.5 1 0.3 1 0.1 1 0 0.9-0.2 1-0.4"/>
<circle class="d" cx="1010.4" cy="131" r="3.1"/>
<path class="g1" d="M1009.3 125.5l0.7-0.6 0.6-0.8 0.4-1 0-1-0.3-0.9-0.6-0.8-0.8-0.6-1-0.1-1 0.2-0.8 0.7-0.4 0.9 0.1 1 0.5 0.8 0.9 0.5 1-0.1 0.8-0.6 0.4-0.9-0.3-1-0.7-0.7-1-0.1"/>
<circle class="f1" cx="1008.2" cy="122.1" r="2.2"/>
<path class="g2" d="M1003.5 125.2l1.8 0.9 1.4 1.4 0.9 1.8 0.2 2-0.7 1.9-1.3 1.5-1.8 0.8-2-0.1-1.8-1-1-1.7 0-2 0.9-1.7 1.8-1 2 0.2 1.5 1.3 0.4 2-1.1 1.7-1.9 0.6-1.8-1-0.5-1.9 0.7-1.9 1.7-1"/>
<circle class="f2" cx="1003.2" cy="130.5" r="4.1"/>
<path class="g4" d="M992.6 134.2l0.8-4 1.9-3.5"/>
<path class="g3" d="M995.3 126.7l2.1-2.1 1.8-2.5 1.4-2.6 0.9-2.9 0.3-3-0.3-2.9"/>
<path class="g1" d="M1001.5 110.7l-0.3-1-0.4-0.9-0.6-0.8-0.7-0.7-0.9-0.5-0.9-0.4"/>
<circle class="d" cx="1001.2" cy="101.7" r="2.8"/>
<path class="g1" d="M997.7 106.4l-1-0.1-1 0.2-0.9 0.4-0.7 0.7-0.5 0.9-0.2 0.9 0.3 1 0.6 0.8 0.8 0.5 1 0.1 1-0.3 0.6-0.8 0.2-1-0.3-0.9-0.7-0.7-1-0.1-0.9 0.4-0.5 0.9 0.2 1 0.8 0.6"/>
<circle class="f1" cx="996.1" cy="109.6" r="2.1"/>
<path class="g3" d="M1001.5 110.7l-0.9-2.9-1.7-2.5"/>
<path class="g2" d="M998.9 105.3l-1.4-1.3-1.3-1.6-1-1.7-0.6-1.9-0.2-2 0.3-2 0.8-1.8 1.2-1.6"/>
<path class="g1" d="M996.7 91.4l0.8-0.6 0.8-0.6 0.6-0.8 0.5-0.9 0.3-0.9 0.1-1"/>
<circle class="d" cx="1005.5" cy="88.7" r="2.9"/>
<path class="g1" d="M999.8 86.6l-0.1-1-0.4-0.9-0.7-0.8-0.8-0.5-1-0.3-1 0.2-0.9 0.4-0.6 0.8-0.3 1 0.2 1 0.6 0.8 0.9 0.4 1 0 0.8-0.6 0.5-0.9-0.2-1-0.6-0.7-1-0.2-0.9 0.4-0.5 0.9"/>
<circle class="f1" cx="996" cy="86.3" r="2.2"/>
<path class="g2" d="M996.7 91.4l1.7-1.1 1.9-0.5 2 0.1 1.8 0.9 1.3 1.5 0.6 1.9-0.2 2-1.1 1.7-1.7 1-2 0-1.8-1-1-1.7 0.1-2 1.2-1.6 1.9-0.7 1.9 0.5 1.3 1.5 0 2-1.2 1.6-2 0.5-1.7-1-0.5-1.9"/>
<circle class="f2" cx="1002" cy="95.9" r="4"/>
<path class="g3" d="M998.9 105.3l-2.2-2-2.7-1.2-3-0.1-2.9 0.9-2.2 2-1.2 2.8 0.1 3 1.5 2.6 2.6 1.5 3 0.1 2.6-1.6 1.3-2.7-0.5-3-2.1-2.1-3-0.3-2.8 1.1-1.7 2.5 0 3 1.8 2.3 3 0.6 2.6-1.5 1.2-2.8-1.3-2.7-2.9-0.8-2.8 1.2-1.2 2.7"/>
<circle class="f3" cx="988.3" cy="110.6" r="5.8"/>
<path class="g4" d="M995.3 126.7l2.8-2.9 3.5-1.8 4-0.6 3.9 0.7 3.4 2.2 2.3 3.2 0.9 3.9-0.9 4-2.4 3.1-3.6 1.7-4-0.1-3.5-2.1-1.9-3.5 0.2-4"/>
<path class="y0 w4" d="M1000 130.5l2.2-3.3 3.7-1.6 3.9 0.7"/>
<path class="y1 w4" d="M1009.8 126.3l2.4 3.2-0.3 4-2.9 2.7"/>
<path class="y2 w4" d="M1009 136.2l-4 0-3-2.7 0.1-4 3.2-2.3"/>
<path class="y3 w4" d="M1005.3 127.2l3.8 1.2 1.1 3.9-2.1 3.4-4 0.2-2.1-3.4"/>
<path class="y4 w4" d="M1002 132.5l1.2-3.8 3.7-1.4 3.2 2.5-0.1 4-3.1 2.4-3.9-1-1.3-3.8"/>
<path class="y5 w4" d="M1001.7 131.4l2.9-2.8 3.9 1 0.4 4-3.1 2.5-3.5-2 0.7-4 4-0.4 1 3.9-3.8 1.4-2.9-2.8"/>
<path class="y6 w4" d="M1001.3 132.2l1-3.8 4-0.2 1.9 3.5-3 2.7-3.5-2 0.5-4 4 0.3 0.8 3.9-3.9 0.7-1.2-3.8 3.6-1.8 1 3.9-4 0.7-1-3.9 3.7-1.5 1.7 3.6-4 0.4-0.2-4 4 0.1 0.3 4-3.9 0.5"/>
<path class="g5" d="M1004.6 153.5l-4.2-2.7-4.9-1.2-5 0.5-4.4 2.2-3.3 3.8-1.4 4.8 0.7 4.9 2.9 4.1 4.4 2.3 5-0.2 4.2-2.7 2.1-4.6-0.7-4.9-3.5-3.7"/>
<path class="y0 w5" d="M996.5 156.1l-4.9-0.8-4.5 2.2-2.6 4.2"/>
<path class="y1 w5" d="M984.5 161.7l0.7 5 3.6 3.5 4.9 0.9"/>
<path class="y2 w5" d="M993.7 171.1l4.5-2.3 2.3-4.4-2-4.6-4.7-1.7"/>
<path class="y3 w5" d="M993.8 158.1l-4.3 2.7-1.1 4.8 3.2 3.8 5 0.5 3.2-3.9"/>
<path class="y4 w5" d="M999.8 166l-0.7-4.9-4.4-2.5-4.1 2.9 0.8 4.9 4.6 1.9 4.5-2.3 0.3-4.9"/>
<path class="y5 w5" d="M1000.8 161.1l-4.3-2.6-4.4 2.4 0.5 5 4.7 1.7 3.9-3.1-2-4.6-5 0.2-1 4.9 4.2 2.8 4.5-2.2"/>
<path class="y6 w5" d="M1001.9 165.6l-0.2-5-4.8-1.2-2.7 4.2 4.1 2.9 4.2-2.7-0.8-4.9-4.9-0.5-1.9 4.6 4.7 1.6 0.9-4.9-4.4-2.4-1.8 4.7 4 2.9 2.8-4.1-4.6-2-1.9 4.6 4.6 1.9 0.2-5-5-0.5-0.4 4.9 5 0.1"/>
<path class="g6" d="M1004.8 189.7l3.4-5 4.8-3.5 5.8-1.7 5.9 0.6 5.3 2.9 3.6 4.9 1.1 5.9-1.7 5.7-4.3 4.3-5.7 1.6-5.8-1.7-4-4.4-0.8-6 2.7-5.3"/>
<path class="y0 w6" d="M1015.1 188l5.4-2.7 5.8 1.5 4 4.4"/>
<path class="y1 w6" d="M1030.3 191.2l0.8 6-3.6 4.8-5.9 1"/>
<path class="y2 w6" d="M1021.6 203l-5.1-3.1-2-5.7 2.3-5.5 5.6-2.1"/>
<path class="y3 w6" d="M1022.4 186.6l5.5 2.3 2.2 5.6-2.2 5.5-5.6 2.1-4.8-3.6"/>
<path class="y4 w6" d="M1017.5 198.5l0.4-5.9 4.7-3.7 5.8 1.5 1 5.9-4.9 3.5-5.4-2.5-1.2-5.9"/>
<path class="y5 w6" d="M1017.9 191.4l4.7-3.6 5.2 3.1-1.1 5.8-5.7 1.7-4.2-4.2 1.4-5.9 5.8-1.5 3.9 4.5-4 4.5-4.8-3.7"/>
<path class="y6 w6" d="M1019.1 192.1l2.2-5.6 6 0.3 1.8 5.7-5.2 3-3.6-4.8 4.5-3.9 4.3 4.2-4.6 3.8-3.7-4.7 4.7-3.9 3.5 4.9-5.5 2.3-1-6 5.8-1.6 0.5 6-5.8-1.2 0.8-5.9 5.9-0.3 0.6 6-5.8 1.5-1.8-5.7"/>
</svg></div>
  <div class="vs"><div class="ar" style="left:4px;top:7px;border-bottom:4px solid #333;border-top:0"></div><div class="thumb" style="left:0;top:47px;width:16px;height:15px"></div><div class="ar" style="left:4px;top:710px;border-top:4px solid #333;border-bottom:0"></div></div>
  <div class="hs"><div class="ar" style="left:6px;top:4px;border-right:4px solid #333;border-left:0"></div><div class="thumbh" style="left:94px;top:0;width:15px;height:16px"></div><div class="ar" style="left:734px;top:4px;border-left:4px solid #333;border-right:0"></div></div>
  <svg style="left:753px;top:731px" width="9" height="9" viewBox="0 0 9 9" shape-rendering="crispEdges"><path d="M7 1.500h1M5 3.500h1M7 3.500h1M3 5.500h1M5 5.500h1M7 5.500h1M1 7.500h1M3 7.500h1M5 7.500h1M7 7.500h1" stroke="#a0a0a0"/></svg>
 </div>
 <div id="sb">
  <div class="sp" style="left:0;width:249px;padding-left:1px">Редактирование программы</div>
  <div class="sp" style="left:252px;width:67px;padding-left:4px;letter-spacing:-.4px">12 :&nbsp; 34</div>
  <div class="sp" style="left:322px;width:67px;padding-left:4px;letter-spacing:-.5px">92 : 621</div>
  <svg style="left:1536px;top:8px" width="13" height="13" viewBox="0 0 13 13"><path d="M1 12.5L12.5 1M5 12.5L12.5 5M9 12.5L12.5 9" stroke="#9a9a9a" stroke-width="1.2"/><path d="M2 12.8L12.8 2M6 12.8L12.8 6M10 12.8L12.8 10" stroke="#fff" stroke-width="1"/></svg>
 </div>
</div>
</div>
</body></html>
